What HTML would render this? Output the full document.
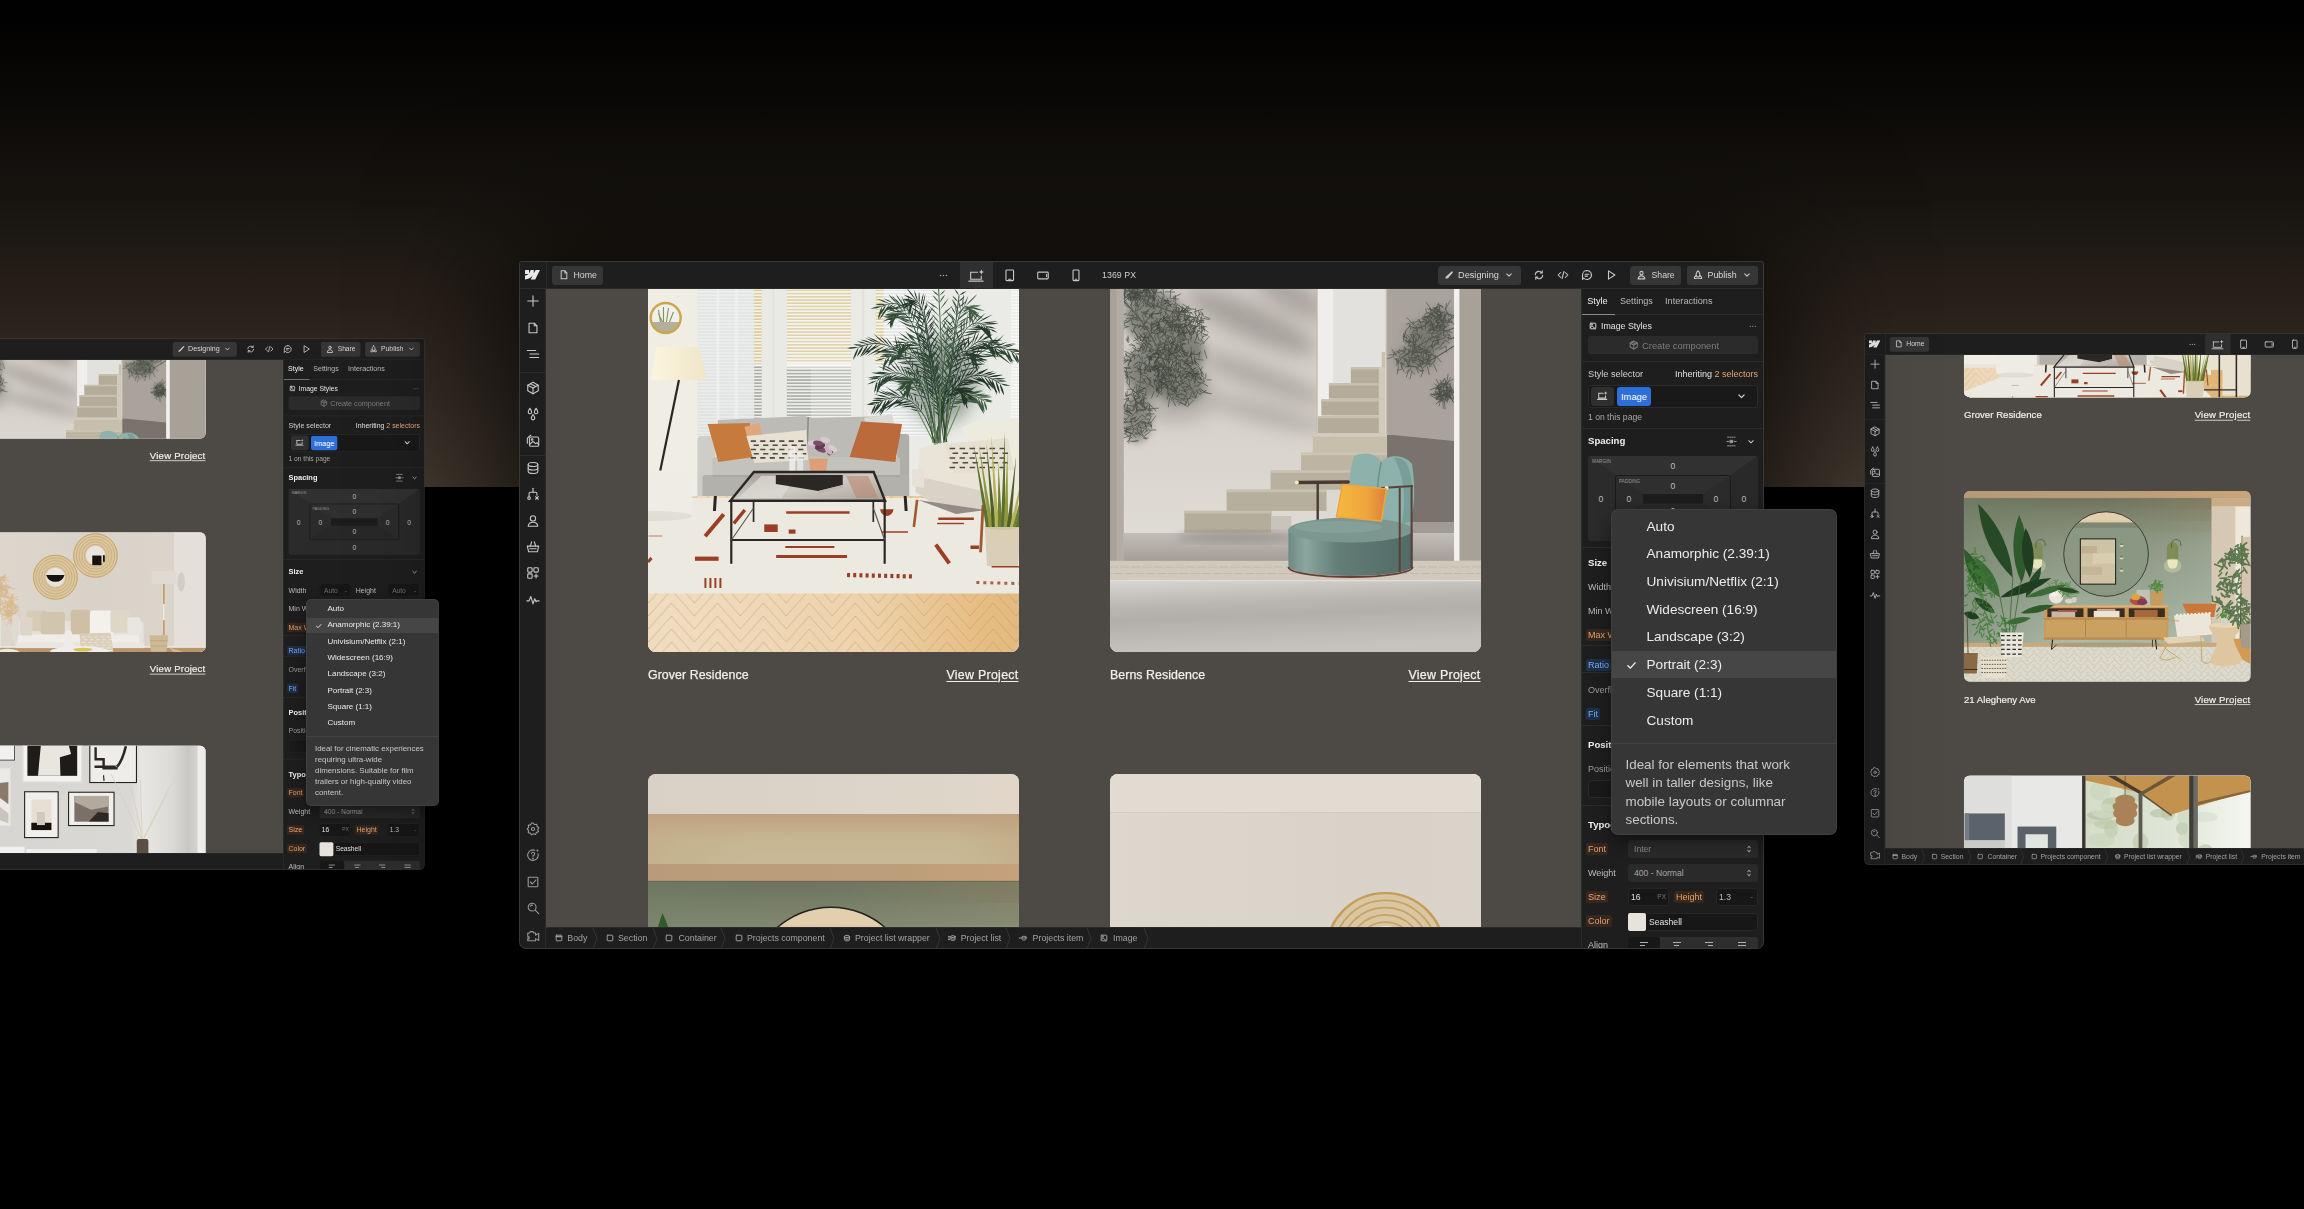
<!DOCTYPE html><html lang="en"><head><meta charset="utf-8"><title>Webflow Designer - Aspect ratio</title><style>
*{box-sizing:border-box;margin:0;padding:0}
html,body{width:2304px;height:1209px;overflow:hidden;background:#000}
body{position:relative;font-family:"Liberation Sans",sans-serif;color:#d9d9d9;-webkit-font-smoothing:antialiased}
.bg{position:absolute;left:0;top:0;width:2304px;height:487px;background:linear-gradient(180deg,#000 0%,#050403 10%,#0b0907 20.5%,#171410 41%,#272019 61.6%,#352d25 82%,#43392e 100%)}
.win{position:absolute;width:1243.4px;height:685.6px;background:#1e1e1e;border-radius:2px 2px 6px 6px;transform-origin:0 0;box-shadow:0 0 0 1px #383838}
.win.m{box-shadow:0 0 0 1px #383838,0 0 130px 24px rgba(0,0,0,.72)}
.clip{position:absolute;left:0;top:0;width:1243.4px;height:685.6px;border-radius:2px 2px 6px 6px;overflow:hidden}
.abs{position:absolute}
.top{position:absolute;left:0;top:0;width:1244px;height:27px;background:#1e1e1e;border-bottom:1px solid #2b2b2b}
.side{position:absolute;left:0;top:27px;width:26px;height:659px;background:#1e1e1e;border-right:1px solid #2b2b2b}
.canvas{position:absolute;left:26px;top:27px;width:1036px;height:638px;background:#4d4a46;overflow:hidden}
.crumbs{position:absolute;left:26px;top:665px;width:1036px;height:21px;background:#1e1e1e;border-top:1px solid #2b2b2b;font-size:9px;color:#a3a3a3;white-space:nowrap}
.panel{position:absolute;left:1061px;top:27px;width:183px;height:659px;background:#1e1e1e;border-left:1px solid #2b2b2b;overflow:hidden;font-size:9px}
.ic{position:absolute;stroke:#c8c8c8;fill:none;stroke-width:1.1;stroke-linecap:round;stroke-linejoin:round;overflow:visible}
.btn{position:absolute;background:#363636;border-radius:3px;height:18.5px;top:4px;font-size:9.2px;color:#d6d6d6;line-height:18px;white-space:nowrap}
.t{position:absolute;white-space:nowrap;line-height:1}
.photo{position:absolute;overflow:hidden;border-radius:8px;background:#ccc}
.photo svg{position:absolute;left:0;top:0;width:100%;height:100%;display:block}
.cap{position:absolute;font-size:12.4px;color:#f3efe9;white-space:nowrap;line-height:14px;-webkit-text-stroke:.25px #f3efe9;letter-spacing:.05px}
.cap.r{text-decoration:underline;text-underline-offset:1.5px;text-align:right;letter-spacing:.28px}
.hr{position:absolute;left:0;width:182px;height:1px;background:#2b2b2b}
.lbl{position:absolute;left:6px;color:#bdbdbd;white-space:nowrap;line-height:12px;font-size:9px}
.lbl.o{color:#e3a071;background:#36271d;border-radius:2px;padding:0 2px;margin-left:-2px}
.lbl.b{color:#7aaaf2;background:#1d2f49;border-radius:2px;padding:0 2px;margin-left:-2px}
.sec{position:absolute;left:6px;font-weight:700;color:#f0f0f0;font-size:9.6px;line-height:12px;white-space:nowrap}
.fld{position:absolute;background:#2a2a2a;border-radius:3px;height:18px;color:#8d8d8d;line-height:18px;font-size:8.6px;padding-left:6px;white-space:nowrap}
.fld.d{background:#171717;color:#e2e2e2;box-shadow:inset 0 0 0 1px #262626}
.dd{position:absolute;background:#363636;box-shadow:0 0 0 1px #3f3f3f,0 6px 18px rgba(0,0,0,.45);overflow:hidden;color:#ececec}
.dd .it{position:absolute;left:0;width:100%;white-space:nowrap}
.dd .hl{position:absolute;left:0;width:100%;background:#464646}
.dd .ds{position:absolute;color:#c9c9c9;white-space:nowrap}
.dd .ln{position:absolute;left:0;width:100%;height:1px;background:#424242}
.num{position:absolute;color:#bfbfbf;font-size:8.6px;line-height:10px;width:20px;text-align:center}
</style></head><body><div class="bg"></div><div class="win" style="left:-537.0px;top:339.2px;transform:scale(0.773)"><div class="clip"><div class="canvas"><div class="photo" style="left:564px;top:-53.29999999999998px;width:370.5px;height:155px;"><svg viewBox="0.00 186.35 438.00 183.30" preserveAspectRatio="none"><defs><linearGradient id="p1_stW" x1="0" y1="0" x2="0" y2="1"><stop offset="0" stop-color="#cbc6bf"/><stop offset=".45" stop-color="#d2cdc6"/><stop offset=".8" stop-color="#dfdbd5"/><stop offset="1" stop-color="#dcd8d2"/></linearGradient><linearGradient id="p1_stC" x1="0" y1="0" x2=".25" y2="1"><stop offset="0" stop-color="#d9d7d4"/><stop offset=".38" stop-color="#b9b5b1"/><stop offset=".55" stop-color="#b2aeaa"/><stop offset="1" stop-color="#c6c3bf"/></linearGradient><linearGradient id="p1_stF" x1="0" y1="0" x2="0" y2="1"><stop offset="0" stop-color="#c2beb8"/><stop offset="1" stop-color="#a39d97"/></linearGradient><linearGradient id="p1_stY" x1="0" y1="0" x2="1" y2="0"><stop offset="0" stop-color="#f4b83f"/><stop offset=".6" stop-color="#efa53c"/><stop offset="1" stop-color="#dc7f3a"/></linearGradient><linearGradient id="p1_stSe" x1="0" y1="0" x2="1" y2="0"><stop offset="0" stop-color="#6f8a84"/><stop offset=".14" stop-color="#8aa69f"/><stop offset=".4" stop-color="#637d77"/><stop offset="1" stop-color="#536a65"/></linearGradient><filter id="p1_stB" x="-30%" y="-30%" width="160%" height="160%"><feGaussianBlur stdDeviation="9"/></filter><filter id="p1_stB2" x="-30%" y="-30%" width="160%" height="160%"><feGaussianBlur stdDeviation="4"/></filter></defs><rect x="0.0" y="0.0" width="438.0" height="556.0" fill="url(#p1_stW)" /><g filter="url(#p1_stB)" opacity=".55"><ellipse cx="175.0" cy="226.0" rx="70.0" ry="16.0" fill="#85807a" transform="rotate(24 175 226)"/><ellipse cx="215.0" cy="200.0" rx="40.0" ry="14.0" fill="#8a857f" transform="rotate(30 215 200)"/><ellipse cx="185.0" cy="282.0" rx="70.0" ry="11.0" fill="#8f8a84" transform="rotate(20 185 282)"/><ellipse cx="190.0" cy="318.0" rx="65.0" ry="9.0" fill="#948f89" transform="rotate(14 190 318)"/><ellipse cx="100.0" cy="300.0" rx="40.0" ry="26.0" fill="#9a958f" /></g><g filter="url(#p1_stB2)" opacity=".62"><ellipse cx="78.0" cy="222.0" rx="30.0" ry="26.0" fill="#555a50" /><ellipse cx="96.0" cy="255.0" rx="32.0" ry="30.0" fill="#4f544a" /><ellipse cx="72.0" cy="275.0" rx="24.0" ry="26.0" fill="#555a50" /><ellipse cx="104.0" cy="288.0" rx="24.0" ry="20.0" fill="#555a50" /><ellipse cx="60.0" cy="322.0" rx="15.0" ry="24.0" fill="#5a5f55" /><ellipse cx="64.0" cy="197.0" rx="18.0" ry="9.0" fill="#5a5f55" /></g><path d="M76.8 235.6 l-4.5 4.8 M69.2 209.9 l8.0 0.7 M74.1 228.5 l5.8 -0.2 M86.4 198.5 l-2.5 -3.0 M55.3 195.4 l-7.4 -1.1 M71.2 208.8 l0.3 -6.5 M73.2 219.7 l3.9 -4.4 M69.2 189.3 l-1.9 -8.3 M52.4 230.4 l-8.1 2.9 M82.2 209.0 l2.8 3.2 M95.6 211.0 l-3.4 -3.4 M55.1 214.2 l-3.9 5.2 M48.7 201.6 l-3.6 -7.8 M94.7 193.1 l-1.9 -3.5 M95.1 193.9 l5.3 -3.6 M71.7 202.5 l3.2 -5.6 M73.2 221.9 l5.4 -7.1 M99.3 228.2 l-3.3 2.1 M67.4 238.6 l2.3 -2.3 M69.9 211.1 l-1.0 -4.9 M98.2 196.1 l-9.0 -0.3 M71.7 222.2 l-2.6 -1.9 M81.6 231.9 l-3.0 -2.5 M103.8 221.9 l-3.4 8.1 M90.7 204.6 l-5.9 1.5 M59.7 198.0 l-6.3 -2.4 M96.2 207.7 l-6.6 3.1 M76.4 230.3 l6.1 -0.9 M71.7 214.1 l-5.6 3.3 M99.9 217.8 l-2.3 -2.5 M59.8 201.3 l-2.2 -4.6 M67.7 191.8 l3.3 0.5 M60.9 190.4 l-0.0 5.7 M59.9 206.3 l-3.2 3.7 M58.2 230.8 l-1.6 5.0 M75.7 210.5 l-6.7 -3.1 M69.4 227.3 l1.5 -4.2 M83.1 232.1 l-1.2 -3.4 M66.9 229.6 l2.8 -4.9 M83.1 205.9 l-3.6 5.9 M91.1 202.6 l0.6 3.7 M61.3 212.7 l2.8 -7.5 M81.8 228.5 l2.4 -6.4 M81.5 199.6 l3.3 3.5 M79.5 201.0 l-3.1 4.5 M57.1 223.7 l3.5 -1.9 M106.1 215.8 l6.5 -6.1 M46.4 225.9 l3.9 -1.9 M74.2 189.4 l-3.2 -5.2 M70.5 230.9 l0.5 3.4 M60.4 207.1 l1.2 -3.0 M96.9 201.7 l7.4 -3.9 M94.6 202.5 l7.4 0.6 M83.3 228.5 l-3.2 -5.3 M48.4 229.0 l-3.8 -3.3 M74.5 241.0 l-7.6 1.1 M66.5 225.0 l-7.7 -1.7 M88.5 236.9 l6.9 -3.7 M76.2 212.8 l-5.6 -5.9 M90.9 219.5 l-0.7 6.1 M55.5 224.0 l0.5 -3.0 M85.7 218.4 l2.4 2.4 M104.2 210.9 l5.2 3.1 M67.8 229.4 l-4.1 5.5 M58.6 206.3 l1.8 4.6 M92.0 229.6 l-1.1 -5.2 M86.9 220.7 l-4.6 4.7 M79.0 198.1 l2.1 -6.4 M57.2 222.1 l-7.2 0.2 M51.6 226.2 l-4.3 1.1 M49.0 209.8 l5.0 2.4 M48.2 226.8 l4.8 -2.0 M97.8 200.1 l-0.4 5.8 M95.6 232.6 l-4.4 -7.1 M81.9 192.9 l-0.7 -6.3 M94.6 228.0 l3.9 0.1 M76.0 209.2 l3.0 2.0 M84.9 206.9 l8.0 1.2 M96.3 232.8 l-3.7 -7.1 M98.3 208.7 l1.0 -3.1 M77.5 195.1 l-0.8 -3.6 M74.8 187.9 l4.6 1.9 M48.2 205.0 l0.2 4.1 M75.0 237.0 l0.1 -5.4 M61.4 228.0 l-3.2 4.5 M94.6 224.9 l5.4 -0.9 M74.8 203.8 l-2.7 -7.0 M64.4 197.1 l-6.8 0.7 M84.9 208.5 l6.2 4.2 M94.9 204.9 l-6.9 2.6 M81.5 228.3 l2.0 6.2 M68.9 227.4 l-3.2 -8.1 M67.4 237.5 l-6.9 4.2 M60.7 207.7 l0.6 3.1 M55.4 217.2 l2.4 4.6 M62.7 237.2 l5.5 7.0 M50.4 217.8 l-7.8 1.6 M85.4 196.2 l-7.3 0.9 M87.6 201.1 l-0.9 -8.7 M60.0 217.7 l0.7 7.3 M60.8 190.5 l2.7 -3.5 M81.0 228.2 l2.8 6.7 M94.1 194.4 l-0.3 8.2 M66.9 231.8 l-0.5 -3.5 M99.4 229.1 l-1.3 5.0 M52.0 203.9 l5.0 0.2 M54.5 222.6 l1.6 6.3 M94.2 210.2 l-3.6 -1.0 M71.0 237.6 l6.3 5.4 M83.4 210.3 l4.9 -1.9 M78.9 190.9 l-2.0 6.8 M58.7 194.3 l-0.7 7.5 M100.5 209.5 l-3.6 -0.8 M56.0 215.6 l-1.4 -6.9 M62.5 210.2 l-4.1 -5.4 M88.0 238.8 l-2.1 -3.1 M85.9 210.6 l-3.6 6.4 M55.5 203.0 l-3.5 -4.6 M69.9 225.9 l6.6 3.0 M75.7 194.4 l-0.3 -5.1 M73.0 232.3 l2.3 -2.3 M59.1 214.6 l0.6 -5.1 M64.9 230.4 l-7.4 -2.0 M57.3 235.6 l3.5 3.0 M83.7 220.5 l1.3 -7.2 M80.5 226.2 l-6.5 3.7 M86.1 192.8 l-3.2 -2.1 M63.7 222.3 l-6.3 -1.1 M79.7 228.4 l0.6 -3.1 M84.9 190.0 l5.0 -1.7 M51.9 208.1 l-5.9 -6.6 M68.2 200.9 l3.8 -4.5 M53.1 200.8 l7.6 0.1 M63.2 198.3 l-5.7 -0.9 M83.1 234.1 l5.8 1.4 M62.0 200.2 l-8.0 -3.5 M84.2 208.5 l1.8 -6.5 M93.2 220.3 l0.4 3.4 M45.1 208.5 l-3.6 7.4 M71.0 205.4 l4.2 -5.1 M99.3 204.5 l-0.3 -5.1 M85.8 189.7 l3.6 -4.3 M76.0 195.5 l2.5 2.1 M87.6 220.9 l3.2 5.1 M67.6 195.5 l-6.1 3.2 M67.7 233.0 l0.2 -5.4 M87.8 239.1 l-1.0 -5.1 M59.0 229.8 l-3.6 -2.5 M89.6 215.2 l0.8 -3.8 M61.3 218.1 l1.0 3.9 M83.5 257.0 l3.6 0.6 M106.7 268.3 l2.9 1.1 M74.4 256.1 l-1.0 -3.2 M77.4 260.8 l8.7 1.5 M97.0 259.0 l-3.9 0.6 M80.6 237.7 l2.4 2.3 M92.5 234.4 l1.4 -5.6 M112.0 243.3 l0.0 4.6 M105.7 228.1 l-2.0 2.9 M81.2 223.1 l-2.5 -1.7 M105.0 251.7 l1.5 2.8 M120.9 258.1 l3.4 -2.5 M118.2 246.6 l2.8 -8.0 M100.8 248.0 l-2.2 6.3 M104.5 247.1 l-2.2 7.8 M111.0 262.4 l-3.6 6.1 M107.8 244.6 l-0.5 -7.4 M108.0 230.8 l4.6 -2.4 M81.0 257.3 l1.1 -5.8 M93.3 262.3 l-1.2 -6.5 M89.8 231.9 l-3.9 0.3 M93.7 245.6 l-7.4 1.6 M90.3 241.6 l0.6 8.0 M75.1 228.1 l4.0 -4.1 M118.2 234.5 l-2.6 4.5 M114.3 258.3 l3.5 -1.0 M84.8 245.8 l6.0 3.4 M95.4 256.6 l3.9 5.6 M91.8 248.3 l1.1 8.7 M99.8 272.1 l-6.7 3.7 M71.1 233.8 l-4.0 -0.9 M99.2 257.6 l1.7 -3.3 M128.0 254.4 l2.6 7.9 M114.9 260.5 l1.4 7.9 M74.6 234.1 l0.6 -8.2 M80.0 269.2 l-3.5 1.2 M108.4 230.1 l1.7 -3.9 M72.5 245.0 l-0.5 -3.4 M81.6 267.2 l5.7 2.7 M93.0 230.6 l-4.0 -5.3 M99.5 267.3 l5.0 -0.1 M86.1 253.7 l0.8 3.9 M121.3 239.2 l6.3 -6.3 M70.0 231.2 l-5.4 -1.2 M125.6 240.9 l5.6 -1.8 M98.2 231.1 l8.5 -0.1 M86.4 278.0 l1.4 3.3 M91.8 234.0 l-6.8 -0.8 M123.4 256.5 l-0.9 5.5 M78.6 271.4 l-0.1 -4.7 M109.8 259.9 l-2.9 1.8 M112.0 271.5 l-2.7 -8.4 M126.6 246.4 l-2.8 2.8 M86.2 268.9 l-6.2 -1.0 M75.0 271.4 l-1.3 5.6 M118.1 232.4 l-1.3 4.3 M96.2 247.2 l4.2 4.5 M81.5 247.3 l4.0 1.3 M97.9 229.7 l7.6 -1.0 M101.3 249.3 l1.2 2.8 M77.0 257.2 l6.0 2.0 M110.8 259.3 l0.1 7.8 M79.9 257.5 l5.4 1.5 M75.6 232.3 l6.7 -4.1 M95.2 261.0 l0.4 -7.7 M64.1 248.5 l-4.4 -1.5 M97.2 253.4 l-5.2 -6.6 M114.3 238.6 l-4.3 -7.4 M105.3 228.6 l-5.2 3.1 M101.9 261.3 l-3.6 -8.2 M74.2 244.4 l-3.4 4.6 M102.5 230.9 l3.8 -1.0 M85.3 269.9 l-6.9 4.3 M110.4 224.4 l-2.4 -2.1 M72.5 240.0 l-4.7 0.4 M86.8 222.3 l5.6 4.2 M78.2 265.6 l6.9 -5.3 M85.7 239.6 l3.6 -2.0 M72.0 268.3 l-1.9 4.2 M126.4 241.0 l-2.2 4.9 M92.5 260.7 l-0.0 8.9 M109.3 256.9 l1.1 3.3 M66.1 245.8 l3.6 -5.8 M96.0 248.0 l-1.8 8.6 M110.9 256.6 l-4.6 0.5 M87.9 248.1 l0.8 8.7 M115.0 272.5 l3.9 8.1 M82.5 228.5 l2.1 2.6 M95.8 237.4 l2.9 7.4 M100.3 245.3 l6.0 -1.5 M86.8 256.6 l-6.9 5.7 M92.6 260.7 l2.3 3.0 M75.5 273.0 l3.7 1.9 M126.5 238.9 l4.4 -0.6 M74.8 273.2 l-7.2 0.7 M93.1 254.0 l-4.2 6.2 M100.1 227.8 l-6.1 1.4 M71.8 257.8 l2.1 -3.6 M67.8 233.8 l2.4 -3.3 M125.3 243.7 l2.3 4.0 M97.3 256.6 l5.4 -0.7 M103.0 242.7 l8.2 0.7 M104.2 221.3 l-2.4 -5.7 M96.0 240.9 l-5.5 -1.4 M111.0 268.5 l-2.7 5.4 M81.6 262.1 l-4.2 5.1 M127.7 246.5 l5.2 -6.1 M87.3 278.9 l-0.5 3.7 M65.9 249.9 l-3.7 5.8 M88.2 278.9 l-5.6 1.7 M63.8 244.5 l6.1 -0.5 M70.1 258.5 l5.0 2.3 M112.2 228.4 l7.6 3.0 M69.9 269.8 l-2.9 3.2 M64.5 241.5 l-7.4 3.4 M90.1 232.5 l-1.9 5.7 M78.3 260.9 l-4.8 -6.7 M83.8 244.2 l1.0 5.1 M85.5 242.6 l4.3 2.4 M93.8 255.0 l-8.3 -2.1 M66.5 244.5 l3.8 -7.1 M114.3 239.6 l-1.5 -3.4 M110.2 237.4 l-8.2 1.3 M91.6 262.7 l2.9 -5.9 M99.9 252.6 l-1.8 2.4 M102.2 238.8 l-0.8 5.3 M72.7 248.5 l-4.8 -5.0 M85.2 253.6 l7.1 -0.9 M114.6 260.0 l0.2 -8.9 M98.0 251.2 l-5.5 0.7 M119.4 233.2 l-2.7 4.8 M67.3 236.0 l1.6 5.1 M118.1 262.7 l8.5 1.4 M69.5 246.6 l3.8 2.2 M64.1 255.4 l-4.6 -1.1 M122.5 247.3 l-4.1 -0.7 M85.3 277.1 l4.2 4.6 M80.2 237.8 l1.0 -8.4 M113.3 229.9 l1.0 3.2 M77.7 256.9 l2.8 7.7 M101.5 276.6 l3.4 -1.4 M113.3 240.2 l1.0 4.0 M118.3 255.0 l-6.1 5.4 M99.0 243.8 l-4.3 3.1 M102.5 263.5 l-0.6 7.1 M88.9 258.4 l1.0 5.6 M79.5 244.1 l-1.3 -4.1 M82.3 229.4 l3.4 6.7 M75.3 263.6 l-5.5 -3.9 M87.5 252.5 l1.9 -7.9 M50.3 271.3 l-1.0 8.3 M65.2 257.9 l3.7 -8.1 M55.3 293.0 l-4.0 0.4 M66.9 254.1 l-0.7 -6.5 M84.7 282.7 l3.5 -4.7 M46.6 263.6 l-5.6 2.0 M49.5 257.4 l1.0 3.4 M71.4 249.2 l-2.7 7.9 M84.3 256.3 l8.0 -0.6 M69.8 254.9 l7.1 0.5 M68.6 253.5 l-6.3 0.9 M70.0 293.4 l-4.9 -2.0 M84.9 283.2 l-3.1 6.7 M77.6 285.5 l1.8 5.1 M62.5 265.8 l5.5 2.0 M75.5 289.0 l1.8 3.1 M45.7 263.7 l4.1 -4.5 M64.7 274.3 l-0.8 4.8 M78.3 266.6 l5.5 -1.9 M57.8 275.8 l4.0 -1.0 M53.3 261.3 l1.4 4.1 M93.0 267.7 l-0.9 -8.4 M87.8 283.6 l0.0 -4.4 M45.3 277.4 l-3.5 6.7 M80.8 289.7 l-0.7 6.0 M53.1 288.8 l-0.2 -6.0 M63.5 253.1 l1.5 -4.3 M50.9 264.1 l-2.5 2.1 M80.0 289.6 l1.8 7.3 M44.6 269.2 l4.2 -6.0 M66.2 274.2 l-7.0 -2.6 M80.3 264.0 l4.8 7.5 M68.8 250.6 l-0.3 -3.9 M49.5 263.7 l-3.2 -2.4 M83.4 286.8 l2.9 -2.5 M77.5 270.4 l1.2 -5.2 M45.1 277.7 l-3.5 -2.9 M69.6 268.8 l-1.4 7.1 M72.2 274.4 l-4.9 -0.6 M78.2 268.4 l1.7 -5.0 M75.9 252.4 l-2.5 -4.3 M72.8 288.6 l1.6 -4.8 M72.1 287.9 l4.0 2.8 M52.8 260.9 l-3.9 -2.7 M74.2 270.7 l-2.2 3.5 M57.8 263.9 l0.5 -6.6 M58.3 249.5 l-5.5 -0.8 M67.7 276.6 l1.7 -5.8 M90.3 285.8 l-5.9 -3.3 M61.4 273.7 l4.0 -0.0 M52.7 290.9 l4.3 4.2 M57.2 271.8 l4.9 -2.5 M87.8 271.4 l7.2 0.2 M86.8 250.5 l6.7 2.1 M64.0 288.1 l-1.5 4.6 M83.8 286.4 l7.5 4.6 M94.6 277.5 l1.3 3.3 M69.4 249.6 l0.7 -6.0 M64.9 264.1 l-2.8 -5.4 M72.0 269.5 l6.4 2.9 M85.1 261.9 l-1.5 -6.2 M56.3 282.1 l-2.5 -1.9 M62.4 292.6 l-0.3 5.8 M69.3 286.7 l-4.4 -6.1 M87.3 264.8 l1.5 4.8 M81.9 274.9 l-5.7 -3.4 M70.6 281.9 l3.3 2.4 M56.9 269.9 l4.8 -4.3 M60.8 285.5 l7.2 1.8 M70.1 253.1 l-0.7 -4.6 M72.4 283.1 l2.2 6.3 M56.1 251.4 l6.0 4.6 M54.2 272.3 l-5.6 -0.1 M75.0 286.7 l-4.4 -5.8 M79.9 263.7 l6.0 -4.9 M64.1 243.0 l5.0 5.8 M77.3 264.2 l-7.2 -4.9 M63.6 295.0 l4.7 -3.1 M77.4 280.3 l2.7 -4.9 M63.1 287.1 l4.1 -2.0 M95.2 273.1 l-2.2 4.9 M83.6 267.8 l7.1 4.3 M70.5 283.2 l4.0 -1.7 M82.2 260.6 l-1.4 4.1 M51.2 264.5 l-4.9 3.6 M62.9 294.5 l6.9 -3.0 M72.9 263.3 l-0.0 4.2 M84.4 292.8 l7.0 -4.8 M61.7 266.6 l-3.0 1.5 M81.1 261.9 l-2.1 8.4 M77.6 295.6 l-2.6 6.5 M89.3 286.5 l-4.1 3.0 M58.7 252.2 l-0.0 3.7 M66.4 268.0 l3.5 -3.7 M77.2 284.0 l3.7 3.2 M54.0 265.2 l-2.4 4.1 M47.1 272.1 l-7.0 2.9 M61.0 271.1 l3.9 7.1 M54.1 272.2 l-8.0 -0.8 M58.9 281.9 l-2.0 2.3 M52.7 264.6 l-5.7 0.2 M48.3 274.1 l3.5 8.2 M88.2 287.2 l3.5 6.9 M69.5 277.8 l-7.8 -2.0 M83.7 248.4 l3.3 -0.4 M63.8 276.3 l0.2 -5.7 M69.1 245.0 l7.1 -0.0 M83.6 255.4 l7.3 4.1 M76.4 274.4 l2.3 -4.1 M67.7 266.0 l1.8 7.1 M88.1 274.7 l4.0 -1.6 M63.7 246.8 l-5.5 -5.2 M69.0 266.8 l2.2 5.8 M81.9 267.5 l-3.2 -2.0 M79.9 254.7 l-6.9 -1.0 M84.5 288.1 l2.5 -7.8 M67.5 283.3 l4.3 7.2 M55.0 276.6 l-7.1 -0.9 M63.7 284.8 l0.8 -7.6 M68.0 277.3 l6.6 -3.2 M56.3 260.1 l5.4 -1.4 M71.7 278.7 l-3.9 5.3 M53.3 290.5 l-3.4 -4.6 M59.2 251.6 l-4.4 -4.0 M52.0 267.2 l2.0 -3.6 M73.1 255.1 l2.0 -2.8 M52.8 271.8 l-1.0 -4.1 M69.3 280.2 l-6.0 -2.4 M81.0 270.0 l2.7 8.3 M51.2 275.9 l-1.7 6.7 M78.2 248.8 l5.6 0.1 M64.5 270.4 l1.2 -4.8 M64.5 291.3 l-5.1 -3.0 M81.9 254.4 l-1.9 2.8 M55.2 264.5 l-5.0 -1.2 M75.1 270.2 l1.9 3.0 M81.8 252.8 l0.5 7.2 M65.7 264.8 l0.0 -4.4 M79.8 269.8 l-1.0 4.4 M85.2 250.7 l-3.4 -1.9 M50.4 280.2 l8.0 3.0 M83.6 247.3 l-2.1 -6.4 M83.3 267.7 l-1.3 3.5 M79.8 292.7 l6.2 4.2 M50.6 285.9 l0.4 -7.1 M73.0 265.2 l-0.5 5.2 M50.8 279.8 l5.4 -5.1 M89.5 259.9 l-3.8 4.7 M69.8 244.7 l-3.5 3.7 M60.7 261.2 l2.2 -2.0 M94.2 272.7 l2.2 6.0 M79.8 288.5 l4.9 -4.3 M121.9 270.0 l4.0 6.9 M117.9 266.0 l0.3 -5.3 M110.7 302.1 l1.8 7.3 M83.9 276.0 l-3.0 3.8 M122.5 274.9 l-4.6 4.4 M85.8 292.0 l-4.7 -0.5 M129.3 282.4 l0.3 -4.7 M112.6 302.7 l3.0 -6.2 M110.0 303.2 l-5.2 -0.8 M90.2 277.2 l-4.5 -6.0 M113.6 284.2 l-7.8 -3.7 M94.1 271.0 l1.9 -2.5 M110.4 268.3 l-4.2 -2.5 M98.3 279.7 l-4.5 -0.7 M126.2 276.8 l-7.4 1.3 M90.9 295.5 l4.3 6.9 M107.0 265.9 l6.9 4.0 M124.5 286.2 l-3.3 0.3 M83.4 294.8 l-3.5 -3.4 M111.1 272.9 l4.3 -3.3 M127.6 295.2 l4.1 2.0 M106.2 277.6 l-7.8 -2.2 M92.0 278.0 l0.4 -7.9 M86.9 276.7 l-2.4 4.9 M130.6 283.9 l4.2 0.0 M108.6 304.4 l1.2 3.8 M106.1 276.0 l5.7 -0.8 M123.9 273.1 l2.1 7.4 M94.5 290.3 l6.9 2.1 M91.7 280.5 l2.1 -3.6 M97.8 287.2 l-4.9 6.7 M94.8 285.0 l0.6 6.8 M100.8 305.4 l7.6 3.1 M88.0 271.2 l-2.1 2.7 M114.7 300.4 l3.6 0.6 M109.9 264.8 l5.0 -6.3 M82.1 278.0 l-2.1 -6.0 M101.4 286.5 l3.8 2.4 M96.2 286.9 l6.3 -1.2 M103.5 264.3 l1.2 8.2 M118.0 282.0 l5.5 5.5 M122.9 272.4 l-5.5 3.6 M114.5 292.0 l-6.5 3.6 M126.3 296.2 l8.7 1.6 M106.9 304.8 l3.6 -7.9 M83.6 288.4 l-2.1 7.7 M123.9 298.1 l-2.8 -1.8 M118.6 280.5 l4.1 1.9 M118.6 287.0 l-2.2 -8.6 M88.7 270.1 l3.2 -6.5 M95.2 292.3 l3.5 5.2 M111.4 303.1 l-2.8 5.9 M85.3 280.0 l2.5 3.8 M100.5 275.6 l-4.2 -7.7 M85.4 298.8 l-6.5 -5.7 M82.7 281.9 l-1.7 -3.8 M85.3 283.1 l-6.8 1.6 M124.5 274.4 l1.5 -3.6 M99.0 268.3 l2.8 -1.1 M117.0 304.2 l-5.0 5.2 M91.2 277.4 l-5.9 2.4 M123.9 283.5 l1.2 -4.7 M100.2 268.4 l-0.3 -8.3 M127.4 295.4 l-3.5 -2.9 M97.1 286.5 l0.9 8.0 M99.1 265.1 l1.9 3.1 M91.7 295.6 l-1.2 -4.6 M103.4 268.2 l-1.9 7.5 M122.9 292.6 l1.2 3.0 M86.4 287.2 l-4.0 -3.4 M125.8 276.7 l1.7 2.5 M121.2 281.5 l3.2 2.5 M101.6 276.2 l-4.9 5.1 M92.4 299.2 l7.4 -2.5 M90.8 272.4 l-2.5 6.4 M93.2 271.4 l-7.5 0.4 M111.2 302.8 l3.2 -0.4 M104.7 306.8 l6.9 3.9 M99.0 282.2 l-2.1 -2.2 M113.4 275.2 l7.4 -3.9 M115.8 295.6 l4.3 6.2 M110.8 288.4 l6.1 5.4 M105.3 297.5 l-6.0 2.1 M83.4 296.1 l-3.2 4.9 M113.3 276.7 l3.7 7.1 M95.1 304.0 l2.3 -4.7 M100.9 291.1 l4.0 -4.0 M99.0 292.7 l1.2 8.1 M118.2 297.0 l-4.3 -4.3 M88.6 284.8 l2.8 7.4 M120.6 275.0 l-0.1 8.5 M108.2 293.7 l-5.6 -5.7 M97.3 281.8 l3.9 -0.5 M90.7 303.2 l2.0 -7.3 M126.3 294.3 l-2.5 1.8 M111.1 264.4 l5.5 1.7 M117.2 277.6 l-2.5 7.3 M80.8 292.9 l5.0 -6.4 M101.9 275.6 l-2.5 -6.0 M85.5 286.8 l-1.4 3.9 M118.4 278.0 l7.0 5.5 M83.7 283.8 l-2.1 3.3 M93.2 302.5 l-1.3 8.4 M96.7 304.6 l2.4 5.1 M111.9 291.1 l-5.1 -0.7 M93.2 282.6 l-1.8 4.6 M110.9 281.3 l-7.0 4.1 M93.2 280.1 l3.6 -0.1 M107.2 287.2 l-7.6 3.0 M102.2 296.5 l1.0 -3.3 M126.1 287.0 l5.2 3.2 M117.4 298.5 l3.4 -4.6 M102.0 302.2 l-1.0 -3.2 M106.0 298.5 l-4.6 -0.2 M97.8 275.7 l4.2 -2.9 M106.3 291.1 l3.0 3.1 M117.4 275.5 l-8.2 3.1 M127.3 281.0 l0.3 5.0 M91.8 284.6 l-2.4 3.5 M106.2 304.0 l-4.5 -3.4 M85.0 288.1 l-1.3 -2.9 M114.8 272.5 l-4.8 7.3 M105.6 272.0 l5.6 0.9 M90.2 290.0 l5.3 3.7 M104.3 304.2 l-4.7 -0.8 M113.0 271.9 l4.0 2.4 M121.1 289.7 l7.3 -4.7 M99.1 277.9 l0.3 4.2 M90.5 297.6 l5.9 0.8 M86.1 293.1 l2.5 -4.8 M94.2 278.1 l-6.5 1.9 M122.6 290.1 l-4.1 -0.1 M105.2 305.0 l-2.4 3.4 M100.9 300.5 l-4.1 3.0 M99.7 294.2 l-6.6 -0.2 M121.9 294.0 l-3.1 8.3 M113.7 282.0 l-1.7 -4.8 M123.6 298.2 l6.5 -4.2 M88.2 268.5 l-6.6 -2.4 M91.2 268.3 l3.0 -3.8 M110.0 300.7 l-4.3 -2.7 M120.3 269.4 l-2.4 -5.7 M101.1 275.8 l1.3 -3.5 M121.9 275.1 l-0.7 4.1 M90.7 276.2 l-1.2 -3.4 M117.1 274.8 l-6.9 2.7 M91.4 275.9 l-1.5 5.6 M117.9 287.2 l1.7 -3.3 M72.6 332.3 l-4.3 4.4 M48.4 308.5 l-3.2 6.9 M74.7 320.1 l-2.5 6.3 M55.4 341.2 l-4.7 4.6 M53.7 341.4 l0.7 -4.1 M60.6 294.8 l0.3 4.1 M74.3 309.3 l5.2 5.6 M67.4 314.3 l0.9 -4.7 M62.6 302.0 l-3.7 0.6 M52.3 302.2 l-0.8 3.2 M66.9 327.1 l7.5 -0.2 M71.0 306.3 l3.5 4.0 M74.0 312.6 l7.9 -0.4 M56.6 298.0 l4.8 -2.8 M68.7 323.0 l4.6 0.4 M52.9 312.7 l0.0 3.6 M52.8 334.5 l-7.3 -4.7 M67.3 325.6 l7.6 4.0 M51.2 304.5 l1.2 -2.8 M67.6 311.4 l-3.7 -3.9 M59.8 305.7 l-0.8 4.4 M58.3 302.7 l2.9 4.3 M51.1 313.4 l-6.7 -4.4 M50.9 302.1 l-2.7 7.8 M70.8 313.1 l3.5 0.5 M60.7 295.8 l-1.0 -6.0 M54.7 317.8 l-7.3 -5.2 M63.4 339.5 l4.1 -5.6 M55.4 330.2 l-0.9 -8.5 M67.3 308.6 l-0.3 -7.9 M50.1 335.9 l-3.2 2.8 M73.6 320.1 l0.1 -3.3 M68.4 325.6 l1.9 7.1 M64.5 338.5 l-4.8 -1.6 M66.5 306.4 l-7.0 -0.5 M54.3 326.3 l7.2 -2.2 M49.2 314.8 l-3.5 -3.2 M70.6 328.5 l2.9 -2.1 M69.7 318.1 l7.6 -0.1 M59.0 331.9 l6.8 -5.7 M64.1 301.3 l-7.4 -2.1 M66.4 298.7 l-1.9 7.7 M71.6 314.3 l4.1 0.2 M53.9 306.2 l6.0 -3.4 M58.1 310.4 l-7.2 -1.1 M73.2 307.7 l-0.5 6.0 M64.8 319.0 l3.7 1.8 M58.9 305.3 l-2.1 -7.7 M61.1 315.2 l-2.9 -7.2 M55.6 296.9 l2.8 -6.1 M67.9 305.7 l3.7 3.0 M68.5 313.8 l-8.1 1.5 M54.4 298.8 l-5.9 1.1 M66.3 325.4 l3.4 5.2 M55.8 318.9 l-2.4 -2.7 M58.0 322.8 l-3.8 0.6 M69.0 314.3 l2.7 -5.0 M53.2 341.1 l-0.9 6.0 M49.8 300.1 l-0.9 -3.2 M45.0 326.9 l3.2 -4.1 M65.7 329.7 l0.2 -4.1 M66.4 311.6 l-2.7 -6.6 M60.6 338.7 l-3.2 -3.3 M47.6 315.9 l4.5 -1.2 M65.2 336.4 l-4.9 -3.4 M66.1 313.9 l-5.8 -0.3 M63.5 336.6 l-5.0 1.5 M62.3 294.5 l4.2 -0.8 M49.2 338.3 l3.1 1.8 M74.4 330.1 l-5.6 -0.2 M72.3 334.2 l7.1 -0.3 M70.3 309.7 l-1.5 3.8 M57.9 329.5 l-2.2 2.4 M74.7 326.2 l4.6 -6.4 M53.6 334.0 l-7.4 -2.1 M56.2 337.6 l-7.7 -2.4 M59.5 321.2 l-6.8 4.7 M65.8 338.3 l3.1 3.4 M56.4 314.1 l-6.3 1.9 M49.4 334.6 l2.7 -3.8 M60.9 297.5 l-5.4 -3.7 M47.5 310.8 l-1.7 -4.3 M52.1 302.3 l-8.1 2.0 M55.3 337.7 l-6.0 -2.8 M65.3 339.5 l4.6 4.1 M47.3 326.6 l5.6 -6.9 M61.9 344.6 l-5.9 1.1 M74.3 326.1 l0.6 4.6 M57.4 331.8 l-1.1 4.6 M50.6 316.8 l0.3 -8.6 M68.9 313.4 l-3.0 -6.7 M58.4 303.8 l2.7 7.1 M54.7 307.2 l-1.7 -2.9 M63.2 295.9 l3.6 -0.7 M54.9 298.6 l4.2 5.2 M62.8 331.3 l4.6 0.8 M67.2 303.9 l2.6 -8.4 M68.5 339.5 l5.5 -4.2 M56.6 329.4 l-4.9 2.0 M59.1 341.3 l-3.0 -3.4 M65.3 336.2 l-1.7 -6.8 M50.4 300.9 l0.3 -5.6 M59.7 298.8 l-2.2 3.4 M50.3 335.3 l0.0 -4.8 M55.8 318.2 l-4.6 -3.3 M61.7 296.0 l8.3 2.9 M67.4 342.5 l4.3 -0.4 M58.4 329.6 l6.4 -4.0 M74.0 315.1 l-4.9 5.9 M54.3 331.7 l-6.4 3.2 M55.1 337.8 l-7.1 -3.2 M49.8 323.1 l-5.4 -2.0 M59.4 311.5 l1.4 2.9 M47.4 332.4 l-5.5 -4.0 M73.3 310.7 l-1.2 4.2 M52.6 317.1 l-2.9 -2.0 M49.5 334.0 l-0.1 3.9 M59.9 308.6 l5.4 -3.9 M68.9 307.8 l-4.5 0.3 M74.6 329.1 l0.7 3.4 M70.7 312.2 l-7.4 -4.2 M59.1 306.8 l-1.4 6.8 M56.8 308.8 l0.0 6.1 M73.4 328.5 l-2.1 -3.3 M49.2 310.4 l4.7 3.0 M62.8 303.1 l-0.6 -4.4 M73.1 319.8 l-2.9 -1.1 M59.6 320.9 l-3.8 1.5 M60.3 334.4 l2.9 3.7 M54.1 319.8 l-8.1 -3.2 M57.2 295.0 l5.4 4.4 M60.9 345.1 l-7.3 0.2 M61.0 310.7 l6.3 4.6 M64.4 304.5 l3.1 0.5 M64.2 299.4 l-5.0 5.0 M60.5 317.9 l-0.2 -8.9 M70.2 302.1 l-6.2 2.4 M70.7 335.2 l-2.9 -4.6 M66.4 323.4 l-7.0 4.9 M45.3 324.3 l1.7 4.2 M60.7 333.9 l1.5 -5.0 M54.4 339.4 l-7.8 2.7 M55.1 297.6 l-4.8 2.4 M44.8 327.6 l6.0 -2.2 M55.7 320.3 l4.2 -5.2 M54.4 325.6 l-7.1 1.3 M59.0 333.3 l-6.0 -0.4 M64.0 320.3 l-5.1 5.2 M58.5 322.2 l0.2 4.2 M60.7 307.6 l4.7 -0.6 M63.1 196.2 l-6.1 0.3 M64.9 187.0 l-3.2 -0.9 M70.0 192.8 l0.4 4.0 M49.6 190.8 l-1.8 4.2 M75.8 195.5 l-0.9 -3.6 M62.9 203.7 l-0.9 -3.7 M77.2 194.4 l-1.1 -4.8 M73.7 193.6 l-5.8 -6.7 M65.8 191.4 l2.9 3.1 M74.4 201.4 l-5.6 -1.6 M53.4 200.2 l-6.8 2.8 M47.5 199.7 l4.7 -6.8 M62.0 190.8 l-7.1 3.8 M53.6 200.9 l1.9 7.7 M56.6 200.2 l1.5 -3.2 M73.7 195.3 l-3.5 1.2 M49.7 200.5 l6.3 -5.7 M63.4 192.4 l-3.8 4.3 M77.7 196.6 l-1.4 7.6 M57.8 190.4 l-3.1 4.8 M62.7 196.0 l-3.8 2.1 M61.5 203.9 l-0.3 -5.5 M77.5 196.4 l-0.3 3.6 M62.3 185.5 l-0.2 6.3 M71.9 190.3 l-2.3 3.2 M78.7 196.6 l1.5 -3.8 M57.2 191.5 l-0.1 -5.3 M57.6 188.1 l5.6 3.2 M59.8 193.2 l4.5 1.1 M58.9 185.3 l-7.7 2.7 M59.7 189.9 l-7.6 2.7 M49.3 195.8 l-0.7 -3.8 M49.4 196.8 l-6.5 -2.9 M60.4 201.8 l-3.5 0.9 M66.0 185.5 l-5.1 -2.0 M53.7 199.9 l-3.2 3.4 M72.3 193.1 l1.6 6.8 M72.7 195.2 l-7.3 -3.0 M60.7 197.2 l3.0 -0.6 M50.8 198.5 l5.1 -0.4 M62.5 200.3 l-2.7 2.7 M72.4 190.8 l-0.5 -4.6 M53.4 186.7 l1.1 8.7 M58.7 203.3 l5.4 -2.1 M72.3 192.4 l-7.9 3.3 M58.7 193.6 l3.7 5.0 M59.7 197.0 l2.0 -4.6 M71.0 191.6 l2.2 5.1 M69.9 186.6 l-4.2 -1.7 M52.9 194.1 l-2.0 2.3 M79.3 196.1 l0.5 -4.4 M59.3 193.7 l3.2 -5.9 M59.8 188.6 l-7.2 3.2 M59.9 197.5 l6.4 5.6 M61.2 197.5 l-3.5 -1.5 M47.8 198.9 l0.6 5.5 M77.3 191.1 l2.2 -2.4 M75.3 193.7 l5.2 7.2 M74.8 201.9 l3.4 0.7 M48.2 196.3 l-6.8 -4.0 M73.9 200.4 l-3.8 7.9 M51.5 189.1 l5.7 6.3 M60.0 199.4 l-6.8 3.7 M56.6 201.2 l-3.6 -2.7 M70.4 199.3 l-1.6 -6.9 M65.4 202.9 l3.7 -6.2 M63.5 196.9 l7.2 -0.7 M59.7 203.5 l-5.9 -3.3 M52.7 201.3 l-3.9 3.6 M55.0 202.7 l3.0 -3.7 M70.1 197.3 l0.2 -5.1 M78.5 195.6 l-3.1 1.4 M61.8 187.9 l4.6 -6.5 M69.5 186.6 l-5.9 5.2 M47.5 195.2 l1.4 6.6 M76.9 199.1 l2.8 5.8 M71.0 187.4 l3.4 -4.4 M78.2 199.2 l-2.8 7.7 M51.9 198.6 l-6.1 -1.6 M64.6 187.5 l3.1 5.4 M75.8 200.2 l2.3 4.6 M53.1 191.9 l6.1 -4.8 M56.1 200.7 l-0.5 -6.0 M55.2 190.6 l-5.9 -2.8 M70.6 191.5 l1.3 -4.1 M59.8 199.7 l3.2 -1.5 M59.1 201.7 l-1.7 -6.8 M70.1 199.3 l-0.7 -3.8 M73.8 201.3 l3.5 0.0 M68.3 203.4 l-3.2 4.5 M45.6 192.6 l4.0 1.0 M50.2 199.6 l3.8 4.2 M57.8 193.9 l-1.7 2.9 M63.6 194.4 l3.6 5.6 M63.7 202.5 l-4.9 7.5 M52.3 192.5 l2.5 5.3 M64.2 186.6 l-1.7 -5.9 M72.4 192.5 l-8.4 -2.5 M65.1 188.3 l2.1 -7.3 M58.9 201.1 l0.2 -5.2 M54.2 200.9 l4.1 2.1 M70.9 194.6 l1.1 -2.8 M57.4 201.7 l-3.3 8.0 M71.5 193.6 l5.5 6.5 M65.6 188.1 l2.9 1.1 M56.4 187.3 l-4.9 1.1 M60.2 201.0 l-5.8 3.3 M53.0 198.0 l1.1 6.9 M69.1 193.3 l0.9 -6.8 M62.8 198.7 l2.0 -3.3 M66.0 197.0 l2.1 -4.8 M71.5 195.0 l-5.8 -0.7 M72.0 202.4 l-1.5 -4.4 M58.2 199.6 l6.6 0.9 M59.8 203.0 l2.6 -4.2 M59.6 200.9 l-3.2 0.5 M54.3 198.6 l6.1 5.1 M57.8 188.4 l6.6 3.3 M49.7 201.4 l-2.7 -3.5 M62.2 187.3 l-4.7 6.2 M58.7 198.3 l6.4 1.8 M60.9 198.9 l7.3 2.3 M59.0 204.1 l6.2 -4.9 M64.8 204.6 l-5.8 -5.6 M70.5 191.9 l-5.9 5.9 M60.6 198.0 l6.2 1.5 M55.9 204.1 l5.4 0.4 M58.7 187.4 l3.4 -6.0 M74.3 187.9 l4.3 -5.0 M51.5 199.3 l0.8 4.4 M50.2 194.2 l-2.7 2.3 M72.3 194.3 l-5.1 0.6 M47.1 192.0 l6.1 -2.5 M72.1 192.7 l-5.0 0.8 M68.3 194.2 l1.2 7.5 M62.3 197.6 l-3.9 4.3 M53.7 196.4 l-2.7 3.9 M67.8 201.4 l0.6 4.1 M77.3 191.0 l-4.5 4.2 M64.0 195.8 l-8.6 -0.7 M72.7 198.2 l0.8 -3.0 M54.1 192.4 l0.2 -7.9 M73.8 189.1 l5.9 3.6 M52.8 193.0 l1.8 5.6 M51.9 198.0 l4.2 -1.3 M66.2 192.0 l-2.1 -5.3 M52.2 199.3 l2.9 3.2 M55.3 197.3 l4.0 -5.9 M51.7 188.9 l1.6 2.6 M76.9 199.5 l-8.8 0.7 M104.4 232.8 l-4.8 -6.5 M97.5 229.3 l-2.7 3.5 M125.8 217.6 l-3.5 1.5 M119.4 218.1 l-0.1 -5.5 M125.1 230.9 l6.8 5.3 M115.7 232.2 l4.3 0.1 M106.4 221.6 l2.5 2.2 M124.3 225.9 l1.2 7.4 M103.8 216.0 l7.9 -3.8 M103.8 236.5 l-1.4 -3.9 M110.8 222.4 l-3.9 -7.5 M100.3 215.5 l-3.0 -4.6 M119.4 230.5 l-3.0 7.3 M124.3 215.5 l-4.2 7.3 M112.3 223.9 l-3.4 -1.0 M121.7 229.5 l-1.1 -3.9 M104.0 233.8 l-3.6 -1.0 M111.1 226.4 l-3.9 8.0 M116.8 236.2 l-4.9 -6.6 M111.6 221.7 l-3.8 7.0 M98.7 214.7 l7.9 1.6 M95.9 232.6 l-4.5 -2.6 M106.8 224.6 l7.6 -3.2 M100.4 215.9 l-0.5 -5.6 M110.7 236.3 l8.2 -0.8 M112.4 219.6 l-1.8 4.3 M92.5 219.8 l-4.7 -4.5 M102.5 227.6 l-0.8 8.9 M123.5 218.8 l-1.7 -4.0 M113.1 225.3 l4.2 0.5 M125.1 223.7 l0.7 3.5 M112.3 225.2 l3.3 3.8 M115.3 230.6 l-2.7 -2.7 M121.5 234.3 l-1.3 6.6 M106.4 236.4 l4.6 0.3 M117.1 219.3 l-2.8 -3.2 M120.2 230.7 l-3.1 0.8 M97.2 223.4 l-4.8 5.8 M119.7 219.2 l-2.6 7.2 M110.8 215.0 l-3.8 -3.3 M107.6 214.5 l3.0 -3.7 M127.0 230.3 l-6.7 -4.0 M109.6 212.7 l-5.2 6.3 M100.5 219.0 l1.8 3.1 M111.4 232.9 l-3.3 5.9 M124.5 222.4 l-1.6 -2.6 M105.1 215.3 l0.9 -5.0 M101.2 217.1 l1.1 -5.5 M118.5 213.4 l-5.9 -1.1 M106.1 215.3 l8.5 -1.6 M93.4 225.2 l6.6 5.2 M107.6 223.5 l8.1 0.5 M113.1 214.2 l-3.7 2.5 M91.1 226.4 l-2.2 -2.4 M111.6 228.9 l5.4 -6.1 M121.7 220.9 l-1.4 3.1 M109.6 233.2 l-3.9 3.2 M107.5 212.2 l-5.7 5.4 M107.3 232.0 l1.0 -3.4 M127.7 231.4 l-5.4 1.0 M112.6 211.9 l-5.4 5.7 M123.0 234.6 l-4.6 2.7 M115.2 225.3 l-2.9 2.3 M99.4 213.2 l-1.8 7.3 M96.4 219.4 l1.0 -5.8 M113.8 220.1 l-2.6 -5.6 M113.1 231.3 l6.5 -2.2 M95.8 225.2 l4.0 -5.5 M113.4 238.3 l4.5 -6.2 M105.9 213.9 l-4.0 7.9 M108.1 219.5 l2.0 -5.2 M127.4 229.9 l0.8 5.5 M122.0 230.7 l-7.7 -1.9 M128.0 221.2 l-2.6 -4.7 M118.9 222.5 l-2.6 5.8 M99.8 232.8 l3.3 3.0 M123.0 226.2 l0.5 7.9 M109.7 231.1 l-0.9 -4.1 M117.7 216.4 l4.5 5.7 M121.1 224.9 l-5.9 -2.1 M128.9 220.7 l4.9 2.0 M114.6 216.5 l-6.4 -0.4 M113.9 225.2 l4.3 -3.2 M96.0 228.6 l0.1 -8.4 M123.8 230.6 l6.3 0.1 M115.6 216.1 l-5.5 6.0 M103.3 212.5 l-4.7 -1.2 M105.1 215.8 l3.8 0.0 M125.5 222.1 l7.4 1.5 M110.2 222.0 l4.0 -0.3 M93.1 224.5 l-5.1 0.4 M94.3 226.6 l7.9 -2.4 M127.9 224.2 l-5.1 0.7 M126.2 217.8 l-2.4 7.3 M107.3 227.7 l-8.3 1.4 M92.4 222.3 l4.2 -6.5 M104.3 237.8 l5.2 3.1 M120.7 229.3 l5.9 -5.2 M125.0 224.5 l-4.0 -0.5 M91.0 226.2 l-4.4 6.9 M104.1 236.8 l3.2 8.2 M114.2 227.7 l-6.9 -3.4 M106.9 216.4 l-0.9 -4.1 M105.0 231.6 l0.5 3.2 M113.3 235.0 l-3.9 -3.1 M101.2 219.8 l1.1 -2.9 M112.6 211.8 l-6.0 -3.3 M117.6 224.4 l5.0 3.4 M107.6 214.9 l-5.6 0.5 M91.9 228.2 l6.3 2.9 M125.4 232.0 l-0.6 7.8 M103.3 235.1 l-8.7 -0.5 M95.9 226.7 l-4.5 -0.1 M120.9 222.0 l2.5 3.5 M106.3 211.9 l-7.3 -4.8 M113.0 238.0 l0.5 -4.3 M120.9 230.0 l-5.2 2.9 M108.3 218.4 l-0.1 5.0 M117.0 232.9 l-3.8 -2.7 M121.2 234.0 l7.0 4.2 M102.8 220.6 l8.1 0.5 M127.2 226.7 l-7.0 -1.5 M115.2 236.4 l-0.2 6.5 M125.1 222.6 l2.4 3.8 M94.7 232.0 l1.6 -5.1 M99.8 220.7 l-4.9 0.3 M121.5 222.1 l-2.8 6.1 M111.3 229.6 l-7.5 2.7 M102.9 230.5 l-1.7 6.4 M108.2 235.1 l-3.2 -0.2 M102.1 236.4 l1.8 7.3 M122.4 229.5 l-6.1 3.2 M117.0 225.1 l-7.0 4.8 M91.4 224.8 l-8.7 -1.8 M126.5 231.1 l-0.2 4.3 M97.2 223.5 l8.6 -0.3 M108.4 218.1 l0.6 5.6 M106.0 230.9 l1.3 4.4 M108.0 229.4 l-3.2 8.1 M118.2 215.6 l8.3 -2.3 M113.6 226.7 l-3.1 5.4 M113.3 225.0 l-2.4 -7.4 M108.6 237.2 l2.4 -2.6 M102.5 216.9 l0.5 -3.9 M108.9 223.7 l5.5 1.2 M102.5 232.6 l2.2 8.7 M97.9 230.0 l-5.2 6.4 M119.8 236.7 l3.0 7.7 M96.1 229.8 l0.7 7.9 M113.2 237.2 l-4.6 -7.0" stroke="#474c42" stroke-width="0.8" fill="none" stroke-linecap="round" opacity="0.8"/><path d="M106.8 237.5 l3.1 5.8 M101.7 261.5 l2.8 -1.5 M106.2 249.0 l-3.5 4.8 M92.2 204.8 l-6.7 -0.8 M102.3 221.4 l-4.8 5.2 M55.0 258.1 l-3.7 3.3 M89.5 242.9 l4.3 -2.1 M77.4 212.7 l-0.8 -5.1 M90.4 257.6 l-2.2 -2.5 M86.9 236.5 l-6.3 -2.7 M78.7 224.8 l4.7 3.7 M72.1 246.8 l4.1 4.1 M95.9 243.4 l3.5 -1.4 M82.9 234.8 l0.8 2.6 M77.3 210.1 l0.7 -6.5 M78.3 227.1 l-2.6 0.7 M85.4 216.6 l-6.8 1.6 M103.3 238.3 l-5.2 4.5 M87.8 224.6 l-6.9 2.1 M108.5 236.2 l-3.3 0.3 M90.5 228.5 l-3.6 -2.7 M90.4 220.2 l-4.8 4.7 M75.5 200.5 l2.3 2.2 M70.6 214.7 l3.8 -3.0 M99.8 248.1 l0.1 6.5 M90.0 205.3 l4.1 3.4 M89.4 277.5 l3.4 4.6 M77.3 222.4 l-2.7 -1.6 M95.1 247.0 l4.1 2.2 M67.5 205.3 l-0.3 4.9 M73.7 219.1 l-1.6 4.0 M89.1 219.2 l0.4 -3.2 M74.2 260.1 l0.4 3.3 M58.6 262.0 l-4.0 -6.3 M73.3 260.2 l0.3 5.0 M99.2 265.2 l-2.4 1.3 M60.4 239.1 l1.4 3.8 M65.5 205.0 l-3.0 -2.3 M96.7 244.6 l0.3 4.6 M64.9 246.6 l3.7 6.1 M104.2 229.1 l4.8 -2.3 M78.9 213.5 l-3.5 -5.7 M72.8 205.6 l-3.2 -2.7 M89.2 204.2 l0.3 3.3 M94.8 240.9 l1.5 3.2 M88.5 259.5 l3.6 6.4 M83.1 241.9 l3.9 -2.1 M79.8 217.4 l2.7 0.2 M85.9 235.8 l-3.6 1.3 M68.6 220.7 l1.3 -3.3 M51.2 230.5 l-7.1 -1.4 M106.8 251.4 l-5.8 4.7 M75.4 220.7 l0.4 -3.3 M54.6 234.0 l1.4 2.4 M87.0 225.4 l0.3 -4.8 M89.6 274.8 l-2.6 2.7 M103.9 216.3 l-3.6 6.4 M100.7 262.5 l-3.2 -1.9 M66.5 253.6 l-2.1 -4.1 M57.9 254.2 l-1.7 2.4 M52.1 241.6 l0.3 3.8 M90.4 231.7 l3.9 -1.0 M86.5 272.9 l3.7 -3.1 M78.6 254.2 l6.0 0.3 M79.0 217.6 l-6.2 1.0 M71.9 208.8 l3.2 -1.8 M103.4 234.7 l-2.5 5.4 M73.5 264.1 l2.9 -5.9 M58.0 219.3 l3.0 -3.3 M105.9 257.7 l4.4 1.7 M97.7 257.5 l0.5 -2.6 M61.0 240.6 l-3.4 -6.1 M76.6 231.3 l-2.9 3.8 M94.6 271.6 l-2.7 3.3 M85.0 268.5 l1.1 -2.9 M63.7 240.1 l4.1 1.7 M64.7 216.2 l6.0 -0.2 M103.1 225.5 l-2.8 -6.4 M97.2 213.9 l-1.8 3.5 M83.2 235.2 l-5.1 4.3 M74.3 267.2 l-3.3 4.7 M83.5 231.4 l-5.7 3.6 M54.7 260.6 l-0.7 5.0 M93.0 273.0 l-6.6 0.8 M74.2 221.0 l1.7 -2.3 M103.7 224.0 l0.2 5.4 M68.0 262.3 l4.5 -1.5 M74.4 235.9 l4.6 1.7 M54.5 258.3 l-6.3 -3.0 M54.1 222.6 l-1.1 2.4 M80.3 207.6 l1.2 3.4 M52.0 246.7 l-2.3 -4.1 M64.1 229.6 l-2.7 2.1 M78.4 234.2 l-2.9 -0.4 M96.4 267.2 l3.3 -3.8 M104.6 232.1 l-5.4 -1.3 M89.3 240.7 l-0.0 -4.4 M94.9 235.7 l-0.7 3.5 M100.1 227.6 l-0.1 2.8 M76.8 237.5 l2.1 -2.5 M82.1 203.0 l-1.3 5.3 M72.2 215.0 l-5.9 3.6 M79.1 270.1 l5.3 0.2 M98.5 235.4 l-0.4 -4.1 M66.5 257.5 l3.0 -2.8 M101.3 248.3 l-4.8 -2.7 M64.0 244.3 l-0.8 -3.7 M79.1 256.8 l3.3 1.3 M71.4 217.5 l-3.5 1.0 M78.8 273.1 l3.0 -1.2 M69.2 203.6 l-6.7 -1.9 M91.2 272.1 l2.8 2.3 M81.4 241.3 l0.2 -4.2 M63.3 266.0 l-0.1 6.8 M91.8 276.3 l3.5 -3.6 M105.4 225.6 l3.8 -1.2 M65.8 251.3 l-5.0 1.8 M90.9 222.2 l-3.6 -1.3 M73.6 243.1 l-5.4 -1.4 M56.5 219.7 l-3.8 -0.5 M98.1 232.2 l1.7 4.7 M75.3 220.3 l0.3 2.9 M62.8 231.5 l0.9 -3.2 M71.1 230.0 l1.0 2.9 M64.3 212.9 l-6.1 2.6 M88.9 204.7 l-2.9 -3.7 M56.9 258.0 l-1.0 3.6 M109.0 239.5 l-3.8 -5.5 M104.9 251.6 l-3.3 -2.2 M75.6 272.4 l5.3 -3.2 M102.1 248.3 l-1.9 3.1 M101.4 250.4 l-0.5 4.1 M51.6 239.9 l-0.9 5.3 M64.2 212.4 l2.1 -3.0 M85.4 231.7 l-6.0 1.6 M94.3 226.1 l-2.6 -5.4 M104.8 250.2 l1.7 -2.7 M71.6 263.8 l6.7 -2.8 M87.7 263.0 l2.0 1.9 M86.5 277.7 l2.9 -2.0 M83.2 255.5 l-6.4 2.2 M109.5 277.3 l5.3 4.7 M103.2 253.3 l5.7 3.6 M102.6 246.2 l5.4 -2.1 M74.8 271.3 l4.3 5.1 M91.9 286.1 l1.8 -1.8 M85.7 290.0 l-5.7 4.1 M95.4 257.9 l-4.3 0.2 M86.4 251.3 l-2.9 -0.0 M105.1 261.6 l-4.4 -4.9 M92.4 271.5 l-2.9 -0.9 M103.6 280.4 l2.5 4.7 M98.0 252.7 l2.7 -0.8 M90.9 283.0 l-5.7 -1.4 M95.2 286.7 l-3.1 2.8 M119.1 277.8 l4.5 0.8 M100.5 286.6 l-1.8 -6.2 M112.0 254.9 l-0.5 2.5 M112.5 289.7 l-3.2 3.0 M88.9 282.0 l1.4 3.7 M80.7 273.2 l2.8 1.1 M115.6 272.9 l-4.2 -5.5 M81.7 281.9 l1.2 -5.0 M88.3 267.5 l-2.6 -5.6 M91.1 290.0 l0.8 2.9 M88.7 286.8 l-2.9 2.4 M119.2 265.1 l-0.5 2.8 M92.6 245.6 l-1.1 -5.8 M119.2 265.6 l3.5 3.4 M82.4 282.1 l3.1 4.7 M94.2 257.0 l-3.0 -3.0 M89.8 254.2 l4.7 -1.2 M104.6 271.8 l-1.1 -2.8 M99.6 251.8 l-2.6 3.7 M108.6 254.1 l-4.2 2.4 M82.6 261.7 l-1.1 -4.4 M96.1 278.8 l-3.3 1.0 M101.6 280.2 l-4.4 5.5 M84.4 269.0 l-4.7 0.8 M120.1 277.5 l-7.4 -0.3 M89.4 260.5 l3.0 -0.3 M103.0 278.5 l1.8 2.6 M106.0 264.2 l-3.2 0.3 M95.0 277.3 l-2.7 2.9 M94.1 244.4 l1.8 4.5 M78.9 252.6 l5.3 2.3 M82.8 280.5 l-1.8 -5.7 M80.3 285.4 l-3.2 -1.8 M102.0 280.9 l2.6 -6.3 M108.5 287.0 l2.5 1.3 M89.8 252.4 l-4.2 2.0 M82.7 274.5 l-1.6 7.0 M116.1 278.5 l1.9 3.9 M107.5 272.6 l-2.0 -1.7 M80.4 280.3 l-2.7 -1.3 M84.9 277.0 l2.2 -6.4 M78.8 257.4 l-6.3 3.8 M92.9 246.0 l3.1 5.1 M87.5 251.1 l2.9 -2.3 M112.3 283.3 l1.3 7.2 M113.4 260.5 l2.0 -5.2 M114.5 260.0 l2.1 7.2 M97.1 278.7 l1.0 -5.7 M106.1 260.8 l5.9 -3.1 M96.0 267.5 l0.4 -4.3 M107.7 281.3 l3.9 -1.3 M73.9 275.6 l-1.0 -4.2 M88.4 286.7 l-6.0 -1.4 M91.2 261.2 l4.6 -4.6 M88.1 269.9 l-6.5 2.0 M96.1 284.6 l-2.2 -5.8 M106.0 255.8 l-0.4 -3.6 M118.6 276.6 l0.6 6.9 M91.1 283.5 l1.5 -2.2 M112.6 267.2 l4.0 1.0 M107.3 279.2 l-5.3 -0.1 M107.7 294.1 l1.9 2.4 M98.0 270.2 l2.4 -2.3 M118.4 272.1 l-1.7 2.6 M87.1 272.2 l4.4 2.4 M99.1 285.2 l-7.5 0.3 M82.7 257.7 l-1.5 4.5 M95.6 293.8 l6.0 -2.8 M79.3 281.7 l-1.8 6.2 M108.3 266.7 l6.4 3.8 M77.3 259.9 l3.7 -5.3 M108.4 277.9 l-4.7 5.0 M96.6 257.9 l4.2 5.0 M100.8 267.2 l-1.5 2.7 M94.9 271.4 l-2.5 2.2 M122.0 278.8 l4.1 5.8 M95.7 254.9 l-3.1 3.1 M94.9 289.5 l3.6 4.1 M86.7 270.6 l3.8 -1.1 M82.7 254.1 l-0.4 -5.4 M81.6 274.3 l-0.2 -2.8 M76.1 260.8 l-4.7 1.4 M89.6 248.6 l-2.5 4.9 M106.1 251.3 l1.9 7.2 M86.4 287.5 l5.6 1.9 M74.7 261.7 l0.3 2.6 M89.8 284.9 l-1.6 -3.7 M101.1 246.2 l7.3 1.5 M110.2 275.3 l5.7 3.2 M110.9 266.0 l-6.7 -3.0 M99.7 256.9 l-6.9 1.7 M110.6 257.0 l-2.5 -1.4 M79.5 284.2 l3.4 0.9 M94.7 268.6 l2.7 5.7 M105.1 286.9 l4.7 -2.0 M95.5 263.8 l-5.1 -0.9 M80.1 271.9 l5.1 2.3 M85.3 287.7 l-0.2 7.1 M74.9 275.5 l-3.9 -0.5 M85.3 275.4 l-4.2 -0.8 M95.2 295.8 l5.0 -1.0 M76.4 260.6 l-3.1 -3.4 M74.7 269.5 l4.2 1.8 M114.9 279.7 l4.6 0.8 M108.2 281.2 l3.6 -0.6 M81.8 286.7 l1.0 3.5 M80.2 279.8 l1.0 3.6 M110.5 275.1 l-4.2 3.5 M92.7 288.1 l0.8 -3.8 M93.5 247.8 l5.5 -2.8 M84.5 254.2 l-5.1 4.7 M103.8 284.5 l3.6 3.6 M115.1 258.0 l6.9 0.7 M108.8 273.9 l-2.6 0.3 M103.7 249.2 l5.6 -1.3 M86.7 275.4 l-2.3 5.1 M103.6 260.2 l-5.7 -0.9 M100.6 291.7 l-0.8 4.2 M105.0 294.4 l3.9 1.0 M83.9 258.0 l0.8 5.0 M79.1 273.4 l-3.1 1.1 M93.2 255.9 l1.4 -3.9 M106.7 260.4 l-4.4 -5.9 M90.8 292.2 l-2.4 -0.8 M84.6 261.4 l5.9 2.8" stroke="#3a3f37" stroke-width="0.8" fill="none" stroke-linecap="round" opacity="0.75"/><path d="M47 205 Q80 235 95 290 M60 200 Q85 215 120 222 M70 250 Q90 262 118 268" stroke="#5a5c52" stroke-width="1.4" fill="none"/><rect x="0.0" y="0.0" width="47.0" height="465.0" fill="#a8a199" /><rect x="40.0" y="0.0" width="7.0" height="465.0" fill="#b3aca4" /><rect x="240.9" y="0.0" width="69.4" height="337.5" fill="#e3e1de" /><rect x="240.9" y="0.0" width="16.0" height="337.5" fill="#efeeec" /><line x1="240.9" y1="0.0" x2="240.9" y2="338.0" stroke="#bdb5a4" stroke-width="1" /><line x1="310.3" y1="0.0" x2="310.3" y2="338.0" stroke="#c4bcab" stroke-width="1.4" /><rect x="305.6" y="256.0" width="3.5" height="16.0" fill="#c9c0ae" /><rect x="274.7" y="271.2" width="33.9" height="16.1" fill="#b4ab99" /><rect x="274.7" y="271.2" width="33.9" height="2.2" fill="#c9c1b0" /><rect x="302.6" y="271.2" width="6.0" height="16.1" fill="#d2cbbb" /><rect x="252.7" y="287.3" width="55.9" height="15.3" fill="#b4ab99" /><rect x="252.7" y="287.3" width="55.9" height="2.2" fill="#c9c1b0" /><rect x="302.6" y="287.3" width="6.0" height="15.3" fill="#d2cbbb" /><rect x="245.1" y="303.4" width="63.5" height="16.1" fill="#b4ab99" /><rect x="245.1" y="303.4" width="63.5" height="2.2" fill="#c9c1b0" /><rect x="302.6" y="303.4" width="6.0" height="16.1" fill="#d2cbbb" /><rect x="241.7" y="320.0" width="66.9" height="17.4" fill="#b4ab99" /><rect x="241.7" y="320.0" width="66.9" height="2.2" fill="#c9c1b0" /><rect x="302.6" y="320.0" width="6.0" height="17.4" fill="#d2cbbb" /><rect x="236.6" y="338.1" width="80.4" height="18.6" fill="#c7beac" /><rect x="236.6" y="338.1" width="80.4" height="2.5" fill="#d4ccbb" /><rect x="224.8" y="356.7" width="106.0" height="19.5" fill="#bdb4a2" /><rect x="224.8" y="356.7" width="106.0" height="2.5" fill="#cdc5b3" /><rect x="194.3" y="374.2" width="110.0" height="19.5" fill="#b9b19f" /><rect x="194.3" y="374.2" width="110.0" height="2.5" fill="#cbc3b2" /><rect x="150.3" y="393.7" width="100.0" height="21.2" fill="#b7af9d" /><rect x="150.3" y="393.7" width="100.0" height="2.5" fill="#c9c1b0" /><rect x="108.0" y="414.9" width="87.2" height="22.0" fill="#b5ad9b" /><rect x="108.0" y="414.9" width="87.2" height="2.5" fill="#c7bfae" /><polygon points="195.2,420.0 215.0,420.0 215.0,437.0 195.2,437.0" fill="#c8c3bb" /><rect x="311.0" y="0.0" width="67.0" height="464.8" fill="#aaa39c" /><polygon points="317.0,339.0 378.0,345.0 378.0,426.0 311.0,426.0 311.0,339.0" fill="#7a726d" /><rect x="311.0" y="426.0" width="67.0" height="38.8" fill="#a19b95" /><g filter="url(#p1_stB2)" opacity=".55"><ellipse cx="352.0" cy="240.0" rx="22.0" ry="16.0" fill="#555a50" /><ellipse cx="340.0" cy="262.0" rx="20.0" ry="12.0" fill="#555a50" /><ellipse cx="364.0" cy="222.0" rx="12.0" ry="10.0" fill="#555a50" /><ellipse cx="369.0" cy="296.0" rx="8.0" ry="9.0" fill="#555a50" /></g><path d="M342.4 223.5 l3.5 3.8 M337.4 235.2 l3.7 3.7 M334.6 245.2 l-5.2 2.0 M330.1 240.0 l0.1 5.9 M361.7 226.8 l1.9 -8.4 M328.1 241.3 l1.3 -5.0 M351.6 227.5 l-3.6 -1.6 M348.8 229.7 l-5.6 2.6 M351.6 222.3 l4.7 -5.2 M345.4 252.8 l-3.6 -3.6 M361.2 234.5 l-8.7 -1.4 M353.7 251.4 l7.5 -4.2 M331.1 245.2 l-3.2 -1.5 M369.3 231.4 l3.7 -2.2 M329.2 235.4 l5.1 -6.3 M368.7 244.8 l-2.1 3.2 M343.2 239.8 l-1.8 5.3 M339.0 246.0 l-6.0 0.6 M356.7 247.0 l-1.6 2.7 M327.4 237.5 l0.2 8.3 M339.1 248.9 l1.1 -5.5 M327.0 240.3 l5.1 2.4 M344.6 252.0 l-6.8 -2.2 M343.6 256.7 l7.3 -2.3 M333.2 230.0 l6.3 2.3 M337.0 243.3 l-2.2 -4.8 M356.2 236.4 l-0.5 5.8 M355.3 244.7 l-2.0 -4.1 M363.5 251.2 l4.2 -5.2 M340.9 233.3 l6.5 -4.1 M356.1 227.6 l0.7 5.8 M335.8 249.4 l2.7 3.3 M341.5 237.8 l3.3 5.3 M329.5 245.4 l6.3 -0.7 M340.3 230.8 l-4.1 -3.2 M361.8 230.7 l0.2 5.5 M352.4 237.4 l7.5 -0.3 M337.3 239.8 l-0.0 5.1 M347.1 225.9 l-5.3 0.0 M342.0 243.3 l-5.1 5.0 M373.2 241.9 l5.6 0.6 M345.3 252.7 l-0.5 6.6 M371.9 244.5 l7.2 -3.9 M347.1 233.7 l-4.6 -4.6 M354.8 228.3 l1.1 -4.7 M359.3 241.4 l5.0 -0.2 M356.4 245.5 l7.5 -2.3 M344.9 241.6 l1.0 -2.9 M350.0 228.3 l-2.0 2.4 M338.1 225.7 l-7.9 2.6 M355.4 249.4 l-3.7 1.8 M367.2 239.1 l6.8 0.0 M358.5 248.6 l2.1 -4.6 M347.6 256.6 l-0.7 8.7 M356.1 241.0 l6.7 -0.3 M329.9 234.6 l-2.4 7.9 M345.8 256.4 l-8.4 0.2 M370.9 236.2 l3.6 4.5 M363.6 233.7 l1.5 5.6 M354.5 243.7 l-2.6 -1.6 M338.8 245.7 l1.5 -4.9 M332.2 245.3 l2.9 5.1 M355.2 250.7 l3.1 -8.1 M370.5 235.2 l5.4 1.4 M340.2 248.2 l-6.9 1.6 M368.4 240.5 l7.0 2.6 M367.9 234.1 l1.4 -8.8 M361.1 235.1 l-4.5 -3.8 M334.5 238.6 l5.0 0.5 M372.2 243.0 l0.8 -3.2 M335.7 226.9 l-4.8 -5.1 M335.1 241.2 l-1.8 3.0 M346.2 247.7 l-4.7 2.3 M341.5 256.8 l0.7 5.3 M356.3 230.2 l6.1 1.9 M338.2 253.4 l-2.4 4.4 M331.0 239.0 l2.3 2.4 M351.0 231.0 l7.2 -3.1 M343.4 239.0 l-0.2 3.1 M334.4 233.2 l-0.8 -5.1 M368.6 230.5 l-2.3 -5.6 M365.3 234.4 l8.3 0.2 M362.3 245.8 l-5.5 6.0 M335.7 232.1 l8.3 -0.6 M340.3 230.7 l1.1 8.2 M343.6 223.5 l-7.3 4.7 M361.5 244.4 l7.2 -2.6 M356.2 249.6 l1.2 6.7 M343.3 227.0 l-2.7 2.0 M338.6 255.1 l-0.6 -6.5 M337.1 234.1 l4.2 0.5 M348.9 242.0 l-3.0 3.9 M337.0 246.2 l1.1 -6.0 M364.4 231.9 l-2.5 5.1 M346.2 233.6 l-2.3 -8.5 M347.3 225.2 l1.5 -2.7 M336.1 236.0 l2.2 4.9 M369.2 244.1 l4.3 3.0 M369.9 250.0 l0.6 6.2 M362.8 241.2 l-2.6 1.6 M364.2 230.2 l5.6 1.2 M361.2 248.1 l0.6 -4.2 M358.1 229.0 l-6.3 -6.2 M359.5 253.6 l5.2 -3.0 M352.6 255.7 l-3.1 0.9 M357.5 236.1 l-0.2 -4.0 M333.4 243.7 l-0.9 6.4 M363.5 239.3 l-6.6 -5.6 M363.6 253.5 l6.0 -3.2 M361.9 242.6 l0.9 6.0 M344.1 275.0 l3.4 -0.7 M344.1 253.7 l-5.7 -0.7 M328.1 269.7 l-4.2 -2.5 M339.8 270.4 l2.6 6.3 M320.1 258.2 l-4.3 -5.2 M339.9 271.0 l6.2 4.7 M353.5 256.3 l-4.9 -0.2 M319.4 258.8 l-6.5 0.1 M347.1 265.1 l-7.8 -2.6 M334.9 271.8 l-1.7 3.3 M333.3 273.2 l-3.9 4.1 M321.2 260.3 l-5.3 -4.8 M351.6 254.8 l-7.7 -3.4 M322.9 265.5 l5.9 3.3 M319.7 255.1 l4.0 1.9 M339.1 249.6 l-2.1 -3.9 M352.5 257.2 l4.4 -6.6 M329.9 253.5 l-2.0 -3.2 M338.0 248.5 l-5.3 -4.4 M337.3 250.6 l5.1 6.2 M340.7 255.4 l-3.4 -1.2 M338.3 270.5 l-7.7 0.3 M355.9 257.7 l-2.0 4.5 M351.5 267.8 l-4.7 4.3 M322.4 267.5 l0.3 -5.5 M319.9 262.4 l2.2 6.4 M347.4 266.9 l-5.6 2.1 M322.3 270.4 l-1.1 7.8 M336.5 255.7 l-1.5 7.2 M322.5 257.4 l2.5 -3.0 M347.2 274.6 l-2.4 6.2 M336.4 266.9 l3.0 -6.9 M336.2 266.1 l0.5 -4.6 M338.9 255.1 l3.8 -0.2 M332.8 267.7 l-5.5 -5.4 M349.4 269.3 l4.9 -2.2 M334.8 250.4 l-2.3 8.0 M342.8 252.9 l1.0 3.6 M348.6 253.9 l-5.5 -0.7 M347.3 262.4 l7.7 3.3 M351.1 258.5 l-4.7 -4.6 M359.5 259.7 l5.8 6.4 M328.1 256.4 l0.8 -3.1 M345.8 249.9 l4.0 2.4 M359.2 260.6 l-6.5 -5.9 M350.2 266.5 l2.0 -2.7 M333.9 266.7 l-7.5 -4.8 M318.0 262.6 l5.1 2.2 M359.1 259.1 l0.1 4.0 M335.6 275.4 l3.3 3.1 M332.2 270.6 l1.3 -6.0 M342.2 252.7 l2.3 -4.6 M327.3 256.8 l-3.5 2.1 M346.2 255.6 l6.4 -2.5 M354.3 270.2 l3.7 -5.4 M335.8 274.8 l-2.0 8.2 M342.3 259.3 l-4.8 7.5 M341.4 255.6 l-7.4 4.0 M346.5 262.5 l-1.4 -5.2 M329.4 254.8 l-7.0 0.0 M337.3 257.3 l-7.6 -4.5 M344.2 260.9 l-4.2 -0.6 M349.3 261.6 l4.5 -3.0 M343.6 260.1 l-6.5 -1.1 M327.8 265.9 l1.6 -3.2 M348.7 250.7 l3.1 -6.1 M325.3 267.2 l0.1 4.6 M333.0 261.5 l7.0 0.0 M356.0 259.3 l3.2 1.8 M353.7 266.1 l0.0 -5.7 M358.3 266.2 l0.8 -4.0 M351.6 251.7 l-1.9 6.1 M351.0 262.3 l2.6 8.2 M336.7 255.0 l-0.2 -3.7 M351.0 265.5 l3.9 -7.6 M334.3 269.1 l-5.0 1.9 M332.7 253.0 l0.2 4.7 M332.3 260.6 l1.9 3.7 M339.5 264.7 l-6.7 -1.1 M332.2 275.1 l-1.9 5.7 M327.1 253.2 l3.0 -1.3 M343.0 263.8 l4.2 3.2 M319.5 258.5 l4.1 -5.1 M323.6 260.1 l1.0 4.2 M333.3 265.8 l-3.2 -3.2 M350.4 260.3 l0.2 -4.6 M340.0 271.2 l-8.6 -2.0 M339.7 264.0 l7.0 4.1 M357.3 267.7 l3.5 7.7 M326.0 273.0 l-5.0 1.4 M351.9 262.6 l-8.2 2.4 M317.9 260.6 l-6.4 2.1 M332.0 258.9 l-6.2 -3.8 M329.9 265.0 l2.8 4.7 M352.4 259.3 l0.4 5.9 M337.2 249.1 l4.1 4.1 M349.6 264.5 l-4.0 1.0 M351.5 271.1 l1.7 7.4 M343.7 266.4 l2.8 7.4 M346.6 265.4 l-4.3 -3.6 M346.8 256.9 l6.9 2.1 M324.7 267.6 l3.2 8.0 M340.0 255.2 l-2.4 2.8 M345.9 261.2 l-3.5 2.4 M321.0 263.2 l-0.2 6.5 M332.8 256.1 l5.3 -0.7 M318.3 256.5 l-1.1 2.8 M338.2 266.4 l7.2 4.4 M332.3 257.5 l-3.9 3.4 M346.4 266.8 l8.5 1.0 M352.3 224.5 l3.1 -5.6 M350.3 223.8 l-4.9 -0.9 M362.3 218.4 l-3.5 -1.9 M356.1 221.7 l-5.0 -0.8 M358.9 215.8 l5.2 4.0 M352.0 227.5 l-2.0 -2.3 M360.4 221.1 l5.4 -3.5 M354.6 218.6 l4.6 1.5 M360.3 226.8 l4.5 -0.7 M355.2 221.7 l2.0 -3.0 M367.6 221.2 l-0.3 5.6 M360.4 225.3 l0.9 -3.2 M361.6 223.3 l5.0 1.6 M361.4 221.8 l-4.8 1.7 M375.7 220.2 l-6.0 -4.1 M372.0 224.2 l6.6 -4.9 M359.1 211.8 l6.1 -2.4 M367.3 230.8 l0.4 8.3 M365.4 232.8 l-3.9 -5.7 M364.2 230.0 l-8.8 -1.2 M358.2 212.2 l5.6 -0.3 M354.8 215.6 l-4.5 2.0 M359.5 224.8 l4.2 -1.6 M366.7 216.1 l-1.5 2.9 M355.6 222.2 l-5.2 5.5 M365.2 220.9 l-1.8 -8.1 M369.5 213.3 l1.0 -5.9 M368.0 223.6 l1.6 -5.1 M350.5 223.6 l-3.8 2.6 M358.9 233.2 l-7.2 2.0 M358.6 215.5 l-4.9 3.4 M351.3 220.9 l1.4 5.5 M361.8 215.7 l-6.9 3.1 M355.9 214.5 l5.8 4.0 M361.9 217.9 l3.6 7.5 M349.9 224.7 l7.7 3.3 M356.4 218.9 l-2.2 -5.7 M363.6 233.9 l4.9 1.0 M369.4 212.7 l3.7 7.9 M368.8 226.1 l1.1 -3.7 M356.9 228.3 l-5.3 -0.2 M361.8 230.1 l-6.6 2.1 M364.0 223.5 l0.9 -6.7 M359.1 212.7 l3.6 1.4 M370.8 217.8 l-4.5 6.0 M364.3 233.6 l-1.4 -4.2 M362.3 213.4 l-0.7 3.8 M367.2 229.4 l-7.7 3.6 M356.4 229.8 l4.6 -6.0 M354.6 212.7 l-4.6 -6.5 M359.1 217.1 l-5.8 -4.7 M358.6 214.7 l6.4 1.0 M367.1 211.6 l-4.7 -3.6 M363.2 227.2 l1.2 -2.9 M355.1 224.5 l-7.3 5.2 M373.0 226.2 l-0.5 -3.3 M364.3 228.1 l2.5 4.7 M366.8 210.8 l-5.2 -2.3 M355.5 218.3 l-4.5 -1.6 M352.8 222.2 l-6.0 -2.2 M355.0 217.2 l-3.3 4.3 M358.9 221.6 l-4.4 -5.3 M365.0 233.1 l-4.0 -7.0 M349.7 227.1 l-0.2 6.2 M354.5 220.6 l-8.6 1.3 M374.0 223.2 l3.5 5.2 M358.9 213.8 l3.7 -6.8 M368.8 222.9 l-0.8 -7.2 M358.9 221.8 l2.1 4.5 M350.1 220.9 l-0.0 6.9 M356.7 216.3 l2.7 -3.5 M363.0 216.2 l0.4 -5.7 M356.0 231.7 l-5.5 5.4 M358.4 222.1 l-1.4 4.1 M363.2 223.1 l-5.2 -3.0 M358.8 215.3 l8.0 1.5 M361.8 211.0 l-4.1 1.9 M365.6 220.6 l-3.5 -1.1 M357.7 233.0 l4.5 -4.1 M370.8 226.2 l6.7 -4.6 M368.6 224.3 l-3.3 0.2 M354.4 228.3 l-0.6 7.5 M368.9 220.1 l-7.3 -0.7 M367.2 229.4 l-7.2 -3.5 M350.5 216.5 l-0.8 -3.7 M362.5 213.6 l-5.5 -2.1 M354.1 218.3 l-7.3 3.7 M364.5 229.0 l-2.0 2.2 M370.0 226.5 l6.4 -0.4 M362.1 224.4 l-1.8 8.5 M357.8 232.4 l-2.8 -2.2 M369.9 217.7 l8.1 1.8 M358.9 219.6 l-4.6 3.2 M364.2 231.3 l4.2 -5.5 M366.7 233.2 l-2.9 -2.7 M369.9 212.5 l4.3 -7.8 M358.7 221.4 l6.0 -3.8 M375.9 221.6 l-1.8 -3.1 M365.2 219.8 l-4.8 2.8 M366.1 227.9 l-0.7 -3.8 M359.2 217.2 l5.4 6.7 M362.0 222.9 l-4.5 -4.1 M349.3 217.4 l-1.6 6.2 M364.4 217.0 l-3.6 -3.2 M364.8 221.2 l2.6 7.0 M371.6 227.2 l-3.8 5.7 M354.6 214.2 l3.7 -1.6 M369.3 224.3 l5.0 1.5 M368.5 221.2 l-2.3 2.3 M360.1 214.4 l-8.5 -1.5 M366.9 303.8 l0.3 8.6 M373.4 295.5 l3.7 -1.6 M373.5 297.6 l-1.6 3.9 M366.4 300.3 l-4.0 6.1 M368.9 303.5 l3.5 -5.0 M371.7 298.9 l3.3 3.3 M366.7 287.8 l-3.1 1.0 M360.2 291.7 l-6.0 2.0 M362.2 293.9 l3.2 -1.1 M360.3 300.5 l6.9 5.1 M362.4 293.6 l7.6 -4.4 M370.7 299.7 l4.7 1.9 M362.9 294.4 l-1.9 -2.6 M373.9 297.3 l-2.1 5.1 M363.6 290.3 l3.3 1.0 M375.7 297.2 l7.5 -2.9 M360.5 298.7 l-3.0 -1.6 M374.9 300.1 l-6.8 -0.8 M364.5 299.5 l1.2 5.9 M361.5 297.6 l-7.3 1.2 M375.3 300.8 l1.8 5.2 M367.9 297.0 l2.8 1.2 M364.7 296.0 l-4.0 -5.0 M371.2 292.6 l-1.6 7.0 M370.1 287.2 l7.0 -4.0 M374.4 296.5 l-4.2 -7.4 M363.2 297.1 l3.7 1.9 M372.8 300.1 l5.1 6.2 M372.3 302.2 l-1.5 4.5 M370.2 302.0 l1.4 -6.1 M363.8 296.4 l-3.3 7.4 M374.4 299.7 l1.7 -6.0 M365.8 300.1 l-2.6 -6.4 M370.6 300.9 l1.3 -3.0 M373.4 291.0 l2.5 8.2 M364.2 302.8 l-3.7 0.7 M366.0 299.2 l-1.9 -8.4 M371.8 297.6 l-6.0 2.4 M361.5 300.0 l3.7 -0.2 M371.3 301.9 l-4.6 -5.9 M359.5 296.0 l8.3 -0.6 M361.7 303.0 l-6.9 -3.5 M368.5 294.8 l7.8 -0.1 M363.9 289.0 l-4.2 4.7 M364.7 300.0 l-4.6 2.8 M370.2 289.9 l4.7 5.9 M365.8 286.8 l-1.6 -2.6 M374.3 302.8 l-2.8 -4.8 M370.0 294.1 l1.9 -3.8 M376.1 297.5 l1.8 -2.4 M364.3 287.2 l4.5 -4.5 M372.3 288.4 l-8.4 -1.2 M369.8 300.0 l-6.1 5.5 M372.0 299.4 l-8.9 0.4 M359.1 295.0 l4.3 3.0 M370.5 299.1 l3.6 -3.6 M362.0 298.2 l8.8 1.5 M361.5 289.6 l4.5 5.0 M369.6 287.6 l-6.6 4.3 M374.2 291.4 l0.0 -4.1 M362.0 291.3 l2.1 6.9 M373.7 301.9 l-2.4 2.0 M364.6 303.9 l-4.6 4.0 M365.8 296.7 l-5.6 0.9 M367.7 291.1 l7.8 1.2 M367.7 294.6 l2.9 7.3 M365.8 301.0 l-6.8 -4.8 M367.2 294.5 l-7.3 5.1 M363.6 290.1 l-3.3 -6.6 M376.1 298.1 l2.3 5.3 M368.1 297.5 l3.2 5.0 M367.0 289.8 l-7.1 3.8 M362.4 290.7 l-3.7 -2.7 M372.7 294.2 l2.1 8.2 M360.6 298.7 l-4.3 0.0 M364.0 300.0 l-5.0 2.2 M372.0 296.3 l-2.0 -5.6 M368.2 304.8 l0.9 8.3 M374.7 295.2 l-7.4 3.9 M366.6 294.1 l-7.7 -2.3 M368.2 287.1 l-1.1 8.3 M368.3 290.0 l1.6 -5.3 M369.4 303.6 l2.7 -7.1 M370.7 286.6 l1.4 -8.6 M363.5 298.4 l-2.7 4.4 M363.5 300.7 l5.5 3.2 M363.5 292.8 l-0.5 8.9 M370.1 287.3 l-1.0 -3.3 M365.8 304.2 l0.8 -3.9 M361.6 291.0 l1.8 -3.2 M368.9 288.5 l3.2 -0.9 M366.9 286.3 l1.9 -4.0 M360.0 300.2 l-5.1 -2.5 M363.1 300.4 l4.6 2.5 M374.5 290.2 l3.0 6.4 M371.3 293.4 l-3.1 5.6 M366.7 304.1 l0.8 -5.2 M373.3 287.9 l2.0 6.8 M373.7 301.5 l5.0 1.7 M368.0 287.9 l-3.2 2.3 M370.4 288.9 l1.9 7.9 M367.1 287.8 l-6.7 3.3 M371.0 299.4 l-2.7 -4.9 M367.8 296.9 l2.3 7.2 M374.8 298.3 l-4.2 3.4 M362.5 303.6 l5.8 -1.3 M370.3 289.3 l4.0 -7.8 M364.9 302.9 l-1.8 7.1 M368.1 305.2 l3.7 -1.5 M367.1 294.1 l3.5 0.5" stroke="#4a4f45" stroke-width="0.8" fill="none" stroke-linecap="round" opacity="0.8"/><path d="M378 232 Q355 240 325 262 M378 250 Q360 262 340 272" stroke="#5a5c52" stroke-width="1.1" fill="none"/><rect x="378.0" y="0.0" width="5.5" height="464.8" fill="#f3f1ee" /><rect x="383.5" y="0.0" width="54.5" height="464.8" fill="#a8a198" /><rect x="47.0" y="437.0" width="331.0" height="28.0" fill="url(#p1_stF)" /><ellipse cx="160.0" cy="441.0" rx="60.0" ry="5.0" fill="#8a847e" filter="url(#p1_stB2)" opacity=".7"/><rect x="0.0" y="464.8" width="438.0" height="20.5" fill="#d0c9bc" /><line x1="0.0" y1="471.0" x2="438.0" y2="471.0" stroke="#bdb6a8" stroke-width="0.8" stroke-dasharray="9 2"/><line x1="4.0" y1="477.5" x2="438.0" y2="477.5" stroke="#bdb6a8" stroke-width="0.8" stroke-dasharray="9 2"/><line x1="0.0" y1="484.8" x2="438.0" y2="484.8" stroke="#e3dfd8" stroke-width="1.4" /><rect x="0.0" y="485.3" width="438.0" height="71.0" fill="url(#p1_stC)" /><path d="M276 425 C270 395 274 372 278 360 C290 355 300 358 305 366 C312 358 328 358 336 368 C340 395 338 415 333 430 Z" fill="#8db1ab"/><path d="M305 366 C300 390 300 410 302 428" stroke="#6f948f" stroke-width="1.6" fill="none"/><path d="M318 362 C334 360 338 380 336 425 L326 428 C330 400 328 380 318 362 Z" fill="#6f9691" opacity=".7"/><line x1="221.0" y1="386.5" x2="272.0" y2="386.0" stroke="#4a3a33" stroke-width="3.6" stroke-linecap="round"/><line x1="241.5" y1="388.0" x2="241.5" y2="424.0" stroke="#4a3a33" stroke-width="2.4" /><circle cx="220.6" cy="386.5" r="2.0" fill="#f5e9c8" /><path d="M212.100 434 V470 A62.200 10 0 0 0 336.500 470 V434 Z" fill="url(#p1_stSe)"/><ellipse cx="274.3" cy="434.0" rx="62.2" ry="12.5" fill="#7b978f" /><ellipse cx="262.0" cy="431.0" rx="44.0" ry="6.0" fill="#8aa69e" opacity=".6"/><path d="M212.100 471 A62.200 10 0 0 0 336.500 471" fill="none" stroke="#6a3f33" stroke-width="1.8"/><line x1="323.6" y1="392.0" x2="323.6" y2="476.0" stroke="#5a4038" stroke-width="2" /><line x1="335.5" y1="390.0" x2="335.5" y2="472.0" stroke="#5a4038" stroke-width="2" /><line x1="305.0" y1="392.0" x2="337.0" y2="390.0" stroke="#5a4038" stroke-width="2.2" /><circle cx="310.5" cy="392.0" r="2.0" fill="#f5e9c8" /><polygon points="266.3,388.6 310.3,392.9 305.2,425.0 260.3,420.8" fill="url(#p1_stY)" stroke-linejoin="round" stroke="#efa53c" stroke-width="1.5"/></svg></div><div class="cap r" style="left:564px;top:117.00000000000001px;width:370.5px">View Project</div><div class="photo" style="left:564px;top:222.9px;width:370.5px;height:155px;"><svg viewBox="0.00 115.20 778.00 325.50" preserveAspectRatio="none"><defs><linearGradient id="p2_bW" x1="0" y1="0" x2="1" y2="0"><stop offset="0" stop-color="#e3ddd3"/><stop offset=".3" stop-color="#dcd6cc"/><stop offset=".6" stop-color="#d8d2c8"/><stop offset="1" stop-color="#dbd5cb"/></linearGradient><radialGradient id="p2_bRing"><stop offset=".42" stop-color="#dcc8a0"/><stop offset=".44" stop-color="#c99f5a"/><stop offset=".5" stop-color="#d8be8c"/><stop offset=".58" stop-color="#c39a55"/><stop offset=".64" stop-color="#dcc698"/><stop offset=".72" stop-color="#c39a55"/><stop offset=".78" stop-color="#dbc394"/><stop offset=".86" stop-color="#c49b57"/><stop offset=".92" stop-color="#d9bf8e"/><stop offset=".97" stop-color="#c99f5a"/><stop offset="1" stop-color="#cfa763"/></radialGradient></defs><rect x="0.0" y="0.0" width="778.0" height="556.0" fill="url(#p2_bW)" /><rect x="0.0" y="0.0" width="778.0" height="38.5" fill="#e2dbd1" /><line x1="0.0" y1="38.5" x2="778.0" y2="38.5" stroke="#d3ccc1" stroke-width="1.2" /><rect x="690.8" y="38.0" width="88.0" height="518.0" fill="#e4dfd8" /><line x1="690.8" y1="38.0" x2="690.8" y2="440.0" stroke="#cfc9bf" stroke-width="1" /><rect x="0.0" y="428.0" width="778.0" height="128.0" fill="#b99569" /><rect x="0.0" y="424.0" width="778.0" height="5.0" fill="#e9e5de" /><circle cx="370.3" cy="237.4" r="60.8" fill="#dac6a0" /><circle cx="370.3" cy="237.4" r="30.4" fill="none" stroke="#c6a266" stroke-width="1.7"/><circle cx="370.3" cy="237.4" r="37.7" fill="none" stroke="#c6a266" stroke-width="1.7"/><circle cx="370.3" cy="237.4" r="45.0" fill="none" stroke="#c6a266" stroke-width="1.7"/><circle cx="370.3" cy="237.4" r="52.3" fill="none" stroke="#c6a266" stroke-width="1.7"/><circle cx="370.3" cy="237.4" r="59.6" fill="none" stroke="#c59d58" stroke-width="2.4"/><circle cx="370.3" cy="237.4" r="25.8" fill="#e7e3dd" /><circle cx="479.2" cy="178.3" r="60.4" fill="#dac6a0" /><circle cx="479.2" cy="178.3" r="30.2" fill="none" stroke="#c6a266" stroke-width="1.7"/><circle cx="479.2" cy="178.3" r="37.4" fill="none" stroke="#c6a266" stroke-width="1.7"/><circle cx="479.2" cy="178.3" r="44.7" fill="none" stroke="#c6a266" stroke-width="1.7"/><circle cx="479.2" cy="178.3" r="51.9" fill="none" stroke="#c6a266" stroke-width="1.7"/><circle cx="479.2" cy="178.3" r="59.2" fill="none" stroke="#c59d58" stroke-width="2.4"/><circle cx="479.2" cy="178.3" r="26.2" fill="#e7e3dd" /><path d="M345.500 231 H395.100 A25.800 25.800 0 0 1 345.500 231 Z" fill="#15120f"/><rect x="470.5" y="178.5" width="25.0" height="26.0" fill="#15120f" /><rect x="499.5" y="177.5" width="5.0" height="18.0" fill="#15120f" /><line x1="665.0" y1="256.0" x2="665.0" y2="396.0" stroke="#c89a5e" stroke-width="4.5" /><rect x="662.8" y="310.0" width="4.5" height="44.0" fill="#f1eee8" /><rect x="631.6" y="221.0" width="68.4" height="35.0" fill="#dfdbd4" rx="2"/><ellipse cx="712.0" cy="250.0" rx="10.0" ry="26.0" fill="#bdb7ad" opacity=".45"/><path d="M216.0 276.0 l5.7 -19.4 M230.4 261.7 l13.3 2.5 M251.6 288.8 l7.0 -5.0 M219.3 303.8 l-14.5 -4.1 M244.1 301.5 l-3.7 19.5 M233.0 284.1 l2.6 -8.6 M225.2 290.4 l19.2 0.2 M235.0 318.0 l19.1 -2.1 M225.8 338.0 l-16.0 -4.0 M239.1 337.2 l-7.5 -19.1 M243.2 286.5 l-6.0 7.1 M236.0 308.1 l-4.9 14.6 M253.4 300.7 l-5.9 9.7 M239.5 274.8 l-5.5 12.6 M230.3 290.8 l7.2 -1.1 M232.0 263.2 l17.9 2.0 M218.8 322.7 l7.6 0.4 M242.7 335.5 l5.8 16.6 M254.8 283.4 l-6.7 9.9 M209.4 294.6 l13.6 11.0 M239.0 264.5 l19.7 4.6 M244.8 312.7 l-15.2 -12.7 M218.6 332.5 l-10.9 -3.2 M227.5 315.4 l8.0 4.3 M222.3 262.9 l4.1 6.5 M250.9 297.6 l-8.6 5.8 M212.4 279.8 l-12.4 3.5 M255.4 313.1 l13.6 2.8 M237.0 287.7 l-2.3 -20.2 M216.2 274.1 l10.3 8.1 M246.1 329.6 l-3.7 12.8 M256.0 299.8 l13.2 -2.0 M209.9 302.5 l-11.0 1.5 M223.8 308.7 l-14.9 14.5 M251.9 292.1 l-11.7 0.0 M243.5 311.1 l3.8 -18.8 M217.2 327.1 l2.6 -16.5 M220.3 270.1 l-11.0 12.8 M228.5 327.4 l2.1 -16.5 M225.1 337.4 l-8.9 -12.2 M251.2 302.2 l-0.1 16.4 M209.1 308.3 l-10.9 -14.5 M220.0 326.2 l-1.4 -18.5 M218.0 329.7 l11.4 -12.1 M257.1 294.2 l-14.3 -1.6 M244.0 331.6 l12.6 -5.2 M224.1 268.3 l-1.2 -9.3 M235.8 270.1 l-6.5 -11.1 M215.7 275.3 l-11.1 -12.9 M242.2 302.8 l-15.0 5.8 M236.2 332.5 l-5.2 -5.6 M219.8 303.4 l8.4 3.0 M227.5 315.5 l2.6 7.0 M216.3 305.3 l-11.6 -9.9 M233.9 337.9 l12.7 0.1 M229.0 325.2 l14.0 12.3 M228.5 305.4 l-6.3 -5.5 M217.5 293.5 l-17.8 -9.9 M239.0 276.5 l6.2 -14.8 M225.3 311.0 l-12.3 -8.4 M256.7 289.5 l-9.2 -7.5 M232.6 299.2 l11.6 9.4 M224.7 290.1 l-13.4 -14.2 M219.9 318.5 l1.6 11.0 M247.8 295.8 l19.2 -4.8 M221.1 288.5 l13.8 -1.7 M219.3 311.4 l13.8 -1.4 M227.9 326.9 l11.3 10.9 M218.8 307.5 l3.7 -18.2 M250.9 302.4 l-3.0 19.9 M234.6 280.6 l-1.0 9.1 M246.0 298.5 l-10.6 -8.6 M219.6 275.5 l-0.4 -8.6 M232.9 278.1 l-11.4 -2.4 M226.5 327.9 l-11.8 2.7 M231.4 269.3 l10.3 2.4 M208.1 310.5 l11.2 -9.5 M254.8 303.2 l-13.5 6.6 M226.6 269.3 l-19.6 2.2 M219.8 316.5 l5.8 -7.8 M218.3 286.2 l17.1 7.5 M218.9 241.4 l-4.1 17.5 M226.5 254.0 l-14.6 2.0 M213.9 260.3 l8.7 12.5 M223.4 252.7 l2.3 18.3 M225.0 236.4 l16.9 2.7 M235.9 256.0 l-2.3 -7.3 M225.6 248.2 l-12.4 -16.1 M220.8 249.3 l-5.2 19.1 M228.4 278.9 l-7.9 4.8 M219.9 255.6 l9.6 7.7 M225.0 263.1 l-15.5 -7.9 M225.7 252.4 l-10.4 4.7 M214.1 247.6 l11.3 -4.6 M233.0 268.6 l9.2 12.9 M208.7 258.9 l-14.8 -5.3 M221.1 282.2 l-0.5 17.5 M216.9 258.8 l1.2 12.1 M221.5 247.3 l-3.7 -15.7 M231.8 272.5 l7.4 4.7 M216.3 251.8 l9.8 -9.6 M216.4 284.0 l16.9 3.2 M227.1 263.9 l15.8 -4.9 M222.8 270.1 l16.1 -2.8 M224.2 249.9 l-8.5 -8.4 M222.8 277.2 l-9.0 -7.8 M218.1 267.3 l7.8 -14.0 M225.1 241.4 l8.5 -11.4 M213.1 247.5 l-0.8 -12.5 M224.1 263.1 l2.2 7.2 M229.5 246.7 l0.5 -7.0 M209.0 265.3 l-9.5 -8.9 M217.7 262.0 l5.2 7.6 M215.9 273.2 l6.7 -6.2 M221.8 275.8 l5.8 9.4 M222.9 280.7 l19.5 4.0 M212.8 281.3 l-6.3 -15.2 M208.6 265.2 l12.1 11.0 M219.1 283.8 l-1.2 -9.2 M222.7 264.5 l1.0 8.0 M210.8 277.2 l-7.5 8.6 M214.7 263.2 l-1.9 -16.9 M225.6 272.6 l-9.5 -17.8 M216.4 244.4 l7.0 -1.1 M233.5 269.9 l-6.4 4.1 M208.7 251.1 l-11.8 -1.4 M225.1 264.5 l11.2 -8.2 M225.0 257.3 l0.3 7.7 M219.3 264.4 l-0.4 12.7 M220.9 266.4 l20.0 4.8 M226.3 279.3 l-11.8 8.3 M228.8 268.5 l11.4 9.2 M231.5 249.0 l6.2 -7.8 M232.2 262.4 l-14.9 1.3 M214.1 276.6 l-3.0 -19.6 M218.7 278.8 l4.7 -9.0 M227.8 271.1 l15.2 9.3 M225.3 244.8 l5.6 5.9 M222.1 268.7 l-13.6 6.5 M222.1 267.4 l-2.3 -7.3 M224.3 275.3 l-5.9 6.0 M215.1 268.0 l0.2 -14.8 M231.0 245.3 l0.9 -15.0 M210.2 269.6 l-11.4 -16.9 M220.4 235.1 l-2.0 18.3 M218.3 267.3 l8.6 3.8 M221.1 284.6 l-1.7 7.7 M222.9 237.7 l7.6 1.3 M227.7 273.1 l12.9 -15.6 M216.9 250.7 l-10.9 5.2 M221.2 262.9 l-16.0 -9.4 M221.4 250.8 l-9.2 -1.8 M219.6 240.6 l16.8 -6.8 M227.8 271.4 l11.6 -6.8 M213.5 268.0 l2.2 -20.0 M208.5 254.0 l-7.0 -4.8 M225.6 242.1 l19.6 6.7 M232.4 264.7 l-19.2 2.2 M216.9 268.7 l-1.7 9.7 M214.3 253.1 l0.1 -10.4 M245.8 342.0 l18.6 -2.1 M256.5 310.9 l-7.3 5.3 M254.8 311.7 l9.1 2.2 M259.7 344.8 l7.9 -5.7 M252.3 313.7 l-7.8 -17.4 M241.0 311.2 l-5.1 5.0 M239.3 328.3 l5.0 11.4 M249.1 334.5 l-4.7 11.4 M238.4 333.8 l-16.7 12.3 M255.4 303.6 l-5.8 -15.3 M237.8 323.9 l-10.0 11.6 M245.7 310.4 l-1.7 7.9 M257.1 339.3 l-15.4 -8.5 M248.3 313.8 l9.8 -4.7 M249.2 322.1 l0.3 -16.4 M262.8 322.4 l-7.2 -17.3 M249.2 306.6 l3.6 13.8 M255.4 321.1 l14.4 -2.3 M249.4 331.0 l-7.3 6.0 M242.4 306.7 l13.2 -8.3 M246.5 336.5 l-5.5 -13.7 M248.1 312.1 l7.6 -6.5 M247.5 344.6 l-14.1 -13.6 M255.5 350.7 l1.0 -10.1 M259.7 338.7 l9.3 -16.9 M248.8 310.8 l-12.8 6.5 M256.4 320.7 l-3.0 15.2 M255.9 327.3 l8.5 1.6 M240.0 321.1 l3.9 8.8 M240.7 316.5 l-6.3 -16.0 M259.0 337.9 l10.3 -17.6 M244.6 355.1 l-12.2 -15.8 M251.5 354.8 l7.4 -11.5 M255.0 337.8 l4.6 6.9 M256.3 349.2 l13.9 10.8 M248.9 303.0 l5.6 -16.0 M262.2 316.5 l-14.5 -14.5 M253.6 335.8 l9.1 3.9 M243.3 344.4 l-7.4 -15.8 M257.7 339.6 l-11.8 -3.3 M258.0 345.6 l-11.7 11.8 M236.3 330.8 l7.5 -2.7 M250.7 304.6 l-2.5 8.3 M241.7 332.3 l-1.6 -19.8 M244.4 340.9 l-16.8 0.1 M252.6 307.9 l-3.3 11.2 M255.8 312.4 l12.2 4.0 M250.9 354.4 l9.7 4.8 M258.0 341.8 l14.5 -1.4 M239.8 349.0 l10.0 6.5 M250.4 328.0 l1.2 -12.0 M257.0 331.5 l-11.9 3.2 M246.8 329.3 l4.0 20.2 M241.0 337.3 l9.4 5.6 M261.1 323.0 l-7.7 -0.4 M240.3 346.5 l-14.0 6.1 M259.2 316.1 l-4.9 -5.7 M262.1 333.9 l-16.5 10.0 M256.1 304.5 l-15.2 14.5 M250.5 301.7 l10.7 14.4 M237.8 343.9 l10.0 -0.4 M243.6 337.4 l-10.8 2.1 M247.5 320.9 l6.5 11.7 M257.7 338.3 l15.5 -11.7 M250.6 333.9 l9.7 -18.0 M245.8 323.6 l1.7 19.8 M252.3 328.0 l5.2 11.9 M248.7 355.9 l-12.5 12.8 M255.8 347.6 l16.6 -2.6 M253.9 335.4 l-7.6 -9.6 M243.4 345.2 l-17.9 -10.1 M250.6 352.6 l-1.2 14.6 M249.4 319.1 l-16.8 2.0 M262.3 331.3 l-12.3 6.9 M240.4 312.9 l13.1 4.8 M258.4 334.4 l-4.1 6.0 M247.2 349.2 l-11.2 -16.5 M243.0 345.9 l-4.6 -19.6 M263.2 320.7 l-3.0 8.8 M253.5 326.5 l-16.4 5.5" stroke="#d9b88a" stroke-width="2.2" fill="none" stroke-linecap="round" opacity="0.8"/><rect x="214.0" y="340.0" width="8.0" height="90.0" fill="#e9e5de" /><rect x="253.0" y="356.0" width="357.0" height="60.0" fill="#e6e2db" rx="10"/><rect x="253.0" y="338.0" width="18.0" height="78.0" fill="#dedad3" rx="6"/><rect x="268.0" y="394.0" width="330.0" height="28.0" fill="#f0ede8" rx="8"/><rect x="262.0" y="414.0" width="350.0" height="16.0" fill="#e9e6e0" /><rect x="292.0" y="328.0" width="56.0" height="56.0" fill="#d6cbb6" rx="8"/><rect x="330.0" y="332.0" width="66.0" height="60.0" fill="#d2c5ae" rx="8"/><rect x="274.0" y="346.0" width="34.0" height="50.0" fill="#ddd6c8" rx="8"/><rect x="412.0" y="326.0" width="52.0" height="66.0" fill="#cfbfa5" rx="8"/><rect x="464.0" y="328.0" width="66.0" height="66.0" fill="#f3f1ec" rx="8"/><rect x="520.0" y="326.0" width="54.0" height="62.0" fill="#ddd7c6" rx="8"/><rect x="566.0" y="346.0" width="36.0" height="50.0" fill="#e9e6e0" rx="8"/><polygon points="436.0,390.0 520.0,388.0 528.0,440.0 440.0,444.0" fill="#dbcfba" /><path d="M442.5 399.7 h9.2 M459.3 399.7 h9.2 M476.1 399.7 h9.2 M492.9 399.7 h9.2 M509.7 399.7 h9.2 M447.6 407.0 h9.2 M464.4 407.0 h9.2 M481.2 407.0 h9.2 M498.0 407.0 h9.2 M514.8 407.0 h9.2 M442.5 414.3 h9.2 M459.3 414.3 h9.2 M476.1 414.3 h9.2 M492.9 414.3 h9.2 M509.7 414.3 h9.2 M447.6 421.7 h9.2 M464.4 421.7 h9.2 M481.2 421.7 h9.2 M498.0 421.7 h9.2 M514.8 421.7 h9.2 M442.5 429.0 h9.2 M459.3 429.0 h9.2 M476.1 429.0 h9.2 M492.9 429.0 h9.2 M509.7 429.0 h9.2 M447.6 436.3 h9.2 M464.4 436.3 h9.2 M481.2 436.3 h9.2 M498.0 436.3 h9.2 M514.8 436.3 h9.2" stroke="#efe9dc" stroke-width="2.2" fill="none"/><line x1="290.0" y1="430.0" x2="286.0" y2="442.0" stroke="#c89a5e" stroke-width="3" /><line x1="570.0" y1="430.0" x2="574.0" y2="442.0" stroke="#c89a5e" stroke-width="3" /><ellipse cx="436.0" cy="440.0" rx="80.0" ry="16.0" fill="#efede9" /><rect x="397.0" y="382.0" width="18.0" height="52.0" fill="#efece7" rx="7"/><ellipse cx="406.0" cy="428.0" rx="16.0" ry="16.0" fill="#efece7" /><ellipse cx="445.0" cy="434.0" rx="26.0" ry="5.0" fill="#d9c25a" /><ellipse cx="240.0" cy="446.0" rx="36.0" ry="14.0" fill="#ece8df" /><polygon points="625.5,395.0 677.0,395.0 672.0,440.0 630.0,440.0" fill="#cdb994" /><line x1="628.0" y1="410.0" x2="675.0" y2="410.0" stroke="#b39b70" stroke-width="1.5" /><line x1="629.0" y1="424.0" x2="674.0" y2="424.0" stroke="#b39b70" stroke-width="1.5" /><polygon points="680.0,428.0 778.0,460.0 778.0,470.0 690.0,440.0" fill="#d9b58a" /></svg></div><div class="cap r" style="left:564px;top:393.2px;width:370.5px">View Project</div><div class="photo" style="left:564px;top:499.1px;width:370.5px;height:155px;"><svg viewBox="0.00 0.00 286.00 119.70" preserveAspectRatio="none"><defs><linearGradient id="p3_glW" x1="0" y1="0" x2="1" y2="0"><stop offset="0" stop-color="#d6d4d1"/><stop offset=".74" stop-color="#dad8d5"/><stop offset=".78" stop-color="#e7e6e3"/><stop offset=".88" stop-color="#dddbd8"/><stop offset=".94" stop-color="#c9c7c3"/><stop offset=".97" stop-color="#d5d3d0"/><stop offset=".975" stop-color="#efeeec"/><stop offset="1" stop-color="#ecebe9"/></linearGradient></defs><rect x="0.0" y="0.0" width="286.0" height="120.0" fill="url(#p3_glW)" /><rect x="20.0" y="-5.0" width="52.0" height="35.0" fill="#f1f0ee" stroke="#2a2826" stroke-width="1"/><rect x="26.0" y="0.0" width="40.0" height="24.0" fill="#8a8178" /><rect x="6.0" y="40.0" width="64.0" height="60.0" fill="#f1f0ee" stroke="#2a2826" stroke-width="1"/><rect x="14.0" y="48.0" width="48.0" height="44.0" fill="#5d554d" /><rect x="73.6" y="-3.0" width="21.8" height="17.5" fill="#f1f0ee" stroke="#3a3835" stroke-width="0.8"/><rect x="69.1" y="22.9" width="21.8" height="57.0" fill="#eceae7" stroke="#e4e3e0" stroke-width="1.2"/><polygon points="80.3,37.4 89.2,36.3 89.2,58.6 80.3,51.9" fill="#8a7a68" /><polygon points="80.3,60.9 89.2,67.6 89.2,77.6 80.3,74.3" fill="#c9c4bc" /><rect x="103.8" y="-3.0" width="58.6" height="39.3" fill="#f3f2f0" stroke="#e2e0dc" stroke-width="1.2"/><rect x="108.2" y="-3.0" width="49.7" height="33.2" fill="#1f1b18" /><polygon points="121.6,0.0 149.5,0.0 151.8,8.4 140.6,11.7 141.2,30.2 118.8,30.2 119.9,17.3" fill="#e9e6e0" /><rect x="170.5" y="-3.0" width="46.6" height="39.9" fill="#eeedea" stroke="#262422" stroke-width="1.1"/><path d="M176.3 1.7 v12.0 h8.0 v9.0 h14.0" stroke="#2a2725" stroke-width="2.400" fill="none"/><path d="M206.5 0.6 Q203.1 15.1 197.6 21.2" stroke="#2a2725" stroke-width="2.600" fill="none"/><line x1="175.2" y1="21.2" x2="196.4" y2="21.2" stroke="#2a2725" stroke-width="2.4" /><line x1="184.2" y1="29.6" x2="184.7" y2="35.2" stroke="#2a2725" stroke-width="1.2" /><rect x="105.4" y="46.1" width="33.5" height="45.8" fill="#f0efed" stroke="#262422" stroke-width="1.1"/><rect x="112.1" y="53.6" width="20.1" height="30.7" fill="#e6dfd4" /><rect x="112.1" y="77.1" width="20.1" height="7.3" fill="#16130f" /><rect x="117.7" y="66.4" width="8.0" height="13.0" fill="#cfc9be" /><rect x="149.3" y="46.6" width="45.4" height="33.3" fill="#f0efed" stroke="#262422" stroke-width="1.1"/><rect x="155.1" y="50.3" width="34.1" height="25.7" fill="#7a7067" /><polygon points="155.1,50.3 189.2,50.3 189.2,60.9 171.9,64.2 155.1,56.4" fill="#b3aa9e" /><polygon points="169.6,75.9 189.2,75.9 189.2,67.6 178.6,66.4" fill="#2d2823" /><rect x="217.4" y="93.2" width="11.6" height="20.0" fill="#5a4f42" rx="2"/><path d="M222.1 93.2 L192.0 28.5 M222.7 93.2 L221.0 34.1 M223.8 93.2 L252.3 37.4 M223.2 93.2 L212.1 43.0 M224.4 93.2 L247.8 47.5" stroke="#d9cfba" stroke-width=".8" fill="none"/><rect x="0.0" y="101.1" width="105.4" height="20.0" fill="#f0efed" /><rect x="107.1" y="103.3" width="70.4" height="20.0" fill="#efeeec" /></svg></div></div><div class="top"><svg class="abs" style="left:5px;top:8px" width="15" height="10" viewBox="0 0 30 20"><path fill="#e9e9e9" d="M30 0 L20.400 19 H11.400 L15.400 11.100 H15.200 C11.900 15.500 7 18.300 0 19 V11.300 C0 11.300 4.500 11 7.100 8.200 H0 V0 H8 V6.600 L8.200 6.600 L11.500 0 H17.500 V6.500 L17.700 6.500 L21.100 0 Z"/></svg><div class="abs" style="left:26px;top:0;width:1px;height:27px;background:#2b2b2b"></div><div class="btn" style="left:32px;width:51px;"><svg class="ic" style="left:6.5px;top:3.3px;stroke-width:1.600;color:#c8c8c8;" width="10" height="11.5" viewBox="0 0 16 16" preserveAspectRatio="none"><path d="M3.5 2.500 H9.500 L12.500 5.500 V13.500 H3.500 Z"/><path d="M9.500 2.500 V5.500 H12.500"/></svg><span class="t" style="left:21.5px;top:4.85px;font-size:8.8px">Home</span></div><svg class="ic" style="left:418.5px;top:12.2px;stroke-width:1.467;stroke:#a3a3a3;color:#a3a3a3;" width="9" height="3" viewBox="0 0 12 4" preserveAspectRatio="none"><circle cx="2" cy="2" r="1" fill="currentColor" stroke="none"/><circle cx="6" cy="2" r="1" fill="currentColor" stroke="none"/><circle cx="10" cy="2" r="1" fill="currentColor" stroke="none"/></svg><div class="abs" style="left:440px;top:0;width:33px;height:26px;background:#2f2f2f"></div><svg class="ic" style="left:447.5px;top:6.5px;stroke-width:1.035;color:#c8c8c8;" width="17" height="13" viewBox="0 0 16 12" preserveAspectRatio="none"><path d="M2.500 3 V9.500 H12.500 V6.500"/><path d="M2.500 3 H9"/><path d="M0.800 11.200 H14.200"/><path d="M12.600 0.300 L13.300 2.100 L15.100 2.800 L13.300 3.500 L12.600 5.300 L11.900 3.500 L10.100 2.800 L11.900 2.100 Z" fill="currentColor" stroke="none"/></svg><svg class="ic" style="left:484.8px;top:6.8px;stroke-width:1.389;color:#c8c8c8;" width="9.5" height="12.6" viewBox="0 0 12 16" preserveAspectRatio="none"><rect x="1.200" y="1.200" width="9.600" height="13.600" rx="1"/><path d="M4.500 13 H7.500"/></svg><svg class="ic" style="left:516.5px;top:8.5px;stroke-width:1.467;color:#c8c8c8;" width="12" height="9" viewBox="0 0 16 12" preserveAspectRatio="none"><rect x="1" y="1.500" width="14" height="9" rx="1.200"/><path d="M12.800 4.500 V7.500"/></svg><svg class="ic" style="left:552px;top:6.8px;stroke-width:1.375;color:#c8c8c8;" width="8" height="12.6" viewBox="0 0 10 16" preserveAspectRatio="none"><rect x="1.300" y="1.200" width="7.400" height="13.600" rx="1"/><path d="M4 13 H6"/></svg><div class="t" style="left:582px;top:9.3px;font-size:8.8px;color:#cfcfcf;letter-spacing:.05px">1369 PX</div><div class="btn" style="left:918px;width:83px;"><svg class="ic" style="left:7px;top:5px;stroke-width:1.650;color:#c8c8c8;" width="8" height="8" viewBox="0 0 12 12" preserveAspectRatio="none"><path d="M10.500 1.200 L4.800 6.500 L6 7.700 L11 2 Z" fill="currentColor"/><path d="M4.300 7.300 C2.800 7.300 2.600 9 1.200 10.300 C3 10.900 5.300 10.300 5.300 8.300 Z" fill="currentColor"/></svg><span class="t" style="left:20px;top:4.9px">Designing</span><svg class="ic" style="left:68px;top:7px;stroke-width:1.467;color:#c8c8c8;" width="6" height="4" viewBox="0 0 8 5" preserveAspectRatio="none"><path d="M1 1 L4 4 L7 1"/></svg></div><svg class="ic" style="left:1013px;top:7px;stroke-width:1.467;color:#c8c8c8;" width="12" height="12" viewBox="0 0 16 16" preserveAspectRatio="none"><path d="M3 7.500 A5 5 0 0 1 12 5"/><path d="M13 8.500 A5 5 0 0 1 4 11"/><path d="M12.300 2.500 V5.200 H9.600"/><path d="M3.700 13.500 V10.800 H6.400"/></svg><svg class="ic" style="left:1037px;top:8px;stroke-width:1.467;color:#c8c8c8;" width="12" height="10" viewBox="0 0 16 14" preserveAspectRatio="none"><path d="M5 3.500 L1.500 7 L5 10.500"/><path d="M11 3.500 L14.500 7 L11 10.500"/><path d="M9.200 2 L6.800 12"/></svg><svg class="ic" style="left:1061px;top:7px;stroke-width:1.467;color:#c8c8c8;" width="12" height="12" viewBox="0 0 16 16" preserveAspectRatio="none"><path d="M8 2 A6 6 0 1 1 3.500 12 L2 14 V8 A6 6 0 0 1 8 2 Z"/><path d="M5.500 7 H10.500"/><path d="M5.500 9.500 H8.500"/></svg><svg class="ic" style="left:1087px;top:7px;stroke-width:1.467;color:#c8c8c8;" width="9" height="12" viewBox="0 0 12 16" preserveAspectRatio="none"><path d="M2 2.500 L10.500 8 L2 13.500 Z"/></svg><div class="btn" style="left:1110px;width:51px;"><svg class="ic" style="left:7px;top:4px;stroke-width:1.711;color:#c8c8c8;" width="9" height="10" viewBox="0 0 14 14" preserveAspectRatio="none"><circle cx="7" cy="4.300" r="2.500"/><path d="M1.800 12.500 C2.300 9 4.500 8.300 7 8.300 C9.500 8.300 11.700 9 12.200 12.500 Z"/></svg><span class="t" style="left:21.5px;top:5px;font-size:8.7px">Share</span></div><div class="btn" style="left:1167px;width:71px;"><svg class="ic" style="left:6px;top:4px;stroke-width:1.540;color:#c8c8c8;" width="10" height="10" viewBox="0 0 14 14" preserveAspectRatio="none"><path d="M7 1.200 C9.500 3 10 6 9.500 9.500 H4.500 C4 6 4.500 3 7 1.200 Z"/><path d="M4.500 7.500 L2 10 V12 H4.500"/><path d="M9.500 7.500 L12 10 V12 H9.500"/><path d="M5.500 11.500 H8.500"/></svg><span class="t" style="left:20.5px;top:5px;font-size:8.9px">Publish</span><svg class="ic" style="left:57px;top:7px;stroke-width:1.467;color:#c8c8c8;" width="6" height="4" viewBox="0 0 8 5" preserveAspectRatio="none"><path d="M1 1 L4 4 L7 1"/></svg></div></div><div class="side"><svg class="ic" style="left:6px;top:4.5px;stroke-width:1.257;color:#c8c8c8;" width="14" height="14" viewBox="0 0 16 16" preserveAspectRatio="none"><path d="M8 2 V14 M2 8 H14"/></svg><svg class="ic" style="left:6px;top:32px;stroke-width:1.257;color:#c8c8c8;" width="14" height="14" viewBox="0 0 16 16" preserveAspectRatio="none"><path d="M3.5 2.500 H9.500 L12.500 5.500 V13.500 H3.500 Z"/><path d="M9.500 2.500 V5.500 H12.500"/></svg><svg class="ic" style="left:6px;top:58px;stroke-width:1.257;color:#c8c8c8;" width="14" height="14" viewBox="0 0 16 16" preserveAspectRatio="none"><path d="M1.500 4 H11"/><path d="M4.500 8 H14.500"/><path d="M4.500 12 H14.500"/></svg><svg class="ic" style="left:6px;top:92.4px;stroke-width:1.257;color:#c8c8c8;" width="14" height="14" viewBox="0 0 16 16" preserveAspectRatio="none"><path d="M8 1.500 L14 4.800 V11.200 L8 14.500 L2 11.200 V4.800 Z"/><path d="M2 4.800 L8 8 L14 4.800"/><path d="M8 8 V14.500"/><path d="M5 3.200 L11 6.400"/></svg><svg class="ic" style="left:6px;top:118.4px;stroke-width:1.257;color:#c8c8c8;" width="14" height="14" viewBox="0 0 16 16" preserveAspectRatio="none"><path d="M4.500 1.500 C5.800 3.500 6.500 4.500 6.500 5.700 A2 2 0 0 1 2.500 5.700 C2.500 4.500 3.200 3.500 4.500 1.500 Z"/><path d="M11.500 1.500 C12.800 3.500 13.500 4.500 13.500 5.700 A2 2 0 0 1 9.500 5.700 C9.500 4.500 10.200 3.500 11.500 1.500 Z"/><path d="M8 8.500 C9.300 10.500 10 11.500 10 12.700 A2 2 0 0 1 6 12.700 C6 11.500 6.700 10.500 8 8.500 Z"/></svg><svg class="ic" style="left:6px;top:145.3px;stroke-width:1.257;color:#c8c8c8;" width="14" height="14" viewBox="0 0 16 16" preserveAspectRatio="none"><rect x="4" y="3.500" width="10.500" height="10.500" rx="1.500"/><path d="M4 12 L8 8.500 L11 11 L12.500 10 L14.500 11.800"/><path d="M1.500 10.500 L1.500 5 L4 2.500 L5.500 1.500"/><circle cx="7" cy="6.300" r=".8"/></svg><svg class="ic" style="left:6px;top:172px;stroke-width:1.257;color:#c8c8c8;" width="14" height="14" viewBox="0 0 16 16" preserveAspectRatio="none"><ellipse cx="8" cy="4" rx="5.500" ry="2.300"/><path d="M2.500 4 V12 C2.500 13.300 5 14.300 8 14.300 C11 14.300 13.500 13.300 13.500 12 V4"/><path d="M2.500 8 C2.500 9.300 5 10.300 8 10.300 C11 10.300 13.500 9.300 13.500 8"/></svg><svg class="ic" style="left:6px;top:198.3px;stroke-width:1.257;color:#c8c8c8;" width="14" height="14" viewBox="0 0 16 16" preserveAspectRatio="none"><path d="M8 1.500 V6"/><path d="M3.500 11 V7.500 Q3.500 6 5 6 H11 Q12.500 6 12.500 7.500 V9.500"/><circle cx="3.500" cy="12.700" r="1.500"/><path d="M11 11 L14 14 M14 11 L11 14"/></svg><svg class="ic" style="left:6px;top:225px;stroke-width:1.257;color:#c8c8c8;" width="14" height="14" viewBox="0 0 16 16" preserveAspectRatio="none"><circle cx="8" cy="5" r="3"/><path d="M2.500 14 C3 10.500 5 9.500 8 9.500 C11 9.500 13 10.500 13.500 14 Z"/></svg><svg class="ic" style="left:6px;top:251px;stroke-width:1.257;color:#c8c8c8;" width="14" height="14" viewBox="0 0 16 16" preserveAspectRatio="none"><path d="M1.500 7 H14.500 L13 13.500 H3 Z"/><path d="M5 7 L6.500 2 M11 7 L9.500 2"/><path d="M4.500 10 H11.500"/></svg><svg class="ic" style="left:6px;top:277px;stroke-width:1.257;color:#c8c8c8;" width="14" height="14" viewBox="0 0 16 16" preserveAspectRatio="none"><rect x="2" y="2" width="5" height="5" rx="1"/><rect x="9" y="2" width="5" height="5" rx="1"/><rect x="2" y="9" width="5" height="5" rx="1"/><path d="M11.500 9.200 V13.800 M9.200 11.500 H13.800"/></svg><svg class="ic" style="left:6px;top:303.6px;stroke-width:1.257;color:#c8c8c8;" width="14" height="14" viewBox="0 0 16 16" preserveAspectRatio="none"><path d="M1 9 H3.500 L5.500 4 L8 12.500 L10 6.500 L11.500 10 L12.500 9 H15"/></svg><div class="abs" style="left:0;top:82.5px;width:26px;height:1px;background:#2b2b2b"></div><div class="abs" style="left:0;top:165.5px;width:26px;height:1px;background:#2b2b2b"></div><svg class="ic" style="left:6px;top:532.6px;stroke-width:1.257;stroke:#989898;color:#989898;" width="14" height="14" viewBox="0 0 16 16" preserveAspectRatio="none"><path d="M8 1.500 L9.800 3.200 L12.300 2.900 L12.600 5.400 L14.700 6.800 L13.400 9 L14.200 11.300 L11.900 12.200 L11 14.500 L8.600 13.800 L6.400 15 L5 13 L2.600 12.500 L2.900 10 L1.300 8.200 L3 6.400 L2.700 3.900 L5.200 3.700 L6.200 1.500 Z" transform="translate(0,-.3)"/><circle cx="8" cy="8" r="1.800"/></svg><svg class="ic" style="left:6px;top:558.7px;stroke-width:1.257;stroke:#989898;color:#989898;" width="14" height="14" viewBox="0 0 16 16" preserveAspectRatio="none"><path d="M10 2.500 A6 6 0 1 0 13.700 6.500"/><path d="M6.300 6.500 A1.800 1.800 0 1 1 8 8.500 V9.800"/><circle cx="8" cy="12" r=".4"/><path d="M13 .8 L13.500 2.500 L15.200 3 L13.500 3.500 L13 5.200 L12.500 3.500 L10.800 3 L12.500 2.500 Z" fill="currentColor" stroke="none"/></svg><svg class="ic" style="left:6px;top:585.6px;stroke-width:1.257;stroke:#989898;color:#989898;" width="14" height="14" viewBox="0 0 16 16" preserveAspectRatio="none"><rect x="2.500" y="2.500" width="11" height="11" rx="1"/><path d="M5 8 L7.300 10.300 L11.300 5.700"/></svg><svg class="ic" style="left:6px;top:612.2px;stroke-width:1.257;stroke:#989898;color:#989898;" width="14" height="14" viewBox="0 0 16 16" preserveAspectRatio="none"><circle cx="7" cy="7" r="4.500"/><path d="M10.500 10.500 L14.500 14.500"/><path d="M5 6 A2.500 2.500 0 0 1 7.500 4.800"/></svg><svg class="ic" style="left:6px;top:639.8px;stroke-width:1.257;stroke:#989898;color:#989898;" width="14" height="14" viewBox="0 0 16 16" preserveAspectRatio="none"><path d="M2 4.500 H4 L5 3 H8 L9 4.500 H11 V7 L14.500 5 V13 L11 11 V13.500 H2 V11 H3.500 V9 H2 Z"/></svg></div><div class="crumbs"><svg class="ic" style="left:9px;top:6px;stroke-width:1.250;stroke:#9c9c9c;color:#9c9c9c;" width="8" height="8" viewBox="0 0 10 10" preserveAspectRatio="none"><rect x="1.500" y="1.500" width="7" height="7" rx=".5"/><path d="M1.500 3.200 H8.500" stroke-width="1.600"/></svg><span class="t" style="left:21.3px;top:5.7px;font-size:8.8px;">Body</span><svg class="ic" style="left:60px;top:6px;stroke-width:1.250;stroke:#9c9c9c;color:#9c9c9c;" width="8" height="8" viewBox="0 0 10 10" preserveAspectRatio="none"><rect x="1.500" y="1.500" width="7" height="7" rx=".8"/></svg><span class="t" style="left:72.0px;top:5.7px;font-size:8.8px;">Section</span><svg class="ic" style="left:119px;top:6px;stroke-width:1.250;stroke:#9c9c9c;color:#9c9c9c;" width="8" height="8" viewBox="0 0 10 10" preserveAspectRatio="none"><rect x="1.500" y="1.500" width="7" height="7" rx=".8"/></svg><span class="t" style="left:132.5px;top:5.7px;font-size:8.8px;">Container</span><svg class="ic" style="left:188.8px;top:6px;stroke-width:1.250;stroke:#9c9c9c;color:#9c9c9c;" width="8" height="8" viewBox="0 0 10 10" preserveAspectRatio="none"><rect x="1.500" y="1.500" width="7" height="7" rx=".8"/></svg><span class="t" style="left:201.0px;top:5.7px;font-size:8.8px;">Projects component</span><svg class="ic" style="left:296.8px;top:6px;stroke-width:1.250;stroke:#9c9c9c;color:#9c9c9c;" width="8" height="8" viewBox="0 0 10 10" preserveAspectRatio="none"><ellipse cx="5" cy="3" rx="3.200" ry="1.400"/><path d="M1.800 3 V7.200 C1.800 8 3.200 8.600 5 8.600 C6.800 8.600 8.200 8 8.200 7.200 V3"/><path d="M1.800 5.200 C1.800 6 3.200 6.600 5 6.600 C6.800 6.600 8.200 6 8.200 5.200"/></svg><span class="t" style="left:309.0px;top:5.7px;font-size:8.8px;">Project list wrapper</span><svg class="ic" style="left:401.8px;top:6px;stroke-width:1.250;stroke:#9c9c9c;color:#9c9c9c;" width="8" height="8" viewBox="0 0 10 10" preserveAspectRatio="none"><path d="M0.500 3 H2 M0.500 5 H2 M0.500 7 H2"/><ellipse cx="6.200" cy="3.200" rx="2.600" ry="1.200"/><path d="M3.600 3.200 V7 C3.600 7.800 4.800 8.300 6.200 8.300 C7.600 8.300 8.800 7.800 8.800 7 V3.200"/><path d="M3.600 5.200 C3.600 6 4.800 6.400 6.200 6.400 C7.600 6.400 8.800 6 8.800 5.200"/></svg><span class="t" style="left:414.7px;top:5.7px;font-size:8.8px;">Project list</span><svg class="ic" style="left:472.8px;top:6px;stroke-width:1.250;stroke:#9c9c9c;color:#9c9c9c;" width="8" height="8" viewBox="0 0 10 10" preserveAspectRatio="none"><path d="M0.300 5 H2.200"/><ellipse cx="6.200" cy="4" rx="2.600" ry="1.200"/><path d="M3.600 4 V6.300 C3.600 7.100 4.800 7.600 6.200 7.600 C7.600 7.600 8.800 7.100 8.800 6.300 V4"/></svg><span class="t" style="left:486.6px;top:5.7px;font-size:8.8px;">Projects item</span><svg class="ic" style="left:554px;top:6px;stroke-width:1.250;stroke:#9c9c9c;color:#9c9c9c;" width="8" height="8" viewBox="0 0 10 10" preserveAspectRatio="none"><rect x="1.500" y="1.500" width="7" height="7" rx=".8"/><path d="M1.500 7.500 L4 5 L8 8.500"/><circle cx="3.500" cy="3.500" r=".6"/></svg><span class="t" style="left:567.0px;top:5.7px;font-size:8.8px;">Image</span><svg class="ic" style="left:46.0px;top:0;stroke:#343434;stroke-width:1" width="6" height="21" viewBox="0 0 6 21"><path d="M1 0 L5 10.5 L1 21"/></svg><svg class="ic" style="left:105.6px;top:0;stroke:#343434;stroke-width:1" width="6" height="21" viewBox="0 0 6 21"><path d="M1 0 L5 10.5 L1 21"/></svg><svg class="ic" style="left:174.4px;top:0;stroke:#343434;stroke-width:1" width="6" height="21" viewBox="0 0 6 21"><path d="M1 0 L5 10.5 L1 21"/></svg><svg class="ic" style="left:283.0px;top:0;stroke:#343434;stroke-width:1" width="6" height="21" viewBox="0 0 6 21"><path d="M1 0 L5 10.5 L1 21"/></svg><svg class="ic" style="left:388.7px;top:0;stroke:#343434;stroke-width:1" width="6" height="21" viewBox="0 0 6 21"><path d="M1 0 L5 10.5 L1 21"/></svg><svg class="ic" style="left:459.0px;top:0;stroke:#343434;stroke-width:1" width="6" height="21" viewBox="0 0 6 21"><path d="M1 0 L5 10.5 L1 21"/></svg><svg class="ic" style="left:540.0px;top:0;stroke:#343434;stroke-width:1" width="6" height="21" viewBox="0 0 6 21"><path d="M1 0 L5 10.5 L1 21"/></svg><svg class="ic" style="left:597.0px;top:0;stroke:#343434;stroke-width:1" width="6" height="21" viewBox="0 0 6 21"><path d="M1 0 L5 10.5 L1 21"/></svg></div><div class="panel"><div class="abs" style="left:0;top:-1px;width:182px;height:661px"><div class="t" style="left:5.3px;top:9.4px;font-size:9.1px;color:#f2f2f2">Style</div><div class="t" style="left:38px;top:9.4px;font-size:9.1px;color:#b9b9b9">Settings</div><div class="t" style="left:83px;top:9.4px;font-size:9.2px;color:#b9b9b9">Interactions</div><div class="hr" style="top:26px"></div><div class="abs" style="left:0;top:26px;width:33px;height:1px;background:#8a8a8a"></div><svg class="ic" style="left:7px;top:33.5px;stroke-width:1.250;stroke:#cfcfcf;color:#cfcfcf;" width="8" height="8" viewBox="0 0 10 10" preserveAspectRatio="none"><rect x="1.500" y="1.500" width="7" height="7" rx=".8"/><path d="M1.500 7.500 L4 5 L8 8.500"/><circle cx="3.500" cy="3.500" r=".6"/></svg><div class="t" style="left:19px;top:33.5px;font-size:8.8px;color:#e6e6e6">Image Styles</div><svg class="ic" style="left:166.5px;top:37px;stroke-width:1.760;stroke:#9a9a9a;color:#9a9a9a;" width="7.5" height="2.5" viewBox="0 0 12 4" preserveAspectRatio="none"><circle cx="2" cy="2" r="1" fill="currentColor" stroke="none"/><circle cx="6" cy="2" r="1" fill="currentColor" stroke="none"/><circle cx="10" cy="2" r="1" fill="currentColor" stroke="none"/></svg><div class="abs" style="left:6px;top:48px;width:170px;height:18px;background:#2b2b2b;border-radius:3px"></div><svg class="ic" style="left:46.5px;top:52px;stroke-width:1.684;stroke:#7d7d7d;color:#7d7d7d;" width="9.5" height="10" viewBox="0 0 16 16" preserveAspectRatio="none"><path d="M8 1.500 L14 4.800 V11.200 L8 14.500 L2 11.200 V4.800 Z"/><path d="M2 4.800 L8 8 L14 4.800"/><path d="M8 8 V14.500"/><path d="M5 3.200 L11 6.400"/></svg><div class="t" style="left:60px;top:52.5px;font-size:9.4px;color:#7d7d7d">Create component</div><div class="hr" style="top:72.500px"></div><div class="t" style="left:6px;top:81.5px;font-size:9.2px;color:#cfcfcf">Style selector</div><div class="t" style="right:6px;top:81.5px;font-size:9px;color:#e3e3e3">Inheriting <span style="color:#e9a574">2 selectors</span></div><div class="abs" style="left:6px;top:96.500px;width:170px;height:23px;background:#191919;border-radius:3px;box-shadow:inset 0 0 0 1px #2b2b2b"></div><div class="abs" style="left:9px;top:98.500px;width:23px;height:19px;background:#2f2f2f;border-radius:3px"></div><svg class="ic" style="left:15px;top:103px;stroke-width:1.455;stroke:#c9c9c9;color:#c9c9c9;" width="11" height="9" viewBox="0 0 16 12" preserveAspectRatio="none"><path d="M2.500 3 V9.500 H12.500 V6.500"/><path d="M2.500 3 H9"/><path d="M0.800 11.200 H14.200"/><path d="M12.600 0.300 L13.300 2.100 L15.100 2.800 L13.300 3.500 L12.600 5.300 L11.900 3.500 L10.100 2.800 L11.900 2.100 Z" fill="currentColor" stroke="none"/></svg><div class="abs" style="left:35px;top:98.500px;width:34px;height:19px;background:#2c6fd9;border-radius:3px;color:#fff;font-size:9.4px;line-height:19px;text-align:center">Image</div><svg class="ic" style="left:155.5px;top:106px;stroke-width:1.486;stroke:#d5d5d5;color:#d5d5d5;" width="7" height="4.5" viewBox="0 0 8 5" preserveAspectRatio="none"><path d="M1 1 L4 4 L7 1"/></svg><div class="t" style="left:6px;top:124.500px;font-size:8.6px;color:#a9a9a9">1 on this page</div><div class="hr" style="top:140px"></div><div class="sec" style="top:147px">Spacing</div><svg class="ic" style="left:143.5px;top:147.5px;stroke-width:1.145;stroke:#a0a0a0;color:#a0a0a0;" width="11" height="11" viewBox="0 0 14 14" preserveAspectRatio="none"><path d="M2 1.500 H12" stroke-dasharray="1.500 1.200"/><path d="M2 12.500 H12" stroke-dasharray="1.500 1.200"/><path d="M1 7 H3.500 M10.500 7 H13"/><rect x="5.500" y="5.500" width="3" height="3" fill="currentColor"/></svg><svg class="ic" style="left:166px;top:151.5px;stroke-width:1.467;stroke:#bdbdbd;color:#bdbdbd;" width="6" height="3.5" viewBox="0 0 8 5" preserveAspectRatio="none"><path d="M1 1 L4 4 L7 1"/></svg><div class="abs" style="left:6px;top:168px;width:170px;height:85px;background:#2d2d2d;border-radius:3px;overflow:hidden"><svg class="abs" style="left:0;top:0" width="170" height="85" viewBox="0 0 170 85"><polygon points="0,0 170,0 143,19 27,19" fill="#313131"/><polygon points="0,85 170,85 143,66 27,66" fill="#2a2a2a"/><polygon points="0,0 27,19 27,66 0,85" fill="#2b2b2b"/><polygon points="170,0 143,19 143,66 170,85" fill="#292929"/><rect x="27.500" y="19.500" width="115" height="46" rx="2" fill="#2b2b2b" stroke="#1a1a1a"/><polygon points="28,20 142,20 115,38 55,38" fill="#2f2f2f"/><polygon points="28,65 142,65 115,47 55,47" fill="#282828"/><rect x="55" y="38" width="60" height="9.500" fill="#1c1c1c"/></svg><div class="t" style="left:4px;top:4px;font-size:4.6px;color:#9a9a9a;letter-spacing:.1px">MARGIN</div><div class="t" style="left:31px;top:23.5px;font-size:4.6px;color:#9a9a9a;letter-spacing:.1px">PADDING</div><div class="num" style="left:75px;top:5px">0</div><div class="num" style="left:75px;top:24.5px">0</div><div class="num" style="left:75px;top:50px">0</div><div class="num" style="left:75px;top:71px">0</div><div class="num" style="left:3px;top:37.5px">0</div><div class="num" style="left:31px;top:37.5px">0</div><div class="num" style="left:118px;top:37.5px">0</div><div class="num" style="left:146px;top:37.5px">0</div></div><div class="hr" style="top:259px"></div><div class="sec" style="top:269px">Size</div><svg class="ic" style="left:166px;top:273.5px;stroke-width:1.467;stroke:#bdbdbd;color:#bdbdbd;" width="6" height="3.5" viewBox="0 0 8 5" preserveAspectRatio="none"><path d="M1 1 L4 4 L7 1"/></svg><div class="lbl" style="top:293px">Width</div><div class="fld d" style="left:46px;top:290px;width:41px;color:#6f6f6f">Auto<span class="abs" style="right:5px;color:#6f6f6f">-</span></div><div class="lbl" style="left:93px;top:293px">Height</div><div class="fld d" style="left:134px;top:290px;width:42px;color:#6f6f6f">Auto<span class="abs" style="right:5px;color:#6f6f6f">-</span></div><div class="lbl" style="top:317px">Min W</div><div class="lbl o" style="top:341px">Max W</div><div class="hr" style="top:357px"></div><div class="lbl b" style="top:371px">Ratio</div><div class="hr" style="top:384px"></div><div class="lbl" style="top:396px;color:#9c9c9c">Overflow</div><div class="lbl b" style="top:420px">Fit</div><div class="hr" style="top:437px"></div><div class="sec" style="top:451px">Position</div><div class="lbl" style="top:475px;color:#9c9c9c">Position</div><div class="abs" style="left:6px;top:492px;width:170px;height:18px;background:#1a1a1a;border-radius:3px;box-shadow:inset 0 0 0 1px #2a2a2a"></div><div class="hr" style="top:517px"></div><div class="sec" style="top:531px">Typography</div><div class="lbl o" style="top:555px">Font</div><div class="fld" style="left:46px;top:552px;width:130px">Inter<svg class="ic" style="left:119px;top:5px;stroke-width:1.350;stroke:#9a9a9a;color:#9a9a9a;" width="4" height="8" viewBox="0 0 6 10" preserveAspectRatio="none"><path d="M1 3.500 L3 1.500 L5 3.500"/><path d="M1 6.500 L3 8.500 L5 6.500"/></svg></div><div class="lbl" style="top:579px">Weight</div><div class="fld" style="left:46px;top:576px;width:130px;color:#a5a5a5">400 - Normal<svg class="ic" style="left:119px;top:5px;stroke-width:1.350;stroke:#9a9a9a;color:#9a9a9a;" width="4" height="8" viewBox="0 0 6 10" preserveAspectRatio="none"><path d="M1 3.500 L3 1.500 L5 3.500"/><path d="M1 6.500 L3 8.500 L5 6.500"/></svg></div><div class="lbl o" style="top:603px">Size</div><div class="fld d" style="left:46px;top:600px;width:41px;padding-left:3px">16<span class="abs" style="right:3px;font-size:6.5px;color:#777">PX</span></div><div class="lbl o" style="left:94px;top:603px">Height</div><div class="fld d" style="left:134px;top:600px;width:42px;padding-left:3px;color:#bdbdbd">1.3<span class="abs" style="right:5px;color:#666">-</span></div><div class="lbl o" style="top:627px">Color</div><div class="abs" style="left:46px;top:624.500px;width:130px;height:18px;background:#171717;border-radius:3px;box-shadow:inset 0 0 0 1px #262626"></div><div class="abs" style="left:46px;top:624.500px;width:18px;height:18px;background:#e7e2dc;border-radius:2px"></div><div class="t" style="left:67px;top:629.500px;font-size:8.6px;color:#e2e2e2">Seashell</div><div class="lbl" style="top:651px">Align</div><div class="abs" style="left:46px;top:649px;width:130px;height:18px;background:#2e2e2e;border-radius:3px"></div><div class="abs" style="left:46px;top:649px;width:32px;height:18px;background:#171717;border-radius:3px"></div><div class="abs" style="left:58.0px;top:653.5px;width:8px;height:1px;background:#b0b0b0"></div><div class="abs" style="left:58.0px;top:656.5px;width:5px;height:1px;background:#b0b0b0"></div><div class="abs" style="left:90.5px;top:653.5px;width:8px;height:1px;background:#b0b0b0"></div><div class="abs" style="left:92.0px;top:656.5px;width:5px;height:1px;background:#b0b0b0"></div><div class="abs" style="left:123.0px;top:653.5px;width:8px;height:1px;background:#b0b0b0"></div><div class="abs" style="left:126.0px;top:656.5px;width:5px;height:1px;background:#b0b0b0"></div><div class="abs" style="left:155.5px;top:653.5px;width:8px;height:1px;background:#b0b0b0"></div><div class="abs" style="left:155.5px;top:656.5px;width:8px;height:1px;background:#b0b0b0"></div></div></div></div></div><div class="win" style="left:1865.3px;top:334.2px;transform:scale(0.773)"><div class="clip"><div class="canvas"><div class="photo" style="left:102px;top:-191.89999999999998px;width:370.5px;height:246.6px;"><svg viewBox="0.00 93.30 554.00 369.30" preserveAspectRatio="none"><defs><linearGradient id="p4_lvP2" x1="0" y1="0" x2="0" y2="1"><stop offset="0" stop-color="#e4d8b0"/><stop offset=".2" stop-color="#ddd0a2"/><stop offset=".6" stop-color="#dcd1ab"/><stop offset=".625" stop-color="#f4f4f1"/><stop offset=".65" stop-color="#b9bdb2"/><stop offset="1" stop-color="#c3c7bd"/></linearGradient><linearGradient id="p4_lvP1" x1="0" y1="0" x2="0" y2="1"><stop offset="0" stop-color="#e3e5e5"/><stop offset=".6" stop-color="#e2e4e4"/><stop offset="1" stop-color="#dfe1e0"/></linearGradient><linearGradient id="p4_lvFl" x1="0" y1="0" x2="1" y2="0"><stop offset="0" stop-color="#ecd6b4"/><stop offset=".2" stop-color="#f0dcc0"/><stop offset=".55" stop-color="#edd3ad"/><stop offset=".75" stop-color="#e6bf86"/><stop offset="1" stop-color="#dcae70"/></linearGradient><linearGradient id="p4_lvGl" x1="0" y1="0" x2="1" y2="1"><stop offset="0" stop-color="#9b968f"/><stop offset=".5" stop-color="#cfcbc4"/><stop offset="1" stop-color="#a7a39b"/></linearGradient><linearGradient id="p4_lvSh" x1="0" y1="0" x2="1" y2="0"><stop offset="0" stop-color="#fbf5de"/><stop offset="1" stop-color="#efe6c9"/></linearGradient><pattern id="p4_lvBl" width="4" height="3.2" patternUnits="userSpaceOnUse"><rect width="4" height="1.7" y="0" fill="#fbfbfa" opacity=".85"/></pattern><filter id="p4_lvBlur" x="-40%" y="-40%" width="180%" height="180%"><feGaussianBlur stdDeviation="8"/></filter><pattern id="p4_lvHb" width="46" height="26" patternUnits="userSpaceOnUse"><path d="M0 26 L23 0 L46 26 M0 13 L11.500 0 M46 13 L34.500 0 M11.500 26 L23 13 L34.500 26" stroke="#c08f5c" stroke-width=".9" fill="none" opacity=".5"/></pattern></defs><rect x="0.0" y="0.0" width="554.0" height="556.0" fill="#eaeae6" /><rect x="0.0" y="0.0" width="141.0" height="556.0" fill="#f0ede4" /><rect x="141.0" y="150.0" width="64.4" height="190.0" fill="url(#p4_lvP1)" /><rect x="198.0" y="150.0" width="7.5" height="118.0" fill="#d9c98f" /><rect x="198.0" y="270.0" width="7.5" height="70.0" fill="#8b9086" opacity=".7"/><rect x="230.5" y="150.0" width="64.5" height="190.0" fill="url(#p4_lvP2)" /><rect x="319.5" y="150.0" width="60.0" height="190.0" fill="url(#p4_lvP1)" /><rect x="319.5" y="150.0" width="8.0" height="118.0" fill="#dccf9a" /><rect x="141.0" y="150.0" width="57.0" height="190.0" fill="url(#p4_lvBl)" opacity=".45"/><rect x="198.0" y="150.0" width="7.5" height="190.0" fill="url(#p4_lvBl)" /><rect x="319.5" y="150.0" width="60.5" height="190.0" fill="url(#p4_lvBl)" /><rect x="160.0" y="150.0" width="3.0" height="190.0" fill="#f2f3f3" opacity=".6"/><rect x="178.0" y="150.0" width="4.0" height="190.0" fill="#f2f3f3" opacity=".5"/><rect x="452.0" y="150.0" width="102.0" height="260.0" fill="#ebebe8" /><rect x="455.0" y="190.0" width="12.0" height="140.0" fill="url(#p4_lvBl)" /><rect x="205.4" y="150.0" width="25.0" height="190.0" fill="#e9e9e5" /><rect x="295.0" y="150.0" width="24.5" height="190.0" fill="#eaeae6" /><rect x="230.5" y="272.0" width="24.0" height="68.0" fill="#7d8277" opacity=".3"/><rect x="230.5" y="150.0" width="64.5" height="190.0" fill="url(#p4_lvBl)" /><rect x="216.0" y="150.0" width="2.0" height="190.0" fill="#e2e1de" /><rect x="306.0" y="150.0" width="2.0" height="190.0" fill="#e2e1de" /><circle cx="109.2" cy="222.0" r="15.0" fill="#f0efea" /><path d="M94.700 226 A15 15 0 0 0 123.700 226 Z" fill="#b4af98"/><path d="M104 226 l-2 -12 M107 226 l0 -15 M110 226 l2 -14 M113 226 l4 -10 M106 226 l-4 -8" stroke="#7f9464" stroke-width="1.1" fill="none"/><circle cx="109.2" cy="222.0" r="15.0" fill="none" stroke="#c8a74d" stroke-width="2.4"/><polygon points="99.5,251.0 142.5,251.0 150.0,284.0 94.5,284.0" fill="url(#p4_lvSh)" /><line x1="122.5" y1="284.0" x2="103.8" y2="374.5" stroke="#2b2621" stroke-width="2.2" /><ellipse cx="385.0" cy="285.0" rx="36.0" ry="44.0" fill="#2c4232" opacity=".4" filter="url(#p4_lvBlur)"/><path d="M381.5 347.0 Q357.8 227.8 302.4 251.3" stroke="#283c2d" stroke-width=".9" fill="none"/><path d="M363.2 285.6 Q359.2 282.1 354.1 280.9 Q358.0 284.4 363.2 285.6 Z M363.2 285.6 Q365.4 281.4 365.3 276.7 Q363.1 280.9 363.2 285.6 Z M360.1 279.2 Q355.6 275.7 350.0 274.7 Q354.5 278.1 360.1 279.2 Z M360.1 279.2 Q362.0 274.5 361.6 269.6 Q359.7 274.2 360.1 279.2 Z M356.8 273.4 Q351.6 270.7 345.7 270.7 Q350.9 273.4 356.8 273.4 Z M356.8 273.4 Q357.5 268.5 355.9 263.8 Q355.2 268.7 356.8 273.4 Z M353.4 268.1 Q347.1 265.7 340.4 266.0 Q346.7 268.4 353.4 268.1 Z M353.4 268.1 Q355.2 262.8 354.6 257.2 Q352.9 262.5 353.4 268.1 Z M349.9 263.5 Q342.8 261.0 335.4 261.4 Q342.4 263.8 349.9 263.5 Z M349.9 263.5 Q350.6 257.4 349.1 251.4 Q348.3 257.5 349.9 263.5 Z M346.2 259.4 Q334.9 258.6 323.7 260.7 Q335.1 261.5 346.2 259.4 Z M346.2 259.4 Q345.0 250.5 341.4 242.1 Q342.7 251.1 346.2 259.4 Z M342.4 256.0 Q330.8 254.5 319.1 255.9 Q330.8 257.4 342.4 256.0 Z M342.4 256.0 Q341.5 246.6 338.3 237.7 Q339.2 247.1 342.4 256.0 Z M338.5 253.1 Q329.0 252.9 319.9 255.7 Q329.4 255.9 338.5 253.1 Z M338.5 253.1 Q334.9 246.3 329.4 240.9 Q333.0 247.7 338.5 253.1 Z M334.4 250.8 Q324.7 253.7 316.3 259.5 Q326.0 256.6 334.4 250.8 Z M334.4 250.8 Q329.9 244.3 323.6 239.6 Q328.1 246.1 334.4 250.8 Z M330.3 249.1 Q319.8 253.2 310.9 260.1 Q321.4 256.0 330.3 249.1 Z M330.3 249.1 Q324.6 242.5 317.2 237.8 Q322.9 244.4 330.3 249.1 Z M325.9 248.0 Q315.9 251.4 307.4 257.7 Q317.4 254.3 325.9 248.0 Z M325.9 248.0 Q318.8 243.1 310.6 240.5 Q317.7 245.5 325.9 248.0 Z M321.5 247.5 Q313.9 252.4 308.6 259.8 Q316.3 254.9 321.5 247.5 Z M321.5 247.5 Q315.7 243.4 308.8 241.7 Q314.6 245.8 321.5 247.5 Z M316.9 247.5 Q309.9 252.9 305.5 260.5 Q312.5 255.2 316.9 247.5 Z M316.9 247.5 Q310.8 244.2 303.8 243.6 Q310.0 246.9 316.9 247.5 Z M312.2 248.2 Q306.5 253.8 303.9 261.3 Q309.5 255.7 312.2 248.2 Z M312.2 248.2 Q306.6 245.4 300.4 245.2 Q306.0 248.1 312.2 248.2 Z M307.4 249.5 Q302.5 254.2 300.7 260.7 Q305.6 256.0 307.4 249.5 Z M307.4 249.5 Q302.2 247.6 296.8 248.6 Q302.0 250.5 307.4 249.5 Z M302.4 251.3 Q298.0 257.0 296.8 264.1 Q301.2 258.4 302.4 251.3 Z M302.4 251.3 Q296.5 250.3 290.8 252.3 Q296.8 253.3 302.4 251.3 Z" fill="#283c2d"/><path d="M390.7 347.0 Q371.3 187.2 325.9 210.4" stroke="#314b36" stroke-width=".9" fill="none"/><path d="M375.7 263.8 Q372.0 260.7 367.1 259.9 Q370.9 263.1 375.7 263.8 Z M375.7 263.8 Q378.1 260.2 378.1 255.8 Q375.8 259.5 375.7 263.8 Z M373.2 255.0 Q369.4 250.7 364.1 248.4 Q367.9 252.7 373.2 255.0 Z M373.2 255.0 Q376.5 250.8 377.6 245.6 Q374.3 249.8 373.2 255.0 Z M370.5 246.9 Q364.1 242.7 356.8 241.0 Q363.1 245.2 370.5 246.9 Z M370.5 246.9 Q374.6 241.5 376.6 235.0 Q372.4 240.4 370.5 246.9 Z M367.7 239.5 Q361.4 236.1 354.2 235.2 Q360.5 238.7 367.7 239.5 Z M367.7 239.5 Q370.7 234.1 371.4 227.9 Q368.4 233.3 367.7 239.5 Z M364.8 233.0 Q357.2 228.9 348.6 227.4 Q356.3 231.5 364.8 233.0 Z M364.8 233.0 Q368.3 226.3 369.6 218.9 Q366.1 225.5 364.8 233.0 Z M361.8 227.1 Q352.0 223.2 341.5 221.9 Q351.3 225.8 361.8 227.1 Z M361.8 227.1 Q364.5 218.6 364.9 209.6 Q362.2 218.1 361.8 227.1 Z M358.7 222.1 Q351.0 219.9 343.0 220.5 Q350.7 222.7 358.7 222.1 Z M358.7 222.1 Q360.3 215.7 359.5 209.2 Q357.9 215.5 358.7 222.1 Z M355.5 217.7 Q343.4 216.7 331.5 218.7 Q343.5 219.7 355.5 217.7 Z M355.5 217.7 Q354.7 208.1 351.7 199.0 Q352.4 208.6 355.5 217.7 Z M352.2 214.2 Q342.3 213.8 332.9 216.4 Q342.7 216.8 352.2 214.2 Z M352.2 214.2 Q349.8 206.7 345.4 200.3 Q347.7 207.8 352.2 214.2 Z M348.7 211.4 Q338.9 211.0 329.3 213.5 Q339.2 213.9 348.7 211.4 Z M348.7 211.4 Q345.2 204.2 339.8 198.3 Q343.2 205.5 348.7 211.4 Z M345.2 209.3 Q336.9 211.5 330.0 216.5 Q338.3 214.4 345.2 209.3 Z M345.2 209.3 Q341.4 203.9 335.8 200.3 Q339.6 205.7 345.2 209.3 Z M341.5 208.0 Q333.2 210.9 326.4 216.6 Q334.8 213.7 341.5 208.0 Z M341.5 208.0 Q337.8 202.4 332.3 198.5 Q336.0 204.1 341.5 208.0 Z M337.8 207.5 Q330.9 211.1 326.3 217.4 Q333.1 213.7 337.8 207.5 Z M337.8 207.5 Q333.1 203.7 327.1 202.2 Q331.9 206.0 337.8 207.5 Z M333.9 207.7 Q327.0 214.7 323.0 223.7 Q329.9 216.7 333.9 207.7 Z M333.9 207.7 Q327.4 203.9 319.9 202.6 Q326.5 206.4 333.9 207.7 Z M330.0 208.7 Q325.0 213.4 323.0 219.9 Q328.0 215.2 330.0 208.7 Z M330.0 208.7 Q324.5 207.1 319.0 208.5 Q324.5 210.1 330.0 208.7 Z M325.9 210.4 Q322.1 216.6 321.8 223.9 Q325.6 217.7 325.9 210.4 Z M325.9 210.4 Q319.8 210.1 314.2 212.7 Q320.3 213.1 325.9 210.4 Z" fill="#314b36"/><path d="M379.5 347.0 Q371.9 183.0 354.2 207.3" stroke="#223527" stroke-width=".9" fill="none"/><path d="M373.6 261.7 Q371.3 258.0 367.3 256.3 Q369.6 260.0 373.6 261.7 Z M373.6 261.7 Q377.1 259.3 378.5 255.3 Q375.1 257.8 373.6 261.7 Z M372.6 252.6 Q370.3 248.1 366.2 245.2 Q368.5 249.7 372.6 252.6 Z M372.6 252.6 Q376.3 249.3 377.9 244.6 Q374.2 247.9 372.6 252.6 Z M371.6 244.3 Q367.4 239.7 361.8 237.0 Q365.9 241.7 371.6 244.3 Z M371.6 244.3 Q376.5 240.8 379.7 235.7 Q374.7 239.1 371.6 244.3 Z M370.5 236.8 Q365.0 231.2 358.0 227.6 Q363.5 233.3 370.5 236.8 Z M370.5 236.8 Q375.7 231.5 378.9 224.7 Q373.7 230.1 370.5 236.8 Z M369.4 230.1 Q364.4 223.5 357.6 218.8 Q362.6 225.3 369.4 230.1 Z M369.4 230.1 Q375.3 224.6 379.4 217.6 Q373.4 223.1 369.4 230.1 Z M368.2 224.1 Q360.2 218.8 351.0 215.9 Q359.0 221.2 368.2 224.1 Z M368.2 224.1 Q374.1 217.6 378.1 209.7 Q372.1 216.2 368.2 224.1 Z M367.0 218.9 Q360.6 213.4 352.9 210.1 Q359.3 215.6 367.0 218.9 Z M367.0 218.9 Q370.3 212.0 371.3 204.5 Q368.0 211.3 367.0 218.9 Z M365.7 214.5 Q358.9 208.2 350.7 203.9 Q357.5 210.3 365.7 214.5 Z M365.7 214.5 Q368.6 206.5 369.2 198.1 Q366.3 206.0 365.7 214.5 Z M364.4 210.9 Q358.1 206.0 350.6 203.5 Q356.9 208.3 364.4 210.9 Z M364.4 210.9 Q367.1 204.3 367.4 197.1 Q364.8 203.8 364.4 210.9 Z M363.1 208.0 Q357.0 203.9 349.8 202.2 Q355.9 206.4 363.1 208.0 Z M363.1 208.0 Q364.2 201.7 362.9 195.4 Q361.9 201.7 363.1 208.0 Z M361.7 206.0 Q354.3 203.8 346.6 204.5 Q354.0 206.7 361.7 206.0 Z M361.7 206.0 Q361.0 199.6 358.0 194.0 Q358.7 200.3 361.7 206.0 Z M360.3 204.7 Q349.7 206.2 340.0 210.7 Q350.6 209.2 360.3 204.7 Z M360.3 204.7 Q356.2 197.3 350.2 191.5 Q354.3 198.8 360.3 204.7 Z M358.8 204.2 Q351.3 207.7 345.9 214.0 Q353.4 210.4 358.8 204.2 Z M358.8 204.2 Q353.6 200.2 347.2 198.6 Q352.4 202.6 358.8 204.2 Z M357.3 204.4 Q353.0 210.6 351.9 218.0 Q356.3 211.9 357.3 204.4 Z M357.3 204.4 Q351.8 202.3 345.9 203.0 Q351.4 205.1 357.3 204.4 Z M355.8 205.5 Q352.6 212.4 353.0 220.0 Q356.2 213.1 355.8 205.5 Z M355.8 205.5 Q349.2 207.0 344.1 211.3 Q350.6 209.9 355.8 205.5 Z M354.2 207.3 Q352.1 212.4 353.6 217.7 Q355.7 212.6 354.2 207.3 Z M354.2 207.3 Q349.4 208.6 346.4 212.6 Q351.2 211.3 354.2 207.3 Z" fill="#223527"/><path d="M388.6 347.0 Q386.8 270.0 382.5 193.0" stroke="#3f5c44" stroke-width=".9" fill="none"/><path d="M387.2 298.0 Q385.9 294.1 382.7 291.7 Q384.0 295.6 387.2 298.0 Z M387.2 298.0 Q391.1 296.4 393.3 292.8 Q389.5 294.4 387.2 298.0 Z M386.9 291.0 Q384.6 286.0 380.2 282.4 Q382.6 287.5 386.9 291.0 Z M386.9 291.0 Q391.5 287.7 394.2 282.8 Q389.7 286.1 386.9 291.0 Z M386.7 284.0 Q383.9 279.6 379.3 276.9 Q382.1 281.4 386.7 284.0 Z M386.7 284.0 Q391.5 281.7 394.7 277.4 Q389.9 279.7 386.7 284.0 Z M386.4 277.0 Q381.1 270.8 374.1 266.5 Q379.4 272.7 386.4 277.0 Z M386.4 277.0 Q392.0 271.3 395.5 264.2 Q390.0 269.9 386.4 277.0 Z M386.2 270.0 Q382.7 263.7 377.3 259.0 Q380.8 265.3 386.2 270.0 Z M386.2 270.0 Q392.2 265.9 396.5 260.0 Q390.5 264.1 386.2 270.0 Z M385.9 263.0 Q380.2 256.8 372.9 252.6 Q378.6 258.8 385.9 263.0 Z M385.9 263.0 Q391.6 257.3 395.4 250.2 Q389.7 255.9 385.9 263.0 Z M385.6 256.0 Q380.4 250.3 373.6 246.7 Q378.8 252.4 385.6 256.0 Z M385.6 256.0 Q392.2 252.1 397.1 246.3 Q390.5 250.2 385.6 256.0 Z M385.3 249.0 Q378.3 241.9 369.7 236.9 Q376.7 243.9 385.3 249.0 Z M385.3 249.0 Q393.2 243.2 399.4 235.6 Q391.5 241.4 385.3 249.0 Z M385.0 242.0 Q380.0 234.2 373.1 228.1 Q378.1 235.8 385.0 242.0 Z M385.0 242.0 Q391.8 235.8 396.8 228.0 Q389.9 234.2 385.0 242.0 Z M384.6 235.0 Q381.1 228.2 375.6 222.8 Q379.1 229.6 384.6 235.0 Z M384.6 235.0 Q389.4 229.1 392.1 222.0 Q387.3 227.9 384.6 235.0 Z M384.3 228.0 Q380.5 221.8 374.9 217.3 Q378.7 223.5 384.3 228.0 Z M384.3 228.0 Q390.2 223.7 394.2 217.6 Q388.4 222.0 384.3 228.0 Z M384.0 221.0 Q378.6 214.0 371.6 208.7 Q376.9 215.8 384.0 221.0 Z M384.0 221.0 Q391.4 216.1 397.2 209.3 Q389.7 214.2 384.0 221.0 Z M383.6 214.0 Q377.5 208.2 369.9 204.6 Q376.0 210.4 383.6 214.0 Z M383.6 214.0 Q389.3 208.4 393.0 201.4 Q387.3 207.0 383.6 214.0 Z M383.3 207.0 Q380.7 202.2 376.4 199.1 Q378.9 203.8 383.3 207.0 Z M383.3 207.0 Q387.1 203.3 388.9 198.4 Q385.0 202.0 383.3 207.0 Z M382.9 200.0 Q380.2 196.1 376.0 194.0 Q378.6 198.0 382.9 200.0 Z M382.9 200.0 Q387.1 197.9 389.6 193.8 Q385.4 196.0 382.9 200.0 Z M382.5 193.0 Q379.9 188.8 375.5 186.4 Q378.2 190.6 382.5 193.0 Z M382.5 193.0 Q386.6 190.3 388.9 186.0 Q384.8 188.6 382.5 193.0 Z" fill="#3f5c44"/><path d="M388.2 347.0 Q392.6 273.2 403.0 199.4" stroke="#2c4431" stroke-width=".9" fill="none"/><path d="M391.6 300.0 Q390.1 296.4 386.7 294.3 Q388.2 298.0 391.6 300.0 Z M391.6 300.0 Q395.7 299.0 398.3 295.7 Q394.2 296.8 391.6 300.0 Z M392.2 293.3 Q389.1 288.0 384.1 284.4 Q387.2 289.7 392.2 293.3 Z M392.2 293.3 Q397.7 290.2 401.4 285.2 Q396.0 288.3 392.2 293.3 Z M392.8 286.6 Q390.0 281.8 385.5 278.6 Q388.2 283.5 392.8 286.6 Z M392.8 286.6 Q397.6 283.7 400.7 279.0 Q395.9 281.9 392.8 286.6 Z M393.5 279.9 Q388.7 273.6 382.1 269.0 Q386.9 275.4 393.5 279.9 Z M393.5 279.9 Q400.1 275.5 405.1 269.2 Q398.4 273.6 393.5 279.9 Z M394.1 273.2 Q389.8 267.2 383.7 262.9 Q388.0 269.0 394.1 273.2 Z M394.1 273.2 Q401.0 269.9 406.3 264.4 Q399.5 267.8 394.1 273.2 Z M394.8 266.5 Q392.7 260.0 388.5 254.6 Q390.6 261.1 394.8 266.5 Z M394.8 266.5 Q400.4 262.3 404.3 256.3 Q398.6 260.6 394.8 266.5 Z M395.5 259.8 Q390.0 251.8 382.6 245.5 Q388.2 253.5 395.5 259.8 Z M395.5 259.8 Q403.0 253.6 408.7 245.7 Q401.2 251.9 395.5 259.8 Z M396.2 253.1 Q390.3 245.4 382.6 239.6 Q388.5 247.2 396.2 253.1 Z M396.2 253.1 Q404.9 248.3 412.1 241.4 Q403.4 246.2 396.2 253.1 Z M397.0 246.4 Q393.4 239.4 387.9 233.8 Q391.4 240.8 397.0 246.4 Z M397.0 246.4 Q403.3 241.5 407.8 234.9 Q401.5 239.8 397.0 246.4 Z M397.8 239.7 Q394.0 234.1 388.5 230.2 Q392.2 235.8 397.8 239.7 Z M397.8 239.7 Q404.1 236.7 408.8 231.6 Q402.6 234.6 397.8 239.7 Z M398.6 232.9 Q394.0 226.3 387.6 221.4 Q392.2 228.1 398.6 232.9 Z M398.6 232.9 Q405.6 228.7 411.0 222.5 Q404.0 226.8 398.6 232.9 Z M399.4 226.2 Q394.8 219.1 388.4 213.6 Q393.0 220.7 399.4 226.2 Z M399.4 226.2 Q406.4 221.2 411.6 214.4 Q404.6 219.4 399.4 226.2 Z M400.3 219.5 Q398.4 213.9 394.5 209.4 Q396.3 215.0 400.3 219.5 Z M400.3 219.5 Q405.6 216.2 409.1 211.1 Q403.8 214.4 400.3 219.5 Z M401.2 212.8 Q399.4 207.0 395.4 202.4 Q397.3 208.2 401.2 212.8 Z M401.2 212.8 Q406.8 209.8 410.8 204.8 Q405.2 207.8 401.2 212.8 Z M402.1 206.1 Q400.1 202.1 396.3 199.7 Q398.2 203.7 402.1 206.1 Z M402.1 206.1 Q406.2 204.2 408.8 200.3 Q404.6 202.3 402.1 206.1 Z M403.0 199.4 Q401.7 195.4 398.3 192.8 Q399.7 196.8 403.0 199.4 Z M403.0 199.4 Q407.4 198.4 410.6 195.1 Q406.1 196.1 403.0 199.4 Z" fill="#2c4431"/><path d="M382.9 347.0 Q397.9 201.2 432.8 232.4" stroke="#283c2d" stroke-width=".9" fill="none"/><path d="M394.4 272.1 Q393.5 267.7 390.4 264.3 Q391.4 268.8 394.4 272.1 Z M394.4 272.1 Q399.2 270.8 402.7 267.2 Q397.9 268.6 394.4 272.1 Z M396.4 264.4 Q395.9 260.0 393.1 256.6 Q393.7 261.0 396.4 264.4 Z M396.4 264.4 Q400.9 262.8 403.8 259.1 Q399.4 260.7 396.4 264.4 Z M398.5 257.3 Q397.3 252.5 393.9 248.8 Q395.2 253.6 398.5 257.3 Z M398.5 257.3 Q403.6 255.6 407.2 251.6 Q402.1 253.4 398.5 257.3 Z M400.6 251.0 Q399.1 244.5 395.5 238.9 Q397.0 245.4 400.6 251.0 Z M400.6 251.0 Q408.0 249.4 414.4 245.3 Q407.0 246.9 400.6 251.0 Z M402.9 245.5 Q402.4 238.7 399.6 232.5 Q400.1 239.3 402.9 245.5 Z M402.9 245.5 Q410.6 244.2 417.4 240.4 Q409.7 241.7 402.9 245.5 Z M405.2 240.6 Q406.4 232.2 405.2 223.8 Q404.0 232.2 405.2 240.6 Z M405.2 240.6 Q415.1 239.5 424.4 235.6 Q414.4 236.8 405.2 240.6 Z M407.6 236.5 Q409.1 229.5 408.3 222.5 Q406.8 229.4 407.6 236.5 Z M407.6 236.5 Q416.3 237.1 424.7 234.9 Q416.0 234.3 407.6 236.5 Z M410.0 233.1 Q412.0 225.3 411.6 217.2 Q409.7 225.1 410.0 233.1 Z M410.0 233.1 Q420.0 234.8 430.1 233.6 Q420.1 231.9 410.0 233.1 Z M412.6 230.5 Q416.8 222.1 418.8 212.9 Q414.6 221.3 412.6 230.5 Z M412.6 230.5 Q424.2 233.5 436.1 233.6 Q424.6 230.6 412.6 230.5 Z M415.2 228.6 Q420.5 222.4 423.7 215.0 Q418.5 221.1 415.2 228.6 Z M415.2 228.6 Q424.5 233.5 434.9 235.6 Q425.6 230.6 415.2 228.6 Z M418.0 227.4 Q424.6 223.1 429.5 216.9 Q422.9 221.2 418.0 227.4 Z M418.0 227.4 Q426.0 233.6 435.7 237.0 Q427.6 230.8 418.0 227.4 Z M420.8 226.9 Q429.4 223.7 436.8 218.2 Q428.2 221.4 420.8 226.9 Z M420.8 226.9 Q427.6 236.9 437.0 244.6 Q430.1 234.6 420.8 226.9 Z M423.6 227.2 Q432.8 227.8 441.8 225.5 Q432.6 224.9 423.6 227.2 Z M423.6 227.2 Q428.6 237.3 436.4 245.5 Q431.5 235.3 423.6 227.2 Z M426.6 228.2 Q434.8 229.2 442.9 227.3 Q434.7 226.3 426.6 228.2 Z M426.6 228.2 Q430.2 237.7 436.9 245.3 Q433.3 235.9 426.6 228.2 Z M429.7 229.9 Q434.5 232.7 440.1 232.4 Q435.2 229.7 429.7 229.9 Z M429.7 229.9 Q430.5 236.4 434.7 241.4 Q433.8 234.9 429.7 229.9 Z M432.8 232.4 Q436.5 236.0 441.6 236.7 Q437.9 233.1 432.8 232.4 Z M432.8 232.4 Q431.9 238.1 434.5 243.3 Q435.5 237.6 432.8 232.4 Z" fill="#283c2d"/><path d="M388.0 347.0 Q409.4 226.6 459.5 257.6" stroke="#314b36" stroke-width=".9" fill="none"/><path d="M404.5 285.7 Q404.4 281.8 402.0 278.6 Q402.2 282.6 404.5 285.7 Z M404.5 285.7 Q409.1 285.7 412.8 283.1 Q408.2 283.1 404.5 285.7 Z M407.4 279.5 Q407.0 274.9 404.5 271.1 Q404.8 275.7 407.4 279.5 Z M407.4 279.5 Q412.8 280.0 417.8 277.8 Q412.4 277.2 407.4 279.5 Z M410.3 273.8 Q410.0 268.4 407.4 263.7 Q407.7 269.1 410.3 273.8 Z M410.3 273.8 Q416.6 273.5 422.2 270.5 Q415.9 270.9 410.3 273.8 Z M413.4 268.8 Q413.2 262.2 410.8 256.0 Q410.9 262.7 413.4 268.8 Z M413.4 268.8 Q421.5 269.8 429.5 267.9 Q421.3 266.9 413.4 268.8 Z M416.6 264.5 Q418.5 258.5 418.1 252.2 Q416.2 258.2 416.6 264.5 Z M416.6 264.5 Q424.2 265.4 431.7 263.4 Q424.0 262.5 416.6 264.5 Z M419.9 260.7 Q423.4 254.4 424.7 247.2 Q421.2 253.6 419.9 260.7 Z M419.9 260.7 Q428.7 261.9 437.4 260.2 Q428.6 259.0 419.9 260.7 Z M423.3 257.6 Q429.0 250.7 432.6 242.6 Q426.9 249.5 423.3 257.6 Z M423.3 257.6 Q434.0 260.8 445.1 261.0 Q434.5 257.8 423.3 257.6 Z M426.9 255.1 Q433.2 249.7 437.6 242.7 Q431.3 248.1 426.9 255.1 Z M426.9 255.1 Q436.5 258.8 446.8 259.5 Q437.2 255.8 426.9 255.1 Z M430.5 253.2 Q437.2 247.4 442.0 240.0 Q435.4 245.8 430.5 253.2 Z M430.5 253.2 Q440.7 257.8 451.8 259.4 Q441.6 254.8 430.5 253.2 Z M434.3 252.0 Q442.3 246.0 448.5 238.3 Q440.6 244.2 434.3 252.0 Z M434.3 252.0 Q443.6 261.6 455.1 268.6 Q445.7 258.9 434.3 252.0 Z M438.2 251.3 Q445.3 249.8 451.3 245.7 Q444.2 247.3 438.2 251.3 Z M438.2 251.3 Q444.7 257.5 453.0 260.8 Q446.5 254.7 438.2 251.3 Z M442.2 251.3 Q451.4 250.5 459.9 247.0 Q450.8 247.8 442.2 251.3 Z M442.2 251.3 Q449.4 260.1 458.9 266.2 Q451.7 257.5 442.2 251.3 Z M446.4 252.0 Q453.6 251.2 460.1 247.9 Q452.8 248.6 446.4 252.0 Z M446.4 252.0 Q449.6 260.8 455.9 267.8 Q452.7 259.0 446.4 252.0 Z M450.6 253.2 Q456.9 255.2 463.5 254.2 Q457.2 252.2 450.6 253.2 Z M450.6 253.2 Q452.1 261.1 456.8 267.5 Q455.4 259.6 450.6 253.2 Z M455.0 255.1 Q461.2 256.7 467.4 255.4 Q461.2 253.8 455.0 255.1 Z M455.0 255.1 Q457.2 262.5 462.5 268.1 Q460.3 260.7 455.0 255.1 Z M459.5 257.6 Q463.5 259.6 467.8 258.6 Q463.8 256.6 459.5 257.6 Z M459.5 257.6 Q459.6 262.9 463.0 267.0 Q463.0 261.7 459.5 257.6 Z" fill="#314b36"/><path d="M378.0 347.0 Q397.7 256.0 443.8 287.4" stroke="#223527" stroke-width=".9" fill="none"/><path d="M393.2 301.5 Q393.3 296.8 391.0 292.7 Q391.0 297.4 393.2 301.5 Z M393.2 301.5 Q398.5 300.7 402.8 297.5 Q397.5 298.2 393.2 301.5 Z M395.8 297.0 Q397.7 291.3 397.2 285.4 Q395.4 291.0 395.8 297.0 Z M395.8 297.0 Q403.1 297.9 410.2 295.9 Q402.9 295.0 395.8 297.0 Z M398.6 293.0 Q400.4 287.4 399.9 281.5 Q398.1 287.2 398.6 293.0 Z M398.6 293.0 Q405.7 293.8 412.7 291.7 Q405.5 290.9 398.6 293.0 Z M401.4 289.6 Q404.5 282.4 405.3 274.6 Q402.2 281.8 401.4 289.6 Z M401.4 289.6 Q410.8 289.8 419.9 287.1 Q410.5 286.9 401.4 289.6 Z M404.3 286.6 Q408.3 280.3 410.0 273.1 Q406.1 279.4 404.3 286.6 Z M404.3 286.6 Q413.3 287.8 422.2 286.0 Q413.2 284.9 404.3 286.6 Z M407.4 284.2 Q412.3 279.3 415.2 273.1 Q410.3 277.9 407.4 284.2 Z M407.4 284.2 Q415.5 286.6 424.0 286.0 Q415.9 283.6 407.4 284.2 Z M410.5 282.2 Q416.3 277.1 420.1 270.4 Q414.4 275.5 410.5 282.2 Z M410.5 282.2 Q419.0 287.5 428.7 289.8 Q420.2 284.5 410.5 282.2 Z M413.8 280.8 Q420.1 276.1 424.7 269.7 Q418.4 274.4 413.8 280.8 Z M413.8 280.8 Q422.4 285.8 432.2 287.8 Q423.6 282.8 413.8 280.8 Z M417.2 279.8 Q425.3 277.3 432.3 272.4 Q424.1 274.9 417.2 279.8 Z M417.2 279.8 Q425.4 286.4 435.2 290.1 Q427.0 283.6 417.2 279.8 Z M420.6 279.4 Q427.3 277.0 432.6 272.4 Q426.0 274.7 420.6 279.4 Z M420.6 279.4 Q426.3 286.7 434.1 291.4 Q428.5 284.1 420.6 279.4 Z M424.2 279.5 Q431.9 278.6 438.8 275.1 Q431.1 276.0 424.2 279.5 Z M424.2 279.5 Q428.5 288.4 435.6 295.2 Q431.3 286.3 424.2 279.5 Z M427.9 280.0 Q434.9 279.6 441.2 276.5 Q434.2 276.9 427.9 280.0 Z M427.9 280.0 Q431.7 288.1 438.4 294.0 Q434.5 286.0 427.9 280.0 Z M431.7 281.1 Q439.5 281.4 446.8 278.9 Q439.1 278.6 431.7 281.1 Z M431.7 281.1 Q435.2 290.1 441.7 297.3 Q438.2 288.3 431.7 281.1 Z M435.6 282.7 Q442.7 284.2 449.7 282.7 Q442.7 281.2 435.6 282.7 Z M435.6 282.7 Q436.7 291.5 441.1 299.2 Q440.1 290.4 435.6 282.7 Z M439.7 284.8 Q445.3 286.5 451.0 285.3 Q445.4 283.6 439.7 284.8 Z M439.7 284.8 Q440.1 292.0 444.0 298.0 Q443.6 290.9 439.7 284.8 Z M443.8 287.4 Q448.8 290.2 454.5 290.0 Q449.5 287.2 443.8 287.4 Z M443.8 287.4 Q444.3 294.1 448.1 299.5 Q447.7 292.8 443.8 287.4 Z" fill="#223527"/><path d="M377.8 347.0 Q392.8 281.4 428.0 304.7" stroke="#3f5c44" stroke-width=".9" fill="none"/><path d="M389.4 314.3 Q389.9 310.5 388.0 307.2 Q387.6 311.0 389.4 314.3 Z M389.4 314.3 Q393.8 314.3 397.3 311.7 Q392.9 311.7 389.4 314.3 Z M391.4 311.0 Q393.2 306.8 392.7 302.2 Q390.9 306.5 391.4 311.0 Z M391.4 311.0 Q396.9 312.2 402.3 310.4 Q396.8 309.3 391.4 311.0 Z M393.5 308.2 Q394.8 301.5 393.8 294.7 Q392.5 301.4 393.5 308.2 Z M393.5 308.2 Q401.8 308.4 409.7 305.9 Q401.4 305.6 393.5 308.2 Z M395.6 305.7 Q398.4 300.4 399.0 294.4 Q396.2 299.7 395.6 305.7 Z M395.6 305.7 Q403.0 307.2 410.3 305.8 Q403.0 304.3 395.6 305.7 Z M397.9 303.6 Q401.2 298.2 402.3 292.0 Q399.0 297.4 397.9 303.6 Z M397.9 303.6 Q405.5 305.5 413.4 304.4 Q405.7 302.5 397.9 303.6 Z M400.2 301.9 Q404.1 293.7 405.8 284.7 Q401.9 292.9 400.2 301.9 Z M400.2 301.9 Q411.3 306.3 423.1 307.7 Q412.0 303.3 400.2 301.9 Z M402.6 300.5 Q407.0 294.7 409.3 287.8 Q404.9 293.6 402.6 300.5 Z M402.6 300.5 Q411.1 304.8 420.5 306.1 Q412.0 301.8 402.6 300.5 Z M405.1 299.5 Q412.7 296.1 419.0 290.5 Q411.3 293.9 405.1 299.5 Z M405.1 299.5 Q413.7 305.5 423.7 308.5 Q415.1 302.6 405.1 299.5 Z M407.7 298.9 Q415.6 295.1 422.0 289.3 Q414.1 293.0 407.7 298.9 Z M407.7 298.9 Q416.3 305.8 426.6 310.0 Q418.0 303.0 407.7 298.9 Z M410.3 298.6 Q419.5 297.5 427.9 293.7 Q418.7 294.8 410.3 298.6 Z M410.3 298.6 Q418.0 306.8 427.8 312.4 Q420.1 304.2 410.3 298.6 Z M413.1 298.7 Q420.5 298.2 427.2 295.0 Q419.8 295.5 413.1 298.7 Z M413.1 298.7 Q418.6 305.9 426.4 310.6 Q420.9 303.4 413.1 298.7 Z M415.9 299.2 Q422.8 299.9 429.5 297.8 Q422.5 297.1 415.9 299.2 Z M415.9 299.2 Q419.8 306.7 426.4 312.0 Q422.5 304.5 415.9 299.2 Z M418.8 300.0 Q426.9 301.0 434.9 299.1 Q426.7 298.1 418.8 300.0 Z M418.8 300.0 Q421.7 309.7 427.7 317.8 Q424.8 308.1 418.8 300.0 Z M421.8 301.2 Q429.2 302.5 436.6 301.0 Q429.2 299.6 421.8 301.2 Z M421.8 301.2 Q423.2 310.4 428.1 318.4 Q426.6 309.2 421.8 301.2 Z M424.8 302.8 Q430.5 305.3 436.6 304.9 Q431.0 302.4 424.8 302.8 Z M424.8 302.8 Q424.9 310.1 428.5 316.6 Q428.4 309.2 424.8 302.8 Z M428.0 304.7 Q432.1 306.8 436.7 305.9 Q432.6 303.8 428.0 304.7 Z M428.0 304.7 Q427.7 310.3 430.9 314.8 Q431.2 309.3 428.0 304.7 Z" fill="#3f5c44"/><path d="M377.6 347.0 Q360.7 253.9 321.2 284.3" stroke="#2c4431" stroke-width=".9" fill="none"/><path d="M364.6 300.3 Q359.4 297.3 353.4 296.8 Q358.6 299.9 364.6 300.3 Z M364.6 300.3 Q367.3 295.9 367.7 290.7 Q365.0 295.1 364.6 300.3 Z M362.3 295.6 Q356.7 291.9 350.1 290.6 Q355.7 294.3 362.3 295.6 Z M362.3 295.6 Q364.4 290.1 364.2 284.2 Q362.1 289.7 362.3 295.6 Z M360.0 291.5 Q352.9 289.4 345.6 290.1 Q352.7 292.2 360.0 291.5 Z M360.0 291.5 Q362.2 285.9 362.1 279.9 Q359.9 285.5 360.0 291.5 Z M357.6 287.9 Q348.6 285.7 339.5 286.3 Q348.4 288.5 357.6 287.9 Z M357.6 287.9 Q359.5 280.6 359.2 273.1 Q357.2 280.4 357.6 287.9 Z M355.0 284.8 Q345.4 283.7 335.8 285.6 Q345.5 286.7 355.0 284.8 Z M355.0 284.8 Q354.1 277.1 350.9 270.0 Q351.8 277.7 355.0 284.8 Z M352.4 282.2 Q344.8 280.7 337.1 282.0 Q344.8 283.6 352.4 282.2 Z M352.4 282.2 Q351.3 276.0 347.9 270.6 Q349.1 276.8 352.4 282.2 Z M349.7 280.1 Q340.8 281.4 333.0 285.7 Q341.8 284.4 349.7 280.1 Z M349.7 280.1 Q347.8 273.6 343.7 268.1 Q345.6 274.6 349.7 280.1 Z M346.9 278.5 Q335.8 281.6 326.0 287.6 Q337.1 284.5 346.9 278.5 Z M346.9 278.5 Q343.0 270.7 337.0 264.3 Q341.0 272.1 346.9 278.5 Z M344.0 277.5 Q333.5 280.1 324.2 285.6 Q334.7 283.0 344.0 277.5 Z M344.0 277.5 Q339.1 270.6 332.4 265.4 Q337.3 272.3 344.0 277.5 Z M341.1 276.9 Q330.5 283.2 322.0 292.2 Q332.6 285.9 341.1 276.9 Z M341.1 276.9 Q333.4 271.1 324.5 267.5 Q332.1 273.4 341.1 276.9 Z M338.0 276.9 Q328.2 283.0 320.7 291.6 Q330.4 285.5 338.0 276.9 Z M338.0 276.9 Q330.2 272.1 321.4 269.9 Q329.2 274.6 338.0 276.9 Z M334.8 277.3 Q327.4 283.0 322.5 291.0 Q330.0 285.3 334.8 277.3 Z M334.8 277.3 Q327.3 275.2 319.6 276.0 Q327.1 278.1 334.8 277.3 Z M331.6 278.3 Q324.4 286.0 320.1 295.7 Q327.3 288.0 331.6 278.3 Z M331.6 278.3 Q323.3 276.1 314.8 276.7 Q323.0 278.9 331.6 278.3 Z M328.2 279.8 Q322.5 288.5 320.0 298.5 Q325.7 289.9 328.2 279.8 Z M328.2 279.8 Q319.5 279.4 311.2 282.0 Q319.9 282.4 328.2 279.8 Z M324.7 281.8 Q320.9 288.4 320.6 296.0 Q324.4 289.4 324.7 281.8 Z M324.7 281.8 Q318.5 281.0 312.6 283.2 Q318.8 284.0 324.7 281.8 Z M321.2 284.3 Q318.0 290.2 318.3 296.9 Q321.5 291.0 321.2 284.3 Z M321.2 284.3 Q315.4 285.0 310.8 288.6 Q316.6 287.9 321.2 284.3 Z" fill="#2c4431"/><path d="M379.1 347.0 Q361.2 283.4 319.6 307.9" stroke="#283c2d" stroke-width=".9" fill="none"/><path d="M365.3 315.4 Q360.0 313.0 354.2 313.3 Q359.5 315.7 365.3 315.4 Z M365.3 315.4 Q366.5 310.7 365.3 306.0 Q364.1 310.7 365.3 315.4 Z M362.9 312.4 Q358.3 310.1 353.2 310.5 Q357.8 312.8 362.9 312.4 Z M362.9 312.4 Q363.2 308.1 361.2 304.3 Q360.9 308.6 362.9 312.4 Z M360.5 309.7 Q352.3 308.9 344.5 311.2 Q352.6 311.9 360.5 309.7 Z M360.5 309.7 Q360.6 303.3 358.4 297.2 Q358.3 303.7 360.5 309.7 Z M357.9 307.4 Q350.0 306.9 342.6 309.5 Q350.5 309.9 357.9 307.4 Z M357.9 307.4 Q356.8 301.2 353.5 296.0 Q354.6 302.1 357.9 307.4 Z M355.3 305.4 Q346.1 305.0 337.4 307.6 Q346.5 308.0 355.3 305.4 Z M355.3 305.4 Q354.0 298.3 350.5 292.0 Q351.8 299.1 355.3 305.4 Z M352.5 303.8 Q343.6 306.6 336.2 312.2 Q345.1 309.4 352.5 303.8 Z M352.5 303.8 Q350.5 297.2 346.3 291.7 Q348.4 298.3 352.5 303.8 Z M349.7 302.6 Q341.1 304.8 334.0 310.0 Q342.5 307.7 349.7 302.6 Z M349.7 302.6 Q346.6 296.6 341.5 292.2 Q344.6 298.1 349.7 302.6 Z M346.7 301.7 Q334.5 307.2 324.1 315.6 Q336.3 310.0 346.7 301.7 Z M346.7 301.7 Q338.6 295.0 329.1 290.5 Q337.2 297.2 346.7 301.7 Z M343.7 301.2 Q335.2 307.3 329.2 315.7 Q337.6 309.7 343.7 301.2 Z M343.7 301.2 Q336.9 296.8 329.0 294.8 Q335.8 299.2 343.7 301.2 Z M340.5 301.1 Q330.5 307.0 322.6 315.5 Q332.6 309.6 340.5 301.1 Z M340.5 301.1 Q332.6 296.4 323.6 294.1 Q331.5 298.8 340.5 301.1 Z M337.3 301.3 Q326.9 309.0 319.0 319.1 Q329.3 311.4 337.3 301.3 Z M337.3 301.3 Q328.4 296.4 318.5 294.1 Q327.4 299.0 337.3 301.3 Z M333.9 301.9 Q327.2 310.1 323.5 320.2 Q330.3 311.9 333.9 301.9 Z M333.9 301.9 Q326.2 298.7 317.8 298.3 Q325.6 301.4 333.9 301.9 Z M330.5 302.8 Q325.2 309.9 323.1 318.4 Q328.4 311.4 330.5 302.8 Z M330.5 302.8 Q323.7 301.0 316.6 302.0 Q323.5 303.9 330.5 302.8 Z M327.0 304.2 Q321.7 308.8 319.3 315.4 Q324.6 310.8 327.0 304.2 Z M327.0 304.2 Q321.2 302.8 315.6 304.4 Q321.3 305.8 327.0 304.2 Z M323.3 305.9 Q318.5 311.5 316.9 318.7 Q321.7 313.1 323.3 305.9 Z M323.3 305.9 Q317.0 305.5 311.3 308.2 Q317.6 308.5 323.3 305.9 Z M319.6 307.9 Q315.7 312.4 315.1 318.4 Q319.0 313.8 319.6 307.9 Z M319.6 307.9 Q314.8 306.7 310.2 308.4 Q315.0 309.6 319.6 307.9 Z" fill="#283c2d"/><path d="M377.0 347.0 Q364.5 191.9 335.4 221.4" stroke="#314b36" stroke-width=".9" fill="none"/><path d="M367.4 267.0 Q364.4 262.5 359.6 259.9 Q362.7 264.4 367.4 267.0 Z M367.4 267.0 Q371.6 263.8 373.9 259.0 Q369.7 262.2 367.4 267.0 Z M365.7 258.6 Q360.6 254.7 354.3 253.2 Q359.5 257.1 365.7 258.6 Z M365.7 258.6 Q369.1 253.9 370.4 248.2 Q367.0 252.9 365.7 258.6 Z M364.0 251.0 Q359.6 246.5 353.7 244.2 Q358.1 248.7 364.0 251.0 Z M364.0 251.0 Q368.5 247.1 371.0 241.6 Q366.6 245.6 364.0 251.0 Z M362.2 244.1 Q356.5 239.1 349.3 236.2 Q355.1 241.3 362.2 244.1 Z M362.2 244.1 Q365.9 238.2 367.4 231.3 Q363.7 237.3 362.2 244.1 Z M360.4 238.0 Q355.2 232.9 348.6 229.9 Q353.8 235.1 360.4 238.0 Z M360.4 238.0 Q362.9 231.9 363.0 225.3 Q360.6 231.4 360.4 238.0 Z M358.4 232.7 Q350.4 227.2 341.1 224.1 Q349.2 229.6 358.4 232.7 Z M358.4 232.7 Q363.3 225.4 366.0 217.0 Q361.2 224.3 358.4 232.7 Z M356.5 228.2 Q349.5 223.9 341.5 222.1 Q348.4 226.4 356.5 228.2 Z M356.5 228.2 Q359.0 221.4 359.2 214.3 Q356.7 221.0 356.5 228.2 Z M354.4 224.4 Q346.7 221.0 338.4 220.4 Q346.1 223.7 354.4 224.4 Z M354.4 224.4 Q357.2 217.8 357.7 210.7 Q354.9 217.3 354.4 224.4 Z M352.3 221.3 Q340.7 220.2 329.3 222.0 Q340.8 223.1 352.3 221.3 Z M352.3 221.3 Q352.9 212.1 351.2 203.1 Q350.6 212.3 352.3 221.3 Z M350.1 219.0 Q338.1 220.4 327.0 224.8 Q338.9 223.4 350.1 219.0 Z M350.1 219.0 Q348.3 210.0 344.3 201.8 Q346.0 210.8 350.1 219.0 Z M347.8 217.5 Q337.1 218.4 327.2 222.2 Q337.8 221.4 347.8 217.5 Z M347.8 217.5 Q344.4 209.8 338.9 203.5 Q342.3 211.1 347.8 217.5 Z M345.4 216.8 Q336.8 221.7 330.4 229.2 Q339.0 224.3 345.4 216.8 Z M345.4 216.8 Q340.1 211.4 333.3 208.2 Q338.6 213.5 345.4 216.8 Z M343.0 216.8 Q335.8 221.5 331.0 228.7 Q338.2 224.0 343.0 216.8 Z M343.0 216.8 Q337.3 213.2 330.6 212.1 Q336.3 215.7 343.0 216.8 Z M340.6 217.6 Q335.8 223.3 334.2 230.7 Q339.0 224.9 340.6 217.6 Z M340.6 217.6 Q334.4 216.7 328.4 218.8 Q334.6 219.7 340.6 217.6 Z M338.0 219.1 Q334.8 225.4 335.1 232.5 Q338.3 226.2 338.0 219.1 Z M338.0 219.1 Q332.2 218.3 326.8 220.4 Q332.6 221.3 338.0 219.1 Z M335.4 221.4 Q333.0 226.8 334.2 232.5 Q336.6 227.1 335.4 221.4 Z M335.4 221.4 Q330.3 222.1 326.5 225.7 Q331.7 225.0 335.4 221.4 Z" fill="#314b36"/><path d="M384.8 347.0 Q379.8 281.0 368.0 215.0" stroke="#223527" stroke-width=".9" fill="none"/><path d="M380.9 305.0 Q378.8 301.0 374.9 298.7 Q377.0 302.7 380.9 305.0 Z M380.9 305.0 Q384.0 301.8 384.9 297.6 Q381.9 300.7 380.9 305.0 Z M380.2 299.0 Q376.6 295.3 371.6 293.8 Q375.3 297.5 380.2 299.0 Z M380.2 299.0 Q384.0 295.8 385.7 291.3 Q382.0 294.4 380.2 299.0 Z M379.6 293.0 Q375.2 288.9 369.6 287.0 Q373.9 291.1 379.6 293.0 Z M379.6 293.0 Q384.4 289.9 387.5 285.1 Q382.6 288.2 379.6 293.0 Z M378.8 287.0 Q375.0 281.2 369.3 277.2 Q373.2 282.9 378.8 287.0 Z M378.8 287.0 Q383.0 281.7 385.0 275.4 Q380.9 280.6 378.8 287.0 Z M378.1 281.0 Q374.1 275.8 368.5 272.5 Q372.5 277.7 378.1 281.0 Z M378.1 281.0 Q381.8 276.0 383.3 270.0 Q379.6 275.0 378.1 281.0 Z M377.3 275.0 Q372.9 269.1 366.7 265.1 Q371.1 271.0 377.3 275.0 Z M377.3 275.0 Q382.4 270.0 385.5 263.5 Q380.4 268.6 377.3 275.0 Z M376.5 269.0 Q368.8 262.5 359.7 258.1 Q367.4 264.7 376.5 269.0 Z M376.5 269.0 Q382.4 261.7 386.3 253.1 Q380.4 260.4 376.5 269.0 Z M375.7 263.0 Q369.7 256.9 362.3 252.9 Q368.2 259.0 375.7 263.0 Z M375.7 263.0 Q380.7 256.8 383.7 249.4 Q378.7 255.6 375.7 263.0 Z M374.8 257.0 Q370.2 250.5 363.9 245.7 Q368.4 252.2 374.8 257.0 Z M374.8 257.0 Q379.5 250.9 382.0 243.6 Q377.3 249.7 374.8 257.0 Z M373.9 251.0 Q367.8 243.2 359.9 237.3 Q366.0 245.0 373.9 251.0 Z M373.9 251.0 Q380.1 243.7 384.2 235.0 Q378.0 242.4 373.9 251.0 Z M373.0 245.0 Q366.1 239.6 357.9 236.4 Q364.8 241.9 373.0 245.0 Z M373.0 245.0 Q377.6 238.4 380.0 230.7 Q375.4 237.3 373.0 245.0 Z M372.1 239.0 Q367.8 233.6 361.9 230.1 Q366.1 235.5 372.1 239.0 Z M372.1 239.0 Q376.3 234.0 378.5 227.8 Q374.2 232.8 372.1 239.0 Z M371.1 233.0 Q365.5 228.6 358.7 226.6 Q364.3 231.0 371.1 233.0 Z M371.1 233.0 Q376.1 228.7 379.2 222.9 Q374.2 227.2 371.1 233.0 Z M370.1 227.0 Q366.2 221.2 360.4 217.2 Q364.4 223.0 370.1 227.0 Z M370.1 227.0 Q373.6 221.4 374.8 214.8 Q371.4 220.5 370.1 227.0 Z M369.1 221.0 Q364.5 217.1 358.7 215.5 Q363.3 219.4 369.1 221.0 Z M369.1 221.0 Q372.8 217.0 374.5 211.7 Q370.7 215.8 369.1 221.0 Z M368.0 215.0 Q365.8 211.0 361.8 208.8 Q364.0 212.8 368.0 215.0 Z M368.0 215.0 Q371.1 211.9 372.0 207.6 Q368.9 210.7 368.0 215.0 Z" fill="#223527"/><path d="M390.0 347.0 Q397.5 184.7 415.0 215.0" stroke="#3f5c44" stroke-width=".9" fill="none"/><path d="M395.8 263.2 Q392.9 258.7 388.3 255.9 Q391.1 260.4 395.8 263.2 Z M395.8 263.2 Q400.4 260.4 403.2 255.8 Q398.6 258.7 395.8 263.2 Z M396.8 254.5 Q395.8 250.0 392.7 246.6 Q393.7 251.1 396.8 254.5 Z M396.8 254.5 Q401.2 252.5 404.1 248.6 Q399.7 250.5 396.8 254.5 Z M397.8 246.5 Q394.2 240.7 388.7 236.6 Q392.3 242.4 397.8 246.5 Z M397.8 246.5 Q404.3 243.7 409.5 238.8 Q402.9 241.5 397.8 246.5 Z M398.9 239.3 Q395.4 232.8 390.0 227.7 Q393.5 234.2 398.9 239.3 Z M398.9 239.3 Q405.7 235.7 411.0 230.1 Q404.2 233.7 398.9 239.3 Z M400.0 232.9 Q398.6 225.5 394.9 219.0 Q396.3 226.4 400.0 232.9 Z M400.0 232.9 Q407.8 230.1 414.2 225.0 Q406.5 227.8 400.0 232.9 Z M401.1 227.3 Q398.0 220.9 392.8 215.9 Q396.0 222.3 401.1 227.3 Z M401.1 227.3 Q408.4 224.7 414.3 219.9 Q407.1 222.4 401.1 227.3 Z M402.3 222.5 Q401.5 215.1 398.3 208.5 Q399.2 215.8 402.3 222.5 Z M402.3 222.5 Q409.7 219.1 415.5 213.6 Q408.2 217.0 402.3 222.5 Z M403.6 218.5 Q401.3 210.2 396.7 202.8 Q399.1 211.1 403.6 218.5 Z M403.6 218.5 Q412.1 214.6 419.3 208.5 Q410.7 212.4 403.6 218.5 Z M404.9 215.2 Q404.6 208.5 402.0 202.4 Q402.3 209.1 404.9 215.2 Z M404.9 215.2 Q412.6 214.3 419.5 210.7 Q411.8 211.7 404.9 215.2 Z M406.2 212.8 Q408.0 205.6 407.5 198.1 Q405.7 205.4 406.2 212.8 Z M406.2 212.8 Q415.3 213.0 423.9 210.4 Q414.9 210.2 406.2 212.8 Z M407.6 211.2 Q410.9 206.1 412.1 200.0 Q408.7 205.2 407.6 211.2 Z M407.6 211.2 Q415.0 213.3 422.7 212.5 Q415.2 210.3 407.6 211.2 Z M409.0 210.4 Q416.0 205.1 421.4 198.1 Q414.3 203.3 409.0 210.4 Z M409.0 210.4 Q417.6 218.3 428.1 223.6 Q419.5 215.6 409.0 210.4 Z M410.4 210.3 Q418.2 211.3 425.8 209.5 Q418.0 208.5 410.4 210.3 Z M410.4 210.3 Q414.8 218.7 421.9 225.0 Q417.5 216.6 410.4 210.3 Z M411.9 211.1 Q420.1 214.4 428.9 214.7 Q420.7 211.4 411.9 211.1 Z M411.9 211.1 Q413.3 221.4 418.1 230.7 Q416.7 220.3 411.9 211.1 Z M413.4 212.6 Q417.4 216.7 422.9 217.8 Q419.0 213.8 413.4 212.6 Z M413.4 212.6 Q411.7 218.8 413.6 224.8 Q415.3 218.7 413.4 212.6 Z M415.0 215.0 Q418.2 219.8 423.5 222.0 Q420.3 217.2 415.0 215.0 Z M415.0 215.0 Q412.6 220.8 413.8 226.9 Q416.2 221.1 415.0 215.0 Z" fill="#3f5c44"/><path d="M390.0 347.0 Q376.5 225.7 345.0 250.0" stroke="#2c4431" stroke-width=".9" fill="none"/><path d="M379.6 284.6 Q377.0 281.4 373.1 280.3 Q375.6 283.5 379.6 284.6 Z M379.6 284.6 Q382.1 281.8 382.4 278.0 Q379.9 280.8 379.6 284.6 Z M377.8 278.0 Q373.5 273.6 367.7 271.3 Q372.0 275.7 377.8 278.0 Z M377.8 278.0 Q381.6 273.7 383.3 268.2 Q379.5 272.5 377.8 278.0 Z M375.9 272.1 Q369.9 267.8 362.7 265.8 Q368.7 270.2 375.9 272.1 Z M375.9 272.1 Q378.6 266.1 379.0 259.5 Q376.3 265.5 375.9 272.1 Z M374.0 266.8 Q366.6 261.8 358.1 259.1 Q365.5 264.1 374.0 266.8 Z M374.0 266.8 Q378.2 260.0 380.3 252.3 Q376.0 259.1 374.0 266.8 Z M372.0 262.1 Q365.9 258.0 358.7 256.2 Q364.8 260.4 372.0 262.1 Z M372.0 262.1 Q375.1 256.4 375.9 249.9 Q372.8 255.6 372.0 262.1 Z M369.9 258.0 Q361.6 255.7 353.1 256.2 Q361.3 258.5 369.9 258.0 Z M369.9 258.0 Q371.9 251.3 371.5 244.2 Q369.5 251.0 369.9 258.0 Z M367.7 254.5 Q360.2 251.2 352.0 250.7 Q359.5 253.9 367.7 254.5 Z M367.7 254.5 Q368.7 247.6 367.3 240.8 Q366.4 247.7 367.7 254.5 Z M365.5 251.6 Q354.6 251.2 343.9 253.8 Q354.9 254.2 365.5 251.6 Z M365.5 251.6 Q364.2 243.1 360.7 235.2 Q362.0 243.7 365.5 251.6 Z M363.2 249.3 Q353.6 248.1 344.1 249.8 Q353.7 251.0 363.2 249.3 Z M363.2 249.3 Q363.2 241.6 360.9 234.3 Q360.9 242.0 363.2 249.3 Z M360.8 247.6 Q352.1 247.4 343.9 250.3 Q352.6 250.4 360.8 247.6 Z M360.8 247.6 Q357.1 241.5 351.6 237.1 Q355.3 243.2 360.8 247.6 Z M358.4 246.5 Q349.1 250.7 341.7 257.7 Q351.0 253.5 358.4 246.5 Z M358.4 246.5 Q354.6 239.9 349.0 235.0 Q352.7 241.5 358.4 246.5 Z M355.8 246.0 Q347.0 253.0 340.7 262.3 Q349.5 255.3 355.8 246.0 Z M355.8 246.0 Q349.9 240.1 342.5 236.3 Q348.4 242.2 355.8 246.0 Z M353.2 246.1 Q346.0 251.2 341.3 258.6 Q348.5 253.5 353.2 246.1 Z M353.2 246.1 Q347.4 242.4 340.6 241.2 Q346.5 244.9 353.2 246.1 Z M350.6 246.8 Q343.7 253.2 339.7 261.7 Q346.6 255.3 350.6 246.8 Z M350.6 246.8 Q343.1 244.8 335.5 245.7 Q342.9 247.7 350.6 246.8 Z M347.8 248.1 Q343.4 253.9 342.3 261.0 Q346.7 255.3 347.8 248.1 Z M347.8 248.1 Q341.7 247.7 336.1 250.4 Q342.3 250.7 347.8 248.1 Z M345.0 250.0 Q341.4 254.2 341.1 259.8 Q344.7 255.6 345.0 250.0 Z M345.0 250.0 Q340.1 250.0 336.3 253.0 Q341.1 253.0 345.0 250.0 Z" fill="#2c4431"/><path d="M381.9 347.0 Q393.3 230.4 420.0 262.0" stroke="#283c2d" stroke-width=".9" fill="none"/><path d="M390.7 287.8 Q389.4 284.0 386.2 281.7 Q387.5 285.5 390.7 287.8 Z M390.7 287.8 Q394.7 286.4 397.1 283.0 Q393.1 284.4 390.7 287.8 Z M392.2 281.8 Q390.7 276.9 387.0 273.3 Q388.6 278.2 392.2 281.8 Z M392.2 281.8 Q397.9 280.9 402.4 277.4 Q396.8 278.4 392.2 281.8 Z M393.8 276.4 Q393.8 270.5 391.5 265.1 Q391.5 271.0 393.8 276.4 Z M393.8 276.4 Q400.2 274.6 405.3 270.5 Q399.0 272.3 393.8 276.4 Z M395.5 271.6 Q393.6 265.4 389.7 260.3 Q391.5 266.5 395.5 271.6 Z M395.5 271.6 Q402.2 269.4 407.6 264.8 Q400.9 267.1 395.5 271.6 Z M397.2 267.5 Q395.7 260.7 392.1 254.8 Q393.5 261.6 397.2 267.5 Z M397.2 267.5 Q404.4 265.0 410.5 260.3 Q403.2 262.7 397.2 267.5 Z M398.9 263.9 Q398.3 256.5 395.4 249.7 Q396.0 257.1 398.9 263.9 Z M398.9 263.9 Q407.8 263.8 416.2 261.0 Q407.3 261.1 398.9 263.9 Z M400.7 261.0 Q403.1 254.9 403.2 248.4 Q400.8 254.5 400.7 261.0 Z M400.7 261.0 Q408.3 260.2 415.2 256.9 Q407.6 257.6 400.7 261.0 Z M402.6 258.6 Q406.5 250.0 408.1 240.7 Q404.2 249.3 402.6 258.6 Z M402.6 258.6 Q414.3 261.1 426.2 260.6 Q414.5 258.1 402.6 258.6 Z M404.6 256.9 Q410.2 249.2 413.7 240.4 Q408.1 248.1 404.6 256.9 Z M404.6 256.9 Q416.1 260.0 428.0 260.0 Q416.5 257.0 404.6 256.9 Z M406.6 255.8 Q413.8 249.3 419.1 241.1 Q411.9 247.7 406.6 255.8 Z M406.6 255.8 Q417.6 261.7 429.8 264.6 Q418.7 258.7 406.6 255.8 Z M408.7 255.3 Q417.5 252.7 425.2 247.6 Q416.4 250.3 408.7 255.3 Z M408.7 255.3 Q417.0 263.3 427.3 268.6 Q418.9 260.6 408.7 255.3 Z M410.8 255.4 Q417.5 255.0 423.4 251.9 Q416.7 252.3 410.8 255.4 Z M410.8 255.4 Q413.6 263.5 419.5 269.8 Q416.7 261.7 410.8 255.4 Z M413.0 256.1 Q421.3 256.9 429.3 254.9 Q421.0 254.1 413.0 256.1 Z M413.0 256.1 Q416.9 265.6 423.7 273.1 Q419.9 263.7 413.0 256.1 Z M415.3 257.5 Q421.3 260.6 428.1 260.7 Q422.1 257.6 415.3 257.5 Z M415.3 257.5 Q414.8 265.5 418.0 272.8 Q418.4 264.8 415.3 257.5 Z M417.6 259.4 Q424.1 263.9 431.9 265.5 Q425.4 261.0 417.6 259.4 Z M417.6 259.4 Q417.9 268.4 421.7 276.6 Q421.4 267.6 417.6 259.4 Z M420.0 262.0 Q424.0 265.8 429.5 266.8 Q425.5 263.0 420.0 262.0 Z M420.0 262.0 Q418.0 268.0 419.7 274.0 Q421.7 268.0 420.0 262.0 Z" fill="#283c2d"/><path d="M379.6 347.0 Q370.7 260.0 350.0 290.0" stroke="#314b36" stroke-width=".9" fill="none"/><path d="M372.7 303.5 Q368.4 300.0 362.9 299.1 Q367.3 302.5 372.7 303.5 Z M372.7 303.5 Q376.3 299.9 377.8 295.2 Q374.2 298.7 372.7 303.5 Z M371.5 299.2 Q367.1 295.0 361.4 293.0 Q365.8 297.2 371.5 299.2 Z M371.5 299.2 Q374.4 294.4 375.0 288.9 Q372.2 293.7 371.5 299.2 Z M370.3 295.4 Q364.7 292.0 358.2 291.1 Q363.8 294.5 370.3 295.4 Z M370.3 295.4 Q372.5 290.1 372.3 284.4 Q370.1 289.7 370.3 295.4 Z M369.1 292.1 Q362.9 288.9 356.1 288.3 Q362.2 291.5 369.1 292.1 Z M369.1 292.1 Q371.1 286.5 370.9 280.7 Q368.8 286.2 369.1 292.1 Z M367.7 289.2 Q362.2 285.2 355.6 283.6 Q361.1 287.7 367.7 289.2 Z M367.7 289.2 Q369.9 283.6 369.8 277.6 Q367.6 283.2 367.7 289.2 Z M366.4 286.9 Q357.7 285.2 348.9 286.5 Q357.6 288.2 366.4 286.9 Z M366.4 286.9 Q368.7 280.1 368.7 273.0 Q366.4 279.8 366.4 286.9 Z M365.0 285.0 Q353.7 282.5 342.2 282.9 Q353.4 285.4 365.0 285.0 Z M365.0 285.0 Q363.1 275.7 359.0 267.1 Q360.9 276.4 365.0 285.0 Z M363.5 283.6 Q354.7 283.6 346.4 286.5 Q355.2 286.6 363.5 283.6 Z M363.5 283.6 Q362.5 276.9 359.2 270.9 Q360.2 277.6 363.5 283.6 Z M362.0 282.7 Q351.6 284.6 342.2 289.4 Q352.6 287.6 362.0 282.7 Z M362.0 282.7 Q357.3 275.9 350.9 270.6 Q355.5 277.5 362.0 282.7 Z M360.4 282.3 Q350.4 288.7 342.6 297.6 Q352.6 291.3 360.4 282.3 Z M360.4 282.3 Q353.8 276.2 345.7 272.3 Q352.3 278.4 360.4 282.3 Z M358.8 282.4 Q350.1 291.8 344.3 303.2 Q353.0 293.8 358.8 282.4 Z M358.8 282.4 Q348.6 280.2 338.2 280.8 Q348.4 283.0 358.8 282.4 Z M357.1 283.0 Q349.9 292.7 345.9 304.1 Q353.1 294.4 357.1 283.0 Z M357.1 283.0 Q347.2 281.9 337.3 283.8 Q347.3 284.8 357.1 283.0 Z M355.4 284.0 Q351.6 292.7 351.4 302.2 Q355.2 293.5 355.4 284.0 Z M355.4 284.0 Q347.3 285.1 340.2 289.3 Q348.3 288.1 355.4 284.0 Z M353.7 285.5 Q350.2 292.8 350.3 300.8 Q353.7 293.5 353.7 285.5 Z M353.7 285.5 Q346.7 287.3 341.3 292.0 Q348.2 290.2 353.7 285.5 Z M351.9 287.5 Q349.6 296.1 351.0 304.8 Q353.3 296.3 351.9 287.5 Z M351.9 287.5 Q344.3 290.0 338.5 295.4 Q346.0 292.9 351.9 287.5 Z M350.0 290.0 Q348.9 296.1 351.4 301.8 Q352.5 295.7 350.0 290.0 Z M350.0 290.0 Q344.6 291.4 340.9 295.6 Q346.3 294.2 350.0 290.0 Z" fill="#314b36"/><path d="M380.2 347.0 Q389.2 269.9 410.0 300.0" stroke="#223527" stroke-width=".9" fill="none"/><path d="M387.1 308.8 Q385.5 304.2 381.9 300.9 Q383.5 305.5 387.1 308.8 Z M387.1 308.8 Q391.9 306.9 395.3 303.0 Q390.4 304.8 387.1 308.8 Z M388.3 305.1 Q387.1 299.9 383.7 295.8 Q384.9 301.0 388.3 305.1 Z M388.3 305.1 Q394.3 304.5 399.5 301.3 Q393.5 301.9 388.3 305.1 Z M389.5 301.9 Q390.1 294.9 388.3 288.2 Q387.8 295.1 389.5 301.9 Z M389.5 301.9 Q397.2 299.8 403.7 295.2 Q396.0 297.3 389.5 301.9 Z M390.8 299.1 Q391.7 293.5 390.3 288.0 Q389.4 293.6 390.8 299.1 Z M390.8 299.1 Q397.7 299.5 404.2 297.2 Q397.3 296.7 390.8 299.1 Z M392.1 296.7 Q391.7 289.2 389.1 282.3 Q389.4 289.7 392.1 296.7 Z M392.1 296.7 Q401.0 296.1 409.2 292.7 Q400.3 293.4 392.1 296.7 Z M393.5 294.8 Q395.9 286.4 395.9 277.6 Q393.5 286.0 393.5 294.8 Z M393.5 294.8 Q404.1 294.8 414.3 292.0 Q403.7 292.0 393.5 294.8 Z M394.9 293.3 Q397.5 284.9 397.7 276.1 Q395.2 284.5 394.9 293.3 Z M394.9 293.3 Q405.8 294.7 416.6 293.2 Q405.8 291.8 394.9 293.3 Z M396.4 292.3 Q402.0 285.7 405.5 277.8 Q399.9 284.4 396.4 292.3 Z M396.4 292.3 Q406.6 296.3 417.6 297.4 Q407.4 293.3 396.4 292.3 Z M397.9 291.7 Q405.8 288.6 412.4 283.2 Q404.5 286.3 397.9 291.7 Z M397.9 291.7 Q406.4 297.9 416.4 301.2 Q407.9 295.0 397.9 291.7 Z M399.5 291.6 Q407.5 289.9 414.5 285.7 Q406.5 287.4 399.5 291.6 Z M399.5 291.6 Q405.1 300.4 413.3 306.9 Q407.7 298.1 399.5 291.6 Z M401.1 291.9 Q409.3 294.0 417.7 293.1 Q409.5 291.0 401.1 291.9 Z M401.1 291.9 Q405.2 301.0 412.1 308.1 Q408.1 299.0 401.1 291.9 Z M402.8 292.6 Q412.0 296.3 421.8 297.0 Q412.7 293.3 402.8 292.6 Z M402.8 292.6 Q405.8 303.7 412.1 313.3 Q409.1 302.2 402.8 292.6 Z M404.5 293.8 Q411.4 296.8 418.8 296.8 Q412.0 293.8 404.5 293.8 Z M404.5 293.8 Q404.7 302.6 408.5 310.6 Q408.3 301.8 404.5 293.8 Z M406.3 295.4 Q411.1 300.0 417.6 301.7 Q412.7 297.2 406.3 295.4 Z M406.3 295.4 Q405.7 302.8 408.7 309.6 Q409.3 302.2 406.3 295.4 Z M408.1 297.5 Q413.5 301.9 420.3 303.4 Q414.9 299.0 408.1 297.5 Z M408.1 297.5 Q407.6 305.3 410.6 312.6 Q411.2 304.7 408.1 297.5 Z M410.0 300.0 Q413.4 303.7 418.4 304.6 Q415.0 300.9 410.0 300.0 Z M410.0 300.0 Q408.3 305.4 410.3 310.7 Q412.0 305.3 410.0 300.0 Z" fill="#223527"/><path d="M381.0 347.0 Q384.3 288.5 392.0 230.0" stroke="#3f5c44" stroke-width=".9" fill="none"/><path d="M383.5 309.8 Q381.3 305.9 377.3 303.9 Q379.6 307.8 383.5 309.8 Z M383.5 309.8 Q387.4 307.6 389.5 303.8 Q385.6 305.9 383.5 309.8 Z M384.0 304.5 Q381.9 299.2 377.8 295.4 Q379.9 300.6 384.0 304.5 Z M384.0 304.5 Q388.9 301.5 392.2 296.7 Q387.2 299.7 384.0 304.5 Z M384.4 299.1 Q379.9 293.3 373.8 289.3 Q378.2 295.1 384.4 299.1 Z M384.4 299.1 Q390.5 295.0 394.8 289.1 Q388.8 293.2 384.4 299.1 Z M384.9 293.8 Q381.8 288.4 376.8 284.7 Q379.9 290.1 384.9 293.8 Z M384.9 293.8 Q390.0 290.2 393.3 284.9 Q388.2 288.5 384.9 293.8 Z M385.4 288.5 Q382.0 283.3 376.8 279.9 Q380.2 285.1 385.4 288.5 Z M385.4 288.5 Q390.8 285.3 394.5 280.3 Q389.1 283.4 385.4 288.5 Z M385.9 283.2 Q381.9 275.2 375.9 268.6 Q379.9 276.6 385.9 283.2 Z M385.9 283.2 Q394.5 279.2 401.7 273.0 Q393.1 277.0 385.9 283.2 Z M386.4 277.9 Q383.6 270.4 378.8 264.0 Q381.5 271.5 386.4 277.9 Z M386.4 277.9 Q392.6 272.4 396.8 265.4 Q390.7 270.9 386.4 277.9 Z M387.0 272.5 Q382.6 265.1 376.3 259.3 Q380.7 266.7 387.0 272.5 Z M387.0 272.5 Q395.3 268.9 402.3 263.0 Q393.9 266.7 387.0 272.5 Z M387.5 267.2 Q384.2 261.0 379.0 256.3 Q382.3 262.5 387.5 267.2 Z M387.5 267.2 Q393.6 263.4 398.1 257.7 Q391.9 261.5 387.5 267.2 Z M388.1 261.9 Q385.5 254.3 380.7 247.9 Q383.3 255.4 388.1 261.9 Z M388.1 261.9 Q395.0 257.1 400.1 250.4 Q393.2 255.3 388.1 261.9 Z M388.7 256.6 Q384.1 250.0 377.7 245.2 Q382.3 251.7 388.7 256.6 Z M388.7 256.6 Q395.0 251.6 399.5 245.0 Q393.2 249.9 388.7 256.6 Z M389.3 251.3 Q385.5 245.0 379.8 240.3 Q383.6 246.6 389.3 251.3 Z M389.3 251.3 Q396.7 248.6 402.7 243.6 Q395.4 246.3 389.3 251.3 Z M390.0 246.0 Q388.5 240.3 384.9 235.8 Q386.4 241.4 390.0 246.0 Z M390.0 246.0 Q396.0 244.0 400.7 239.7 Q394.7 241.7 390.0 246.0 Z M390.6 240.6 Q387.8 234.2 382.9 229.2 Q385.8 235.6 390.6 240.6 Z M390.6 240.6 Q396.3 236.3 400.1 230.2 Q394.5 234.6 390.6 240.6 Z M391.3 235.3 Q389.3 229.7 385.2 225.4 Q387.2 231.0 391.3 235.3 Z M391.3 235.3 Q397.4 233.3 402.1 229.0 Q396.1 231.0 391.3 235.3 Z M392.0 230.0 Q390.1 225.9 386.3 223.4 Q388.2 227.5 392.0 230.0 Z M392.0 230.0 Q396.0 227.8 398.3 223.7 Q394.2 226.0 392.0 230.0 Z" fill="#3f5c44"/><path d="M388.0 347.0 Q383.2 304.5 372.0 262.0" stroke="#2c4431" stroke-width=".9" fill="none"/><path d="M384.3 320.0 Q381.8 316.4 377.8 314.8 Q380.2 318.4 384.3 320.0 Z M384.3 320.0 Q387.8 317.6 389.4 313.7 Q385.9 316.1 384.3 320.0 Z M383.7 316.1 Q379.9 311.0 374.4 307.7 Q378.2 312.8 383.7 316.1 Z M383.7 316.1 Q387.3 311.2 388.8 305.4 Q385.1 310.2 383.7 316.1 Z M383.0 312.2 Q378.7 307.6 372.8 305.1 Q377.2 309.7 383.0 312.2 Z M383.0 312.2 Q386.8 307.7 388.5 302.0 Q384.7 306.5 383.0 312.2 Z M382.3 308.4 Q378.5 303.5 373.1 300.6 Q376.9 305.5 382.3 308.4 Z M382.3 308.4 Q386.7 304.3 389.0 298.9 Q384.7 302.9 382.3 308.4 Z M381.6 304.5 Q376.1 297.5 368.8 292.3 Q374.3 299.3 381.6 304.5 Z M381.6 304.5 Q387.1 297.9 390.5 290.0 Q385.0 296.6 381.6 304.5 Z M380.9 300.6 Q375.2 293.6 367.9 288.4 Q373.5 295.4 380.9 300.6 Z M380.9 300.6 Q387.0 294.4 391.3 286.7 Q385.1 292.9 380.9 300.6 Z M380.1 296.8 Q374.5 291.8 367.6 289.0 Q373.1 294.0 380.1 296.8 Z M380.1 296.8 Q384.6 291.5 387.0 285.0 Q382.5 290.3 380.1 296.8 Z M379.3 292.9 Q372.8 286.4 364.7 281.9 Q371.2 288.4 379.3 292.9 Z M379.3 292.9 Q384.2 285.8 387.0 277.7 Q382.1 284.7 379.3 292.9 Z M378.5 289.0 Q371.8 282.9 363.6 278.9 Q370.3 285.0 378.5 289.0 Z M378.5 289.0 Q383.9 282.5 387.3 274.6 Q381.9 281.2 378.5 289.0 Z M377.6 285.2 Q371.4 279.5 363.7 275.9 Q370.0 281.6 377.6 285.2 Z M377.6 285.2 Q381.0 278.2 382.2 270.6 Q378.8 277.5 377.6 285.2 Z M376.8 281.3 Q370.2 275.6 362.2 272.2 Q368.8 277.8 376.8 281.3 Z M376.8 281.3 Q380.8 274.4 382.5 266.7 Q378.5 273.6 376.8 281.3 Z M375.9 277.5 Q368.7 272.5 360.3 269.8 Q367.5 274.8 375.9 277.5 Z M375.9 277.5 Q380.3 271.0 382.7 263.4 Q378.2 269.9 375.9 277.5 Z M374.9 273.6 Q370.4 269.3 364.5 267.2 Q369.1 271.5 374.9 273.6 Z M374.9 273.6 Q377.8 268.7 378.3 263.0 Q375.5 267.9 374.9 273.6 Z M374.0 269.7 Q370.2 265.8 365.0 264.1 Q368.8 268.0 374.0 269.7 Z M374.0 269.7 Q376.5 265.5 376.8 260.5 Q374.3 264.8 374.0 269.7 Z M373.0 265.9 Q369.1 262.1 363.9 260.6 Q367.8 264.4 373.0 265.9 Z M373.0 265.9 Q375.4 261.6 375.5 256.7 Q373.1 261.0 373.0 265.9 Z M372.0 262.0 Q369.2 258.2 364.9 256.4 Q367.6 260.2 372.0 262.0 Z M372.0 262.0 Q375.2 258.9 376.3 254.6 Q373.1 257.7 372.0 262.0 Z" fill="#2c4431"/><path d="M387.9 347.0 Q402.9 222.9 438.0 250.0" stroke="#283c2d" stroke-width=".9" fill="none"/><path d="M399.5 283.3 Q399.1 279.6 396.6 276.7 Q396.9 280.5 399.5 283.3 Z M399.5 283.3 Q403.5 282.4 406.2 279.3 Q402.2 280.2 399.5 283.3 Z M401.5 276.7 Q401.2 270.5 398.7 264.9 Q398.9 271.1 401.5 276.7 Z M401.5 276.7 Q408.5 275.7 414.7 272.0 Q407.6 273.1 401.5 276.7 Z M403.5 270.8 Q401.9 263.7 398.0 257.5 Q399.7 264.6 403.5 270.8 Z M403.5 270.8 Q411.8 269.6 419.3 265.8 Q411.0 267.0 403.5 270.8 Z M405.7 265.4 Q404.4 259.6 400.9 254.7 Q402.2 260.6 405.7 265.4 Z M405.7 265.4 Q412.4 264.4 418.2 260.8 Q411.5 261.8 405.7 265.4 Z M407.9 260.7 Q406.4 252.2 402.6 244.5 Q404.2 253.0 407.9 260.7 Z M407.9 260.7 Q417.4 258.3 425.8 253.4 Q416.4 255.8 407.9 260.7 Z M410.3 256.6 Q409.6 248.1 406.6 240.1 Q407.3 248.6 410.3 256.6 Z M410.3 256.6 Q419.9 254.7 428.7 250.2 Q419.0 252.1 410.3 256.6 Z M412.7 253.1 Q413.6 245.7 412.3 238.4 Q411.3 245.8 412.7 253.1 Z M412.7 253.1 Q421.6 252.8 429.9 249.7 Q421.0 250.0 412.7 253.1 Z M415.1 250.3 Q419.2 241.8 421.0 232.6 Q417.0 241.1 415.1 250.3 Z M415.1 250.3 Q426.7 253.3 438.7 253.3 Q427.1 250.3 415.1 250.3 Z M417.7 248.1 Q421.7 242.3 423.5 235.5 Q419.5 241.3 417.7 248.1 Z M417.7 248.1 Q425.9 252.3 435.0 253.5 Q426.8 249.3 417.7 248.1 Z M420.4 246.5 Q426.2 242.0 430.2 235.8 Q424.4 240.3 420.4 246.5 Z M420.4 246.5 Q428.4 251.2 437.6 253.0 Q429.6 248.3 420.4 246.5 Z M423.1 245.5 Q430.5 242.9 436.6 238.1 Q429.2 240.6 423.1 245.5 Z M423.1 245.5 Q430.8 251.2 440.0 254.1 Q432.3 248.3 423.1 245.5 Z M425.9 245.1 Q432.2 242.7 437.2 238.1 Q430.9 240.5 425.9 245.1 Z M425.9 245.1 Q430.8 252.6 438.2 257.7 Q433.3 250.2 425.9 245.1 Z M428.8 245.4 Q437.9 246.1 446.7 244.0 Q437.6 243.3 428.8 245.4 Z M428.8 245.4 Q433.3 255.7 440.7 264.0 Q436.2 253.8 428.8 245.4 Z M431.8 246.3 Q437.7 247.8 443.6 246.3 Q437.7 244.8 431.8 246.3 Z M431.8 246.3 Q433.3 253.6 438.1 259.4 Q436.6 252.1 431.8 246.3 Z M434.9 247.8 Q440.5 249.6 446.3 248.4 Q440.6 246.6 434.9 247.8 Z M434.9 247.8 Q435.5 255.0 439.6 261.0 Q438.9 253.8 434.9 247.8 Z M438.0 250.0 Q443.0 252.4 448.4 251.7 Q443.5 249.4 438.0 250.0 Z M438.0 250.0 Q438.5 256.5 442.4 261.8 Q441.9 255.3 438.0 250.0 Z" fill="#283c2d"/><path d="M390.9 347.0 Q372.6 233.7 330.0 262.0" stroke="#314b36" stroke-width=".9" fill="none"/><path d="M376.8 289.2 Q372.6 286.5 367.6 286.3 Q371.8 289.1 376.8 289.2 Z M376.8 289.2 Q378.8 285.4 378.5 281.1 Q376.5 284.9 376.8 289.2 Z M374.4 283.3 Q368.1 279.8 360.8 278.8 Q367.2 282.3 374.4 283.3 Z M374.4 283.3 Q376.7 277.5 376.7 271.2 Q374.4 277.1 374.4 283.3 Z M371.9 278.0 Q365.0 274.4 357.3 273.4 Q364.2 277.0 371.9 278.0 Z M371.9 278.0 Q373.3 271.5 372.4 265.0 Q371.0 271.4 371.9 278.0 Z M369.3 273.3 Q361.9 269.1 353.7 267.4 Q361.0 271.6 369.3 273.3 Z M369.3 273.3 Q371.8 266.4 372.1 259.1 Q369.5 265.9 369.3 273.3 Z M366.5 269.1 Q358.8 267.0 350.9 267.7 Q358.6 269.9 366.5 269.1 Z M366.5 269.1 Q368.7 262.9 368.6 256.4 Q366.4 262.6 366.5 269.1 Z M363.7 265.5 Q353.9 264.2 344.1 265.9 Q354.0 267.2 363.7 265.5 Z M363.7 265.5 Q363.1 257.6 360.2 250.2 Q360.8 258.1 363.7 265.5 Z M360.8 262.5 Q353.2 260.7 345.4 261.7 Q353.0 263.6 360.8 262.5 Z M360.8 262.5 Q359.2 256.2 355.5 250.9 Q357.0 257.2 360.8 262.5 Z M357.8 260.1 Q346.8 260.8 336.5 264.4 Q347.4 263.8 357.8 260.1 Z M357.8 260.1 Q355.0 252.0 350.2 244.9 Q352.9 253.1 357.8 260.1 Z M354.7 258.3 Q342.5 259.9 331.2 264.5 Q343.3 262.9 354.7 258.3 Z M354.7 258.3 Q348.9 250.4 341.3 244.2 Q347.1 252.1 354.7 258.3 Z M351.4 257.1 Q340.5 259.8 330.7 265.4 Q341.7 262.7 351.4 257.1 Z M351.4 257.1 Q344.3 251.3 335.8 247.7 Q342.9 253.5 351.4 257.1 Z M348.1 256.5 Q338.9 260.3 331.5 267.0 Q340.7 263.1 348.1 256.5 Z M348.1 256.5 Q341.7 251.7 334.0 249.4 Q340.5 254.1 348.1 256.5 Z M344.7 256.4 Q337.3 262.0 332.6 269.9 Q339.9 264.3 344.7 256.4 Z M344.7 256.4 Q338.5 252.7 331.3 251.5 Q337.6 255.2 344.7 256.4 Z M341.2 256.9 Q335.1 262.9 331.9 270.9 Q338.0 264.9 341.2 256.9 Z M341.2 256.9 Q334.7 254.5 327.9 254.9 Q334.3 257.3 341.2 256.9 Z M337.5 258.0 Q333.1 264.1 331.9 271.6 Q336.4 265.5 337.5 258.0 Z M337.5 258.0 Q331.4 256.9 325.4 258.8 Q331.6 259.9 337.5 258.0 Z M333.8 259.7 Q329.2 264.4 327.8 270.7 Q332.4 266.1 333.8 259.7 Z M333.8 259.7 Q328.5 258.6 323.4 260.4 Q328.7 261.5 333.8 259.7 Z M330.0 262.0 Q326.5 268.4 326.6 275.7 Q330.0 269.3 330.0 262.0 Z M330.0 262.0 Q323.8 261.9 318.4 264.7 Q324.5 264.9 330.0 262.0 Z" fill="#314b36"/><path d="M380 349 L377 300 M384 349 L384 292 M389 349 L394 300 M382 349 L368 306 M387 349 L404 310 M379 349 L360 312" stroke="#6b8a58" stroke-width="1.1" fill="none"/><polygon points="161.5,324.0 248.0,320.0 256.0,322.0 335.5,320.0 338.0,362.0 160.0,362.0" fill="#bdbbb5" /><polygon points="308.0,322.0 336.0,318.0 341.0,345.0 312.0,350.0" fill="#dcdad5" /><line x1="252.0" y1="321.0" x2="250.5" y2="362.0" stroke="#8f8d88" stroke-width="1.6" /><rect x="141.0" y="340.0" width="18.0" height="62.0" fill="#cfcdc7" rx="4"/><rect x="341.0" y="338.0" width="12.0" height="64.0" fill="#b0aea8" rx="3"/><rect x="156.0" y="361.0" width="188.0" height="20.0" fill="#c4c2bc" rx="3"/><rect x="146.0" y="379.0" width="207.0" height="23.0" fill="#b3b1ab" rx="3"/><line x1="156.0" y1="380.0" x2="344.0" y2="380.0" stroke="#9f9d97" stroke-width="1" /><polygon points="151.2,328.0 193.5,327.0 197.0,361.0 162.0,366.0" fill="#c77a3d" /><polygon points="188.0,331.0 203.0,327.0 206.0,340.0 192.0,344.0" fill="#e0a77b" /><polygon points="190.0,340.0 250.0,334.0 252.0,364.0 198.0,367.0" fill="#e7e1d3" /><path d="M194.4 345.1 h5.2 M203.9 345.1 h5.2 M213.4 345.1 h5.2 M222.9 345.1 h5.2 M232.4 345.1 h5.2 M241.9 345.1 h5.2 M197.3 349.3 h5.2 M206.8 349.3 h5.2 M216.3 349.3 h5.2 M225.8 349.3 h5.2 M235.3 349.3 h5.2 M244.8 349.3 h5.2 M194.4 353.5 h5.2 M203.9 353.5 h5.2 M213.4 353.5 h5.2 M222.9 353.5 h5.2 M232.4 353.5 h5.2 M241.9 353.5 h5.2 M197.3 357.7 h5.2 M206.8 357.7 h5.2 M216.3 357.7 h5.2 M225.8 357.7 h5.2 M235.3 357.7 h5.2 M244.8 357.7 h5.2 M194.4 361.9 h5.2 M203.9 361.9 h5.2 M213.4 361.9 h5.2 M222.9 361.9 h5.2 M232.4 361.9 h5.2 M241.9 361.9 h5.2" stroke="#4f4a45" stroke-width="1.6" fill="none"/><polygon points="305.2,325.4 345.9,328.0 339.1,366.0 293.4,361.0" fill="#ba6a3b" /><polygon points="252.5,362.6 271.5,362.6 269.5,378.0 254.5,378.0" fill="#dc9f78" /><ellipse cx="263.0" cy="352.1" rx="5.0" ry="2.6" fill="#7d4a63" transform="rotate(22 263.0 352.1)"/><ellipse cx="269.1" cy="343.9" rx="5.0" ry="2.6" fill="#d9c9d3" transform="rotate(16 269.1 343.9)"/><ellipse cx="258.7" cy="348.5" rx="5.0" ry="2.6" fill="#5d3a55" transform="rotate(59 258.7 348.5)"/><ellipse cx="255.2" cy="351.5" rx="5.0" ry="2.6" fill="#c7b3c4" transform="rotate(-39 255.2 351.5)"/><ellipse cx="263.6" cy="351.7" rx="5.0" ry="2.6" fill="#7d4a63" transform="rotate(8 263.6 351.7)"/><ellipse cx="265.9" cy="352.3" rx="5.0" ry="2.6" fill="#d9c9d3" transform="rotate(-40 265.9 352.3)"/><ellipse cx="274.6" cy="354.8" rx="5.0" ry="2.6" fill="#5d3a55" transform="rotate(-59 274.6 354.8)"/><ellipse cx="255.0" cy="347.7" rx="5.0" ry="2.6" fill="#c7b3c4" transform="rotate(-35 255.0 347.7)"/><ellipse cx="265.0" cy="353.6" rx="5.0" ry="2.6" fill="#7d4a63" transform="rotate(17 265.0 353.6)"/><ellipse cx="256.5" cy="346.9" rx="5.0" ry="2.6" fill="#d9c9d3" transform="rotate(-7 256.5 346.9)"/><ellipse cx="264.1" cy="350.4" rx="5.0" ry="2.6" fill="#5d3a55" transform="rotate(-21 264.1 350.4)"/><ellipse cx="272.2" cy="354.4" rx="5.0" ry="2.6" fill="#c7b3c4" transform="rotate(53 272.2 354.4)"/><ellipse cx="261.8" cy="347.3" rx="5.0" ry="2.6" fill="#7d4a63" transform="rotate(8 261.8 347.3)"/><ellipse cx="276.5" cy="352.3" rx="5.0" ry="2.6" fill="#d9c9d3" transform="rotate(35 276.5 352.3)"/><rect x="233.0" y="350.0" width="6.0" height="28.0" fill="#f1f1ee" opacity=".8" rx="2"/><rect x="241.0" y="356.0" width="6.0" height="22.0" fill="#ededea" opacity=".75" rx="2"/><rect x="0.0" y="400.0" width="554.0" height="156.0" fill="url(#p4_lvFl)" /><rect x="0.0" y="400.0" width="554.0" height="156.0" fill="url(#p4_lvHb)" /><polygon points="130.0,402.0 77.0,422.0 0.0,452.0 0.0,497.5 507.0,497.5 479.0,463.5 425.0,402.0" fill="#ebe9e0" /><rect x="0.0" y="400.0" width="130.0" height="6.0" fill="#e9e5db" /><line x1="159.0" y1="400.0" x2="158.0" y2="415.0" stroke="#2a2622" stroke-width="3" /><line x1="349.0" y1="400.0" x2="350.0" y2="415.0" stroke="#2a2622" stroke-width="3" /><rect x="62.0" y="376.0" width="74.0" height="46.0" fill="#efece5" rx="12"/><ellipse cx="99.0" cy="420.0" rx="36.0" ry="5.0" fill="#d9d5ca" opacity=".6"/><line x1="167.3" y1="418.2" x2="148.7" y2="440.2" stroke="#9a3f25" stroke-width="4" /><line x1="188.4" y1="414.0" x2="177.4" y2="427.5" stroke="#9a3f25" stroke-width="3.5" /><line x1="229.9" y1="416.5" x2="293.4" y2="416.5" stroke="#9a3f25" stroke-width="2.4" /><rect x="207.9" y="428.4" width="13.5" height="7.6" fill="#9a3f25" /><rect x="232.4" y="433.5" width="6.8" height="4.2" fill="#9a3f25" /><path d="M323.900 413.200 H337.400 A6.800 7.600 0 0 1 323.900 413.200 Z" fill="#9a3f25"/><line x1="325.5" y1="436.0" x2="351.8" y2="436.0" stroke="#9a3f25" stroke-width="1.5" /><line x1="382.2" y1="422.8" x2="417.8" y2="422.8" stroke="#9a3f25" stroke-width="2.5" /><line x1="381.0" y1="427.5" x2="408.0" y2="427.5" stroke="#9a3f25" stroke-width="1.4" /><line x1="229.0" y1="450.9" x2="278.1" y2="450.9" stroke="#9a3f25" stroke-width="2" /><line x1="219.8" y1="460.6" x2="290.8" y2="460.6" stroke="#9a3f25" stroke-width="3" /><rect x="138.5" y="460.6" width="23.7" height="4.2" fill="#9a3f25" /><line x1="379.7" y1="448.7" x2="393.2" y2="467.3" stroke="#9a3f25" stroke-width="4" /><line x1="290.8" y1="479.0" x2="358.5" y2="480.5" stroke="#9a3f25" stroke-width="4.2" stroke-dasharray="3 3.2"/><line x1="148.0" y1="487.0" x2="166.0" y2="487.0" stroke="#9a3f25" stroke-width="10" stroke-dasharray="2 3"/><line x1="420.3" y1="486.5" x2="462.6" y2="487.5" stroke="#9a3f25" stroke-width="3" stroke-dasharray="3 4" opacity=".8"/><rect x="414.4" y="449.5" width="8.5" height="3.5" fill="#9a3f25" /><line x1="435.6" y1="470.7" x2="470.0" y2="470.7" stroke="#9a3f25" stroke-width="1.4" /><line x1="92.0" y1="440.0" x2="106.0" y2="440.0" stroke="#9a3f25" stroke-width="1.2" opacity=".5"/><line x1="91.5" y1="466.0" x2="95.0" y2="462.0" stroke="#9a3f25" stroke-width="3" /><polygon points="405.0,332.0 425.0,323.0 476.0,323.0 478.0,420.0 430.0,414.0 430.0,375.0" fill="#edeade" /><polygon points="364.0,352.0 395.0,345.0 432.0,376.0 431.0,414.0 375.0,406.0 359.5,396.0" fill="#e9e4d8" /><polygon points="359.5,380.0 431.0,396.0 431.0,414.0 375.0,406.0 359.5,396.0" fill="#d8d3c6" /><polygon points="356.0,374.0 368.0,372.0 368.0,392.0 356.0,390.0" fill="#e5e1d6" /><polygon points="388.0,348.0 452.0,342.0 458.0,374.0 398.0,378.0" fill="#e6e0d1" /><path d="M393.5 352.4 h5.5 M403.5 352.4 h5.5 M413.5 352.4 h5.5 M423.5 352.4 h5.5 M433.5 352.4 h5.5 M443.5 352.4 h5.5 M396.5 357.2 h5.5 M406.5 357.2 h5.5 M416.5 357.2 h5.5 M426.5 357.2 h5.5 M436.5 357.2 h5.5 M446.5 357.2 h5.5 M393.5 362.0 h5.5 M403.5 362.0 h5.5 M413.5 362.0 h5.5 M423.5 362.0 h5.5 M433.5 362.0 h5.5 M443.5 362.0 h5.5 M396.5 366.8 h5.5 M406.5 366.8 h5.5 M416.5 366.8 h5.5 M426.5 366.8 h5.5 M436.5 366.8 h5.5 M446.5 366.8 h5.5 M393.5 371.6 h5.5 M403.5 371.6 h5.5 M413.5 371.6 h5.5 M423.5 371.6 h5.5 M433.5 371.6 h5.5 M443.5 371.6 h5.5" stroke="#4f4a45" stroke-width="1.5" fill="none"/><line x1="361.0" y1="403.9" x2="357.7" y2="431.0" stroke="#a1582e" stroke-width="2.6" /><line x1="427.0" y1="409.0" x2="424.5" y2="456.3" stroke="#a1582e" stroke-width="2.8" /><line x1="468.9" y1="409.0" x2="472.0" y2="440.0" stroke="#a1582e" stroke-width="2.4" /><polygon points="362.0,404.0 430.0,414.0 400.0,418.0" fill="#4d4038" opacity=".55"/><rect x="470.0" y="330.0" width="84.0" height="80.0" fill="#e9e2d1" /><rect x="500.0" y="330.0" width="54.0" height="130.0" fill="#e8e1cf" /><line x1="494.0" y1="330.0" x2="494.0" y2="470.0" stroke="#2d2a27" stroke-width="3" /><line x1="527.0" y1="330.0" x2="527.0" y2="480.0" stroke="#2d2a27" stroke-width="3" /><line x1="464.0" y1="448.5" x2="527.0" y2="448.5" stroke="#2d2a27" stroke-width="2.4" /><polygon points="428.7,430.0 464.4,430.0 462.0,470.0 431.0,470.0" fill="#dacfb6" /><ellipse cx="446.5" cy="430.0" rx="17.8" ry="4.0" fill="#cfc3a6" /><polygon points="429.8,431.0 434.2,431.0 417.6,348.2" fill="#5f6f2d" /><polygon points="432.8,431.0 437.2,431.0 422.8,348.0" fill="#8f9a3f" /><polygon points="435.8,431.0 440.2,431.0 430.4,347.5" fill="#4d5f2a" /><polygon points="438.8,431.0 443.2,431.0 435.2,337.9" fill="#b5b458" /><polygon points="441.8,431.0 446.2,431.0 442.4,366.0" fill="#6f7f35" /><polygon points="444.8,431.0 449.2,431.0 448.8,335.5" fill="#5f6f2d" /><polygon points="447.8,431.0 452.2,431.0 451.4,354.4" fill="#8f9a3f" /><polygon points="450.8,431.0 455.2,431.0 460.1,360.4" fill="#4d5f2a" /><polygon points="453.8,431.0 458.2,431.0 467.3,375.9" fill="#b5b458" /><polygon points="456.8,431.0 461.2,431.0 471.0,378.1" fill="#6f7f35" /><polygon points="459.8,431.0 464.2,431.0 479.6,348.4" fill="#5f6f2d" /><polygon points="197.5,376.0 317.5,376.0 328.9,404.7 174.0,404.7" fill="url(#p4_lvGl)" /><polygon points="205.0,380.0 240.0,380.0 225.0,402.0 182.0,402.0" fill="#dedbd6" opacity=".7"/><polygon points="290.0,380.0 312.0,380.0 322.0,402.0 300.0,402.0" fill="#b9826a" opacity=".55"/><polygon points="219.5,379.0 286.5,379.0 286.5,389.0 262.0,395.0 219.5,388.0" fill="#2a2725" /><polygon points="262.0,395.0 286.5,389.0 286.5,392.0 262.0,398.0" fill="#bcb6ad" /><polygon points="197.5,376.0 317.5,376.0 328.9,404.7 174.0,404.7" fill="none" stroke="#2b2724" stroke-width="2.4"/><line x1="174.9" y1="404.7" x2="174.9" y2="467.8" stroke="#2b2724" stroke-width="2.2" /><line x1="328.5" y1="404.7" x2="328.5" y2="467.8" stroke="#2b2724" stroke-width="2.2" /><line x1="175.0" y1="444.0" x2="328.5" y2="444.0" stroke="#2b2724" stroke-width="2" /><line x1="197.2" y1="404.7" x2="197.2" y2="426.0" stroke="#2b2724" stroke-width="1.7" /><line x1="317.1" y1="404.7" x2="317.1" y2="426.0" stroke="#2b2724" stroke-width="1.7" /><line x1="175.0" y1="444.0" x2="197.2" y2="412.0" stroke="#5a5550" stroke-width="1.1" /><line x1="328.5" y1="444.0" x2="317.1" y2="412.0" stroke="#5a5550" stroke-width="1.1" /></svg></div><div class="cap" style="left:102px;top:70.90000000000002px">Grover Residence</div><div class="cap r" style="left:102px;top:70.90000000000002px;width:370.5px">View Project</div><div class="photo" style="left:102px;top:176.0px;width:370.5px;height:246.6px;"><svg viewBox="0.00 92.70 556.00 370.70" preserveAspectRatio="none"><defs><linearGradient id="p5_gB1" x1="0" y1="0" x2="1" y2="0"><stop offset="0" stop-color="#d7cfc5"/><stop offset=".75" stop-color="#dfd6ca"/><stop offset="1" stop-color="#e6d6c2"/></linearGradient><linearGradient id="p5_gB2" x1="0" y1="0" x2="0" y2="1"><stop offset="0" stop-color="#bfa081"/><stop offset=".5" stop-color="#c6b692"/><stop offset="1" stop-color="#c7ba96"/></linearGradient><linearGradient id="p5_gB2h" x1="0" y1="0" x2="1" y2="0"><stop offset="0" stop-color="#c3a583" stop-opacity=".8"/><stop offset=".35" stop-color="#c3a583" stop-opacity="0"/><stop offset=".72" stop-color="#c0a07a" stop-opacity="0"/><stop offset="1" stop-color="#c19f78" stop-opacity=".85"/></linearGradient><linearGradient id="p5_gB3" x1="0" y1="0" x2="1" y2="0"><stop offset="0" stop-color="#b89a7b"/><stop offset=".6" stop-color="#bd9d7a"/><stop offset="1" stop-color="#cba579"/></linearGradient><linearGradient id="p5_gW" x1="0" y1="0" x2="0" y2="1"><stop offset="0" stop-color="#6c725d"/><stop offset=".12" stop-color="#7e846c"/><stop offset=".3" stop-color="#8d9783"/><stop offset=".65" stop-color="#9caa98"/><stop offset="1" stop-color="#b4c0b0"/></linearGradient><linearGradient id="p5_gWh" x1="0" y1="0" x2="1" y2="0"><stop offset="0" stop-color="#6f8068" stop-opacity=".55"/><stop offset=".4" stop-color="#6f8068" stop-opacity="0"/><stop offset="1" stop-color="#c9d2c4" stop-opacity=".35"/></linearGradient><linearGradient id="p5_gWb" x1="0" y1="0" x2="1" y2="0"><stop offset=".5" stop-color="#7d7556" stop-opacity="0"/><stop offset="1" stop-color="#80714f" stop-opacity=".7"/></linearGradient><pattern id="p5_gRug" width="26" height="14" patternUnits="userSpaceOnUse"><path d="M0 7 L6.500 1 L13 7 L19.500 13 L26 7 M3 12 h5 M16 3 h5" stroke="#8d8a7b" stroke-width=".9" fill="none" opacity=".6"/></pattern><pattern id="p5_gCane" width="3" height="3" patternUnits="userSpaceOnUse"><path d="M0 1.500 H3 M1.500 0 V3" stroke="#a97c44" stroke-width=".5" opacity=".7"/></pattern><clipPath id="p5_gMc"><circle cx="275.900" cy="215.500" r="81.500"/></clipPath></defs><rect x="0.0" y="0.0" width="556.0" height="556.0" fill="#8f9a86" /><rect x="0.0" y="107.0" width="556.0" height="300.0" fill="url(#p5_gW)" /><rect x="0.0" y="107.0" width="556.0" height="300.0" fill="url(#p5_gWh)" /><rect x="0.0" y="107.0" width="556.0" height="22.0" fill="url(#p5_gWb)" /><rect x="0.0" y="129.0" width="556.0" height="22.0" fill="url(#p5_gWb)" opacity=".6"/><rect x="0.0" y="151.0" width="556.0" height="22.0" fill="url(#p5_gWb)" opacity=".25"/><rect x="0.0" y="0.0" width="556.0" height="40.5" fill="url(#p5_gB1)" /><rect x="0.0" y="40.0" width="556.0" height="50.5" fill="url(#p5_gB2)" /><rect x="0.0" y="40.0" width="556.0" height="50.5" fill="url(#p5_gB2h)" /><rect x="0.0" y="90.0" width="556.0" height="17.3" fill="url(#p5_gB3)" /><line x1="0.0" y1="107.3" x2="556.0" y2="107.3" stroke="#5f5a45" stroke-width="1.2" opacity=".6"/><rect x="481.0" y="107.0" width="75.0" height="300.0" fill="#d8ccbb" /><rect x="481.0" y="107.0" width="75.0" height="16.0" fill="#c9ab86" /><rect x="481.0" y="123.0" width="46.0" height="280.0" fill="#d6c8b4" /><rect x="527.0" y="123.0" width="29.0" height="280.0" fill="#efe7da" /><line x1="540.0" y1="180.0" x2="536.0" y2="400.0" stroke="#2b2824" stroke-width="1.6" /><rect x="538.0" y="182.0" width="18.0" height="220.0" fill="#cbb79c" opacity=".7"/><rect x="0.0" y="388.0" width="556.0" height="12.0" fill="#c9a87c" /><rect x="0.0" y="396.0" width="556.0" height="160.0" fill="#dedacb" /><rect x="0.0" y="396.0" width="556.0" height="160.0" fill="url(#p5_gRug)" /><polygon points="520.0,380.0 556.0,380.0 556.0,430.0 540.0,420.0" fill="#d29a52" /><circle cx="275.9" cy="215.5" r="82.5" fill="#8e9b87" /><g clip-path="url(#p5_gMc)"><rect x="190.0" y="130.0" width="175.0" height="24.5" fill="#e0c9a8" /><path d="M194 154.500 Q276 146 358 154.500 V130 H194 Z" fill="#e3ceae"/><rect x="190.0" y="154.5" width="175.0" height="160.0" fill="#8a9783" /><rect x="190.0" y="154.5" width="175.0" height="10.0" fill="#76806b" opacity=".6"/><rect x="226.0" y="186.0" width="68.5" height="88.0" fill="#cfc3a5" stroke="#1f1d1a" stroke-width="2"/><rect x="228.0" y="200.0" width="30.0" height="14.0" fill="#bfb08f" /><rect x="250.0" y="214.0" width="43.0" height="20.0" fill="#d8cdb0" /><rect x="228.0" y="240.0" width="40.0" height="16.0" fill="#c4b697" /><circle cx="306.0" cy="198.0" r="4.0" fill="#d9d7c0" /><path d="M302 198 a4 4 0 0 1 8 0 z" fill="#6f7d55"/><circle cx="306.0" cy="222.0" r="4.0" fill="#d9d7c0" /><path d="M302 222 a4 4 0 0 1 8 0 z" fill="#6f7d55"/><circle cx="306.0" cy="246.0" r="4.0" fill="#d9d7c0" /><path d="M302 246 a4 4 0 0 1 8 0 z" fill="#6f7d55"/></g><circle cx="275.9" cy="215.5" r="82.2" fill="none" stroke="#26231f" stroke-width="1.500"/><rect x="130.8" y="192.0" width="22.0" height="52.0" fill="#7f8c58" rx="11"/><path d="M131.8 226 v8 a10 10 0 0 0 20 0 v-8 z" fill="#e9e7b8"/><ellipse cx="141.8" cy="238.0" rx="17.0" ry="14.0" fill="#e6e8c0" opacity=".35"/><path d="M139.8 204 v-8 a9 9 0 0 1 18 0 v4" stroke="#5f6a42" stroke-width="2" fill="none"/><rect x="394.0" y="192.0" width="22.0" height="52.0" fill="#7f8c58" rx="11"/><path d="M395.0 226 v8 a10 10 0 0 0 20 0 v-8 z" fill="#e9e7b8"/><ellipse cx="405.0" cy="238.0" rx="17.0" ry="14.0" fill="#e6e8c0" opacity=".35"/><path d="M403.0 204 v-8 a9 9 0 0 1 18 0 v4" stroke="#5f6a42" stroke-width="2" fill="none"/><rect x="155.3" y="315.2" width="241.5" height="66.8" fill="#c99a5b" /><rect x="155.3" y="315.2" width="241.5" height="3.5" fill="#dbb27a" /><rect x="162.0" y="321.0" width="70.0" height="17.0" fill="#3a2c1e" /><rect x="240.0" y="321.0" width="72.0" height="17.0" fill="#3a2c1e" /><rect x="320.0" y="321.0" width="70.0" height="17.0" fill="#3a2c1e" /><rect x="170.0" y="327.0" width="46.0" height="11.0" fill="#c9b8a3" /><rect x="182.0" y="324.0" width="38.0" height="4.0" fill="#a85b4a" /><rect x="252.0" y="326.0" width="50.0" height="12.0" fill="#e9e4d8" /><rect x="258.0" y="322.0" width="36.0" height="4.0" fill="#d9a98a" /><rect x="331.0" y="324.0" width="45.0" height="14.0" fill="#a5673c" /><rect x="155.3" y="340.0" width="241.5" height="3.0" fill="#b88a50" /><rect x="160.0" y="344.0" width="232.0" height="33.0" fill="#d3a969" /><rect x="160.0" y="344.0" width="232.0" height="33.0" fill="url(#p5_gCane)" /><line x1="236.0" y1="343.0" x2="236.0" y2="378.0" stroke="#b08046" stroke-width="1.6" /><line x1="315.0" y1="343.0" x2="315.0" y2="378.0" stroke="#b08046" stroke-width="1.6" /><rect x="155.3" y="378.0" width="241.5" height="4.0" fill="#b98b52" /><line x1="172.0" y1="382.0" x2="170.0" y2="401.0" stroke="#26231f" stroke-width="2.2" /><line x1="170.0" y1="401.0" x2="180.0" y2="392.0" stroke="#26231f" stroke-width="1.6" /><line x1="372.0" y1="382.0" x2="374.0" y2="401.0" stroke="#26231f" stroke-width="2.2" /><line x1="366.0" y1="382.0" x2="366.0" y2="396.0" stroke="#26231f" stroke-width="1.6" /><ellipse cx="276.0" cy="392.0" rx="110.0" ry="5.0" fill="#7f8a78" opacity=".35"/><circle cx="179.0" cy="298.0" r="14.0" fill="#e9e4dc" /><ellipse cx="175.0" cy="293.0" rx="6.0" ry="5.0" fill="#f7f4ee" opacity=".8"/><ellipse cx="204.0" cy="307.0" rx="8.0" ry="4.5" fill="#d9d6c8" /><ellipse cx="214.0" cy="304.0" rx="5.0" ry="6.0" fill="#cfd0c4" /><path d="M166.6 280.6 l6.0 -3.1 M165.8 277.5 l2.8 6.5 M168.2 270.2 l4.7 3.1 M190.1 283.8 l-1.3 -3.6 M193.6 276.7 l-4.4 -6.4 M179.1 279.2 l-3.9 -0.7 M180.9 283.5 l6.6 1.3 M164.3 282.0 l-7.9 -1.0 M165.0 278.0 l-5.3 1.4 M194.0 277.8 l4.5 -7.1 M174.9 283.3 l-1.0 3.9 M179.0 270.4 l3.5 -5.1 M192.2 275.1 l5.0 0.0 M187.3 273.6 l6.2 -0.8 M189.4 282.2 l1.0 -5.3 M185.9 281.6 l8.6 -2.0 M183.9 282.0 l3.2 2.3 M180.0 273.2 l-6.2 -2.4 M183.0 287.6 l5.4 5.9 M185.7 283.2 l1.2 5.2 M192.1 276.0 l-3.2 9.1 M180.5 285.3 l4.9 -6.3 M190.9 285.0 l1.2 5.2 M179.3 271.2 l-1.2 3.8 M188.3 282.9 l0.3 7.7 M170.5 283.8 l6.7 -1.7 M164.7 273.0 l1.9 4.2 M190.1 272.1 l0.0 4.8 M177.0 266.4 l3.3 9.6 M187.2 271.7 l-3.7 2.0 M193.2 280.8 l0.6 8.4 M177.4 288.9 l-4.6 -3.2 M184.1 287.1 l4.6 2.1 M164.2 274.0 l-4.1 -3.6 M184.3 275.3 l5.4 0.6 M174.3 279.0 l2.7 5.4 M172.8 276.1 l-6.3 7.4 M190.9 276.8 l-2.7 -7.1 M179.9 279.7 l9.8 1.1 M173.2 266.8 l7.9 1.1 M194.8 289.1 l-4.4 9.5 M212.9 292.0 l-0.8 -9.8 M204.2 278.0 l2.7 -9.5 M199.1 296.0 l7.8 -5.6 M195.7 293.3 l4.9 -5.7 M199.8 282.8 l-6.7 -3.9 M213.4 292.6 l9.7 -0.4 M204.0 280.6 l-0.7 -7.5 M194.8 292.0 l7.6 4.4 M214.1 289.7 l-5.1 0.6 M202.3 280.0 l-7.5 -6.6 M205.0 289.3 l-2.6 7.8 M206.5 292.7 l6.7 -4.5 M194.4 292.0 l-3.8 7.2 M207.5 295.5 l3.4 -9.3 M210.4 282.9 l-5.0 -2.9 M210.5 294.4 l4.9 -8.1 M202.2 276.6 l-0.8 4.6 M199.0 289.9 l1.4 6.2 M199.1 282.0 l-3.7 8.6 M213.0 287.1 l3.3 1.7 M206.7 286.2 l-1.9 -7.2 M201.1 298.0 l4.4 0.5 M203.2 288.5 l2.5 -4.5 M206.6 290.0 l-4.6 -4.8 M198.3 280.9 l3.6 -9.6 M202.9 283.1 l-4.7 0.7 M213.2 288.6 l-1.1 -4.6 M204.0 295.0 l-2.3 -6.8 M197.1 281.1 l-7.1 5.6 M207.9 286.0 l7.8 -3.5 M210.5 293.9 l-7.0 -7.0 M198.5 294.3 l6.6 -6.2 M212.7 285.2 l-2.9 -4.0 M203.1 277.3 l-5.4 -6.6 M207.6 299.1 l10.3 -1.3 M194.6 285.5 l-4.2 8.9 M209.4 282.4 l5.7 3.3 M195.0 284.7 l-3.7 0.3 M206.1 285.2 l1.5 -4.5" stroke="#5b8a45" stroke-width="1.6" fill="none" stroke-linecap="round" opacity="0.9"/><rect x="335.0" y="285.0" width="26.0" height="30.0" fill="#c9c9bd" opacity=".8"/><ellipse cx="338.0" cy="306.0" rx="16.0" ry="9.0" fill="#b0523f" /><ellipse cx="333.0" cy="299.0" rx="9.0" ry="6.0" fill="#e0a23c" /><ellipse cx="346.0" cy="309.0" rx="10.0" ry="6.0" fill="#7d3a5a" /><polygon points="362.0,288.0 388.0,288.0 385.0,315.0 365.0,315.0" fill="#c79b5e" /><path d="M369.6 284.9 l2.5 3.0 M364.8 277.2 l3.8 -6.0 M382.9 275.9 l3.3 -1.1 M376.6 284.4 l-1.8 7.1 M369.4 273.0 l3.5 -5.3 M372.2 283.1 l4.7 -6.9 M377.9 286.0 l6.0 -1.2 M370.2 276.2 l-5.9 -1.3 M373.4 277.1 l6.0 -1.2 M366.3 282.7 l-5.5 -2.3 M373.9 275.8 l-5.3 -1.3 M386.1 275.7 l-0.7 5.8 M380.5 282.2 l3.4 -7.7 M368.3 278.7 l2.4 6.3 M378.9 276.5 l0.6 -3.1 M377.0 282.0 l-1.9 -4.6 M369.2 283.6 l5.8 4.5 M381.1 282.5 l-0.0 4.2 M367.2 276.9 l-3.9 3.9 M370.3 277.3 l1.9 6.5 M369.4 273.0 l4.0 -5.4 M378.6 274.6 l-0.5 -7.8 M380.5 275.1 l-3.4 7.8 M377.4 286.8 l2.9 -2.5 M375.7 285.7 l-0.2 3.6 M378.8 272.9 l0.9 -3.6 M366.9 282.3 l4.2 0.5 M370.3 270.2 l3.6 -0.7 M364.6 277.7 l-7.1 -0.1 M376.2 280.2 l2.5 2.0 M366.8 275.9 l-3.5 -1.6 M377.2 281.7 l4.8 -7.5 M378.3 276.8 l8.1 3.3 M364.8 279.9 l-2.7 5.1 M367.2 277.4 l-2.5 -1.8 M371.7 270.1 l2.4 5.2 M374.5 272.3 l1.3 3.8 M373.5 277.9 l6.1 -4.9 M371.9 270.0 l-3.7 -3.9 M368.1 274.3 l7.8 -0.9 M374.4 286.6 l-0.3 -7.7 M378.0 272.7 l6.6 -5.0 M371.4 270.6 l0.5 -5.4 M374.5 275.6 l-3.2 4.9 M382.1 278.4 l-4.3 -5.2" stroke="#4f8a3c" stroke-width="1.8" fill="none" stroke-linecap="round" opacity="0.95"/><path d="M28.0 118.0 Q34.3 202.7 95.0 262.0 Q88.7 177.3 28.0 118.0 Z" fill="#264a25"/><path d="M107.0 139.0 Q82.5 206.5 112.0 272.0 Q136.5 204.5 107.0 139.0 Z" fill="#2f5a2c"/><path d="M120.0 165.0 Q102.1 215.3 128.0 262.0 Q145.9 211.7 120.0 165.0 Z" fill="#1f3d20"/><path d="M20.0 220.0 Q24.6 272.7 70.0 300.0 Q65.4 247.3 20.0 220.0 Z" fill="#3a6a35"/><path d="M150.0 240.0 Q120.7 262.8 120.0 300.0 Q149.3 277.2 150.0 240.0 Z" fill="#264a25"/><path d="M0.0 205.0 Q0.1 256.9 40.0 290.0 Q39.9 238.1 0.0 205.0 Z" fill="#2f5a2c"/><path d="M70.0 300.0 Q126.4 297.8 170.0 262.0 Q113.6 264.2 70.0 300.0 Z" fill="#1f3d20"/><path d="M120.0 300.0 Q163.9 299.9 200.0 275.0 Q156.1 275.1 120.0 300.0 Z" fill="#3a6a35"/><path d="M60.0 330.0 Q49.6 302.2 20.0 300.0 Q30.4 327.8 60.0 330.0 Z" fill="#264a25"/><path d="M110.0 330.0 Q145.4 335.2 175.0 315.0 Q139.6 309.8 110.0 330.0 Z" fill="#2f5a2c"/><path d="M30.0 340.0 Q19.4 321.7 0.0 330.0 Q10.6 348.3 30.0 340.0 Z" fill="#1f3d20"/><path d="M80.0 350.0 Q107.4 356.8 130.0 340.0 Q102.6 333.2 80.0 350.0 Z" fill="#3a6a35"/><path d="M225.0 290.0 Q204.1 277.1 180.0 282.0 Q200.9 294.9 225.0 290.0 Z" fill="#264a25"/><path d="M33.3 348.3 l-3.8 -6.5 M17.8 268.2 l-7.8 -1.7 M54.0 300.0 l-3.4 -10.8 M34.5 299.1 l-8.3 -7.4 M29.2 331.7 l5.9 2.0 M23.3 311.0 l-0.1 12.7 M9.7 289.0 l9.4 -2.0 M54.0 298.8 l1.9 -4.8 M8.6 274.9 l12.4 3.6 M41.0 329.0 l4.4 7.8 M24.4 292.2 l7.8 -2.8 M7.1 293.5 l-4.7 5.3 M17.4 269.0 l-2.3 10.7 M29.0 305.7 l0.2 4.9 M44.4 336.2 l-9.7 8.0 M29.9 288.8 l13.0 -0.9 M55.6 321.2 l-7.9 3.8 M44.6 295.9 l-12.8 -1.9 M26.5 266.3 l11.7 -1.6 M21.9 289.7 l-6.1 -6.1 M32.0 310.9 l-5.5 -1.0 M7.0 314.4 l-6.6 1.9 M13.1 284.0 l1.6 -9.1 M59.3 299.3 l-0.7 -6.6 M51.4 331.0 l2.2 -9.9 M20.1 320.2 l-3.8 -8.8 M10.0 278.3 l0.1 -6.2 M30.2 349.5 l10.7 -6.3 M37.2 303.0 l-1.1 8.3 M23.1 288.8 l-5.0 -1.3 M51.1 321.3 l-9.7 -3.2 M15.5 324.7 l1.9 7.4 M29.1 254.2 l5.0 2.5 M38.6 263.2 l0.8 -6.4 M16.4 311.6 l2.9 -7.3 M13.0 259.1 l-4.3 8.4 M29.3 252.0 l-7.0 3.4 M53.0 326.8 l4.6 2.5 M10.8 286.3 l-2.8 -6.6 M31.3 286.4 l2.4 10.2 M44.4 313.5 l-1.7 -10.6 M27.7 318.5 l-6.9 8.6 M23.1 312.8 l-2.4 -9.3 M55.4 276.3 l7.2 -4.4 M35.4 273.9 l-3.3 7.4 M56.0 281.1 l0.1 7.8 M18.0 322.5 l-6.3 4.9 M37.6 335.3 l2.7 -9.0 M41.6 267.9 l5.0 10.1 M41.7 282.0 l9.1 1.3 M8.3 289.7 l10.1 -2.2 M32.5 288.1 l-11.1 -3.4 M37.4 307.2 l-1.0 -12.6 M50.6 320.2 l6.9 8.8 M21.2 280.1 l2.1 11.2 M4.0 294.1 l-5.9 4.6 M54.1 291.9 l-9.3 0.4 M25.4 258.6 l7.1 -4.2 M41.3 263.8 l7.1 -9.4 M44.2 259.3 l9.9 -2.7 M26.7 356.5 l2.7 -7.9 M46.6 365.1 l-0.7 -13.4 M48.4 368.1 l2.4 8.0 M49.7 386.6 l6.8 2.6 M84.2 374.9 l1.0 -6.0 M85.0 367.2 l-11.0 -6.4 M72.8 362.1 l2.6 5.9 M63.1 383.6 l-5.4 -3.7 M68.4 373.6 l5.3 10.0 M48.8 379.2 l3.6 -8.0 M57.5 386.3 l6.5 -3.9 M22.6 352.0 l-6.5 0.7 M97.1 368.4 l2.5 -7.6 M31.7 356.5 l-2.1 13.3 M49.3 348.6 l8.7 0.6 M35.3 378.1 l-2.3 -9.7 M68.7 369.3 l-3.0 6.2 M79.6 345.3 l-8.8 -10.2 M57.0 380.4 l6.7 9.3 M96.3 360.2 l6.8 -9.8 M78.1 367.2 l-1.1 -5.3 M32.8 362.4 l9.4 -2.7 M73.8 348.0 l2.0 -8.0 M70.5 355.8 l2.9 -5.7 M32.1 354.5 l6.6 10.0 M51.6 374.5 l6.4 3.3 M26.9 364.8 l-6.8 8.2 M79.8 370.8 l-12.8 3.1 M75.5 340.1 l7.9 0.6 M55.2 346.8 l-7.9 -3.4 M99.7 361.8 l1.9 -6.1 M43.9 349.9 l-6.7 6.6 M53.1 375.5 l-8.2 6.6 M59.3 372.5 l-0.9 -7.4 M88.2 352.9 l-1.2 -7.4 M65.6 352.5 l3.4 4.1 M45.2 338.8 l3.5 7.3 M76.0 341.6 l5.5 3.5 M67.8 368.2 l-4.3 2.8 M83.0 351.2 l-10.3 -0.7 M63.8 334.8 l-5.6 4.9 M55.8 361.8 l-8.8 6.3 M95.3 357.2 l-5.3 -8.4 M82.9 361.9 l-5.7 8.7 M79.3 370.7 l-11.6 -0.7 M74.2 340.5 l6.2 9.6 M84.3 348.1 l-5.4 7.2 M81.2 378.4 l9.1 -0.8 M52.1 335.0 l4.2 12.3 M47.6 351.1 l5.8 3.3 M30.4 349.2 l-6.1 11.3 M42.5 374.6 l9.4 9.3 M85.0 380.0 l-9.2 -2.6 M40.9 354.7 l11.3 -7.2 M72.8 340.2 l8.6 8.3 M50.9 385.7 l0.6 9.6 M68.4 349.5 l-5.0 -1.5 M76.6 362.4 l12.9 -1.1 M47.9 347.0 l-5.3 -9.8 M37.4 374.6 l1.5 -4.4 M29.3 276.0 l5.0 6.2 M17.4 242.9 l-6.8 -0.9 M14.5 240.4 l-3.0 -3.8 M21.4 236.6 l9.6 -2.5 M12.4 254.8 l-7.6 -7.5 M25.9 215.4 l-13.4 1.2 M34.7 218.6 l-7.1 4.5 M7.6 234.7 l-9.1 -1.5 M7.7 265.7 l-2.1 4.5 M22.1 212.5 l-1.1 -9.8 M25.1 227.9 l-4.3 -2.8 M34.5 268.8 l-8.1 -0.1 M40.8 260.7 l-6.6 -1.1 M20.6 273.6 l0.5 5.1 M41.7 229.2 l-6.2 -10.6 M9.2 267.0 l2.0 11.0 M7.6 234.5 l9.5 6.8 M35.4 270.6 l4.3 -1.4 M25.4 271.9 l-2.3 4.5 M39.3 227.9 l-6.2 4.6 M21.3 245.6 l12.3 2.4 M20.0 276.4 l12.2 -5.4 M16.0 253.1 l-3.6 12.3 M32.0 239.3 l4.0 -6.5 M16.8 252.9 l9.8 -9.2 M29.7 280.4 l4.5 11.6 M31.2 254.0 l-1.1 -7.2 M40.1 228.1 l-1.3 -5.6 M18.5 213.5 l-4.9 1.8 M26.9 271.9 l-1.5 -6.1 M29.1 267.6 l-5.9 -10.0 M13.7 273.4 l7.3 -6.5 M26.4 271.8 l9.4 -4.7 M22.3 281.5 l11.3 7.2 M11.5 260.6 l-4.8 -0.9 M16.4 237.5 l-0.1 11.7 M34.1 261.1 l0.2 -6.7 M22.3 279.1 l4.9 11.6 M28.7 249.4 l-10.9 2.7 M10.6 275.6 l-6.1 0.0 M9.9 238.9 l-6.6 8.0 M28.0 221.9 l-12.1 -0.4 M19.2 223.6 l5.8 -1.8 M26.5 234.0 l-5.1 -4.2 M8.6 262.9 l2.6 -11.3 M26.2 277.9 l1.7 9.6 M21.2 250.0 l-9.0 -6.2 M8.2 233.5 l2.5 5.3 M39.0 253.1 l-7.8 3.4 M23.5 285.6 l11.4 5.6 M11.6 237.6 l1.7 -6.4 M31.8 267.7 l7.1 1.9 M14.5 230.0 l-0.9 9.8 M40.4 269.1 l3.2 6.0 M33.9 278.0 l5.6 -10.1 M36.9 259.6 l-4.2 4.9 M29.0 248.5 l-11.3 0.7 M32.6 248.7 l-10.8 3.1 M34.5 254.8 l4.5 -3.7 M16.5 263.6 l-4.6 2.4" stroke="#3f7a35" stroke-width="2.2" fill="none" stroke-linecap="round" opacity="0.85"/><path d="M95 260 L88 370 M110 270 L94 370 M70 300 L84 372" stroke="#3f6a35" stroke-width="1.6" fill="none"/><polygon points="70.0,368.0 116.0,368.0 112.0,416.0 75.0,416.0" fill="#e9e6dc" /><line x1="72.0" y1="374.0" x2="114.0" y2="374.0" stroke="#2d2b27" stroke-width="2.6" stroke-dasharray="7 4"/><line x1="72.0" y1="383.0" x2="114.0" y2="383.0" stroke="#2d2b27" stroke-width="2.6" stroke-dasharray="7 4"/><line x1="72.0" y1="392.0" x2="114.0" y2="392.0" stroke="#2d2b27" stroke-width="2.6" stroke-dasharray="7 4"/><line x1="72.0" y1="401.0" x2="114.0" y2="401.0" stroke="#2d2b27" stroke-width="2.6" stroke-dasharray="7 4"/><line x1="72.0" y1="410.0" x2="114.0" y2="410.0" stroke="#2d2b27" stroke-width="2.6" stroke-dasharray="7 4"/><polygon points="32.0,416.0 84.0,416.0 80.0,456.0 36.0,456.0" fill="#e6dfcc" /><line x1="34.0" y1="422.0" x2="82.0" y2="422.0" stroke="#4a4238" stroke-width="1.6" stroke-dasharray="3 2"/><line x1="34.0" y1="430.0" x2="82.0" y2="430.0" stroke="#4a4238" stroke-width="1.6" stroke-dasharray="3 2"/><line x1="34.0" y1="438.0" x2="82.0" y2="438.0" stroke="#4a4238" stroke-width="1.6" stroke-dasharray="3 2"/><line x1="34.0" y1="446.0" x2="82.0" y2="446.0" stroke="#4a4238" stroke-width="1.6" stroke-dasharray="3 2"/><polygon points="0.0,408.0 27.0,408.0 25.0,448.0 0.0,448.0" fill="#8a6a45" /><line x1="0.0" y1="440.0" x2="26.0" y2="440.0" stroke="#3a2c20" stroke-width="2" /><line x1="6.0" y1="330.0" x2="8.0" y2="410.0" stroke="#5a4a35" stroke-width="1.8" /><polygon points="424.0,312.0 490.0,312.0 486.0,338.0 436.0,338.0" fill="#c9783a" /><polygon points="408.0,335.0 478.0,330.0 482.0,372.0 414.0,378.0" fill="#ece6da" /><line x1="412.0" y1="334.0" x2="482.0" y2="330.0" stroke="#f3efe6" stroke-width="4" stroke-dasharray="4 3"/><polygon points="386.0,378.0 460.0,374.0 468.0,384.0 396.0,390.0" fill="#e2d2b6" /><path d="M384 350 Q376 380 392 400 L420 420 M460 374 L462 424 Q470 432 480 424 M384 350 Q400 342 418 346 M396 390 L380 418 Q392 426 410 416" stroke="#c9a35e" stroke-width="1.8" fill="none"/><path d="M476 354 H537 Q540 366 522 376 Q528 400 540 420 Q538 432 506 434 Q476 432 478 420 Q490 398 494 376 Q474 366 476 354 Z" fill="#ddc6a0"/><ellipse cx="506.5" cy="354.0" rx="30.5" ry="5.0" fill="#e9d6b4" /><path d="M516.7 332.1 l0.6 -7.4 M505.8 335.0 l-4.2 -1.4 M493.7 332.3 l-3.3 3.8 M514.3 329.1 l5.3 1.3 M503.3 328.0 l-4.0 6.0 M511.1 324.2 l4.4 -3.8 M496.4 335.7 l-5.6 5.2 M506.5 335.8 l2.6 5.8 M507.8 333.9 l1.3 5.7 M502.1 336.2 l7.1 -0.3 M508.5 326.6 l-2.5 2.3 M502.4 324.4 l-0.5 3.1 M507.5 334.7 l-6.7 5.3 M503.7 324.9 l-2.5 3.0 M511.6 327.7 l0.7 -7.3 M506.4 329.2 l-2.3 4.8 M514.8 334.7 l-3.5 6.8 M502.2 329.7 l-3.5 2.7 M509.5 331.0 l-2.6 -1.8 M502.0 336.0 l-3.7 -1.0 M503.4 325.1 l-1.1 -6.9 M508.3 333.6 l-1.4 7.1 M498.8 333.5 l2.9 -3.3 M503.2 335.7 l0.7 3.2 M514.4 331.2 l-7.2 -3.2 M511.5 329.2 l-4.1 -7.5 M507.1 338.1 l-4.4 -7.6 M508.9 326.4 l-2.4 -2.6 M498.2 332.7 l4.9 2.0 M501.0 336.2 l-0.7 3.9 M498.2 334.0 l3.5 6.1 M505.2 333.0 l-3.0 4.6 M510.3 336.2 l-1.9 -6.0 M504.4 328.6 l-4.0 3.3 M512.0 332.4 l5.6 2.0" stroke="#4f8a3c" stroke-width="1.8" fill="none" stroke-linecap="round" opacity="0.95"/><rect x="499.0" y="340.0" width="12.0" height="14.0" fill="#cfd6cf" opacity=".8"/><path d="M504.7 235.9 l-3.8 7.4 M535.2 253.5 l9.1 -7.4 M518.4 282.6 l4.2 9.8 M501.0 224.1 l-7.7 9.0 M541.4 237.6 l-8.6 -8.8 M505.8 263.7 l-2.4 14.4 M531.7 233.0 l5.0 -3.2 M532.2 271.5 l-3.4 8.8 M530.0 247.8 l2.8 7.5 M514.7 232.5 l11.5 0.1 M510.0 262.1 l-12.6 0.5 M500.4 240.6 l-13.6 -5.5 M534.7 245.5 l-8.7 12.5 M511.5 281.2 l-4.4 -12.3 M543.0 241.8 l6.6 10.4 M500.5 251.8 l-5.9 6.3 M519.9 220.8 l0.7 8.2 M515.0 265.0 l-6.9 -0.6 M526.3 254.1 l10.6 7.9 M533.3 267.5 l1.5 -10.7 M532.6 281.8 l4.2 -4.4 M519.5 278.5 l2.8 -9.4 M517.2 230.4 l-1.9 -8.9 M508.6 280.1 l8.0 -12.2 M504.6 239.3 l-3.3 -11.9 M531.3 218.7 l6.8 6.8 M513.9 233.2 l2.3 5.2 M498.3 230.1 l6.9 -1.3 M513.6 226.1 l-6.7 -7.3 M543.6 233.8 l12.7 4.0 M523.9 255.6 l-3.0 13.2 M529.0 249.4 l-2.8 5.1 M502.6 242.7 l-6.2 6.4 M527.4 215.2 l-2.1 9.6 M503.2 226.4 l9.7 -1.2 M513.4 222.3 l2.2 -6.8 M523.9 261.7 l7.6 -3.4 M511.0 251.0 l-2.5 5.1 M511.0 243.9 l-6.0 -6.0 M522.5 277.5 l-5.6 6.2 M526.3 253.2 l7.0 -5.6 M529.8 258.1 l-16.4 1.7 M527.2 285.6 l-10.0 1.0 M525.7 226.4 l10.8 4.1 M508.7 223.7 l-2.7 15.6 M531.7 274.5 l-13.7 5.1 M510.0 285.9 l7.3 1.2 M518.0 306.3 l-8.7 10.7 M504.1 322.7 l7.8 0.5 M515.0 299.1 l-14.2 -2.5 M518.8 271.9 l-11.6 8.5 M524.3 273.7 l6.6 -0.6 M530.1 293.4 l-2.3 -7.9 M515.9 297.2 l-7.1 -3.7 M498.1 313.3 l-8.0 -12.0 M496.2 320.4 l-5.2 6.8 M526.1 289.2 l7.6 5.1 M511.3 284.4 l-0.5 -11.5 M506.6 287.0 l5.6 4.4 M500.4 318.0 l11.0 0.7 M498.0 311.0 l-15.5 -3.7 M519.9 330.6 l-5.9 12.4 M535.2 321.3 l-14.6 6.8 M515.6 321.3 l-2.0 -7.2 M508.4 327.7 l8.6 -2.9 M519.3 318.6 l7.1 -0.5 M499.8 284.3 l-4.8 -6.2 M490.9 278.6 l7.7 -9.7 M489.4 299.2 l11.1 9.7 M504.5 278.7 l-5.1 -8.7 M501.2 310.8 l-9.5 -7.0 M506.6 299.4 l-7.3 -7.5 M492.7 285.5 l6.5 -3.0 M482.7 306.6 l-0.7 -8.9 M509.5 266.3 l-12.3 8.7 M532.9 324.2 l-8.1 0.5 M525.0 276.9 l13.5 -5.6 M518.3 276.8 l6.2 -0.2 M529.3 279.1 l-0.1 14.4 M490.9 307.1 l5.1 -5.7 M507.5 326.8 l10.4 5.2 M516.9 276.8 l0.7 14.3 M528.1 276.4 l-14.7 -4.7 M515.4 287.3 l-4.4 4.9 M529.2 304.6 l9.7 -11.0 M521.5 309.7 l-11.4 9.6 M490.9 278.3 l14.7 7.1 M518.4 326.0 l9.6 -9.5 M520.0 326.3 l-5.1 2.4 M503.0 316.1 l-5.9 -6.2 M529.4 314.9 l2.9 6.3 M536.2 310.8 l4.7 4.9 M551.6 321.5 l-4.8 6.0 M553.3 329.2 l-0.8 -9.4 M536.2 347.8 l7.5 9.9 M527.1 342.4 l-8.9 5.7 M524.5 328.8 l-7.5 10.9 M541.1 352.7 l-3.3 14.7 M536.6 357.0 l-4.7 -9.4 M549.1 322.4 l-0.5 -12.1 M536.2 332.4 l-7.5 4.2 M525.4 340.6 l-3.5 12.7 M536.3 316.9 l-5.9 3.7 M546.4 320.8 l-8.1 4.4 M546.3 305.0 l-9.7 -6.2 M552.3 346.6 l8.1 5.0 M530.4 348.1 l-4.5 -8.1 M552.5 312.5 l12.3 1.8 M530.6 333.5 l-8.8 2.0 M534.1 309.5 l16.0 -3.0 M550.0 329.1 l6.0 -11.1 M535.2 301.4 l9.7 4.3 M529.5 344.1 l3.3 16.1 M542.5 347.7 l6.1 7.7 M539.8 321.3 l6.3 11.0 M530.1 312.0 l-0.3 14.4 M538.3 303.8 l7.8 7.3 M554.8 332.8 l14.4 -5.2 M549.4 332.7 l-11.1 -2.5 M550.9 347.1 l-3.5 10.5 M548.5 345.9 l4.4 4.7 M531.4 328.8 l1.4 -8.1 M536.8 333.6 l2.1 10.3 M529.9 322.7 l3.9 -5.4 M543.7 320.5 l11.1 -2.1 M529.6 343.0 l10.6 -12.2 M538.6 331.6 l8.2 11.9 M538.7 304.8 l6.3 9.4 M545.2 331.8 l-5.1 15.3 M530.8 308.4 l9.7 2.9 M547.2 337.2 l11.9 10.1 M534.7 348.5 l-8.7 -12.6 M551.4 322.5 l-15.4 -0.1 M533.1 340.1 l-0.6 -8.3 M532.9 344.5 l-9.3 1.4 M524.0 219.5 l14.0 4.5 M547.1 219.4 l-9.5 -2.9 M536.0 220.0 l-6.2 6.5 M526.4 215.8 l-0.0 -10.9 M546.5 215.6 l5.5 -1.2 M520.3 206.3 l-8.0 9.0 M528.3 221.4 l-9.3 -7.6 M529.9 225.4 l-13.7 -1.4 M540.2 216.6 l-0.1 8.5 M538.3 205.0 l6.3 -7.6 M531.7 227.9 l14.0 8.4 M540.1 207.0 l-6.0 13.2 M538.4 202.5 l13.0 4.9 M548.6 218.8 l-14.9 -5.0 M533.3 213.2 l12.6 -5.5 M533.8 214.4 l-0.8 -10.1 M527.4 200.7 l5.5 -3.2 M537.3 204.6 l0.1 -9.7 M523.7 218.4 l6.7 6.1 M534.5 210.7 l11.0 9.8 M528.3 204.8 l5.2 4.4 M528.5 229.5 l-14.5 -5.8 M537.8 225.0 l-14.3 -3.3 M547.0 225.5 l-5.8 1.0 M524.9 219.1 l-7.2 -14.0 M520.1 215.5 l-10.7 9.1 M547.2 223.5 l6.0 10.3 M538.1 224.0 l4.8 8.0 M524.1 208.7 l-9.0 7.6 M540.9 207.0 l-9.3 -5.4 M545.2 213.9 l-2.6 -7.6 M533.9 228.6 l-7.4 -3.8 M550.0 220.7 l-9.6 9.3 M522.1 220.2 l-15.1 -5.9 M545.2 209.2 l-8.0 0.7 M535.1 209.9 l-5.2 13.9 M549.7 217.9 l-10.5 -4.8 M531.5 220.4 l13.3 -4.2 M536.9 210.3 l1.7 -7.7 M539.1 226.1 l-5.3 -4.3 M536.3 202.8 l12.6 -9.3 M531.0 206.0 l12.8 -4.1 M530.8 229.3 l-1.2 -8.3 M535.0 217.3 l-8.1 -1.9 M532.6 222.8 l7.3 8.0" stroke="#47683c" stroke-width="3.2" fill="none" stroke-linecap="round" opacity="0.85"/><polygon points="536.0,352.0 556.0,352.0 556.0,400.0 538.0,396.0" fill="#a69a8a" /></svg></div><div class="cap" style="left:102px;top:438.8px">21 Alegheny Ave</div><div class="cap r" style="left:102px;top:438.8px;width:370.5px">View Project</div><div class="photo" style="left:102px;top:543.9px;width:370.5px;height:246.6px;"><svg viewBox="0.00 0.00 286.00 190.70" preserveAspectRatio="none"><defs><linearGradient id="p6_mG" x1="0" y1="0" x2="1" y2="0"><stop offset="0" stop-color="#d5dcc9"/><stop offset=".5" stop-color="#dfe5d6"/><stop offset="1" stop-color="#f4f6ef"/></linearGradient></defs><rect x="0.0" y="0.0" width="286.0" height="191.0" fill="#e8e8e7" /><rect x="0.0" y="0.0" width="47.6" height="191.0" fill="#dededd" /><rect x="121.4" y="0.0" width="164.6" height="191.0" fill="url(#p6_mG)" /><ellipse cx="204.0" cy="36.1" rx="7.2" ry="9.2" fill="#b9c7a6" opacity=".55"/><ellipse cx="134.4" cy="45.2" rx="14.1" ry="4.5" fill="#c7d3b8" opacity=".55"/><ellipse cx="218.0" cy="53.2" rx="6.4" ry="6.3" fill="#aebd9a" opacity=".55"/><ellipse cx="240.7" cy="41.6" rx="12.5" ry="4.9" fill="#d6dfca" opacity=".55"/><ellipse cx="169.7" cy="17.8" rx="10.6" ry="9.5" fill="#b9c7a6" opacity=".55"/><ellipse cx="223.5" cy="64.2" rx="9.5" ry="8.5" fill="#c7d3b8" opacity=".55"/><ellipse cx="148.9" cy="30.4" rx="12.1" ry="8.4" fill="#aebd9a" opacity=".55"/><ellipse cx="197.8" cy="16.1" rx="8.4" ry="5.3" fill="#d6dfca" opacity=".55"/><ellipse cx="176.3" cy="66.7" rx="7.8" ry="9.3" fill="#b9c7a6" opacity=".55"/><ellipse cx="267.6" cy="13.8" rx="9.4" ry="7.0" fill="#c7d3b8" opacity=".55"/><ellipse cx="137.0" cy="39.7" rx="14.2" ry="4.7" fill="#aebd9a" opacity=".55"/><ellipse cx="224.5" cy="18.5" rx="11.2" ry="9.4" fill="#d6dfca" opacity=".55"/><ellipse cx="164.4" cy="10.6" rx="6.8" ry="7.2" fill="#b9c7a6" opacity=".55"/><ellipse cx="136.1" cy="15.9" rx="10.5" ry="9.5" fill="#c7d3b8" opacity=".55"/><ellipse cx="197.5" cy="37.9" rx="11.7" ry="4.6" fill="#aebd9a" opacity=".55"/><ellipse cx="221.9" cy="22.1" rx="11.5" ry="9.7" fill="#d6dfca" opacity=".55"/><ellipse cx="141.7" cy="48.9" rx="11.5" ry="4.9" fill="#b9c7a6" opacity=".55"/><ellipse cx="174.3" cy="79.6" rx="15.0" ry="4.7" fill="#c7d3b8" opacity=".55"/><ellipse cx="241.1" cy="76.6" rx="8.1" ry="7.7" fill="#aebd9a" opacity=".55"/><ellipse cx="140.0" cy="35.6" rx="12.1" ry="7.5" fill="#d6dfca" opacity=".55"/><ellipse cx="251.6" cy="16.1" rx="9.1" ry="9.2" fill="#b9c7a6" opacity=".55"/><ellipse cx="222.5" cy="41.6" rx="9.6" ry="9.9" fill="#c7d3b8" opacity=".55"/><ellipse cx="221.1" cy="11.3" rx="13.2" ry="6.0" fill="#aebd9a" opacity=".55"/><ellipse cx="199.6" cy="24.9" rx="10.0" ry="5.9" fill="#d6dfca" opacity=".55"/><ellipse cx="146.9" cy="54.1" rx="6.9" ry="8.7" fill="#b9c7a6" opacity=".55"/><ellipse cx="137.3" cy="64.7" rx="13.3" ry="7.0" fill="#c7d3b8" opacity=".55"/><polygon points="121.4,0.0 286.5,0.0 286.5,14.3 207.4,39.2 178.2,17.7 121.4,5.1" fill="#c4924f" /><polygon points="233.6,26.6 286.5,14.3 286.5,16.6 233.6,29.7" fill="#8a6538" /><polygon points="178.2,17.7 207.4,39.2 207.4,41.2 178.2,20.1" fill="#6f5534" /><polygon points="142.9,0.0 150.6,0.0 178.2,16.6 174.4,18.1" fill="#4a3c2c" /><polygon points="174.4,18.1 204.4,0.0 212.0,0.0 178.2,19.7" fill="#5a4733" opacity=".8"/><rect x="174.4" y="17.4" width="3.8" height="191.0" fill="#5d5a50" /><rect x="225.1" y="0.0" width="8.5" height="191.0" fill="#6b6a63" /><rect x="225.1" y="0.0" width="4.0" height="191.0" fill="#3f3d38" /><rect x="118.0" y="0.0" width="3.4" height="191.0" fill="#3b362f" /><line x1="161.0" y1="0.0" x2="161.0" y2="21.2" stroke="#3a342c" stroke-width="0.5" /><ellipse cx="161.0" cy="24.7" rx="10.0" ry="5.5" fill="#a98257" /><ellipse cx="161.0" cy="31.2" rx="12.5" ry="6.5" fill="#a98257" /><ellipse cx="161.0" cy="38.1" rx="12.0" ry="6.5" fill="#a98257" /><ellipse cx="161.0" cy="45.3" rx="9.5" ry="5.5" fill="#a98257" /><rect x="0.8" y="38.1" width="40.0" height="26.9" fill="#5b626c" /><rect x="0.8" y="38.1" width="4.5" height="26.9" fill="#747b84" /><rect x="0.0" y="65.0" width="40.7" height="20.0" fill="#cbcbca" /><rect x="53.5" y="51.2" width="38.7" height="40.0" fill="#5b6168" /><rect x="61.5" y="58.9" width="22.3" height="40.0" fill="#e1e5e0" /></svg></div></div><div class="top"><svg class="abs" style="left:5px;top:8px" width="15" height="10" viewBox="0 0 30 20"><path fill="#e9e9e9" d="M30 0 L20.400 19 H11.400 L15.400 11.100 H15.200 C11.900 15.500 7 18.300 0 19 V11.300 C0 11.300 4.500 11 7.100 8.200 H0 V0 H8 V6.600 L8.200 6.600 L11.500 0 H17.500 V6.500 L17.700 6.500 L21.100 0 Z"/></svg><div class="abs" style="left:26px;top:0;width:1px;height:27px;background:#2b2b2b"></div><div class="btn" style="left:32px;width:51px;"><svg class="ic" style="left:6.5px;top:3.3px;stroke-width:1.600;color:#c8c8c8;" width="10" height="11.5" viewBox="0 0 16 16" preserveAspectRatio="none"><path d="M3.5 2.500 H9.500 L12.500 5.500 V13.500 H3.500 Z"/><path d="M9.500 2.500 V5.500 H12.500"/></svg><span class="t" style="left:21.5px;top:4.85px;font-size:8.8px">Home</span></div><svg class="ic" style="left:418.5px;top:12.2px;stroke-width:1.467;stroke:#a3a3a3;color:#a3a3a3;" width="9" height="3" viewBox="0 0 12 4" preserveAspectRatio="none"><circle cx="2" cy="2" r="1" fill="currentColor" stroke="none"/><circle cx="6" cy="2" r="1" fill="currentColor" stroke="none"/><circle cx="10" cy="2" r="1" fill="currentColor" stroke="none"/></svg><div class="abs" style="left:440px;top:0;width:33px;height:26px;background:#2f2f2f"></div><svg class="ic" style="left:447.5px;top:6.5px;stroke-width:1.035;color:#c8c8c8;" width="17" height="13" viewBox="0 0 16 12" preserveAspectRatio="none"><path d="M2.500 3 V9.500 H12.500 V6.500"/><path d="M2.500 3 H9"/><path d="M0.800 11.200 H14.200"/><path d="M12.600 0.300 L13.300 2.100 L15.100 2.800 L13.300 3.500 L12.600 5.300 L11.900 3.500 L10.100 2.800 L11.900 2.100 Z" fill="currentColor" stroke="none"/></svg><svg class="ic" style="left:484.8px;top:6.8px;stroke-width:1.389;color:#c8c8c8;" width="9.5" height="12.6" viewBox="0 0 12 16" preserveAspectRatio="none"><rect x="1.200" y="1.200" width="9.600" height="13.600" rx="1"/><path d="M4.500 13 H7.500"/></svg><svg class="ic" style="left:516.5px;top:8.5px;stroke-width:1.467;color:#c8c8c8;" width="12" height="9" viewBox="0 0 16 12" preserveAspectRatio="none"><rect x="1" y="1.500" width="14" height="9" rx="1.200"/><path d="M12.800 4.500 V7.500"/></svg><svg class="ic" style="left:552px;top:6.8px;stroke-width:1.375;color:#c8c8c8;" width="8" height="12.6" viewBox="0 0 10 16" preserveAspectRatio="none"><rect x="1.300" y="1.200" width="7.400" height="13.600" rx="1"/><path d="M4 13 H6"/></svg><div class="t" style="left:582px;top:9.3px;font-size:8.8px;color:#cfcfcf;letter-spacing:.05px">1369 PX</div><div class="btn" style="left:918px;width:83px;"><svg class="ic" style="left:7px;top:5px;stroke-width:1.650;color:#c8c8c8;" width="8" height="8" viewBox="0 0 12 12" preserveAspectRatio="none"><path d="M10.500 1.200 L4.800 6.500 L6 7.700 L11 2 Z" fill="currentColor"/><path d="M4.300 7.300 C2.800 7.300 2.600 9 1.200 10.300 C3 10.900 5.300 10.300 5.300 8.300 Z" fill="currentColor"/></svg><span class="t" style="left:20px;top:4.9px">Designing</span><svg class="ic" style="left:68px;top:7px;stroke-width:1.467;color:#c8c8c8;" width="6" height="4" viewBox="0 0 8 5" preserveAspectRatio="none"><path d="M1 1 L4 4 L7 1"/></svg></div><svg class="ic" style="left:1013px;top:7px;stroke-width:1.467;color:#c8c8c8;" width="12" height="12" viewBox="0 0 16 16" preserveAspectRatio="none"><path d="M3 7.500 A5 5 0 0 1 12 5"/><path d="M13 8.500 A5 5 0 0 1 4 11"/><path d="M12.300 2.500 V5.200 H9.600"/><path d="M3.700 13.500 V10.800 H6.400"/></svg><svg class="ic" style="left:1037px;top:8px;stroke-width:1.467;color:#c8c8c8;" width="12" height="10" viewBox="0 0 16 14" preserveAspectRatio="none"><path d="M5 3.500 L1.500 7 L5 10.500"/><path d="M11 3.500 L14.500 7 L11 10.500"/><path d="M9.200 2 L6.800 12"/></svg><svg class="ic" style="left:1061px;top:7px;stroke-width:1.467;color:#c8c8c8;" width="12" height="12" viewBox="0 0 16 16" preserveAspectRatio="none"><path d="M8 2 A6 6 0 1 1 3.500 12 L2 14 V8 A6 6 0 0 1 8 2 Z"/><path d="M5.500 7 H10.500"/><path d="M5.500 9.500 H8.500"/></svg><svg class="ic" style="left:1087px;top:7px;stroke-width:1.467;color:#c8c8c8;" width="9" height="12" viewBox="0 0 12 16" preserveAspectRatio="none"><path d="M2 2.500 L10.500 8 L2 13.500 Z"/></svg><div class="btn" style="left:1110px;width:51px;"><svg class="ic" style="left:7px;top:4px;stroke-width:1.711;color:#c8c8c8;" width="9" height="10" viewBox="0 0 14 14" preserveAspectRatio="none"><circle cx="7" cy="4.300" r="2.500"/><path d="M1.800 12.500 C2.300 9 4.500 8.300 7 8.300 C9.500 8.300 11.700 9 12.200 12.500 Z"/></svg><span class="t" style="left:21.5px;top:5px;font-size:8.7px">Share</span></div><div class="btn" style="left:1167px;width:71px;"><svg class="ic" style="left:6px;top:4px;stroke-width:1.540;color:#c8c8c8;" width="10" height="10" viewBox="0 0 14 14" preserveAspectRatio="none"><path d="M7 1.200 C9.500 3 10 6 9.500 9.500 H4.500 C4 6 4.500 3 7 1.200 Z"/><path d="M4.500 7.500 L2 10 V12 H4.500"/><path d="M9.500 7.500 L12 10 V12 H9.500"/><path d="M5.500 11.500 H8.500"/></svg><span class="t" style="left:20.5px;top:5px;font-size:8.9px">Publish</span><svg class="ic" style="left:57px;top:7px;stroke-width:1.467;color:#c8c8c8;" width="6" height="4" viewBox="0 0 8 5" preserveAspectRatio="none"><path d="M1 1 L4 4 L7 1"/></svg></div></div><div class="side"><svg class="ic" style="left:6px;top:4.5px;stroke-width:1.257;color:#c8c8c8;" width="14" height="14" viewBox="0 0 16 16" preserveAspectRatio="none"><path d="M8 2 V14 M2 8 H14"/></svg><svg class="ic" style="left:6px;top:32px;stroke-width:1.257;color:#c8c8c8;" width="14" height="14" viewBox="0 0 16 16" preserveAspectRatio="none"><path d="M3.5 2.500 H9.500 L12.500 5.500 V13.500 H3.500 Z"/><path d="M9.500 2.500 V5.500 H12.500"/></svg><svg class="ic" style="left:6px;top:58px;stroke-width:1.257;color:#c8c8c8;" width="14" height="14" viewBox="0 0 16 16" preserveAspectRatio="none"><path d="M1.500 4 H11"/><path d="M4.500 8 H14.500"/><path d="M4.500 12 H14.500"/></svg><svg class="ic" style="left:6px;top:92.4px;stroke-width:1.257;color:#c8c8c8;" width="14" height="14" viewBox="0 0 16 16" preserveAspectRatio="none"><path d="M8 1.500 L14 4.800 V11.200 L8 14.500 L2 11.200 V4.800 Z"/><path d="M2 4.800 L8 8 L14 4.800"/><path d="M8 8 V14.500"/><path d="M5 3.200 L11 6.400"/></svg><svg class="ic" style="left:6px;top:118.4px;stroke-width:1.257;color:#c8c8c8;" width="14" height="14" viewBox="0 0 16 16" preserveAspectRatio="none"><path d="M4.500 1.500 C5.800 3.500 6.500 4.500 6.500 5.700 A2 2 0 0 1 2.500 5.700 C2.500 4.500 3.200 3.500 4.500 1.500 Z"/><path d="M11.500 1.500 C12.800 3.500 13.500 4.500 13.500 5.700 A2 2 0 0 1 9.500 5.700 C9.500 4.500 10.200 3.500 11.500 1.500 Z"/><path d="M8 8.500 C9.300 10.500 10 11.500 10 12.700 A2 2 0 0 1 6 12.700 C6 11.500 6.700 10.500 8 8.500 Z"/></svg><svg class="ic" style="left:6px;top:145.3px;stroke-width:1.257;color:#c8c8c8;" width="14" height="14" viewBox="0 0 16 16" preserveAspectRatio="none"><rect x="4" y="3.500" width="10.500" height="10.500" rx="1.500"/><path d="M4 12 L8 8.500 L11 11 L12.500 10 L14.500 11.800"/><path d="M1.500 10.500 L1.500 5 L4 2.500 L5.500 1.500"/><circle cx="7" cy="6.300" r=".8"/></svg><svg class="ic" style="left:6px;top:172px;stroke-width:1.257;color:#c8c8c8;" width="14" height="14" viewBox="0 0 16 16" preserveAspectRatio="none"><ellipse cx="8" cy="4" rx="5.500" ry="2.300"/><path d="M2.500 4 V12 C2.500 13.300 5 14.300 8 14.300 C11 14.300 13.500 13.300 13.500 12 V4"/><path d="M2.500 8 C2.500 9.300 5 10.300 8 10.300 C11 10.300 13.500 9.300 13.500 8"/></svg><svg class="ic" style="left:6px;top:198.3px;stroke-width:1.257;color:#c8c8c8;" width="14" height="14" viewBox="0 0 16 16" preserveAspectRatio="none"><path d="M8 1.500 V6"/><path d="M3.500 11 V7.500 Q3.500 6 5 6 H11 Q12.500 6 12.500 7.500 V9.500"/><circle cx="3.500" cy="12.700" r="1.500"/><path d="M11 11 L14 14 M14 11 L11 14"/></svg><svg class="ic" style="left:6px;top:225px;stroke-width:1.257;color:#c8c8c8;" width="14" height="14" viewBox="0 0 16 16" preserveAspectRatio="none"><circle cx="8" cy="5" r="3"/><path d="M2.500 14 C3 10.500 5 9.500 8 9.500 C11 9.500 13 10.500 13.500 14 Z"/></svg><svg class="ic" style="left:6px;top:251px;stroke-width:1.257;color:#c8c8c8;" width="14" height="14" viewBox="0 0 16 16" preserveAspectRatio="none"><path d="M1.500 7 H14.500 L13 13.500 H3 Z"/><path d="M5 7 L6.500 2 M11 7 L9.500 2"/><path d="M4.500 10 H11.500"/></svg><svg class="ic" style="left:6px;top:277px;stroke-width:1.257;color:#c8c8c8;" width="14" height="14" viewBox="0 0 16 16" preserveAspectRatio="none"><rect x="2" y="2" width="5" height="5" rx="1"/><rect x="9" y="2" width="5" height="5" rx="1"/><rect x="2" y="9" width="5" height="5" rx="1"/><path d="M11.500 9.200 V13.800 M9.200 11.500 H13.800"/></svg><svg class="ic" style="left:6px;top:303.6px;stroke-width:1.257;color:#c8c8c8;" width="14" height="14" viewBox="0 0 16 16" preserveAspectRatio="none"><path d="M1 9 H3.500 L5.500 4 L8 12.500 L10 6.500 L11.500 10 L12.500 9 H15"/></svg><div class="abs" style="left:0;top:82.5px;width:26px;height:1px;background:#2b2b2b"></div><div class="abs" style="left:0;top:165.5px;width:26px;height:1px;background:#2b2b2b"></div><svg class="ic" style="left:6px;top:532.6px;stroke-width:1.257;stroke:#989898;color:#989898;" width="14" height="14" viewBox="0 0 16 16" preserveAspectRatio="none"><path d="M8 1.500 L9.800 3.200 L12.300 2.900 L12.600 5.400 L14.700 6.800 L13.400 9 L14.200 11.300 L11.900 12.200 L11 14.500 L8.600 13.800 L6.400 15 L5 13 L2.600 12.500 L2.900 10 L1.300 8.200 L3 6.400 L2.700 3.900 L5.200 3.700 L6.200 1.500 Z" transform="translate(0,-.3)"/><circle cx="8" cy="8" r="1.800"/></svg><svg class="ic" style="left:6px;top:558.7px;stroke-width:1.257;stroke:#989898;color:#989898;" width="14" height="14" viewBox="0 0 16 16" preserveAspectRatio="none"><path d="M10 2.500 A6 6 0 1 0 13.700 6.500"/><path d="M6.300 6.500 A1.800 1.800 0 1 1 8 8.500 V9.800"/><circle cx="8" cy="12" r=".4"/><path d="M13 .8 L13.500 2.500 L15.200 3 L13.500 3.500 L13 5.200 L12.500 3.500 L10.800 3 L12.500 2.500 Z" fill="currentColor" stroke="none"/></svg><svg class="ic" style="left:6px;top:585.6px;stroke-width:1.257;stroke:#989898;color:#989898;" width="14" height="14" viewBox="0 0 16 16" preserveAspectRatio="none"><rect x="2.500" y="2.500" width="11" height="11" rx="1"/><path d="M5 8 L7.300 10.300 L11.300 5.700"/></svg><svg class="ic" style="left:6px;top:612.2px;stroke-width:1.257;stroke:#989898;color:#989898;" width="14" height="14" viewBox="0 0 16 16" preserveAspectRatio="none"><circle cx="7" cy="7" r="4.500"/><path d="M10.500 10.500 L14.500 14.500"/><path d="M5 6 A2.500 2.500 0 0 1 7.500 4.800"/></svg><svg class="ic" style="left:6px;top:639.8px;stroke-width:1.257;stroke:#989898;color:#989898;" width="14" height="14" viewBox="0 0 16 16" preserveAspectRatio="none"><path d="M2 4.500 H4 L5 3 H8 L9 4.500 H11 V7 L14.500 5 V13 L11 11 V13.500 H2 V11 H3.500 V9 H2 Z"/></svg></div><div class="crumbs"><svg class="ic" style="left:9px;top:6px;stroke-width:1.250;stroke:#9c9c9c;color:#9c9c9c;" width="8" height="8" viewBox="0 0 10 10" preserveAspectRatio="none"><rect x="1.500" y="1.500" width="7" height="7" rx=".5"/><path d="M1.500 3.200 H8.500" stroke-width="1.600"/></svg><span class="t" style="left:21.3px;top:5.7px;font-size:8.8px;">Body</span><svg class="ic" style="left:60px;top:6px;stroke-width:1.250;stroke:#9c9c9c;color:#9c9c9c;" width="8" height="8" viewBox="0 0 10 10" preserveAspectRatio="none"><rect x="1.500" y="1.500" width="7" height="7" rx=".8"/></svg><span class="t" style="left:72.0px;top:5.7px;font-size:8.8px;">Section</span><svg class="ic" style="left:119px;top:6px;stroke-width:1.250;stroke:#9c9c9c;color:#9c9c9c;" width="8" height="8" viewBox="0 0 10 10" preserveAspectRatio="none"><rect x="1.500" y="1.500" width="7" height="7" rx=".8"/></svg><span class="t" style="left:132.5px;top:5.7px;font-size:8.8px;">Container</span><svg class="ic" style="left:188.8px;top:6px;stroke-width:1.250;stroke:#9c9c9c;color:#9c9c9c;" width="8" height="8" viewBox="0 0 10 10" preserveAspectRatio="none"><rect x="1.500" y="1.500" width="7" height="7" rx=".8"/></svg><span class="t" style="left:201.0px;top:5.7px;font-size:8.8px;">Projects component</span><svg class="ic" style="left:296.8px;top:6px;stroke-width:1.250;stroke:#9c9c9c;color:#9c9c9c;" width="8" height="8" viewBox="0 0 10 10" preserveAspectRatio="none"><ellipse cx="5" cy="3" rx="3.200" ry="1.400"/><path d="M1.800 3 V7.200 C1.800 8 3.200 8.600 5 8.600 C6.800 8.600 8.200 8 8.200 7.200 V3"/><path d="M1.800 5.200 C1.800 6 3.200 6.600 5 6.600 C6.800 6.600 8.200 6 8.200 5.200"/></svg><span class="t" style="left:309.0px;top:5.7px;font-size:8.8px;">Project list wrapper</span><svg class="ic" style="left:401.8px;top:6px;stroke-width:1.250;stroke:#9c9c9c;color:#9c9c9c;" width="8" height="8" viewBox="0 0 10 10" preserveAspectRatio="none"><path d="M0.500 3 H2 M0.500 5 H2 M0.500 7 H2"/><ellipse cx="6.200" cy="3.200" rx="2.600" ry="1.200"/><path d="M3.600 3.200 V7 C3.600 7.800 4.800 8.300 6.200 8.300 C7.600 8.300 8.800 7.800 8.800 7 V3.200"/><path d="M3.600 5.200 C3.600 6 4.800 6.400 6.200 6.400 C7.600 6.400 8.800 6 8.800 5.200"/></svg><span class="t" style="left:414.7px;top:5.7px;font-size:8.8px;">Project list</span><svg class="ic" style="left:472.8px;top:6px;stroke-width:1.250;stroke:#9c9c9c;color:#9c9c9c;" width="8" height="8" viewBox="0 0 10 10" preserveAspectRatio="none"><path d="M0.300 5 H2.200"/><ellipse cx="6.200" cy="4" rx="2.600" ry="1.200"/><path d="M3.600 4 V6.300 C3.600 7.100 4.800 7.600 6.200 7.600 C7.600 7.600 8.800 7.100 8.800 6.300 V4"/></svg><span class="t" style="left:486.6px;top:5.7px;font-size:8.8px;">Projects item</span><svg class="ic" style="left:554px;top:6px;stroke-width:1.250;stroke:#9c9c9c;color:#9c9c9c;" width="8" height="8" viewBox="0 0 10 10" preserveAspectRatio="none"><rect x="1.500" y="1.500" width="7" height="7" rx=".8"/><path d="M1.500 7.500 L4 5 L8 8.500"/><circle cx="3.500" cy="3.500" r=".6"/></svg><span class="t" style="left:567.0px;top:5.7px;font-size:8.8px;">Image</span><svg class="ic" style="left:46.0px;top:0;stroke:#343434;stroke-width:1" width="6" height="21" viewBox="0 0 6 21"><path d="M1 0 L5 10.5 L1 21"/></svg><svg class="ic" style="left:105.6px;top:0;stroke:#343434;stroke-width:1" width="6" height="21" viewBox="0 0 6 21"><path d="M1 0 L5 10.5 L1 21"/></svg><svg class="ic" style="left:174.4px;top:0;stroke:#343434;stroke-width:1" width="6" height="21" viewBox="0 0 6 21"><path d="M1 0 L5 10.5 L1 21"/></svg><svg class="ic" style="left:283.0px;top:0;stroke:#343434;stroke-width:1" width="6" height="21" viewBox="0 0 6 21"><path d="M1 0 L5 10.5 L1 21"/></svg><svg class="ic" style="left:388.7px;top:0;stroke:#343434;stroke-width:1" width="6" height="21" viewBox="0 0 6 21"><path d="M1 0 L5 10.5 L1 21"/></svg><svg class="ic" style="left:459.0px;top:0;stroke:#343434;stroke-width:1" width="6" height="21" viewBox="0 0 6 21"><path d="M1 0 L5 10.5 L1 21"/></svg><svg class="ic" style="left:540.0px;top:0;stroke:#343434;stroke-width:1" width="6" height="21" viewBox="0 0 6 21"><path d="M1 0 L5 10.5 L1 21"/></svg><svg class="ic" style="left:597.0px;top:0;stroke:#343434;stroke-width:1" width="6" height="21" viewBox="0 0 6 21"><path d="M1 0 L5 10.5 L1 21"/></svg></div><div class="panel"><div class="abs" style="left:0;top:-1px;width:182px;height:661px"><div class="t" style="left:5.3px;top:9.4px;font-size:9.1px;color:#f2f2f2">Style</div><div class="t" style="left:38px;top:9.4px;font-size:9.1px;color:#b9b9b9">Settings</div><div class="t" style="left:83px;top:9.4px;font-size:9.2px;color:#b9b9b9">Interactions</div><div class="hr" style="top:26px"></div><div class="abs" style="left:0;top:26px;width:33px;height:1px;background:#8a8a8a"></div><svg class="ic" style="left:7px;top:33.5px;stroke-width:1.250;stroke:#cfcfcf;color:#cfcfcf;" width="8" height="8" viewBox="0 0 10 10" preserveAspectRatio="none"><rect x="1.500" y="1.500" width="7" height="7" rx=".8"/><path d="M1.500 7.500 L4 5 L8 8.500"/><circle cx="3.500" cy="3.500" r=".6"/></svg><div class="t" style="left:19px;top:33.5px;font-size:8.8px;color:#e6e6e6">Image Styles</div><svg class="ic" style="left:166.5px;top:37px;stroke-width:1.760;stroke:#9a9a9a;color:#9a9a9a;" width="7.5" height="2.5" viewBox="0 0 12 4" preserveAspectRatio="none"><circle cx="2" cy="2" r="1" fill="currentColor" stroke="none"/><circle cx="6" cy="2" r="1" fill="currentColor" stroke="none"/><circle cx="10" cy="2" r="1" fill="currentColor" stroke="none"/></svg><div class="abs" style="left:6px;top:48px;width:170px;height:18px;background:#2b2b2b;border-radius:3px"></div><svg class="ic" style="left:46.5px;top:52px;stroke-width:1.684;stroke:#7d7d7d;color:#7d7d7d;" width="9.5" height="10" viewBox="0 0 16 16" preserveAspectRatio="none"><path d="M8 1.500 L14 4.800 V11.200 L8 14.500 L2 11.200 V4.800 Z"/><path d="M2 4.800 L8 8 L14 4.800"/><path d="M8 8 V14.500"/><path d="M5 3.200 L11 6.400"/></svg><div class="t" style="left:60px;top:52.5px;font-size:9.4px;color:#7d7d7d">Create component</div><div class="hr" style="top:72.500px"></div><div class="t" style="left:6px;top:81.5px;font-size:9.2px;color:#cfcfcf">Style selector</div><div class="t" style="right:6px;top:81.5px;font-size:9px;color:#e3e3e3">Inheriting <span style="color:#e9a574">2 selectors</span></div><div class="abs" style="left:6px;top:96.500px;width:170px;height:23px;background:#191919;border-radius:3px;box-shadow:inset 0 0 0 1px #2b2b2b"></div><div class="abs" style="left:9px;top:98.500px;width:23px;height:19px;background:#2f2f2f;border-radius:3px"></div><svg class="ic" style="left:15px;top:103px;stroke-width:1.455;stroke:#c9c9c9;color:#c9c9c9;" width="11" height="9" viewBox="0 0 16 12" preserveAspectRatio="none"><path d="M2.500 3 V9.500 H12.500 V6.500"/><path d="M2.500 3 H9"/><path d="M0.800 11.200 H14.200"/><path d="M12.600 0.300 L13.300 2.100 L15.100 2.800 L13.300 3.500 L12.600 5.300 L11.900 3.500 L10.100 2.800 L11.900 2.100 Z" fill="currentColor" stroke="none"/></svg><div class="abs" style="left:35px;top:98.500px;width:34px;height:19px;background:#2c6fd9;border-radius:3px;color:#fff;font-size:9.4px;line-height:19px;text-align:center">Image</div><svg class="ic" style="left:155.5px;top:106px;stroke-width:1.486;stroke:#d5d5d5;color:#d5d5d5;" width="7" height="4.5" viewBox="0 0 8 5" preserveAspectRatio="none"><path d="M1 1 L4 4 L7 1"/></svg><div class="t" style="left:6px;top:124.500px;font-size:8.6px;color:#a9a9a9">1 on this page</div><div class="hr" style="top:140px"></div><div class="sec" style="top:147px">Spacing</div><svg class="ic" style="left:143.5px;top:147.5px;stroke-width:1.145;stroke:#a0a0a0;color:#a0a0a0;" width="11" height="11" viewBox="0 0 14 14" preserveAspectRatio="none"><path d="M2 1.500 H12" stroke-dasharray="1.500 1.200"/><path d="M2 12.500 H12" stroke-dasharray="1.500 1.200"/><path d="M1 7 H3.500 M10.500 7 H13"/><rect x="5.500" y="5.500" width="3" height="3" fill="currentColor"/></svg><svg class="ic" style="left:166px;top:151.5px;stroke-width:1.467;stroke:#bdbdbd;color:#bdbdbd;" width="6" height="3.5" viewBox="0 0 8 5" preserveAspectRatio="none"><path d="M1 1 L4 4 L7 1"/></svg><div class="abs" style="left:6px;top:168px;width:170px;height:85px;background:#2d2d2d;border-radius:3px;overflow:hidden"><svg class="abs" style="left:0;top:0" width="170" height="85" viewBox="0 0 170 85"><polygon points="0,0 170,0 143,19 27,19" fill="#313131"/><polygon points="0,85 170,85 143,66 27,66" fill="#2a2a2a"/><polygon points="0,0 27,19 27,66 0,85" fill="#2b2b2b"/><polygon points="170,0 143,19 143,66 170,85" fill="#292929"/><rect x="27.500" y="19.500" width="115" height="46" rx="2" fill="#2b2b2b" stroke="#1a1a1a"/><polygon points="28,20 142,20 115,38 55,38" fill="#2f2f2f"/><polygon points="28,65 142,65 115,47 55,47" fill="#282828"/><rect x="55" y="38" width="60" height="9.500" fill="#1c1c1c"/></svg><div class="t" style="left:4px;top:4px;font-size:4.6px;color:#9a9a9a;letter-spacing:.1px">MARGIN</div><div class="t" style="left:31px;top:23.5px;font-size:4.6px;color:#9a9a9a;letter-spacing:.1px">PADDING</div><div class="num" style="left:75px;top:5px">0</div><div class="num" style="left:75px;top:24.5px">0</div><div class="num" style="left:75px;top:50px">0</div><div class="num" style="left:75px;top:71px">0</div><div class="num" style="left:3px;top:37.5px">0</div><div class="num" style="left:31px;top:37.5px">0</div><div class="num" style="left:118px;top:37.5px">0</div><div class="num" style="left:146px;top:37.5px">0</div></div><div class="hr" style="top:259px"></div><div class="sec" style="top:269px">Size</div><svg class="ic" style="left:166px;top:273.5px;stroke-width:1.467;stroke:#bdbdbd;color:#bdbdbd;" width="6" height="3.5" viewBox="0 0 8 5" preserveAspectRatio="none"><path d="M1 1 L4 4 L7 1"/></svg><div class="lbl" style="top:293px">Width</div><div class="fld d" style="left:46px;top:290px;width:41px;color:#6f6f6f">Auto<span class="abs" style="right:5px;color:#6f6f6f">-</span></div><div class="lbl" style="left:93px;top:293px">Height</div><div class="fld d" style="left:134px;top:290px;width:42px;color:#6f6f6f">Auto<span class="abs" style="right:5px;color:#6f6f6f">-</span></div><div class="lbl" style="top:317px">Min W</div><div class="lbl o" style="top:341px">Max W</div><div class="hr" style="top:357px"></div><div class="lbl b" style="top:371px">Ratio</div><div class="hr" style="top:384px"></div><div class="lbl" style="top:396px;color:#9c9c9c">Overflow</div><div class="lbl b" style="top:420px">Fit</div><div class="hr" style="top:437px"></div><div class="sec" style="top:451px">Position</div><div class="lbl" style="top:475px;color:#9c9c9c">Position</div><div class="abs" style="left:6px;top:492px;width:170px;height:18px;background:#1a1a1a;border-radius:3px;box-shadow:inset 0 0 0 1px #2a2a2a"></div><div class="hr" style="top:517px"></div><div class="sec" style="top:531px">Typography</div><div class="lbl o" style="top:555px">Font</div><div class="fld" style="left:46px;top:552px;width:130px">Inter<svg class="ic" style="left:119px;top:5px;stroke-width:1.350;stroke:#9a9a9a;color:#9a9a9a;" width="4" height="8" viewBox="0 0 6 10" preserveAspectRatio="none"><path d="M1 3.500 L3 1.500 L5 3.500"/><path d="M1 6.500 L3 8.500 L5 6.500"/></svg></div><div class="lbl" style="top:579px">Weight</div><div class="fld" style="left:46px;top:576px;width:130px;color:#a5a5a5">400 - Normal<svg class="ic" style="left:119px;top:5px;stroke-width:1.350;stroke:#9a9a9a;color:#9a9a9a;" width="4" height="8" viewBox="0 0 6 10" preserveAspectRatio="none"><path d="M1 3.500 L3 1.500 L5 3.500"/><path d="M1 6.500 L3 8.500 L5 6.500"/></svg></div><div class="lbl o" style="top:603px">Size</div><div class="fld d" style="left:46px;top:600px;width:41px;padding-left:3px">16<span class="abs" style="right:3px;font-size:6.5px;color:#777">PX</span></div><div class="lbl o" style="left:94px;top:603px">Height</div><div class="fld d" style="left:134px;top:600px;width:42px;padding-left:3px;color:#bdbdbd">1.3<span class="abs" style="right:5px;color:#666">-</span></div><div class="lbl o" style="top:627px">Color</div><div class="abs" style="left:46px;top:624.500px;width:130px;height:18px;background:#171717;border-radius:3px;box-shadow:inset 0 0 0 1px #262626"></div><div class="abs" style="left:46px;top:624.500px;width:18px;height:18px;background:#e7e2dc;border-radius:2px"></div><div class="t" style="left:67px;top:629.500px;font-size:8.6px;color:#e2e2e2">Seashell</div><div class="lbl" style="top:651px">Align</div><div class="abs" style="left:46px;top:649px;width:130px;height:18px;background:#2e2e2e;border-radius:3px"></div><div class="abs" style="left:46px;top:649px;width:32px;height:18px;background:#171717;border-radius:3px"></div><div class="abs" style="left:58.0px;top:653.5px;width:8px;height:1px;background:#b0b0b0"></div><div class="abs" style="left:58.0px;top:656.5px;width:5px;height:1px;background:#b0b0b0"></div><div class="abs" style="left:90.5px;top:653.5px;width:8px;height:1px;background:#b0b0b0"></div><div class="abs" style="left:92.0px;top:656.5px;width:5px;height:1px;background:#b0b0b0"></div><div class="abs" style="left:123.0px;top:653.5px;width:8px;height:1px;background:#b0b0b0"></div><div class="abs" style="left:126.0px;top:656.5px;width:5px;height:1px;background:#b0b0b0"></div><div class="abs" style="left:155.5px;top:653.5px;width:8px;height:1px;background:#b0b0b0"></div><div class="abs" style="left:155.5px;top:656.5px;width:8px;height:1px;background:#b0b0b0"></div></div></div></div></div><div class="win m" style="left:520px;top:262px"><div class="clip"><div class="canvas"><div class="photo" style="left:102px;top:-193px;width:370.5px;height:556px;"><svg viewBox="91.50 0.00 371.00 556.00" preserveAspectRatio="none"><defs><linearGradient id="p7_lvP2" x1="0" y1="0" x2="0" y2="1"><stop offset="0" stop-color="#e4d8b0"/><stop offset=".2" stop-color="#ddd0a2"/><stop offset=".6" stop-color="#dcd1ab"/><stop offset=".625" stop-color="#f4f4f1"/><stop offset=".65" stop-color="#b9bdb2"/><stop offset="1" stop-color="#c3c7bd"/></linearGradient><linearGradient id="p7_lvP1" x1="0" y1="0" x2="0" y2="1"><stop offset="0" stop-color="#e3e5e5"/><stop offset=".6" stop-color="#e2e4e4"/><stop offset="1" stop-color="#dfe1e0"/></linearGradient><linearGradient id="p7_lvFl" x1="0" y1="0" x2="1" y2="0"><stop offset="0" stop-color="#ecd6b4"/><stop offset=".2" stop-color="#f0dcc0"/><stop offset=".55" stop-color="#edd3ad"/><stop offset=".75" stop-color="#e6bf86"/><stop offset="1" stop-color="#dcae70"/></linearGradient><linearGradient id="p7_lvGl" x1="0" y1="0" x2="1" y2="1"><stop offset="0" stop-color="#9b968f"/><stop offset=".5" stop-color="#cfcbc4"/><stop offset="1" stop-color="#a7a39b"/></linearGradient><linearGradient id="p7_lvSh" x1="0" y1="0" x2="1" y2="0"><stop offset="0" stop-color="#fbf5de"/><stop offset="1" stop-color="#efe6c9"/></linearGradient><pattern id="p7_lvBl" width="4" height="3.2" patternUnits="userSpaceOnUse"><rect width="4" height="1.7" y="0" fill="#fbfbfa" opacity=".85"/></pattern><filter id="p7_lvBlur" x="-40%" y="-40%" width="180%" height="180%"><feGaussianBlur stdDeviation="8"/></filter><pattern id="p7_lvHb" width="46" height="26" patternUnits="userSpaceOnUse"><path d="M0 26 L23 0 L46 26 M0 13 L11.500 0 M46 13 L34.500 0 M11.500 26 L23 13 L34.500 26" stroke="#c08f5c" stroke-width=".9" fill="none" opacity=".5"/></pattern></defs><rect x="0.0" y="0.0" width="554.0" height="556.0" fill="#eaeae6" /><rect x="0.0" y="0.0" width="141.0" height="556.0" fill="#f0ede4" /><rect x="141.0" y="150.0" width="64.4" height="190.0" fill="url(#p7_lvP1)" /><rect x="198.0" y="150.0" width="7.5" height="118.0" fill="#d9c98f" /><rect x="198.0" y="270.0" width="7.5" height="70.0" fill="#8b9086" opacity=".7"/><rect x="230.5" y="150.0" width="64.5" height="190.0" fill="url(#p7_lvP2)" /><rect x="319.5" y="150.0" width="60.0" height="190.0" fill="url(#p7_lvP1)" /><rect x="319.5" y="150.0" width="8.0" height="118.0" fill="#dccf9a" /><rect x="141.0" y="150.0" width="57.0" height="190.0" fill="url(#p7_lvBl)" opacity=".45"/><rect x="198.0" y="150.0" width="7.5" height="190.0" fill="url(#p7_lvBl)" /><rect x="319.5" y="150.0" width="60.5" height="190.0" fill="url(#p7_lvBl)" /><rect x="160.0" y="150.0" width="3.0" height="190.0" fill="#f2f3f3" opacity=".6"/><rect x="178.0" y="150.0" width="4.0" height="190.0" fill="#f2f3f3" opacity=".5"/><rect x="452.0" y="150.0" width="102.0" height="260.0" fill="#ebebe8" /><rect x="455.0" y="190.0" width="12.0" height="140.0" fill="url(#p7_lvBl)" /><rect x="205.4" y="150.0" width="25.0" height="190.0" fill="#e9e9e5" /><rect x="295.0" y="150.0" width="24.5" height="190.0" fill="#eaeae6" /><rect x="230.5" y="272.0" width="24.0" height="68.0" fill="#7d8277" opacity=".3"/><rect x="230.5" y="150.0" width="64.5" height="190.0" fill="url(#p7_lvBl)" /><rect x="216.0" y="150.0" width="2.0" height="190.0" fill="#e2e1de" /><rect x="306.0" y="150.0" width="2.0" height="190.0" fill="#e2e1de" /><circle cx="109.2" cy="222.0" r="15.0" fill="#f0efea" /><path d="M94.700 226 A15 15 0 0 0 123.700 226 Z" fill="#b4af98"/><path d="M104 226 l-2 -12 M107 226 l0 -15 M110 226 l2 -14 M113 226 l4 -10 M106 226 l-4 -8" stroke="#7f9464" stroke-width="1.1" fill="none"/><circle cx="109.2" cy="222.0" r="15.0" fill="none" stroke="#c8a74d" stroke-width="2.4"/><polygon points="99.5,251.0 142.5,251.0 150.0,284.0 94.5,284.0" fill="url(#p7_lvSh)" /><line x1="122.5" y1="284.0" x2="103.8" y2="374.5" stroke="#2b2621" stroke-width="2.2" /><ellipse cx="385.0" cy="285.0" rx="36.0" ry="44.0" fill="#2c4232" opacity=".4" filter="url(#p7_lvBlur)"/><path d="M381.5 347.0 Q357.8 227.8 302.4 251.3" stroke="#283c2d" stroke-width=".9" fill="none"/><path d="M363.2 285.6 Q359.2 282.1 354.1 280.9 Q358.0 284.4 363.2 285.6 Z M363.2 285.6 Q365.4 281.4 365.3 276.7 Q363.1 280.9 363.2 285.6 Z M360.1 279.2 Q355.6 275.7 350.0 274.7 Q354.5 278.1 360.1 279.2 Z M360.1 279.2 Q362.0 274.5 361.6 269.6 Q359.7 274.2 360.1 279.2 Z M356.8 273.4 Q351.6 270.7 345.7 270.7 Q350.9 273.4 356.8 273.4 Z M356.8 273.4 Q357.5 268.5 355.9 263.8 Q355.2 268.7 356.8 273.4 Z M353.4 268.1 Q347.1 265.7 340.4 266.0 Q346.7 268.4 353.4 268.1 Z M353.4 268.1 Q355.2 262.8 354.6 257.2 Q352.9 262.5 353.4 268.1 Z M349.9 263.5 Q342.8 261.0 335.4 261.4 Q342.4 263.8 349.9 263.5 Z M349.9 263.5 Q350.6 257.4 349.1 251.4 Q348.3 257.5 349.9 263.5 Z M346.2 259.4 Q334.9 258.6 323.7 260.7 Q335.1 261.5 346.2 259.4 Z M346.2 259.4 Q345.0 250.5 341.4 242.1 Q342.7 251.1 346.2 259.4 Z M342.4 256.0 Q330.8 254.5 319.1 255.9 Q330.8 257.4 342.4 256.0 Z M342.4 256.0 Q341.5 246.6 338.3 237.7 Q339.2 247.1 342.4 256.0 Z M338.5 253.1 Q329.0 252.9 319.9 255.7 Q329.4 255.9 338.5 253.1 Z M338.5 253.1 Q334.9 246.3 329.4 240.9 Q333.0 247.7 338.5 253.1 Z M334.4 250.8 Q324.7 253.7 316.3 259.5 Q326.0 256.6 334.4 250.8 Z M334.4 250.8 Q329.9 244.3 323.6 239.6 Q328.1 246.1 334.4 250.8 Z M330.3 249.1 Q319.8 253.2 310.9 260.1 Q321.4 256.0 330.3 249.1 Z M330.3 249.1 Q324.6 242.5 317.2 237.8 Q322.9 244.4 330.3 249.1 Z M325.9 248.0 Q315.9 251.4 307.4 257.7 Q317.4 254.3 325.9 248.0 Z M325.9 248.0 Q318.8 243.1 310.6 240.5 Q317.7 245.5 325.9 248.0 Z M321.5 247.5 Q313.9 252.4 308.6 259.8 Q316.3 254.9 321.5 247.5 Z M321.5 247.5 Q315.7 243.4 308.8 241.7 Q314.6 245.8 321.5 247.5 Z M316.9 247.5 Q309.9 252.9 305.5 260.5 Q312.5 255.2 316.9 247.5 Z M316.9 247.5 Q310.8 244.2 303.8 243.6 Q310.0 246.9 316.9 247.5 Z M312.2 248.2 Q306.5 253.8 303.9 261.3 Q309.5 255.7 312.2 248.2 Z M312.2 248.2 Q306.6 245.4 300.4 245.2 Q306.0 248.1 312.2 248.2 Z M307.4 249.5 Q302.5 254.2 300.7 260.7 Q305.6 256.0 307.4 249.5 Z M307.4 249.5 Q302.2 247.6 296.8 248.6 Q302.0 250.5 307.4 249.5 Z M302.4 251.3 Q298.0 257.0 296.8 264.1 Q301.2 258.4 302.4 251.3 Z M302.4 251.3 Q296.5 250.3 290.8 252.3 Q296.8 253.3 302.4 251.3 Z" fill="#283c2d"/><path d="M390.7 347.0 Q371.3 187.2 325.9 210.4" stroke="#314b36" stroke-width=".9" fill="none"/><path d="M375.7 263.8 Q372.0 260.7 367.1 259.9 Q370.9 263.1 375.7 263.8 Z M375.7 263.8 Q378.1 260.2 378.1 255.8 Q375.8 259.5 375.7 263.8 Z M373.2 255.0 Q369.4 250.7 364.1 248.4 Q367.9 252.7 373.2 255.0 Z M373.2 255.0 Q376.5 250.8 377.6 245.6 Q374.3 249.8 373.2 255.0 Z M370.5 246.9 Q364.1 242.7 356.8 241.0 Q363.1 245.2 370.5 246.9 Z M370.5 246.9 Q374.6 241.5 376.6 235.0 Q372.4 240.4 370.5 246.9 Z M367.7 239.5 Q361.4 236.1 354.2 235.2 Q360.5 238.7 367.7 239.5 Z M367.7 239.5 Q370.7 234.1 371.4 227.9 Q368.4 233.3 367.7 239.5 Z M364.8 233.0 Q357.2 228.9 348.6 227.4 Q356.3 231.5 364.8 233.0 Z M364.8 233.0 Q368.3 226.3 369.6 218.9 Q366.1 225.5 364.8 233.0 Z M361.8 227.1 Q352.0 223.2 341.5 221.9 Q351.3 225.8 361.8 227.1 Z M361.8 227.1 Q364.5 218.6 364.9 209.6 Q362.2 218.1 361.8 227.1 Z M358.7 222.1 Q351.0 219.9 343.0 220.5 Q350.7 222.7 358.7 222.1 Z M358.7 222.1 Q360.3 215.7 359.5 209.2 Q357.9 215.5 358.7 222.1 Z M355.5 217.7 Q343.4 216.7 331.5 218.7 Q343.5 219.7 355.5 217.7 Z M355.5 217.7 Q354.7 208.1 351.7 199.0 Q352.4 208.6 355.5 217.7 Z M352.2 214.2 Q342.3 213.8 332.9 216.4 Q342.7 216.8 352.2 214.2 Z M352.2 214.2 Q349.8 206.7 345.4 200.3 Q347.7 207.8 352.2 214.2 Z M348.7 211.4 Q338.9 211.0 329.3 213.5 Q339.2 213.9 348.7 211.4 Z M348.7 211.4 Q345.2 204.2 339.8 198.3 Q343.2 205.5 348.7 211.4 Z M345.2 209.3 Q336.9 211.5 330.0 216.5 Q338.3 214.4 345.2 209.3 Z M345.2 209.3 Q341.4 203.9 335.8 200.3 Q339.6 205.7 345.2 209.3 Z M341.5 208.0 Q333.2 210.9 326.4 216.6 Q334.8 213.7 341.5 208.0 Z M341.5 208.0 Q337.8 202.4 332.3 198.5 Q336.0 204.1 341.5 208.0 Z M337.8 207.5 Q330.9 211.1 326.3 217.4 Q333.1 213.7 337.8 207.5 Z M337.8 207.5 Q333.1 203.7 327.1 202.2 Q331.9 206.0 337.8 207.5 Z M333.9 207.7 Q327.0 214.7 323.0 223.7 Q329.9 216.7 333.9 207.7 Z M333.9 207.7 Q327.4 203.9 319.9 202.6 Q326.5 206.4 333.9 207.7 Z M330.0 208.7 Q325.0 213.4 323.0 219.9 Q328.0 215.2 330.0 208.7 Z M330.0 208.7 Q324.5 207.1 319.0 208.5 Q324.5 210.1 330.0 208.7 Z M325.9 210.4 Q322.1 216.6 321.8 223.9 Q325.6 217.7 325.9 210.4 Z M325.9 210.4 Q319.8 210.1 314.2 212.7 Q320.3 213.1 325.9 210.4 Z" fill="#314b36"/><path d="M379.5 347.0 Q371.9 183.0 354.2 207.3" stroke="#223527" stroke-width=".9" fill="none"/><path d="M373.6 261.7 Q371.3 258.0 367.3 256.3 Q369.6 260.0 373.6 261.7 Z M373.6 261.7 Q377.1 259.3 378.5 255.3 Q375.1 257.8 373.6 261.7 Z M372.6 252.6 Q370.3 248.1 366.2 245.2 Q368.5 249.7 372.6 252.6 Z M372.6 252.6 Q376.3 249.3 377.9 244.6 Q374.2 247.9 372.6 252.6 Z M371.6 244.3 Q367.4 239.7 361.8 237.0 Q365.9 241.7 371.6 244.3 Z M371.6 244.3 Q376.5 240.8 379.7 235.7 Q374.7 239.1 371.6 244.3 Z M370.5 236.8 Q365.0 231.2 358.0 227.6 Q363.5 233.3 370.5 236.8 Z M370.5 236.8 Q375.7 231.5 378.9 224.7 Q373.7 230.1 370.5 236.8 Z M369.4 230.1 Q364.4 223.5 357.6 218.8 Q362.6 225.3 369.4 230.1 Z M369.4 230.1 Q375.3 224.6 379.4 217.6 Q373.4 223.1 369.4 230.1 Z M368.2 224.1 Q360.2 218.8 351.0 215.9 Q359.0 221.2 368.2 224.1 Z M368.2 224.1 Q374.1 217.6 378.1 209.7 Q372.1 216.2 368.2 224.1 Z M367.0 218.9 Q360.6 213.4 352.9 210.1 Q359.3 215.6 367.0 218.9 Z M367.0 218.9 Q370.3 212.0 371.3 204.5 Q368.0 211.3 367.0 218.9 Z M365.7 214.5 Q358.9 208.2 350.7 203.9 Q357.5 210.3 365.7 214.5 Z M365.7 214.5 Q368.6 206.5 369.2 198.1 Q366.3 206.0 365.7 214.5 Z M364.4 210.9 Q358.1 206.0 350.6 203.5 Q356.9 208.3 364.4 210.9 Z M364.4 210.9 Q367.1 204.3 367.4 197.1 Q364.8 203.8 364.4 210.9 Z M363.1 208.0 Q357.0 203.9 349.8 202.2 Q355.9 206.4 363.1 208.0 Z M363.1 208.0 Q364.2 201.7 362.9 195.4 Q361.9 201.7 363.1 208.0 Z M361.7 206.0 Q354.3 203.8 346.6 204.5 Q354.0 206.7 361.7 206.0 Z M361.7 206.0 Q361.0 199.6 358.0 194.0 Q358.7 200.3 361.7 206.0 Z M360.3 204.7 Q349.7 206.2 340.0 210.7 Q350.6 209.2 360.3 204.7 Z M360.3 204.7 Q356.2 197.3 350.2 191.5 Q354.3 198.8 360.3 204.7 Z M358.8 204.2 Q351.3 207.7 345.9 214.0 Q353.4 210.4 358.8 204.2 Z M358.8 204.2 Q353.6 200.2 347.2 198.6 Q352.4 202.6 358.8 204.2 Z M357.3 204.4 Q353.0 210.6 351.9 218.0 Q356.3 211.9 357.3 204.4 Z M357.3 204.4 Q351.8 202.3 345.9 203.0 Q351.4 205.1 357.3 204.4 Z M355.8 205.5 Q352.6 212.4 353.0 220.0 Q356.2 213.1 355.8 205.5 Z M355.8 205.5 Q349.2 207.0 344.1 211.3 Q350.6 209.9 355.8 205.5 Z M354.2 207.3 Q352.1 212.4 353.6 217.7 Q355.7 212.6 354.2 207.3 Z M354.2 207.3 Q349.4 208.6 346.4 212.6 Q351.2 211.3 354.2 207.3 Z" fill="#223527"/><path d="M388.6 347.0 Q386.8 270.0 382.5 193.0" stroke="#3f5c44" stroke-width=".9" fill="none"/><path d="M387.2 298.0 Q385.9 294.1 382.7 291.7 Q384.0 295.6 387.2 298.0 Z M387.2 298.0 Q391.1 296.4 393.3 292.8 Q389.5 294.4 387.2 298.0 Z M386.9 291.0 Q384.6 286.0 380.2 282.4 Q382.6 287.5 386.9 291.0 Z M386.9 291.0 Q391.5 287.7 394.2 282.8 Q389.7 286.1 386.9 291.0 Z M386.7 284.0 Q383.9 279.6 379.3 276.9 Q382.1 281.4 386.7 284.0 Z M386.7 284.0 Q391.5 281.7 394.7 277.4 Q389.9 279.7 386.7 284.0 Z M386.4 277.0 Q381.1 270.8 374.1 266.5 Q379.4 272.7 386.4 277.0 Z M386.4 277.0 Q392.0 271.3 395.5 264.2 Q390.0 269.9 386.4 277.0 Z M386.2 270.0 Q382.7 263.7 377.3 259.0 Q380.8 265.3 386.2 270.0 Z M386.2 270.0 Q392.2 265.9 396.5 260.0 Q390.5 264.1 386.2 270.0 Z M385.9 263.0 Q380.2 256.8 372.9 252.6 Q378.6 258.8 385.9 263.0 Z M385.9 263.0 Q391.6 257.3 395.4 250.2 Q389.7 255.9 385.9 263.0 Z M385.6 256.0 Q380.4 250.3 373.6 246.7 Q378.8 252.4 385.6 256.0 Z M385.6 256.0 Q392.2 252.1 397.1 246.3 Q390.5 250.2 385.6 256.0 Z M385.3 249.0 Q378.3 241.9 369.7 236.9 Q376.7 243.9 385.3 249.0 Z M385.3 249.0 Q393.2 243.2 399.4 235.6 Q391.5 241.4 385.3 249.0 Z M385.0 242.0 Q380.0 234.2 373.1 228.1 Q378.1 235.8 385.0 242.0 Z M385.0 242.0 Q391.8 235.8 396.8 228.0 Q389.9 234.2 385.0 242.0 Z M384.6 235.0 Q381.1 228.2 375.6 222.8 Q379.1 229.6 384.6 235.0 Z M384.6 235.0 Q389.4 229.1 392.1 222.0 Q387.3 227.9 384.6 235.0 Z M384.3 228.0 Q380.5 221.8 374.9 217.3 Q378.7 223.5 384.3 228.0 Z M384.3 228.0 Q390.2 223.7 394.2 217.6 Q388.4 222.0 384.3 228.0 Z M384.0 221.0 Q378.6 214.0 371.6 208.7 Q376.9 215.8 384.0 221.0 Z M384.0 221.0 Q391.4 216.1 397.2 209.3 Q389.7 214.2 384.0 221.0 Z M383.6 214.0 Q377.5 208.2 369.9 204.6 Q376.0 210.4 383.6 214.0 Z M383.6 214.0 Q389.3 208.4 393.0 201.4 Q387.3 207.0 383.6 214.0 Z M383.3 207.0 Q380.7 202.2 376.4 199.1 Q378.9 203.8 383.3 207.0 Z M383.3 207.0 Q387.1 203.3 388.9 198.4 Q385.0 202.0 383.3 207.0 Z M382.9 200.0 Q380.2 196.1 376.0 194.0 Q378.6 198.0 382.9 200.0 Z M382.9 200.0 Q387.1 197.9 389.6 193.8 Q385.4 196.0 382.9 200.0 Z M382.5 193.0 Q379.9 188.8 375.5 186.4 Q378.2 190.6 382.5 193.0 Z M382.5 193.0 Q386.6 190.3 388.9 186.0 Q384.8 188.6 382.5 193.0 Z" fill="#3f5c44"/><path d="M388.2 347.0 Q392.6 273.2 403.0 199.4" stroke="#2c4431" stroke-width=".9" fill="none"/><path d="M391.6 300.0 Q390.1 296.4 386.7 294.3 Q388.2 298.0 391.6 300.0 Z M391.6 300.0 Q395.7 299.0 398.3 295.7 Q394.2 296.8 391.6 300.0 Z M392.2 293.3 Q389.1 288.0 384.1 284.4 Q387.2 289.7 392.2 293.3 Z M392.2 293.3 Q397.7 290.2 401.4 285.2 Q396.0 288.3 392.2 293.3 Z M392.8 286.6 Q390.0 281.8 385.5 278.6 Q388.2 283.5 392.8 286.6 Z M392.8 286.6 Q397.6 283.7 400.7 279.0 Q395.9 281.9 392.8 286.6 Z M393.5 279.9 Q388.7 273.6 382.1 269.0 Q386.9 275.4 393.5 279.9 Z M393.5 279.9 Q400.1 275.5 405.1 269.2 Q398.4 273.6 393.5 279.9 Z M394.1 273.2 Q389.8 267.2 383.7 262.9 Q388.0 269.0 394.1 273.2 Z M394.1 273.2 Q401.0 269.9 406.3 264.4 Q399.5 267.8 394.1 273.2 Z M394.8 266.5 Q392.7 260.0 388.5 254.6 Q390.6 261.1 394.8 266.5 Z M394.8 266.5 Q400.4 262.3 404.3 256.3 Q398.6 260.6 394.8 266.5 Z M395.5 259.8 Q390.0 251.8 382.6 245.5 Q388.2 253.5 395.5 259.8 Z M395.5 259.8 Q403.0 253.6 408.7 245.7 Q401.2 251.9 395.5 259.8 Z M396.2 253.1 Q390.3 245.4 382.6 239.6 Q388.5 247.2 396.2 253.1 Z M396.2 253.1 Q404.9 248.3 412.1 241.4 Q403.4 246.2 396.2 253.1 Z M397.0 246.4 Q393.4 239.4 387.9 233.8 Q391.4 240.8 397.0 246.4 Z M397.0 246.4 Q403.3 241.5 407.8 234.9 Q401.5 239.8 397.0 246.4 Z M397.8 239.7 Q394.0 234.1 388.5 230.2 Q392.2 235.8 397.8 239.7 Z M397.8 239.7 Q404.1 236.7 408.8 231.6 Q402.6 234.6 397.8 239.7 Z M398.6 232.9 Q394.0 226.3 387.6 221.4 Q392.2 228.1 398.6 232.9 Z M398.6 232.9 Q405.6 228.7 411.0 222.5 Q404.0 226.8 398.6 232.9 Z M399.4 226.2 Q394.8 219.1 388.4 213.6 Q393.0 220.7 399.4 226.2 Z M399.4 226.2 Q406.4 221.2 411.6 214.4 Q404.6 219.4 399.4 226.2 Z M400.3 219.5 Q398.4 213.9 394.5 209.4 Q396.3 215.0 400.3 219.5 Z M400.3 219.5 Q405.6 216.2 409.1 211.1 Q403.8 214.4 400.3 219.5 Z M401.2 212.8 Q399.4 207.0 395.4 202.4 Q397.3 208.2 401.2 212.8 Z M401.2 212.8 Q406.8 209.8 410.8 204.8 Q405.2 207.8 401.2 212.8 Z M402.1 206.1 Q400.1 202.1 396.3 199.7 Q398.2 203.7 402.1 206.1 Z M402.1 206.1 Q406.2 204.2 408.8 200.3 Q404.6 202.3 402.1 206.1 Z M403.0 199.4 Q401.7 195.4 398.3 192.8 Q399.7 196.8 403.0 199.4 Z M403.0 199.4 Q407.4 198.4 410.6 195.1 Q406.1 196.1 403.0 199.4 Z" fill="#2c4431"/><path d="M382.9 347.0 Q397.9 201.2 432.8 232.4" stroke="#283c2d" stroke-width=".9" fill="none"/><path d="M394.4 272.1 Q393.5 267.7 390.4 264.3 Q391.4 268.8 394.4 272.1 Z M394.4 272.1 Q399.2 270.8 402.7 267.2 Q397.9 268.6 394.4 272.1 Z M396.4 264.4 Q395.9 260.0 393.1 256.6 Q393.7 261.0 396.4 264.4 Z M396.4 264.4 Q400.9 262.8 403.8 259.1 Q399.4 260.7 396.4 264.4 Z M398.5 257.3 Q397.3 252.5 393.9 248.8 Q395.2 253.6 398.5 257.3 Z M398.5 257.3 Q403.6 255.6 407.2 251.6 Q402.1 253.4 398.5 257.3 Z M400.6 251.0 Q399.1 244.5 395.5 238.9 Q397.0 245.4 400.6 251.0 Z M400.6 251.0 Q408.0 249.4 414.4 245.3 Q407.0 246.9 400.6 251.0 Z M402.9 245.5 Q402.4 238.7 399.6 232.5 Q400.1 239.3 402.9 245.5 Z M402.9 245.5 Q410.6 244.2 417.4 240.4 Q409.7 241.7 402.9 245.5 Z M405.2 240.6 Q406.4 232.2 405.2 223.8 Q404.0 232.2 405.2 240.6 Z M405.2 240.6 Q415.1 239.5 424.4 235.6 Q414.4 236.8 405.2 240.6 Z M407.6 236.5 Q409.1 229.5 408.3 222.5 Q406.8 229.4 407.6 236.5 Z M407.6 236.5 Q416.3 237.1 424.7 234.9 Q416.0 234.3 407.6 236.5 Z M410.0 233.1 Q412.0 225.3 411.6 217.2 Q409.7 225.1 410.0 233.1 Z M410.0 233.1 Q420.0 234.8 430.1 233.6 Q420.1 231.9 410.0 233.1 Z M412.6 230.5 Q416.8 222.1 418.8 212.9 Q414.6 221.3 412.6 230.5 Z M412.6 230.5 Q424.2 233.5 436.1 233.6 Q424.6 230.6 412.6 230.5 Z M415.2 228.6 Q420.5 222.4 423.7 215.0 Q418.5 221.1 415.2 228.6 Z M415.2 228.6 Q424.5 233.5 434.9 235.6 Q425.6 230.6 415.2 228.6 Z M418.0 227.4 Q424.6 223.1 429.5 216.9 Q422.9 221.2 418.0 227.4 Z M418.0 227.4 Q426.0 233.6 435.7 237.0 Q427.6 230.8 418.0 227.4 Z M420.8 226.9 Q429.4 223.7 436.8 218.2 Q428.2 221.4 420.8 226.9 Z M420.8 226.9 Q427.6 236.9 437.0 244.6 Q430.1 234.6 420.8 226.9 Z M423.6 227.2 Q432.8 227.8 441.8 225.5 Q432.6 224.9 423.6 227.2 Z M423.6 227.2 Q428.6 237.3 436.4 245.5 Q431.5 235.3 423.6 227.2 Z M426.6 228.2 Q434.8 229.2 442.9 227.3 Q434.7 226.3 426.6 228.2 Z M426.6 228.2 Q430.2 237.7 436.9 245.3 Q433.3 235.9 426.6 228.2 Z M429.7 229.9 Q434.5 232.7 440.1 232.4 Q435.2 229.7 429.7 229.9 Z M429.7 229.9 Q430.5 236.4 434.7 241.4 Q433.8 234.9 429.7 229.9 Z M432.8 232.4 Q436.5 236.0 441.6 236.7 Q437.9 233.1 432.8 232.4 Z M432.8 232.4 Q431.9 238.1 434.5 243.3 Q435.5 237.6 432.8 232.4 Z" fill="#283c2d"/><path d="M388.0 347.0 Q409.4 226.6 459.5 257.6" stroke="#314b36" stroke-width=".9" fill="none"/><path d="M404.5 285.7 Q404.4 281.8 402.0 278.6 Q402.2 282.6 404.5 285.7 Z M404.5 285.7 Q409.1 285.7 412.8 283.1 Q408.2 283.1 404.5 285.7 Z M407.4 279.5 Q407.0 274.9 404.5 271.1 Q404.8 275.7 407.4 279.5 Z M407.4 279.5 Q412.8 280.0 417.8 277.8 Q412.4 277.2 407.4 279.5 Z M410.3 273.8 Q410.0 268.4 407.4 263.7 Q407.7 269.1 410.3 273.8 Z M410.3 273.8 Q416.6 273.5 422.2 270.5 Q415.9 270.9 410.3 273.8 Z M413.4 268.8 Q413.2 262.2 410.8 256.0 Q410.9 262.7 413.4 268.8 Z M413.4 268.8 Q421.5 269.8 429.5 267.9 Q421.3 266.9 413.4 268.8 Z M416.6 264.5 Q418.5 258.5 418.1 252.2 Q416.2 258.2 416.6 264.5 Z M416.6 264.5 Q424.2 265.4 431.7 263.4 Q424.0 262.5 416.6 264.5 Z M419.9 260.7 Q423.4 254.4 424.7 247.2 Q421.2 253.6 419.9 260.7 Z M419.9 260.7 Q428.7 261.9 437.4 260.2 Q428.6 259.0 419.9 260.7 Z M423.3 257.6 Q429.0 250.7 432.6 242.6 Q426.9 249.5 423.3 257.6 Z M423.3 257.6 Q434.0 260.8 445.1 261.0 Q434.5 257.8 423.3 257.6 Z M426.9 255.1 Q433.2 249.7 437.6 242.7 Q431.3 248.1 426.9 255.1 Z M426.9 255.1 Q436.5 258.8 446.8 259.5 Q437.2 255.8 426.9 255.1 Z M430.5 253.2 Q437.2 247.4 442.0 240.0 Q435.4 245.8 430.5 253.2 Z M430.5 253.2 Q440.7 257.8 451.8 259.4 Q441.6 254.8 430.5 253.2 Z M434.3 252.0 Q442.3 246.0 448.5 238.3 Q440.6 244.2 434.3 252.0 Z M434.3 252.0 Q443.6 261.6 455.1 268.6 Q445.7 258.9 434.3 252.0 Z M438.2 251.3 Q445.3 249.8 451.3 245.7 Q444.2 247.3 438.2 251.3 Z M438.2 251.3 Q444.7 257.5 453.0 260.8 Q446.5 254.7 438.2 251.3 Z M442.2 251.3 Q451.4 250.5 459.9 247.0 Q450.8 247.8 442.2 251.3 Z M442.2 251.3 Q449.4 260.1 458.9 266.2 Q451.7 257.5 442.2 251.3 Z M446.4 252.0 Q453.6 251.2 460.1 247.9 Q452.8 248.6 446.4 252.0 Z M446.4 252.0 Q449.6 260.8 455.9 267.8 Q452.7 259.0 446.4 252.0 Z M450.6 253.2 Q456.9 255.2 463.5 254.2 Q457.2 252.2 450.6 253.2 Z M450.6 253.2 Q452.1 261.1 456.8 267.5 Q455.4 259.6 450.6 253.2 Z M455.0 255.1 Q461.2 256.7 467.4 255.4 Q461.2 253.8 455.0 255.1 Z M455.0 255.1 Q457.2 262.5 462.5 268.1 Q460.3 260.7 455.0 255.1 Z M459.5 257.6 Q463.5 259.6 467.8 258.6 Q463.8 256.6 459.5 257.6 Z M459.5 257.6 Q459.6 262.9 463.0 267.0 Q463.0 261.7 459.5 257.6 Z" fill="#314b36"/><path d="M378.0 347.0 Q397.7 256.0 443.8 287.4" stroke="#223527" stroke-width=".9" fill="none"/><path d="M393.2 301.5 Q393.3 296.8 391.0 292.7 Q391.0 297.4 393.2 301.5 Z M393.2 301.5 Q398.5 300.7 402.8 297.5 Q397.5 298.2 393.2 301.5 Z M395.8 297.0 Q397.7 291.3 397.2 285.4 Q395.4 291.0 395.8 297.0 Z M395.8 297.0 Q403.1 297.9 410.2 295.9 Q402.9 295.0 395.8 297.0 Z M398.6 293.0 Q400.4 287.4 399.9 281.5 Q398.1 287.2 398.6 293.0 Z M398.6 293.0 Q405.7 293.8 412.7 291.7 Q405.5 290.9 398.6 293.0 Z M401.4 289.6 Q404.5 282.4 405.3 274.6 Q402.2 281.8 401.4 289.6 Z M401.4 289.6 Q410.8 289.8 419.9 287.1 Q410.5 286.9 401.4 289.6 Z M404.3 286.6 Q408.3 280.3 410.0 273.1 Q406.1 279.4 404.3 286.6 Z M404.3 286.6 Q413.3 287.8 422.2 286.0 Q413.2 284.9 404.3 286.6 Z M407.4 284.2 Q412.3 279.3 415.2 273.1 Q410.3 277.9 407.4 284.2 Z M407.4 284.2 Q415.5 286.6 424.0 286.0 Q415.9 283.6 407.4 284.2 Z M410.5 282.2 Q416.3 277.1 420.1 270.4 Q414.4 275.5 410.5 282.2 Z M410.5 282.2 Q419.0 287.5 428.7 289.8 Q420.2 284.5 410.5 282.2 Z M413.8 280.8 Q420.1 276.1 424.7 269.7 Q418.4 274.4 413.8 280.8 Z M413.8 280.8 Q422.4 285.8 432.2 287.8 Q423.6 282.8 413.8 280.8 Z M417.2 279.8 Q425.3 277.3 432.3 272.4 Q424.1 274.9 417.2 279.8 Z M417.2 279.8 Q425.4 286.4 435.2 290.1 Q427.0 283.6 417.2 279.8 Z M420.6 279.4 Q427.3 277.0 432.6 272.4 Q426.0 274.7 420.6 279.4 Z M420.6 279.4 Q426.3 286.7 434.1 291.4 Q428.5 284.1 420.6 279.4 Z M424.2 279.5 Q431.9 278.6 438.8 275.1 Q431.1 276.0 424.2 279.5 Z M424.2 279.5 Q428.5 288.4 435.6 295.2 Q431.3 286.3 424.2 279.5 Z M427.9 280.0 Q434.9 279.6 441.2 276.5 Q434.2 276.9 427.9 280.0 Z M427.9 280.0 Q431.7 288.1 438.4 294.0 Q434.5 286.0 427.9 280.0 Z M431.7 281.1 Q439.5 281.4 446.8 278.9 Q439.1 278.6 431.7 281.1 Z M431.7 281.1 Q435.2 290.1 441.7 297.3 Q438.2 288.3 431.7 281.1 Z M435.6 282.7 Q442.7 284.2 449.7 282.7 Q442.7 281.2 435.6 282.7 Z M435.6 282.7 Q436.7 291.5 441.1 299.2 Q440.1 290.4 435.6 282.7 Z M439.7 284.8 Q445.3 286.5 451.0 285.3 Q445.4 283.6 439.7 284.8 Z M439.7 284.8 Q440.1 292.0 444.0 298.0 Q443.6 290.9 439.7 284.8 Z M443.8 287.4 Q448.8 290.2 454.5 290.0 Q449.5 287.2 443.8 287.4 Z M443.8 287.4 Q444.3 294.1 448.1 299.5 Q447.7 292.8 443.8 287.4 Z" fill="#223527"/><path d="M377.8 347.0 Q392.8 281.4 428.0 304.7" stroke="#3f5c44" stroke-width=".9" fill="none"/><path d="M389.4 314.3 Q389.9 310.5 388.0 307.2 Q387.6 311.0 389.4 314.3 Z M389.4 314.3 Q393.8 314.3 397.3 311.7 Q392.9 311.7 389.4 314.3 Z M391.4 311.0 Q393.2 306.8 392.7 302.2 Q390.9 306.5 391.4 311.0 Z M391.4 311.0 Q396.9 312.2 402.3 310.4 Q396.8 309.3 391.4 311.0 Z M393.5 308.2 Q394.8 301.5 393.8 294.7 Q392.5 301.4 393.5 308.2 Z M393.5 308.2 Q401.8 308.4 409.7 305.9 Q401.4 305.6 393.5 308.2 Z M395.6 305.7 Q398.4 300.4 399.0 294.4 Q396.2 299.7 395.6 305.7 Z M395.6 305.7 Q403.0 307.2 410.3 305.8 Q403.0 304.3 395.6 305.7 Z M397.9 303.6 Q401.2 298.2 402.3 292.0 Q399.0 297.4 397.9 303.6 Z M397.9 303.6 Q405.5 305.5 413.4 304.4 Q405.7 302.5 397.9 303.6 Z M400.2 301.9 Q404.1 293.7 405.8 284.7 Q401.9 292.9 400.2 301.9 Z M400.2 301.9 Q411.3 306.3 423.1 307.7 Q412.0 303.3 400.2 301.9 Z M402.6 300.5 Q407.0 294.7 409.3 287.8 Q404.9 293.6 402.6 300.5 Z M402.6 300.5 Q411.1 304.8 420.5 306.1 Q412.0 301.8 402.6 300.5 Z M405.1 299.5 Q412.7 296.1 419.0 290.5 Q411.3 293.9 405.1 299.5 Z M405.1 299.5 Q413.7 305.5 423.7 308.5 Q415.1 302.6 405.1 299.5 Z M407.7 298.9 Q415.6 295.1 422.0 289.3 Q414.1 293.0 407.7 298.9 Z M407.7 298.9 Q416.3 305.8 426.6 310.0 Q418.0 303.0 407.7 298.9 Z M410.3 298.6 Q419.5 297.5 427.9 293.7 Q418.7 294.8 410.3 298.6 Z M410.3 298.6 Q418.0 306.8 427.8 312.4 Q420.1 304.2 410.3 298.6 Z M413.1 298.7 Q420.5 298.2 427.2 295.0 Q419.8 295.5 413.1 298.7 Z M413.1 298.7 Q418.6 305.9 426.4 310.6 Q420.9 303.4 413.1 298.7 Z M415.9 299.2 Q422.8 299.9 429.5 297.8 Q422.5 297.1 415.9 299.2 Z M415.9 299.2 Q419.8 306.7 426.4 312.0 Q422.5 304.5 415.9 299.2 Z M418.8 300.0 Q426.9 301.0 434.9 299.1 Q426.7 298.1 418.8 300.0 Z M418.8 300.0 Q421.7 309.7 427.7 317.8 Q424.8 308.1 418.8 300.0 Z M421.8 301.2 Q429.2 302.5 436.6 301.0 Q429.2 299.6 421.8 301.2 Z M421.8 301.2 Q423.2 310.4 428.1 318.4 Q426.6 309.2 421.8 301.2 Z M424.8 302.8 Q430.5 305.3 436.6 304.9 Q431.0 302.4 424.8 302.8 Z M424.8 302.8 Q424.9 310.1 428.5 316.6 Q428.4 309.2 424.8 302.8 Z M428.0 304.7 Q432.1 306.8 436.7 305.9 Q432.6 303.8 428.0 304.7 Z M428.0 304.7 Q427.7 310.3 430.9 314.8 Q431.2 309.3 428.0 304.7 Z" fill="#3f5c44"/><path d="M377.6 347.0 Q360.7 253.9 321.2 284.3" stroke="#2c4431" stroke-width=".9" fill="none"/><path d="M364.6 300.3 Q359.4 297.3 353.4 296.8 Q358.6 299.9 364.6 300.3 Z M364.6 300.3 Q367.3 295.9 367.7 290.7 Q365.0 295.1 364.6 300.3 Z M362.3 295.6 Q356.7 291.9 350.1 290.6 Q355.7 294.3 362.3 295.6 Z M362.3 295.6 Q364.4 290.1 364.2 284.2 Q362.1 289.7 362.3 295.6 Z M360.0 291.5 Q352.9 289.4 345.6 290.1 Q352.7 292.2 360.0 291.5 Z M360.0 291.5 Q362.2 285.9 362.1 279.9 Q359.9 285.5 360.0 291.5 Z M357.6 287.9 Q348.6 285.7 339.5 286.3 Q348.4 288.5 357.6 287.9 Z M357.6 287.9 Q359.5 280.6 359.2 273.1 Q357.2 280.4 357.6 287.9 Z M355.0 284.8 Q345.4 283.7 335.8 285.6 Q345.5 286.7 355.0 284.8 Z M355.0 284.8 Q354.1 277.1 350.9 270.0 Q351.8 277.7 355.0 284.8 Z M352.4 282.2 Q344.8 280.7 337.1 282.0 Q344.8 283.6 352.4 282.2 Z M352.4 282.2 Q351.3 276.0 347.9 270.6 Q349.1 276.8 352.4 282.2 Z M349.7 280.1 Q340.8 281.4 333.0 285.7 Q341.8 284.4 349.7 280.1 Z M349.7 280.1 Q347.8 273.6 343.7 268.1 Q345.6 274.6 349.7 280.1 Z M346.9 278.5 Q335.8 281.6 326.0 287.6 Q337.1 284.5 346.9 278.5 Z M346.9 278.5 Q343.0 270.7 337.0 264.3 Q341.0 272.1 346.9 278.5 Z M344.0 277.5 Q333.5 280.1 324.2 285.6 Q334.7 283.0 344.0 277.5 Z M344.0 277.5 Q339.1 270.6 332.4 265.4 Q337.3 272.3 344.0 277.5 Z M341.1 276.9 Q330.5 283.2 322.0 292.2 Q332.6 285.9 341.1 276.9 Z M341.1 276.9 Q333.4 271.1 324.5 267.5 Q332.1 273.4 341.1 276.9 Z M338.0 276.9 Q328.2 283.0 320.7 291.6 Q330.4 285.5 338.0 276.9 Z M338.0 276.9 Q330.2 272.1 321.4 269.9 Q329.2 274.6 338.0 276.9 Z M334.8 277.3 Q327.4 283.0 322.5 291.0 Q330.0 285.3 334.8 277.3 Z M334.8 277.3 Q327.3 275.2 319.6 276.0 Q327.1 278.1 334.8 277.3 Z M331.6 278.3 Q324.4 286.0 320.1 295.7 Q327.3 288.0 331.6 278.3 Z M331.6 278.3 Q323.3 276.1 314.8 276.7 Q323.0 278.9 331.6 278.3 Z M328.2 279.8 Q322.5 288.5 320.0 298.5 Q325.7 289.9 328.2 279.8 Z M328.2 279.8 Q319.5 279.4 311.2 282.0 Q319.9 282.4 328.2 279.8 Z M324.7 281.8 Q320.9 288.4 320.6 296.0 Q324.4 289.4 324.7 281.8 Z M324.7 281.8 Q318.5 281.0 312.6 283.2 Q318.8 284.0 324.7 281.8 Z M321.2 284.3 Q318.0 290.2 318.3 296.9 Q321.5 291.0 321.2 284.3 Z M321.2 284.3 Q315.4 285.0 310.8 288.6 Q316.6 287.9 321.2 284.3 Z" fill="#2c4431"/><path d="M379.1 347.0 Q361.2 283.4 319.6 307.9" stroke="#283c2d" stroke-width=".9" fill="none"/><path d="M365.3 315.4 Q360.0 313.0 354.2 313.3 Q359.5 315.7 365.3 315.4 Z M365.3 315.4 Q366.5 310.7 365.3 306.0 Q364.1 310.7 365.3 315.4 Z M362.9 312.4 Q358.3 310.1 353.2 310.5 Q357.8 312.8 362.9 312.4 Z M362.9 312.4 Q363.2 308.1 361.2 304.3 Q360.9 308.6 362.9 312.4 Z M360.5 309.7 Q352.3 308.9 344.5 311.2 Q352.6 311.9 360.5 309.7 Z M360.5 309.7 Q360.6 303.3 358.4 297.2 Q358.3 303.7 360.5 309.7 Z M357.9 307.4 Q350.0 306.9 342.6 309.5 Q350.5 309.9 357.9 307.4 Z M357.9 307.4 Q356.8 301.2 353.5 296.0 Q354.6 302.1 357.9 307.4 Z M355.3 305.4 Q346.1 305.0 337.4 307.6 Q346.5 308.0 355.3 305.4 Z M355.3 305.4 Q354.0 298.3 350.5 292.0 Q351.8 299.1 355.3 305.4 Z M352.5 303.8 Q343.6 306.6 336.2 312.2 Q345.1 309.4 352.5 303.8 Z M352.5 303.8 Q350.5 297.2 346.3 291.7 Q348.4 298.3 352.5 303.8 Z M349.7 302.6 Q341.1 304.8 334.0 310.0 Q342.5 307.7 349.7 302.6 Z M349.7 302.6 Q346.6 296.6 341.5 292.2 Q344.6 298.1 349.7 302.6 Z M346.7 301.7 Q334.5 307.2 324.1 315.6 Q336.3 310.0 346.7 301.7 Z M346.7 301.7 Q338.6 295.0 329.1 290.5 Q337.2 297.2 346.7 301.7 Z M343.7 301.2 Q335.2 307.3 329.2 315.7 Q337.6 309.7 343.7 301.2 Z M343.7 301.2 Q336.9 296.8 329.0 294.8 Q335.8 299.2 343.7 301.2 Z M340.5 301.1 Q330.5 307.0 322.6 315.5 Q332.6 309.6 340.5 301.1 Z M340.5 301.1 Q332.6 296.4 323.6 294.1 Q331.5 298.8 340.5 301.1 Z M337.3 301.3 Q326.9 309.0 319.0 319.1 Q329.3 311.4 337.3 301.3 Z M337.3 301.3 Q328.4 296.4 318.5 294.1 Q327.4 299.0 337.3 301.3 Z M333.9 301.9 Q327.2 310.1 323.5 320.2 Q330.3 311.9 333.9 301.9 Z M333.9 301.9 Q326.2 298.7 317.8 298.3 Q325.6 301.4 333.9 301.9 Z M330.5 302.8 Q325.2 309.9 323.1 318.4 Q328.4 311.4 330.5 302.8 Z M330.5 302.8 Q323.7 301.0 316.6 302.0 Q323.5 303.9 330.5 302.8 Z M327.0 304.2 Q321.7 308.8 319.3 315.4 Q324.6 310.8 327.0 304.2 Z M327.0 304.2 Q321.2 302.8 315.6 304.4 Q321.3 305.8 327.0 304.2 Z M323.3 305.9 Q318.5 311.5 316.9 318.7 Q321.7 313.1 323.3 305.9 Z M323.3 305.9 Q317.0 305.5 311.3 308.2 Q317.6 308.5 323.3 305.9 Z M319.6 307.9 Q315.7 312.4 315.1 318.4 Q319.0 313.8 319.6 307.9 Z M319.6 307.9 Q314.8 306.7 310.2 308.4 Q315.0 309.6 319.6 307.9 Z" fill="#283c2d"/><path d="M377.0 347.0 Q364.5 191.9 335.4 221.4" stroke="#314b36" stroke-width=".9" fill="none"/><path d="M367.4 267.0 Q364.4 262.5 359.6 259.9 Q362.7 264.4 367.4 267.0 Z M367.4 267.0 Q371.6 263.8 373.9 259.0 Q369.7 262.2 367.4 267.0 Z M365.7 258.6 Q360.6 254.7 354.3 253.2 Q359.5 257.1 365.7 258.6 Z M365.7 258.6 Q369.1 253.9 370.4 248.2 Q367.0 252.9 365.7 258.6 Z M364.0 251.0 Q359.6 246.5 353.7 244.2 Q358.1 248.7 364.0 251.0 Z M364.0 251.0 Q368.5 247.1 371.0 241.6 Q366.6 245.6 364.0 251.0 Z M362.2 244.1 Q356.5 239.1 349.3 236.2 Q355.1 241.3 362.2 244.1 Z M362.2 244.1 Q365.9 238.2 367.4 231.3 Q363.7 237.3 362.2 244.1 Z M360.4 238.0 Q355.2 232.9 348.6 229.9 Q353.8 235.1 360.4 238.0 Z M360.4 238.0 Q362.9 231.9 363.0 225.3 Q360.6 231.4 360.4 238.0 Z M358.4 232.7 Q350.4 227.2 341.1 224.1 Q349.2 229.6 358.4 232.7 Z M358.4 232.7 Q363.3 225.4 366.0 217.0 Q361.2 224.3 358.4 232.7 Z M356.5 228.2 Q349.5 223.9 341.5 222.1 Q348.4 226.4 356.5 228.2 Z M356.5 228.2 Q359.0 221.4 359.2 214.3 Q356.7 221.0 356.5 228.2 Z M354.4 224.4 Q346.7 221.0 338.4 220.4 Q346.1 223.7 354.4 224.4 Z M354.4 224.4 Q357.2 217.8 357.7 210.7 Q354.9 217.3 354.4 224.4 Z M352.3 221.3 Q340.7 220.2 329.3 222.0 Q340.8 223.1 352.3 221.3 Z M352.3 221.3 Q352.9 212.1 351.2 203.1 Q350.6 212.3 352.3 221.3 Z M350.1 219.0 Q338.1 220.4 327.0 224.8 Q338.9 223.4 350.1 219.0 Z M350.1 219.0 Q348.3 210.0 344.3 201.8 Q346.0 210.8 350.1 219.0 Z M347.8 217.5 Q337.1 218.4 327.2 222.2 Q337.8 221.4 347.8 217.5 Z M347.8 217.5 Q344.4 209.8 338.9 203.5 Q342.3 211.1 347.8 217.5 Z M345.4 216.8 Q336.8 221.7 330.4 229.2 Q339.0 224.3 345.4 216.8 Z M345.4 216.8 Q340.1 211.4 333.3 208.2 Q338.6 213.5 345.4 216.8 Z M343.0 216.8 Q335.8 221.5 331.0 228.7 Q338.2 224.0 343.0 216.8 Z M343.0 216.8 Q337.3 213.2 330.6 212.1 Q336.3 215.7 343.0 216.8 Z M340.6 217.6 Q335.8 223.3 334.2 230.7 Q339.0 224.9 340.6 217.6 Z M340.6 217.6 Q334.4 216.7 328.4 218.8 Q334.6 219.7 340.6 217.6 Z M338.0 219.1 Q334.8 225.4 335.1 232.5 Q338.3 226.2 338.0 219.1 Z M338.0 219.1 Q332.2 218.3 326.8 220.4 Q332.6 221.3 338.0 219.1 Z M335.4 221.4 Q333.0 226.8 334.2 232.5 Q336.6 227.1 335.4 221.4 Z M335.4 221.4 Q330.3 222.1 326.5 225.7 Q331.7 225.0 335.4 221.4 Z" fill="#314b36"/><path d="M384.8 347.0 Q379.8 281.0 368.0 215.0" stroke="#223527" stroke-width=".9" fill="none"/><path d="M380.9 305.0 Q378.8 301.0 374.9 298.7 Q377.0 302.7 380.9 305.0 Z M380.9 305.0 Q384.0 301.8 384.9 297.6 Q381.9 300.7 380.9 305.0 Z M380.2 299.0 Q376.6 295.3 371.6 293.8 Q375.3 297.5 380.2 299.0 Z M380.2 299.0 Q384.0 295.8 385.7 291.3 Q382.0 294.4 380.2 299.0 Z M379.6 293.0 Q375.2 288.9 369.6 287.0 Q373.9 291.1 379.6 293.0 Z M379.6 293.0 Q384.4 289.9 387.5 285.1 Q382.6 288.2 379.6 293.0 Z M378.8 287.0 Q375.0 281.2 369.3 277.2 Q373.2 282.9 378.8 287.0 Z M378.8 287.0 Q383.0 281.7 385.0 275.4 Q380.9 280.6 378.8 287.0 Z M378.1 281.0 Q374.1 275.8 368.5 272.5 Q372.5 277.7 378.1 281.0 Z M378.1 281.0 Q381.8 276.0 383.3 270.0 Q379.6 275.0 378.1 281.0 Z M377.3 275.0 Q372.9 269.1 366.7 265.1 Q371.1 271.0 377.3 275.0 Z M377.3 275.0 Q382.4 270.0 385.5 263.5 Q380.4 268.6 377.3 275.0 Z M376.5 269.0 Q368.8 262.5 359.7 258.1 Q367.4 264.7 376.5 269.0 Z M376.5 269.0 Q382.4 261.7 386.3 253.1 Q380.4 260.4 376.5 269.0 Z M375.7 263.0 Q369.7 256.9 362.3 252.9 Q368.2 259.0 375.7 263.0 Z M375.7 263.0 Q380.7 256.8 383.7 249.4 Q378.7 255.6 375.7 263.0 Z M374.8 257.0 Q370.2 250.5 363.9 245.7 Q368.4 252.2 374.8 257.0 Z M374.8 257.0 Q379.5 250.9 382.0 243.6 Q377.3 249.7 374.8 257.0 Z M373.9 251.0 Q367.8 243.2 359.9 237.3 Q366.0 245.0 373.9 251.0 Z M373.9 251.0 Q380.1 243.7 384.2 235.0 Q378.0 242.4 373.9 251.0 Z M373.0 245.0 Q366.1 239.6 357.9 236.4 Q364.8 241.9 373.0 245.0 Z M373.0 245.0 Q377.6 238.4 380.0 230.7 Q375.4 237.3 373.0 245.0 Z M372.1 239.0 Q367.8 233.6 361.9 230.1 Q366.1 235.5 372.1 239.0 Z M372.1 239.0 Q376.3 234.0 378.5 227.8 Q374.2 232.8 372.1 239.0 Z M371.1 233.0 Q365.5 228.6 358.7 226.6 Q364.3 231.0 371.1 233.0 Z M371.1 233.0 Q376.1 228.7 379.2 222.9 Q374.2 227.2 371.1 233.0 Z M370.1 227.0 Q366.2 221.2 360.4 217.2 Q364.4 223.0 370.1 227.0 Z M370.1 227.0 Q373.6 221.4 374.8 214.8 Q371.4 220.5 370.1 227.0 Z M369.1 221.0 Q364.5 217.1 358.7 215.5 Q363.3 219.4 369.1 221.0 Z M369.1 221.0 Q372.8 217.0 374.5 211.7 Q370.7 215.8 369.1 221.0 Z M368.0 215.0 Q365.8 211.0 361.8 208.8 Q364.0 212.8 368.0 215.0 Z M368.0 215.0 Q371.1 211.9 372.0 207.6 Q368.9 210.7 368.0 215.0 Z" fill="#223527"/><path d="M390.0 347.0 Q397.5 184.7 415.0 215.0" stroke="#3f5c44" stroke-width=".9" fill="none"/><path d="M395.8 263.2 Q392.9 258.7 388.3 255.9 Q391.1 260.4 395.8 263.2 Z M395.8 263.2 Q400.4 260.4 403.2 255.8 Q398.6 258.7 395.8 263.2 Z M396.8 254.5 Q395.8 250.0 392.7 246.6 Q393.7 251.1 396.8 254.5 Z M396.8 254.5 Q401.2 252.5 404.1 248.6 Q399.7 250.5 396.8 254.5 Z M397.8 246.5 Q394.2 240.7 388.7 236.6 Q392.3 242.4 397.8 246.5 Z M397.8 246.5 Q404.3 243.7 409.5 238.8 Q402.9 241.5 397.8 246.5 Z M398.9 239.3 Q395.4 232.8 390.0 227.7 Q393.5 234.2 398.9 239.3 Z M398.9 239.3 Q405.7 235.7 411.0 230.1 Q404.2 233.7 398.9 239.3 Z M400.0 232.9 Q398.6 225.5 394.9 219.0 Q396.3 226.4 400.0 232.9 Z M400.0 232.9 Q407.8 230.1 414.2 225.0 Q406.5 227.8 400.0 232.9 Z M401.1 227.3 Q398.0 220.9 392.8 215.9 Q396.0 222.3 401.1 227.3 Z M401.1 227.3 Q408.4 224.7 414.3 219.9 Q407.1 222.4 401.1 227.3 Z M402.3 222.5 Q401.5 215.1 398.3 208.5 Q399.2 215.8 402.3 222.5 Z M402.3 222.5 Q409.7 219.1 415.5 213.6 Q408.2 217.0 402.3 222.5 Z M403.6 218.5 Q401.3 210.2 396.7 202.8 Q399.1 211.1 403.6 218.5 Z M403.6 218.5 Q412.1 214.6 419.3 208.5 Q410.7 212.4 403.6 218.5 Z M404.9 215.2 Q404.6 208.5 402.0 202.4 Q402.3 209.1 404.9 215.2 Z M404.9 215.2 Q412.6 214.3 419.5 210.7 Q411.8 211.7 404.9 215.2 Z M406.2 212.8 Q408.0 205.6 407.5 198.1 Q405.7 205.4 406.2 212.8 Z M406.2 212.8 Q415.3 213.0 423.9 210.4 Q414.9 210.2 406.2 212.8 Z M407.6 211.2 Q410.9 206.1 412.1 200.0 Q408.7 205.2 407.6 211.2 Z M407.6 211.2 Q415.0 213.3 422.7 212.5 Q415.2 210.3 407.6 211.2 Z M409.0 210.4 Q416.0 205.1 421.4 198.1 Q414.3 203.3 409.0 210.4 Z M409.0 210.4 Q417.6 218.3 428.1 223.6 Q419.5 215.6 409.0 210.4 Z M410.4 210.3 Q418.2 211.3 425.8 209.5 Q418.0 208.5 410.4 210.3 Z M410.4 210.3 Q414.8 218.7 421.9 225.0 Q417.5 216.6 410.4 210.3 Z M411.9 211.1 Q420.1 214.4 428.9 214.7 Q420.7 211.4 411.9 211.1 Z M411.9 211.1 Q413.3 221.4 418.1 230.7 Q416.7 220.3 411.9 211.1 Z M413.4 212.6 Q417.4 216.7 422.9 217.8 Q419.0 213.8 413.4 212.6 Z M413.4 212.6 Q411.7 218.8 413.6 224.8 Q415.3 218.7 413.4 212.6 Z M415.0 215.0 Q418.2 219.8 423.5 222.0 Q420.3 217.2 415.0 215.0 Z M415.0 215.0 Q412.6 220.8 413.8 226.9 Q416.2 221.1 415.0 215.0 Z" fill="#3f5c44"/><path d="M390.0 347.0 Q376.5 225.7 345.0 250.0" stroke="#2c4431" stroke-width=".9" fill="none"/><path d="M379.6 284.6 Q377.0 281.4 373.1 280.3 Q375.6 283.5 379.6 284.6 Z M379.6 284.6 Q382.1 281.8 382.4 278.0 Q379.9 280.8 379.6 284.6 Z M377.8 278.0 Q373.5 273.6 367.7 271.3 Q372.0 275.7 377.8 278.0 Z M377.8 278.0 Q381.6 273.7 383.3 268.2 Q379.5 272.5 377.8 278.0 Z M375.9 272.1 Q369.9 267.8 362.7 265.8 Q368.7 270.2 375.9 272.1 Z M375.9 272.1 Q378.6 266.1 379.0 259.5 Q376.3 265.5 375.9 272.1 Z M374.0 266.8 Q366.6 261.8 358.1 259.1 Q365.5 264.1 374.0 266.8 Z M374.0 266.8 Q378.2 260.0 380.3 252.3 Q376.0 259.1 374.0 266.8 Z M372.0 262.1 Q365.9 258.0 358.7 256.2 Q364.8 260.4 372.0 262.1 Z M372.0 262.1 Q375.1 256.4 375.9 249.9 Q372.8 255.6 372.0 262.1 Z M369.9 258.0 Q361.6 255.7 353.1 256.2 Q361.3 258.5 369.9 258.0 Z M369.9 258.0 Q371.9 251.3 371.5 244.2 Q369.5 251.0 369.9 258.0 Z M367.7 254.5 Q360.2 251.2 352.0 250.7 Q359.5 253.9 367.7 254.5 Z M367.7 254.5 Q368.7 247.6 367.3 240.8 Q366.4 247.7 367.7 254.5 Z M365.5 251.6 Q354.6 251.2 343.9 253.8 Q354.9 254.2 365.5 251.6 Z M365.5 251.6 Q364.2 243.1 360.7 235.2 Q362.0 243.7 365.5 251.6 Z M363.2 249.3 Q353.6 248.1 344.1 249.8 Q353.7 251.0 363.2 249.3 Z M363.2 249.3 Q363.2 241.6 360.9 234.3 Q360.9 242.0 363.2 249.3 Z M360.8 247.6 Q352.1 247.4 343.9 250.3 Q352.6 250.4 360.8 247.6 Z M360.8 247.6 Q357.1 241.5 351.6 237.1 Q355.3 243.2 360.8 247.6 Z M358.4 246.5 Q349.1 250.7 341.7 257.7 Q351.0 253.5 358.4 246.5 Z M358.4 246.5 Q354.6 239.9 349.0 235.0 Q352.7 241.5 358.4 246.5 Z M355.8 246.0 Q347.0 253.0 340.7 262.3 Q349.5 255.3 355.8 246.0 Z M355.8 246.0 Q349.9 240.1 342.5 236.3 Q348.4 242.2 355.8 246.0 Z M353.2 246.1 Q346.0 251.2 341.3 258.6 Q348.5 253.5 353.2 246.1 Z M353.2 246.1 Q347.4 242.4 340.6 241.2 Q346.5 244.9 353.2 246.1 Z M350.6 246.8 Q343.7 253.2 339.7 261.7 Q346.6 255.3 350.6 246.8 Z M350.6 246.8 Q343.1 244.8 335.5 245.7 Q342.9 247.7 350.6 246.8 Z M347.8 248.1 Q343.4 253.9 342.3 261.0 Q346.7 255.3 347.8 248.1 Z M347.8 248.1 Q341.7 247.7 336.1 250.4 Q342.3 250.7 347.8 248.1 Z M345.0 250.0 Q341.4 254.2 341.1 259.8 Q344.7 255.6 345.0 250.0 Z M345.0 250.0 Q340.1 250.0 336.3 253.0 Q341.1 253.0 345.0 250.0 Z" fill="#2c4431"/><path d="M381.9 347.0 Q393.3 230.4 420.0 262.0" stroke="#283c2d" stroke-width=".9" fill="none"/><path d="M390.7 287.8 Q389.4 284.0 386.2 281.7 Q387.5 285.5 390.7 287.8 Z M390.7 287.8 Q394.7 286.4 397.1 283.0 Q393.1 284.4 390.7 287.8 Z M392.2 281.8 Q390.7 276.9 387.0 273.3 Q388.6 278.2 392.2 281.8 Z M392.2 281.8 Q397.9 280.9 402.4 277.4 Q396.8 278.4 392.2 281.8 Z M393.8 276.4 Q393.8 270.5 391.5 265.1 Q391.5 271.0 393.8 276.4 Z M393.8 276.4 Q400.2 274.6 405.3 270.5 Q399.0 272.3 393.8 276.4 Z M395.5 271.6 Q393.6 265.4 389.7 260.3 Q391.5 266.5 395.5 271.6 Z M395.5 271.6 Q402.2 269.4 407.6 264.8 Q400.9 267.1 395.5 271.6 Z M397.2 267.5 Q395.7 260.7 392.1 254.8 Q393.5 261.6 397.2 267.5 Z M397.2 267.5 Q404.4 265.0 410.5 260.3 Q403.2 262.7 397.2 267.5 Z M398.9 263.9 Q398.3 256.5 395.4 249.7 Q396.0 257.1 398.9 263.9 Z M398.9 263.9 Q407.8 263.8 416.2 261.0 Q407.3 261.1 398.9 263.9 Z M400.7 261.0 Q403.1 254.9 403.2 248.4 Q400.8 254.5 400.7 261.0 Z M400.7 261.0 Q408.3 260.2 415.2 256.9 Q407.6 257.6 400.7 261.0 Z M402.6 258.6 Q406.5 250.0 408.1 240.7 Q404.2 249.3 402.6 258.6 Z M402.6 258.6 Q414.3 261.1 426.2 260.6 Q414.5 258.1 402.6 258.6 Z M404.6 256.9 Q410.2 249.2 413.7 240.4 Q408.1 248.1 404.6 256.9 Z M404.6 256.9 Q416.1 260.0 428.0 260.0 Q416.5 257.0 404.6 256.9 Z M406.6 255.8 Q413.8 249.3 419.1 241.1 Q411.9 247.7 406.6 255.8 Z M406.6 255.8 Q417.6 261.7 429.8 264.6 Q418.7 258.7 406.6 255.8 Z M408.7 255.3 Q417.5 252.7 425.2 247.6 Q416.4 250.3 408.7 255.3 Z M408.7 255.3 Q417.0 263.3 427.3 268.6 Q418.9 260.6 408.7 255.3 Z M410.8 255.4 Q417.5 255.0 423.4 251.9 Q416.7 252.3 410.8 255.4 Z M410.8 255.4 Q413.6 263.5 419.5 269.8 Q416.7 261.7 410.8 255.4 Z M413.0 256.1 Q421.3 256.9 429.3 254.9 Q421.0 254.1 413.0 256.1 Z M413.0 256.1 Q416.9 265.6 423.7 273.1 Q419.9 263.7 413.0 256.1 Z M415.3 257.5 Q421.3 260.6 428.1 260.7 Q422.1 257.6 415.3 257.5 Z M415.3 257.5 Q414.8 265.5 418.0 272.8 Q418.4 264.8 415.3 257.5 Z M417.6 259.4 Q424.1 263.9 431.9 265.5 Q425.4 261.0 417.6 259.4 Z M417.6 259.4 Q417.9 268.4 421.7 276.6 Q421.4 267.6 417.6 259.4 Z M420.0 262.0 Q424.0 265.8 429.5 266.8 Q425.5 263.0 420.0 262.0 Z M420.0 262.0 Q418.0 268.0 419.7 274.0 Q421.7 268.0 420.0 262.0 Z" fill="#283c2d"/><path d="M379.6 347.0 Q370.7 260.0 350.0 290.0" stroke="#314b36" stroke-width=".9" fill="none"/><path d="M372.7 303.5 Q368.4 300.0 362.9 299.1 Q367.3 302.5 372.7 303.5 Z M372.7 303.5 Q376.3 299.9 377.8 295.2 Q374.2 298.7 372.7 303.5 Z M371.5 299.2 Q367.1 295.0 361.4 293.0 Q365.8 297.2 371.5 299.2 Z M371.5 299.2 Q374.4 294.4 375.0 288.9 Q372.2 293.7 371.5 299.2 Z M370.3 295.4 Q364.7 292.0 358.2 291.1 Q363.8 294.5 370.3 295.4 Z M370.3 295.4 Q372.5 290.1 372.3 284.4 Q370.1 289.7 370.3 295.4 Z M369.1 292.1 Q362.9 288.9 356.1 288.3 Q362.2 291.5 369.1 292.1 Z M369.1 292.1 Q371.1 286.5 370.9 280.7 Q368.8 286.2 369.1 292.1 Z M367.7 289.2 Q362.2 285.2 355.6 283.6 Q361.1 287.7 367.7 289.2 Z M367.7 289.2 Q369.9 283.6 369.8 277.6 Q367.6 283.2 367.7 289.2 Z M366.4 286.9 Q357.7 285.2 348.9 286.5 Q357.6 288.2 366.4 286.9 Z M366.4 286.9 Q368.7 280.1 368.7 273.0 Q366.4 279.8 366.4 286.9 Z M365.0 285.0 Q353.7 282.5 342.2 282.9 Q353.4 285.4 365.0 285.0 Z M365.0 285.0 Q363.1 275.7 359.0 267.1 Q360.9 276.4 365.0 285.0 Z M363.5 283.6 Q354.7 283.6 346.4 286.5 Q355.2 286.6 363.5 283.6 Z M363.5 283.6 Q362.5 276.9 359.2 270.9 Q360.2 277.6 363.5 283.6 Z M362.0 282.7 Q351.6 284.6 342.2 289.4 Q352.6 287.6 362.0 282.7 Z M362.0 282.7 Q357.3 275.9 350.9 270.6 Q355.5 277.5 362.0 282.7 Z M360.4 282.3 Q350.4 288.7 342.6 297.6 Q352.6 291.3 360.4 282.3 Z M360.4 282.3 Q353.8 276.2 345.7 272.3 Q352.3 278.4 360.4 282.3 Z M358.8 282.4 Q350.1 291.8 344.3 303.2 Q353.0 293.8 358.8 282.4 Z M358.8 282.4 Q348.6 280.2 338.2 280.8 Q348.4 283.0 358.8 282.4 Z M357.1 283.0 Q349.9 292.7 345.9 304.1 Q353.1 294.4 357.1 283.0 Z M357.1 283.0 Q347.2 281.9 337.3 283.8 Q347.3 284.8 357.1 283.0 Z M355.4 284.0 Q351.6 292.7 351.4 302.2 Q355.2 293.5 355.4 284.0 Z M355.4 284.0 Q347.3 285.1 340.2 289.3 Q348.3 288.1 355.4 284.0 Z M353.7 285.5 Q350.2 292.8 350.3 300.8 Q353.7 293.5 353.7 285.5 Z M353.7 285.5 Q346.7 287.3 341.3 292.0 Q348.2 290.2 353.7 285.5 Z M351.9 287.5 Q349.6 296.1 351.0 304.8 Q353.3 296.3 351.9 287.5 Z M351.9 287.5 Q344.3 290.0 338.5 295.4 Q346.0 292.9 351.9 287.5 Z M350.0 290.0 Q348.9 296.1 351.4 301.8 Q352.5 295.7 350.0 290.0 Z M350.0 290.0 Q344.6 291.4 340.9 295.6 Q346.3 294.2 350.0 290.0 Z" fill="#314b36"/><path d="M380.2 347.0 Q389.2 269.9 410.0 300.0" stroke="#223527" stroke-width=".9" fill="none"/><path d="M387.1 308.8 Q385.5 304.2 381.9 300.9 Q383.5 305.5 387.1 308.8 Z M387.1 308.8 Q391.9 306.9 395.3 303.0 Q390.4 304.8 387.1 308.8 Z M388.3 305.1 Q387.1 299.9 383.7 295.8 Q384.9 301.0 388.3 305.1 Z M388.3 305.1 Q394.3 304.5 399.5 301.3 Q393.5 301.9 388.3 305.1 Z M389.5 301.9 Q390.1 294.9 388.3 288.2 Q387.8 295.1 389.5 301.9 Z M389.5 301.9 Q397.2 299.8 403.7 295.2 Q396.0 297.3 389.5 301.9 Z M390.8 299.1 Q391.7 293.5 390.3 288.0 Q389.4 293.6 390.8 299.1 Z M390.8 299.1 Q397.7 299.5 404.2 297.2 Q397.3 296.7 390.8 299.1 Z M392.1 296.7 Q391.7 289.2 389.1 282.3 Q389.4 289.7 392.1 296.7 Z M392.1 296.7 Q401.0 296.1 409.2 292.7 Q400.3 293.4 392.1 296.7 Z M393.5 294.8 Q395.9 286.4 395.9 277.6 Q393.5 286.0 393.5 294.8 Z M393.5 294.8 Q404.1 294.8 414.3 292.0 Q403.7 292.0 393.5 294.8 Z M394.9 293.3 Q397.5 284.9 397.7 276.1 Q395.2 284.5 394.9 293.3 Z M394.9 293.3 Q405.8 294.7 416.6 293.2 Q405.8 291.8 394.9 293.3 Z M396.4 292.3 Q402.0 285.7 405.5 277.8 Q399.9 284.4 396.4 292.3 Z M396.4 292.3 Q406.6 296.3 417.6 297.4 Q407.4 293.3 396.4 292.3 Z M397.9 291.7 Q405.8 288.6 412.4 283.2 Q404.5 286.3 397.9 291.7 Z M397.9 291.7 Q406.4 297.9 416.4 301.2 Q407.9 295.0 397.9 291.7 Z M399.5 291.6 Q407.5 289.9 414.5 285.7 Q406.5 287.4 399.5 291.6 Z M399.5 291.6 Q405.1 300.4 413.3 306.9 Q407.7 298.1 399.5 291.6 Z M401.1 291.9 Q409.3 294.0 417.7 293.1 Q409.5 291.0 401.1 291.9 Z M401.1 291.9 Q405.2 301.0 412.1 308.1 Q408.1 299.0 401.1 291.9 Z M402.8 292.6 Q412.0 296.3 421.8 297.0 Q412.7 293.3 402.8 292.6 Z M402.8 292.6 Q405.8 303.7 412.1 313.3 Q409.1 302.2 402.8 292.6 Z M404.5 293.8 Q411.4 296.8 418.8 296.8 Q412.0 293.8 404.5 293.8 Z M404.5 293.8 Q404.7 302.6 408.5 310.6 Q408.3 301.8 404.5 293.8 Z M406.3 295.4 Q411.1 300.0 417.6 301.7 Q412.7 297.2 406.3 295.4 Z M406.3 295.4 Q405.7 302.8 408.7 309.6 Q409.3 302.2 406.3 295.4 Z M408.1 297.5 Q413.5 301.9 420.3 303.4 Q414.9 299.0 408.1 297.5 Z M408.1 297.5 Q407.6 305.3 410.6 312.6 Q411.2 304.7 408.1 297.5 Z M410.0 300.0 Q413.4 303.7 418.4 304.6 Q415.0 300.9 410.0 300.0 Z M410.0 300.0 Q408.3 305.4 410.3 310.7 Q412.0 305.3 410.0 300.0 Z" fill="#223527"/><path d="M381.0 347.0 Q384.3 288.5 392.0 230.0" stroke="#3f5c44" stroke-width=".9" fill="none"/><path d="M383.5 309.8 Q381.3 305.9 377.3 303.9 Q379.6 307.8 383.5 309.8 Z M383.5 309.8 Q387.4 307.6 389.5 303.8 Q385.6 305.9 383.5 309.8 Z M384.0 304.5 Q381.9 299.2 377.8 295.4 Q379.9 300.6 384.0 304.5 Z M384.0 304.5 Q388.9 301.5 392.2 296.7 Q387.2 299.7 384.0 304.5 Z M384.4 299.1 Q379.9 293.3 373.8 289.3 Q378.2 295.1 384.4 299.1 Z M384.4 299.1 Q390.5 295.0 394.8 289.1 Q388.8 293.2 384.4 299.1 Z M384.9 293.8 Q381.8 288.4 376.8 284.7 Q379.9 290.1 384.9 293.8 Z M384.9 293.8 Q390.0 290.2 393.3 284.9 Q388.2 288.5 384.9 293.8 Z M385.4 288.5 Q382.0 283.3 376.8 279.9 Q380.2 285.1 385.4 288.5 Z M385.4 288.5 Q390.8 285.3 394.5 280.3 Q389.1 283.4 385.4 288.5 Z M385.9 283.2 Q381.9 275.2 375.9 268.6 Q379.9 276.6 385.9 283.2 Z M385.9 283.2 Q394.5 279.2 401.7 273.0 Q393.1 277.0 385.9 283.2 Z M386.4 277.9 Q383.6 270.4 378.8 264.0 Q381.5 271.5 386.4 277.9 Z M386.4 277.9 Q392.6 272.4 396.8 265.4 Q390.7 270.9 386.4 277.9 Z M387.0 272.5 Q382.6 265.1 376.3 259.3 Q380.7 266.7 387.0 272.5 Z M387.0 272.5 Q395.3 268.9 402.3 263.0 Q393.9 266.7 387.0 272.5 Z M387.5 267.2 Q384.2 261.0 379.0 256.3 Q382.3 262.5 387.5 267.2 Z M387.5 267.2 Q393.6 263.4 398.1 257.7 Q391.9 261.5 387.5 267.2 Z M388.1 261.9 Q385.5 254.3 380.7 247.9 Q383.3 255.4 388.1 261.9 Z M388.1 261.9 Q395.0 257.1 400.1 250.4 Q393.2 255.3 388.1 261.9 Z M388.7 256.6 Q384.1 250.0 377.7 245.2 Q382.3 251.7 388.7 256.6 Z M388.7 256.6 Q395.0 251.6 399.5 245.0 Q393.2 249.9 388.7 256.6 Z M389.3 251.3 Q385.5 245.0 379.8 240.3 Q383.6 246.6 389.3 251.3 Z M389.3 251.3 Q396.7 248.6 402.7 243.6 Q395.4 246.3 389.3 251.3 Z M390.0 246.0 Q388.5 240.3 384.9 235.8 Q386.4 241.4 390.0 246.0 Z M390.0 246.0 Q396.0 244.0 400.7 239.7 Q394.7 241.7 390.0 246.0 Z M390.6 240.6 Q387.8 234.2 382.9 229.2 Q385.8 235.6 390.6 240.6 Z M390.6 240.6 Q396.3 236.3 400.1 230.2 Q394.5 234.6 390.6 240.6 Z M391.3 235.3 Q389.3 229.7 385.2 225.4 Q387.2 231.0 391.3 235.3 Z M391.3 235.3 Q397.4 233.3 402.1 229.0 Q396.1 231.0 391.3 235.3 Z M392.0 230.0 Q390.1 225.9 386.3 223.4 Q388.2 227.5 392.0 230.0 Z M392.0 230.0 Q396.0 227.8 398.3 223.7 Q394.2 226.0 392.0 230.0 Z" fill="#3f5c44"/><path d="M388.0 347.0 Q383.2 304.5 372.0 262.0" stroke="#2c4431" stroke-width=".9" fill="none"/><path d="M384.3 320.0 Q381.8 316.4 377.8 314.8 Q380.2 318.4 384.3 320.0 Z M384.3 320.0 Q387.8 317.6 389.4 313.7 Q385.9 316.1 384.3 320.0 Z M383.7 316.1 Q379.9 311.0 374.4 307.7 Q378.2 312.8 383.7 316.1 Z M383.7 316.1 Q387.3 311.2 388.8 305.4 Q385.1 310.2 383.7 316.1 Z M383.0 312.2 Q378.7 307.6 372.8 305.1 Q377.2 309.7 383.0 312.2 Z M383.0 312.2 Q386.8 307.7 388.5 302.0 Q384.7 306.5 383.0 312.2 Z M382.3 308.4 Q378.5 303.5 373.1 300.6 Q376.9 305.5 382.3 308.4 Z M382.3 308.4 Q386.7 304.3 389.0 298.9 Q384.7 302.9 382.3 308.4 Z M381.6 304.5 Q376.1 297.5 368.8 292.3 Q374.3 299.3 381.6 304.5 Z M381.6 304.5 Q387.1 297.9 390.5 290.0 Q385.0 296.6 381.6 304.5 Z M380.9 300.6 Q375.2 293.6 367.9 288.4 Q373.5 295.4 380.9 300.6 Z M380.9 300.6 Q387.0 294.4 391.3 286.7 Q385.1 292.9 380.9 300.6 Z M380.1 296.8 Q374.5 291.8 367.6 289.0 Q373.1 294.0 380.1 296.8 Z M380.1 296.8 Q384.6 291.5 387.0 285.0 Q382.5 290.3 380.1 296.8 Z M379.3 292.9 Q372.8 286.4 364.7 281.9 Q371.2 288.4 379.3 292.9 Z M379.3 292.9 Q384.2 285.8 387.0 277.7 Q382.1 284.7 379.3 292.9 Z M378.5 289.0 Q371.8 282.9 363.6 278.9 Q370.3 285.0 378.5 289.0 Z M378.5 289.0 Q383.9 282.5 387.3 274.6 Q381.9 281.2 378.5 289.0 Z M377.6 285.2 Q371.4 279.5 363.7 275.9 Q370.0 281.6 377.6 285.2 Z M377.6 285.2 Q381.0 278.2 382.2 270.6 Q378.8 277.5 377.6 285.2 Z M376.8 281.3 Q370.2 275.6 362.2 272.2 Q368.8 277.8 376.8 281.3 Z M376.8 281.3 Q380.8 274.4 382.5 266.7 Q378.5 273.6 376.8 281.3 Z M375.9 277.5 Q368.7 272.5 360.3 269.8 Q367.5 274.8 375.9 277.5 Z M375.9 277.5 Q380.3 271.0 382.7 263.4 Q378.2 269.9 375.9 277.5 Z M374.9 273.6 Q370.4 269.3 364.5 267.2 Q369.1 271.5 374.9 273.6 Z M374.9 273.6 Q377.8 268.7 378.3 263.0 Q375.5 267.9 374.9 273.6 Z M374.0 269.7 Q370.2 265.8 365.0 264.1 Q368.8 268.0 374.0 269.7 Z M374.0 269.7 Q376.5 265.5 376.8 260.5 Q374.3 264.8 374.0 269.7 Z M373.0 265.9 Q369.1 262.1 363.9 260.6 Q367.8 264.4 373.0 265.9 Z M373.0 265.9 Q375.4 261.6 375.5 256.7 Q373.1 261.0 373.0 265.9 Z M372.0 262.0 Q369.2 258.2 364.9 256.4 Q367.6 260.2 372.0 262.0 Z M372.0 262.0 Q375.2 258.9 376.3 254.6 Q373.1 257.7 372.0 262.0 Z" fill="#2c4431"/><path d="M387.9 347.0 Q402.9 222.9 438.0 250.0" stroke="#283c2d" stroke-width=".9" fill="none"/><path d="M399.5 283.3 Q399.1 279.6 396.6 276.7 Q396.9 280.5 399.5 283.3 Z M399.5 283.3 Q403.5 282.4 406.2 279.3 Q402.2 280.2 399.5 283.3 Z M401.5 276.7 Q401.2 270.5 398.7 264.9 Q398.9 271.1 401.5 276.7 Z M401.5 276.7 Q408.5 275.7 414.7 272.0 Q407.6 273.1 401.5 276.7 Z M403.5 270.8 Q401.9 263.7 398.0 257.5 Q399.7 264.6 403.5 270.8 Z M403.5 270.8 Q411.8 269.6 419.3 265.8 Q411.0 267.0 403.5 270.8 Z M405.7 265.4 Q404.4 259.6 400.9 254.7 Q402.2 260.6 405.7 265.4 Z M405.7 265.4 Q412.4 264.4 418.2 260.8 Q411.5 261.8 405.7 265.4 Z M407.9 260.7 Q406.4 252.2 402.6 244.5 Q404.2 253.0 407.9 260.7 Z M407.9 260.7 Q417.4 258.3 425.8 253.4 Q416.4 255.8 407.9 260.7 Z M410.3 256.6 Q409.6 248.1 406.6 240.1 Q407.3 248.6 410.3 256.6 Z M410.3 256.6 Q419.9 254.7 428.7 250.2 Q419.0 252.1 410.3 256.6 Z M412.7 253.1 Q413.6 245.7 412.3 238.4 Q411.3 245.8 412.7 253.1 Z M412.7 253.1 Q421.6 252.8 429.9 249.7 Q421.0 250.0 412.7 253.1 Z M415.1 250.3 Q419.2 241.8 421.0 232.6 Q417.0 241.1 415.1 250.3 Z M415.1 250.3 Q426.7 253.3 438.7 253.3 Q427.1 250.3 415.1 250.3 Z M417.7 248.1 Q421.7 242.3 423.5 235.5 Q419.5 241.3 417.7 248.1 Z M417.7 248.1 Q425.9 252.3 435.0 253.5 Q426.8 249.3 417.7 248.1 Z M420.4 246.5 Q426.2 242.0 430.2 235.8 Q424.4 240.3 420.4 246.5 Z M420.4 246.5 Q428.4 251.2 437.6 253.0 Q429.6 248.3 420.4 246.5 Z M423.1 245.5 Q430.5 242.9 436.6 238.1 Q429.2 240.6 423.1 245.5 Z M423.1 245.5 Q430.8 251.2 440.0 254.1 Q432.3 248.3 423.1 245.5 Z M425.9 245.1 Q432.2 242.7 437.2 238.1 Q430.9 240.5 425.9 245.1 Z M425.9 245.1 Q430.8 252.6 438.2 257.7 Q433.3 250.2 425.9 245.1 Z M428.8 245.4 Q437.9 246.1 446.7 244.0 Q437.6 243.3 428.8 245.4 Z M428.8 245.4 Q433.3 255.7 440.7 264.0 Q436.2 253.8 428.8 245.4 Z M431.8 246.3 Q437.7 247.8 443.6 246.3 Q437.7 244.8 431.8 246.3 Z M431.8 246.3 Q433.3 253.6 438.1 259.4 Q436.6 252.1 431.8 246.3 Z M434.9 247.8 Q440.5 249.6 446.3 248.4 Q440.6 246.6 434.9 247.8 Z M434.9 247.8 Q435.5 255.0 439.6 261.0 Q438.9 253.8 434.9 247.8 Z M438.0 250.0 Q443.0 252.4 448.4 251.7 Q443.5 249.4 438.0 250.0 Z M438.0 250.0 Q438.5 256.5 442.4 261.8 Q441.9 255.3 438.0 250.0 Z" fill="#283c2d"/><path d="M390.9 347.0 Q372.6 233.7 330.0 262.0" stroke="#314b36" stroke-width=".9" fill="none"/><path d="M376.8 289.2 Q372.6 286.5 367.6 286.3 Q371.8 289.1 376.8 289.2 Z M376.8 289.2 Q378.8 285.4 378.5 281.1 Q376.5 284.9 376.8 289.2 Z M374.4 283.3 Q368.1 279.8 360.8 278.8 Q367.2 282.3 374.4 283.3 Z M374.4 283.3 Q376.7 277.5 376.7 271.2 Q374.4 277.1 374.4 283.3 Z M371.9 278.0 Q365.0 274.4 357.3 273.4 Q364.2 277.0 371.9 278.0 Z M371.9 278.0 Q373.3 271.5 372.4 265.0 Q371.0 271.4 371.9 278.0 Z M369.3 273.3 Q361.9 269.1 353.7 267.4 Q361.0 271.6 369.3 273.3 Z M369.3 273.3 Q371.8 266.4 372.1 259.1 Q369.5 265.9 369.3 273.3 Z M366.5 269.1 Q358.8 267.0 350.9 267.7 Q358.6 269.9 366.5 269.1 Z M366.5 269.1 Q368.7 262.9 368.6 256.4 Q366.4 262.6 366.5 269.1 Z M363.7 265.5 Q353.9 264.2 344.1 265.9 Q354.0 267.2 363.7 265.5 Z M363.7 265.5 Q363.1 257.6 360.2 250.2 Q360.8 258.1 363.7 265.5 Z M360.8 262.5 Q353.2 260.7 345.4 261.7 Q353.0 263.6 360.8 262.5 Z M360.8 262.5 Q359.2 256.2 355.5 250.9 Q357.0 257.2 360.8 262.5 Z M357.8 260.1 Q346.8 260.8 336.5 264.4 Q347.4 263.8 357.8 260.1 Z M357.8 260.1 Q355.0 252.0 350.2 244.9 Q352.9 253.1 357.8 260.1 Z M354.7 258.3 Q342.5 259.9 331.2 264.5 Q343.3 262.9 354.7 258.3 Z M354.7 258.3 Q348.9 250.4 341.3 244.2 Q347.1 252.1 354.7 258.3 Z M351.4 257.1 Q340.5 259.8 330.7 265.4 Q341.7 262.7 351.4 257.1 Z M351.4 257.1 Q344.3 251.3 335.8 247.7 Q342.9 253.5 351.4 257.1 Z M348.1 256.5 Q338.9 260.3 331.5 267.0 Q340.7 263.1 348.1 256.5 Z M348.1 256.5 Q341.7 251.7 334.0 249.4 Q340.5 254.1 348.1 256.5 Z M344.7 256.4 Q337.3 262.0 332.6 269.9 Q339.9 264.3 344.7 256.4 Z M344.7 256.4 Q338.5 252.7 331.3 251.5 Q337.6 255.2 344.7 256.4 Z M341.2 256.9 Q335.1 262.9 331.9 270.9 Q338.0 264.9 341.2 256.9 Z M341.2 256.9 Q334.7 254.5 327.9 254.9 Q334.3 257.3 341.2 256.9 Z M337.5 258.0 Q333.1 264.1 331.9 271.6 Q336.4 265.5 337.5 258.0 Z M337.5 258.0 Q331.4 256.9 325.4 258.8 Q331.6 259.9 337.5 258.0 Z M333.8 259.7 Q329.2 264.4 327.8 270.7 Q332.4 266.1 333.8 259.7 Z M333.8 259.7 Q328.5 258.6 323.4 260.4 Q328.7 261.5 333.8 259.7 Z M330.0 262.0 Q326.5 268.4 326.6 275.7 Q330.0 269.3 330.0 262.0 Z M330.0 262.0 Q323.8 261.9 318.4 264.7 Q324.5 264.9 330.0 262.0 Z" fill="#314b36"/><path d="M380 349 L377 300 M384 349 L384 292 M389 349 L394 300 M382 349 L368 306 M387 349 L404 310 M379 349 L360 312" stroke="#6b8a58" stroke-width="1.1" fill="none"/><polygon points="161.5,324.0 248.0,320.0 256.0,322.0 335.5,320.0 338.0,362.0 160.0,362.0" fill="#bdbbb5" /><polygon points="308.0,322.0 336.0,318.0 341.0,345.0 312.0,350.0" fill="#dcdad5" /><line x1="252.0" y1="321.0" x2="250.5" y2="362.0" stroke="#8f8d88" stroke-width="1.6" /><rect x="141.0" y="340.0" width="18.0" height="62.0" fill="#cfcdc7" rx="4"/><rect x="341.0" y="338.0" width="12.0" height="64.0" fill="#b0aea8" rx="3"/><rect x="156.0" y="361.0" width="188.0" height="20.0" fill="#c4c2bc" rx="3"/><rect x="146.0" y="379.0" width="207.0" height="23.0" fill="#b3b1ab" rx="3"/><line x1="156.0" y1="380.0" x2="344.0" y2="380.0" stroke="#9f9d97" stroke-width="1" /><polygon points="151.2,328.0 193.5,327.0 197.0,361.0 162.0,366.0" fill="#c77a3d" /><polygon points="188.0,331.0 203.0,327.0 206.0,340.0 192.0,344.0" fill="#e0a77b" /><polygon points="190.0,340.0 250.0,334.0 252.0,364.0 198.0,367.0" fill="#e7e1d3" /><path d="M194.4 345.1 h5.2 M203.9 345.1 h5.2 M213.4 345.1 h5.2 M222.9 345.1 h5.2 M232.4 345.1 h5.2 M241.9 345.1 h5.2 M197.3 349.3 h5.2 M206.8 349.3 h5.2 M216.3 349.3 h5.2 M225.8 349.3 h5.2 M235.3 349.3 h5.2 M244.8 349.3 h5.2 M194.4 353.5 h5.2 M203.9 353.5 h5.2 M213.4 353.5 h5.2 M222.9 353.5 h5.2 M232.4 353.5 h5.2 M241.9 353.5 h5.2 M197.3 357.7 h5.2 M206.8 357.7 h5.2 M216.3 357.7 h5.2 M225.8 357.7 h5.2 M235.3 357.7 h5.2 M244.8 357.7 h5.2 M194.4 361.9 h5.2 M203.9 361.9 h5.2 M213.4 361.9 h5.2 M222.9 361.9 h5.2 M232.4 361.9 h5.2 M241.9 361.9 h5.2" stroke="#4f4a45" stroke-width="1.6" fill="none"/><polygon points="305.2,325.4 345.9,328.0 339.1,366.0 293.4,361.0" fill="#ba6a3b" /><polygon points="252.5,362.6 271.5,362.6 269.5,378.0 254.5,378.0" fill="#dc9f78" /><ellipse cx="263.0" cy="352.1" rx="5.0" ry="2.6" fill="#7d4a63" transform="rotate(22 263.0 352.1)"/><ellipse cx="269.1" cy="343.9" rx="5.0" ry="2.6" fill="#d9c9d3" transform="rotate(16 269.1 343.9)"/><ellipse cx="258.7" cy="348.5" rx="5.0" ry="2.6" fill="#5d3a55" transform="rotate(59 258.7 348.5)"/><ellipse cx="255.2" cy="351.5" rx="5.0" ry="2.6" fill="#c7b3c4" transform="rotate(-39 255.2 351.5)"/><ellipse cx="263.6" cy="351.7" rx="5.0" ry="2.6" fill="#7d4a63" transform="rotate(8 263.6 351.7)"/><ellipse cx="265.9" cy="352.3" rx="5.0" ry="2.6" fill="#d9c9d3" transform="rotate(-40 265.9 352.3)"/><ellipse cx="274.6" cy="354.8" rx="5.0" ry="2.6" fill="#5d3a55" transform="rotate(-59 274.6 354.8)"/><ellipse cx="255.0" cy="347.7" rx="5.0" ry="2.6" fill="#c7b3c4" transform="rotate(-35 255.0 347.7)"/><ellipse cx="265.0" cy="353.6" rx="5.0" ry="2.6" fill="#7d4a63" transform="rotate(17 265.0 353.6)"/><ellipse cx="256.5" cy="346.9" rx="5.0" ry="2.6" fill="#d9c9d3" transform="rotate(-7 256.5 346.9)"/><ellipse cx="264.1" cy="350.4" rx="5.0" ry="2.6" fill="#5d3a55" transform="rotate(-21 264.1 350.4)"/><ellipse cx="272.2" cy="354.4" rx="5.0" ry="2.6" fill="#c7b3c4" transform="rotate(53 272.2 354.4)"/><ellipse cx="261.8" cy="347.3" rx="5.0" ry="2.6" fill="#7d4a63" transform="rotate(8 261.8 347.3)"/><ellipse cx="276.5" cy="352.3" rx="5.0" ry="2.6" fill="#d9c9d3" transform="rotate(35 276.5 352.3)"/><rect x="233.0" y="350.0" width="6.0" height="28.0" fill="#f1f1ee" opacity=".8" rx="2"/><rect x="241.0" y="356.0" width="6.0" height="22.0" fill="#ededea" opacity=".75" rx="2"/><rect x="0.0" y="400.0" width="554.0" height="156.0" fill="url(#p7_lvFl)" /><rect x="0.0" y="400.0" width="554.0" height="156.0" fill="url(#p7_lvHb)" /><polygon points="130.0,402.0 77.0,422.0 0.0,452.0 0.0,497.5 507.0,497.5 479.0,463.5 425.0,402.0" fill="#ebe9e0" /><rect x="0.0" y="400.0" width="130.0" height="6.0" fill="#e9e5db" /><line x1="159.0" y1="400.0" x2="158.0" y2="415.0" stroke="#2a2622" stroke-width="3" /><line x1="349.0" y1="400.0" x2="350.0" y2="415.0" stroke="#2a2622" stroke-width="3" /><rect x="62.0" y="376.0" width="74.0" height="46.0" fill="#efece5" rx="12"/><ellipse cx="99.0" cy="420.0" rx="36.0" ry="5.0" fill="#d9d5ca" opacity=".6"/><line x1="167.3" y1="418.2" x2="148.7" y2="440.2" stroke="#9a3f25" stroke-width="4" /><line x1="188.4" y1="414.0" x2="177.4" y2="427.5" stroke="#9a3f25" stroke-width="3.5" /><line x1="229.9" y1="416.5" x2="293.4" y2="416.5" stroke="#9a3f25" stroke-width="2.4" /><rect x="207.9" y="428.4" width="13.5" height="7.6" fill="#9a3f25" /><rect x="232.4" y="433.5" width="6.8" height="4.2" fill="#9a3f25" /><path d="M323.900 413.200 H337.400 A6.800 7.600 0 0 1 323.900 413.200 Z" fill="#9a3f25"/><line x1="325.5" y1="436.0" x2="351.8" y2="436.0" stroke="#9a3f25" stroke-width="1.5" /><line x1="382.2" y1="422.8" x2="417.8" y2="422.8" stroke="#9a3f25" stroke-width="2.5" /><line x1="381.0" y1="427.5" x2="408.0" y2="427.5" stroke="#9a3f25" stroke-width="1.4" /><line x1="229.0" y1="450.9" x2="278.1" y2="450.9" stroke="#9a3f25" stroke-width="2" /><line x1="219.8" y1="460.6" x2="290.8" y2="460.6" stroke="#9a3f25" stroke-width="3" /><rect x="138.5" y="460.6" width="23.7" height="4.2" fill="#9a3f25" /><line x1="379.7" y1="448.7" x2="393.2" y2="467.3" stroke="#9a3f25" stroke-width="4" /><line x1="290.8" y1="479.0" x2="358.5" y2="480.5" stroke="#9a3f25" stroke-width="4.2" stroke-dasharray="3 3.2"/><line x1="148.0" y1="487.0" x2="166.0" y2="487.0" stroke="#9a3f25" stroke-width="10" stroke-dasharray="2 3"/><line x1="420.3" y1="486.5" x2="462.6" y2="487.5" stroke="#9a3f25" stroke-width="3" stroke-dasharray="3 4" opacity=".8"/><rect x="414.4" y="449.5" width="8.5" height="3.5" fill="#9a3f25" /><line x1="435.6" y1="470.7" x2="470.0" y2="470.7" stroke="#9a3f25" stroke-width="1.4" /><line x1="92.0" y1="440.0" x2="106.0" y2="440.0" stroke="#9a3f25" stroke-width="1.2" opacity=".5"/><line x1="91.5" y1="466.0" x2="95.0" y2="462.0" stroke="#9a3f25" stroke-width="3" /><polygon points="405.0,332.0 425.0,323.0 476.0,323.0 478.0,420.0 430.0,414.0 430.0,375.0" fill="#edeade" /><polygon points="364.0,352.0 395.0,345.0 432.0,376.0 431.0,414.0 375.0,406.0 359.5,396.0" fill="#e9e4d8" /><polygon points="359.5,380.0 431.0,396.0 431.0,414.0 375.0,406.0 359.5,396.0" fill="#d8d3c6" /><polygon points="356.0,374.0 368.0,372.0 368.0,392.0 356.0,390.0" fill="#e5e1d6" /><polygon points="388.0,348.0 452.0,342.0 458.0,374.0 398.0,378.0" fill="#e6e0d1" /><path d="M393.5 352.4 h5.5 M403.5 352.4 h5.5 M413.5 352.4 h5.5 M423.5 352.4 h5.5 M433.5 352.4 h5.5 M443.5 352.4 h5.5 M396.5 357.2 h5.5 M406.5 357.2 h5.5 M416.5 357.2 h5.5 M426.5 357.2 h5.5 M436.5 357.2 h5.5 M446.5 357.2 h5.5 M393.5 362.0 h5.5 M403.5 362.0 h5.5 M413.5 362.0 h5.5 M423.5 362.0 h5.5 M433.5 362.0 h5.5 M443.5 362.0 h5.5 M396.5 366.8 h5.5 M406.5 366.8 h5.5 M416.5 366.8 h5.5 M426.5 366.8 h5.5 M436.5 366.8 h5.5 M446.5 366.8 h5.5 M393.5 371.6 h5.5 M403.5 371.6 h5.5 M413.5 371.6 h5.5 M423.5 371.6 h5.5 M433.5 371.6 h5.5 M443.5 371.6 h5.5" stroke="#4f4a45" stroke-width="1.5" fill="none"/><line x1="361.0" y1="403.9" x2="357.7" y2="431.0" stroke="#a1582e" stroke-width="2.6" /><line x1="427.0" y1="409.0" x2="424.5" y2="456.3" stroke="#a1582e" stroke-width="2.8" /><line x1="468.9" y1="409.0" x2="472.0" y2="440.0" stroke="#a1582e" stroke-width="2.4" /><polygon points="362.0,404.0 430.0,414.0 400.0,418.0" fill="#4d4038" opacity=".55"/><rect x="470.0" y="330.0" width="84.0" height="80.0" fill="#e9e2d1" /><rect x="500.0" y="330.0" width="54.0" height="130.0" fill="#e8e1cf" /><line x1="494.0" y1="330.0" x2="494.0" y2="470.0" stroke="#2d2a27" stroke-width="3" /><line x1="527.0" y1="330.0" x2="527.0" y2="480.0" stroke="#2d2a27" stroke-width="3" /><line x1="464.0" y1="448.5" x2="527.0" y2="448.5" stroke="#2d2a27" stroke-width="2.4" /><polygon points="428.7,430.0 464.4,430.0 462.0,470.0 431.0,470.0" fill="#dacfb6" /><ellipse cx="446.5" cy="430.0" rx="17.8" ry="4.0" fill="#cfc3a6" /><polygon points="429.8,431.0 434.2,431.0 417.6,348.2" fill="#5f6f2d" /><polygon points="432.8,431.0 437.2,431.0 422.8,348.0" fill="#8f9a3f" /><polygon points="435.8,431.0 440.2,431.0 430.4,347.5" fill="#4d5f2a" /><polygon points="438.8,431.0 443.2,431.0 435.2,337.9" fill="#b5b458" /><polygon points="441.8,431.0 446.2,431.0 442.4,366.0" fill="#6f7f35" /><polygon points="444.8,431.0 449.2,431.0 448.8,335.5" fill="#5f6f2d" /><polygon points="447.8,431.0 452.2,431.0 451.4,354.4" fill="#8f9a3f" /><polygon points="450.8,431.0 455.2,431.0 460.1,360.4" fill="#4d5f2a" /><polygon points="453.8,431.0 458.2,431.0 467.3,375.9" fill="#b5b458" /><polygon points="456.8,431.0 461.2,431.0 471.0,378.1" fill="#6f7f35" /><polygon points="459.8,431.0 464.2,431.0 479.6,348.4" fill="#5f6f2d" /><polygon points="197.5,376.0 317.5,376.0 328.9,404.7 174.0,404.7" fill="url(#p7_lvGl)" /><polygon points="205.0,380.0 240.0,380.0 225.0,402.0 182.0,402.0" fill="#dedbd6" opacity=".7"/><polygon points="290.0,380.0 312.0,380.0 322.0,402.0 300.0,402.0" fill="#b9826a" opacity=".55"/><polygon points="219.5,379.0 286.5,379.0 286.5,389.0 262.0,395.0 219.5,388.0" fill="#2a2725" /><polygon points="262.0,395.0 286.5,389.0 286.5,392.0 262.0,398.0" fill="#bcb6ad" /><polygon points="197.5,376.0 317.5,376.0 328.9,404.7 174.0,404.7" fill="none" stroke="#2b2724" stroke-width="2.4"/><line x1="174.9" y1="404.7" x2="174.9" y2="467.8" stroke="#2b2724" stroke-width="2.2" /><line x1="328.5" y1="404.7" x2="328.5" y2="467.8" stroke="#2b2724" stroke-width="2.2" /><line x1="175.0" y1="444.0" x2="328.5" y2="444.0" stroke="#2b2724" stroke-width="2" /><line x1="197.2" y1="404.7" x2="197.2" y2="426.0" stroke="#2b2724" stroke-width="1.7" /><line x1="317.1" y1="404.7" x2="317.1" y2="426.0" stroke="#2b2724" stroke-width="1.7" /><line x1="175.0" y1="444.0" x2="197.2" y2="412.0" stroke="#5a5550" stroke-width="1.1" /><line x1="328.5" y1="444.0" x2="317.1" y2="412.0" stroke="#5a5550" stroke-width="1.1" /></svg></div><div class="photo" style="left:564px;top:-193px;width:370.5px;height:556px;"><svg viewBox="33.50 0.00 371.00 556.00" preserveAspectRatio="none"><defs><linearGradient id="p8_stW" x1="0" y1="0" x2="0" y2="1"><stop offset="0" stop-color="#cbc6bf"/><stop offset=".45" stop-color="#d2cdc6"/><stop offset=".8" stop-color="#dfdbd5"/><stop offset="1" stop-color="#dcd8d2"/></linearGradient><linearGradient id="p8_stC" x1="0" y1="0" x2=".25" y2="1"><stop offset="0" stop-color="#d9d7d4"/><stop offset=".38" stop-color="#b9b5b1"/><stop offset=".55" stop-color="#b2aeaa"/><stop offset="1" stop-color="#c6c3bf"/></linearGradient><linearGradient id="p8_stF" x1="0" y1="0" x2="0" y2="1"><stop offset="0" stop-color="#c2beb8"/><stop offset="1" stop-color="#a39d97"/></linearGradient><linearGradient id="p8_stY" x1="0" y1="0" x2="1" y2="0"><stop offset="0" stop-color="#f4b83f"/><stop offset=".6" stop-color="#efa53c"/><stop offset="1" stop-color="#dc7f3a"/></linearGradient><linearGradient id="p8_stSe" x1="0" y1="0" x2="1" y2="0"><stop offset="0" stop-color="#6f8a84"/><stop offset=".14" stop-color="#8aa69f"/><stop offset=".4" stop-color="#637d77"/><stop offset="1" stop-color="#536a65"/></linearGradient><filter id="p8_stB" x="-30%" y="-30%" width="160%" height="160%"><feGaussianBlur stdDeviation="9"/></filter><filter id="p8_stB2" x="-30%" y="-30%" width="160%" height="160%"><feGaussianBlur stdDeviation="4"/></filter></defs><rect x="0.0" y="0.0" width="438.0" height="556.0" fill="url(#p8_stW)" /><g filter="url(#p8_stB)" opacity=".55"><ellipse cx="175.0" cy="226.0" rx="70.0" ry="16.0" fill="#85807a" transform="rotate(24 175 226)"/><ellipse cx="215.0" cy="200.0" rx="40.0" ry="14.0" fill="#8a857f" transform="rotate(30 215 200)"/><ellipse cx="185.0" cy="282.0" rx="70.0" ry="11.0" fill="#8f8a84" transform="rotate(20 185 282)"/><ellipse cx="190.0" cy="318.0" rx="65.0" ry="9.0" fill="#948f89" transform="rotate(14 190 318)"/><ellipse cx="100.0" cy="300.0" rx="40.0" ry="26.0" fill="#9a958f" /></g><g filter="url(#p8_stB2)" opacity=".62"><ellipse cx="78.0" cy="222.0" rx="30.0" ry="26.0" fill="#555a50" /><ellipse cx="96.0" cy="255.0" rx="32.0" ry="30.0" fill="#4f544a" /><ellipse cx="72.0" cy="275.0" rx="24.0" ry="26.0" fill="#555a50" /><ellipse cx="104.0" cy="288.0" rx="24.0" ry="20.0" fill="#555a50" /><ellipse cx="60.0" cy="322.0" rx="15.0" ry="24.0" fill="#5a5f55" /><ellipse cx="64.0" cy="197.0" rx="18.0" ry="9.0" fill="#5a5f55" /></g><path d="M76.8 235.6 l-4.5 4.8 M69.2 209.9 l8.0 0.7 M74.1 228.5 l5.8 -0.2 M86.4 198.5 l-2.5 -3.0 M55.3 195.4 l-7.4 -1.1 M71.2 208.8 l0.3 -6.5 M73.2 219.7 l3.9 -4.4 M69.2 189.3 l-1.9 -8.3 M52.4 230.4 l-8.1 2.9 M82.2 209.0 l2.8 3.2 M95.6 211.0 l-3.4 -3.4 M55.1 214.2 l-3.9 5.2 M48.7 201.6 l-3.6 -7.8 M94.7 193.1 l-1.9 -3.5 M95.1 193.9 l5.3 -3.6 M71.7 202.5 l3.2 -5.6 M73.2 221.9 l5.4 -7.1 M99.3 228.2 l-3.3 2.1 M67.4 238.6 l2.3 -2.3 M69.9 211.1 l-1.0 -4.9 M98.2 196.1 l-9.0 -0.3 M71.7 222.2 l-2.6 -1.9 M81.6 231.9 l-3.0 -2.5 M103.8 221.9 l-3.4 8.1 M90.7 204.6 l-5.9 1.5 M59.7 198.0 l-6.3 -2.4 M96.2 207.7 l-6.6 3.1 M76.4 230.3 l6.1 -0.9 M71.7 214.1 l-5.6 3.3 M99.9 217.8 l-2.3 -2.5 M59.8 201.3 l-2.2 -4.6 M67.7 191.8 l3.3 0.5 M60.9 190.4 l-0.0 5.7 M59.9 206.3 l-3.2 3.7 M58.2 230.8 l-1.6 5.0 M75.7 210.5 l-6.7 -3.1 M69.4 227.3 l1.5 -4.2 M83.1 232.1 l-1.2 -3.4 M66.9 229.6 l2.8 -4.9 M83.1 205.9 l-3.6 5.9 M91.1 202.6 l0.6 3.7 M61.3 212.7 l2.8 -7.5 M81.8 228.5 l2.4 -6.4 M81.5 199.6 l3.3 3.5 M79.5 201.0 l-3.1 4.5 M57.1 223.7 l3.5 -1.9 M106.1 215.8 l6.5 -6.1 M46.4 225.9 l3.9 -1.9 M74.2 189.4 l-3.2 -5.2 M70.5 230.9 l0.5 3.4 M60.4 207.1 l1.2 -3.0 M96.9 201.7 l7.4 -3.9 M94.6 202.5 l7.4 0.6 M83.3 228.5 l-3.2 -5.3 M48.4 229.0 l-3.8 -3.3 M74.5 241.0 l-7.6 1.1 M66.5 225.0 l-7.7 -1.7 M88.5 236.9 l6.9 -3.7 M76.2 212.8 l-5.6 -5.9 M90.9 219.5 l-0.7 6.1 M55.5 224.0 l0.5 -3.0 M85.7 218.4 l2.4 2.4 M104.2 210.9 l5.2 3.1 M67.8 229.4 l-4.1 5.5 M58.6 206.3 l1.8 4.6 M92.0 229.6 l-1.1 -5.2 M86.9 220.7 l-4.6 4.7 M79.0 198.1 l2.1 -6.4 M57.2 222.1 l-7.2 0.2 M51.6 226.2 l-4.3 1.1 M49.0 209.8 l5.0 2.4 M48.2 226.8 l4.8 -2.0 M97.8 200.1 l-0.4 5.8 M95.6 232.6 l-4.4 -7.1 M81.9 192.9 l-0.7 -6.3 M94.6 228.0 l3.9 0.1 M76.0 209.2 l3.0 2.0 M84.9 206.9 l8.0 1.2 M96.3 232.8 l-3.7 -7.1 M98.3 208.7 l1.0 -3.1 M77.5 195.1 l-0.8 -3.6 M74.8 187.9 l4.6 1.9 M48.2 205.0 l0.2 4.1 M75.0 237.0 l0.1 -5.4 M61.4 228.0 l-3.2 4.5 M94.6 224.9 l5.4 -0.9 M74.8 203.8 l-2.7 -7.0 M64.4 197.1 l-6.8 0.7 M84.9 208.5 l6.2 4.2 M94.9 204.9 l-6.9 2.6 M81.5 228.3 l2.0 6.2 M68.9 227.4 l-3.2 -8.1 M67.4 237.5 l-6.9 4.2 M60.7 207.7 l0.6 3.1 M55.4 217.2 l2.4 4.6 M62.7 237.2 l5.5 7.0 M50.4 217.8 l-7.8 1.6 M85.4 196.2 l-7.3 0.9 M87.6 201.1 l-0.9 -8.7 M60.0 217.7 l0.7 7.3 M60.8 190.5 l2.7 -3.5 M81.0 228.2 l2.8 6.7 M94.1 194.4 l-0.3 8.2 M66.9 231.8 l-0.5 -3.5 M99.4 229.1 l-1.3 5.0 M52.0 203.9 l5.0 0.2 M54.5 222.6 l1.6 6.3 M94.2 210.2 l-3.6 -1.0 M71.0 237.6 l6.3 5.4 M83.4 210.3 l4.9 -1.9 M78.9 190.9 l-2.0 6.8 M58.7 194.3 l-0.7 7.5 M100.5 209.5 l-3.6 -0.8 M56.0 215.6 l-1.4 -6.9 M62.5 210.2 l-4.1 -5.4 M88.0 238.8 l-2.1 -3.1 M85.9 210.6 l-3.6 6.4 M55.5 203.0 l-3.5 -4.6 M69.9 225.9 l6.6 3.0 M75.7 194.4 l-0.3 -5.1 M73.0 232.3 l2.3 -2.3 M59.1 214.6 l0.6 -5.1 M64.9 230.4 l-7.4 -2.0 M57.3 235.6 l3.5 3.0 M83.7 220.5 l1.3 -7.2 M80.5 226.2 l-6.5 3.7 M86.1 192.8 l-3.2 -2.1 M63.7 222.3 l-6.3 -1.1 M79.7 228.4 l0.6 -3.1 M84.9 190.0 l5.0 -1.7 M51.9 208.1 l-5.9 -6.6 M68.2 200.9 l3.8 -4.5 M53.1 200.8 l7.6 0.1 M63.2 198.3 l-5.7 -0.9 M83.1 234.1 l5.8 1.4 M62.0 200.2 l-8.0 -3.5 M84.2 208.5 l1.8 -6.5 M93.2 220.3 l0.4 3.4 M45.1 208.5 l-3.6 7.4 M71.0 205.4 l4.2 -5.1 M99.3 204.5 l-0.3 -5.1 M85.8 189.7 l3.6 -4.3 M76.0 195.5 l2.5 2.1 M87.6 220.9 l3.2 5.1 M67.6 195.5 l-6.1 3.2 M67.7 233.0 l0.2 -5.4 M87.8 239.1 l-1.0 -5.1 M59.0 229.8 l-3.6 -2.5 M89.6 215.2 l0.8 -3.8 M61.3 218.1 l1.0 3.9 M83.5 257.0 l3.6 0.6 M106.7 268.3 l2.9 1.1 M74.4 256.1 l-1.0 -3.2 M77.4 260.8 l8.7 1.5 M97.0 259.0 l-3.9 0.6 M80.6 237.7 l2.4 2.3 M92.5 234.4 l1.4 -5.6 M112.0 243.3 l0.0 4.6 M105.7 228.1 l-2.0 2.9 M81.2 223.1 l-2.5 -1.7 M105.0 251.7 l1.5 2.8 M120.9 258.1 l3.4 -2.5 M118.2 246.6 l2.8 -8.0 M100.8 248.0 l-2.2 6.3 M104.5 247.1 l-2.2 7.8 M111.0 262.4 l-3.6 6.1 M107.8 244.6 l-0.5 -7.4 M108.0 230.8 l4.6 -2.4 M81.0 257.3 l1.1 -5.8 M93.3 262.3 l-1.2 -6.5 M89.8 231.9 l-3.9 0.3 M93.7 245.6 l-7.4 1.6 M90.3 241.6 l0.6 8.0 M75.1 228.1 l4.0 -4.1 M118.2 234.5 l-2.6 4.5 M114.3 258.3 l3.5 -1.0 M84.8 245.8 l6.0 3.4 M95.4 256.6 l3.9 5.6 M91.8 248.3 l1.1 8.7 M99.8 272.1 l-6.7 3.7 M71.1 233.8 l-4.0 -0.9 M99.2 257.6 l1.7 -3.3 M128.0 254.4 l2.6 7.9 M114.9 260.5 l1.4 7.9 M74.6 234.1 l0.6 -8.2 M80.0 269.2 l-3.5 1.2 M108.4 230.1 l1.7 -3.9 M72.5 245.0 l-0.5 -3.4 M81.6 267.2 l5.7 2.7 M93.0 230.6 l-4.0 -5.3 M99.5 267.3 l5.0 -0.1 M86.1 253.7 l0.8 3.9 M121.3 239.2 l6.3 -6.3 M70.0 231.2 l-5.4 -1.2 M125.6 240.9 l5.6 -1.8 M98.2 231.1 l8.5 -0.1 M86.4 278.0 l1.4 3.3 M91.8 234.0 l-6.8 -0.8 M123.4 256.5 l-0.9 5.5 M78.6 271.4 l-0.1 -4.7 M109.8 259.9 l-2.9 1.8 M112.0 271.5 l-2.7 -8.4 M126.6 246.4 l-2.8 2.8 M86.2 268.9 l-6.2 -1.0 M75.0 271.4 l-1.3 5.6 M118.1 232.4 l-1.3 4.3 M96.2 247.2 l4.2 4.5 M81.5 247.3 l4.0 1.3 M97.9 229.7 l7.6 -1.0 M101.3 249.3 l1.2 2.8 M77.0 257.2 l6.0 2.0 M110.8 259.3 l0.1 7.8 M79.9 257.5 l5.4 1.5 M75.6 232.3 l6.7 -4.1 M95.2 261.0 l0.4 -7.7 M64.1 248.5 l-4.4 -1.5 M97.2 253.4 l-5.2 -6.6 M114.3 238.6 l-4.3 -7.4 M105.3 228.6 l-5.2 3.1 M101.9 261.3 l-3.6 -8.2 M74.2 244.4 l-3.4 4.6 M102.5 230.9 l3.8 -1.0 M85.3 269.9 l-6.9 4.3 M110.4 224.4 l-2.4 -2.1 M72.5 240.0 l-4.7 0.4 M86.8 222.3 l5.6 4.2 M78.2 265.6 l6.9 -5.3 M85.7 239.6 l3.6 -2.0 M72.0 268.3 l-1.9 4.2 M126.4 241.0 l-2.2 4.9 M92.5 260.7 l-0.0 8.9 M109.3 256.9 l1.1 3.3 M66.1 245.8 l3.6 -5.8 M96.0 248.0 l-1.8 8.6 M110.9 256.6 l-4.6 0.5 M87.9 248.1 l0.8 8.7 M115.0 272.5 l3.9 8.1 M82.5 228.5 l2.1 2.6 M95.8 237.4 l2.9 7.4 M100.3 245.3 l6.0 -1.5 M86.8 256.6 l-6.9 5.7 M92.6 260.7 l2.3 3.0 M75.5 273.0 l3.7 1.9 M126.5 238.9 l4.4 -0.6 M74.8 273.2 l-7.2 0.7 M93.1 254.0 l-4.2 6.2 M100.1 227.8 l-6.1 1.4 M71.8 257.8 l2.1 -3.6 M67.8 233.8 l2.4 -3.3 M125.3 243.7 l2.3 4.0 M97.3 256.6 l5.4 -0.7 M103.0 242.7 l8.2 0.7 M104.2 221.3 l-2.4 -5.7 M96.0 240.9 l-5.5 -1.4 M111.0 268.5 l-2.7 5.4 M81.6 262.1 l-4.2 5.1 M127.7 246.5 l5.2 -6.1 M87.3 278.9 l-0.5 3.7 M65.9 249.9 l-3.7 5.8 M88.2 278.9 l-5.6 1.7 M63.8 244.5 l6.1 -0.5 M70.1 258.5 l5.0 2.3 M112.2 228.4 l7.6 3.0 M69.9 269.8 l-2.9 3.2 M64.5 241.5 l-7.4 3.4 M90.1 232.5 l-1.9 5.7 M78.3 260.9 l-4.8 -6.7 M83.8 244.2 l1.0 5.1 M85.5 242.6 l4.3 2.4 M93.8 255.0 l-8.3 -2.1 M66.5 244.5 l3.8 -7.1 M114.3 239.6 l-1.5 -3.4 M110.2 237.4 l-8.2 1.3 M91.6 262.7 l2.9 -5.9 M99.9 252.6 l-1.8 2.4 M102.2 238.8 l-0.8 5.3 M72.7 248.5 l-4.8 -5.0 M85.2 253.6 l7.1 -0.9 M114.6 260.0 l0.2 -8.9 M98.0 251.2 l-5.5 0.7 M119.4 233.2 l-2.7 4.8 M67.3 236.0 l1.6 5.1 M118.1 262.7 l8.5 1.4 M69.5 246.6 l3.8 2.2 M64.1 255.4 l-4.6 -1.1 M122.5 247.3 l-4.1 -0.7 M85.3 277.1 l4.2 4.6 M80.2 237.8 l1.0 -8.4 M113.3 229.9 l1.0 3.2 M77.7 256.9 l2.8 7.7 M101.5 276.6 l3.4 -1.4 M113.3 240.2 l1.0 4.0 M118.3 255.0 l-6.1 5.4 M99.0 243.8 l-4.3 3.1 M102.5 263.5 l-0.6 7.1 M88.9 258.4 l1.0 5.6 M79.5 244.1 l-1.3 -4.1 M82.3 229.4 l3.4 6.7 M75.3 263.6 l-5.5 -3.9 M87.5 252.5 l1.9 -7.9 M50.3 271.3 l-1.0 8.3 M65.2 257.9 l3.7 -8.1 M55.3 293.0 l-4.0 0.4 M66.9 254.1 l-0.7 -6.5 M84.7 282.7 l3.5 -4.7 M46.6 263.6 l-5.6 2.0 M49.5 257.4 l1.0 3.4 M71.4 249.2 l-2.7 7.9 M84.3 256.3 l8.0 -0.6 M69.8 254.9 l7.1 0.5 M68.6 253.5 l-6.3 0.9 M70.0 293.4 l-4.9 -2.0 M84.9 283.2 l-3.1 6.7 M77.6 285.5 l1.8 5.1 M62.5 265.8 l5.5 2.0 M75.5 289.0 l1.8 3.1 M45.7 263.7 l4.1 -4.5 M64.7 274.3 l-0.8 4.8 M78.3 266.6 l5.5 -1.9 M57.8 275.8 l4.0 -1.0 M53.3 261.3 l1.4 4.1 M93.0 267.7 l-0.9 -8.4 M87.8 283.6 l0.0 -4.4 M45.3 277.4 l-3.5 6.7 M80.8 289.7 l-0.7 6.0 M53.1 288.8 l-0.2 -6.0 M63.5 253.1 l1.5 -4.3 M50.9 264.1 l-2.5 2.1 M80.0 289.6 l1.8 7.3 M44.6 269.2 l4.2 -6.0 M66.2 274.2 l-7.0 -2.6 M80.3 264.0 l4.8 7.5 M68.8 250.6 l-0.3 -3.9 M49.5 263.7 l-3.2 -2.4 M83.4 286.8 l2.9 -2.5 M77.5 270.4 l1.2 -5.2 M45.1 277.7 l-3.5 -2.9 M69.6 268.8 l-1.4 7.1 M72.2 274.4 l-4.9 -0.6 M78.2 268.4 l1.7 -5.0 M75.9 252.4 l-2.5 -4.3 M72.8 288.6 l1.6 -4.8 M72.1 287.9 l4.0 2.8 M52.8 260.9 l-3.9 -2.7 M74.2 270.7 l-2.2 3.5 M57.8 263.9 l0.5 -6.6 M58.3 249.5 l-5.5 -0.8 M67.7 276.6 l1.7 -5.8 M90.3 285.8 l-5.9 -3.3 M61.4 273.7 l4.0 -0.0 M52.7 290.9 l4.3 4.2 M57.2 271.8 l4.9 -2.5 M87.8 271.4 l7.2 0.2 M86.8 250.5 l6.7 2.1 M64.0 288.1 l-1.5 4.6 M83.8 286.4 l7.5 4.6 M94.6 277.5 l1.3 3.3 M69.4 249.6 l0.7 -6.0 M64.9 264.1 l-2.8 -5.4 M72.0 269.5 l6.4 2.9 M85.1 261.9 l-1.5 -6.2 M56.3 282.1 l-2.5 -1.9 M62.4 292.6 l-0.3 5.8 M69.3 286.7 l-4.4 -6.1 M87.3 264.8 l1.5 4.8 M81.9 274.9 l-5.7 -3.4 M70.6 281.9 l3.3 2.4 M56.9 269.9 l4.8 -4.3 M60.8 285.5 l7.2 1.8 M70.1 253.1 l-0.7 -4.6 M72.4 283.1 l2.2 6.3 M56.1 251.4 l6.0 4.6 M54.2 272.3 l-5.6 -0.1 M75.0 286.7 l-4.4 -5.8 M79.9 263.7 l6.0 -4.9 M64.1 243.0 l5.0 5.8 M77.3 264.2 l-7.2 -4.9 M63.6 295.0 l4.7 -3.1 M77.4 280.3 l2.7 -4.9 M63.1 287.1 l4.1 -2.0 M95.2 273.1 l-2.2 4.9 M83.6 267.8 l7.1 4.3 M70.5 283.2 l4.0 -1.7 M82.2 260.6 l-1.4 4.1 M51.2 264.5 l-4.9 3.6 M62.9 294.5 l6.9 -3.0 M72.9 263.3 l-0.0 4.2 M84.4 292.8 l7.0 -4.8 M61.7 266.6 l-3.0 1.5 M81.1 261.9 l-2.1 8.4 M77.6 295.6 l-2.6 6.5 M89.3 286.5 l-4.1 3.0 M58.7 252.2 l-0.0 3.7 M66.4 268.0 l3.5 -3.7 M77.2 284.0 l3.7 3.2 M54.0 265.2 l-2.4 4.1 M47.1 272.1 l-7.0 2.9 M61.0 271.1 l3.9 7.1 M54.1 272.2 l-8.0 -0.8 M58.9 281.9 l-2.0 2.3 M52.7 264.6 l-5.7 0.2 M48.3 274.1 l3.5 8.2 M88.2 287.2 l3.5 6.9 M69.5 277.8 l-7.8 -2.0 M83.7 248.4 l3.3 -0.4 M63.8 276.3 l0.2 -5.7 M69.1 245.0 l7.1 -0.0 M83.6 255.4 l7.3 4.1 M76.4 274.4 l2.3 -4.1 M67.7 266.0 l1.8 7.1 M88.1 274.7 l4.0 -1.6 M63.7 246.8 l-5.5 -5.2 M69.0 266.8 l2.2 5.8 M81.9 267.5 l-3.2 -2.0 M79.9 254.7 l-6.9 -1.0 M84.5 288.1 l2.5 -7.8 M67.5 283.3 l4.3 7.2 M55.0 276.6 l-7.1 -0.9 M63.7 284.8 l0.8 -7.6 M68.0 277.3 l6.6 -3.2 M56.3 260.1 l5.4 -1.4 M71.7 278.7 l-3.9 5.3 M53.3 290.5 l-3.4 -4.6 M59.2 251.6 l-4.4 -4.0 M52.0 267.2 l2.0 -3.6 M73.1 255.1 l2.0 -2.8 M52.8 271.8 l-1.0 -4.1 M69.3 280.2 l-6.0 -2.4 M81.0 270.0 l2.7 8.3 M51.2 275.9 l-1.7 6.7 M78.2 248.8 l5.6 0.1 M64.5 270.4 l1.2 -4.8 M64.5 291.3 l-5.1 -3.0 M81.9 254.4 l-1.9 2.8 M55.2 264.5 l-5.0 -1.2 M75.1 270.2 l1.9 3.0 M81.8 252.8 l0.5 7.2 M65.7 264.8 l0.0 -4.4 M79.8 269.8 l-1.0 4.4 M85.2 250.7 l-3.4 -1.9 M50.4 280.2 l8.0 3.0 M83.6 247.3 l-2.1 -6.4 M83.3 267.7 l-1.3 3.5 M79.8 292.7 l6.2 4.2 M50.6 285.9 l0.4 -7.1 M73.0 265.2 l-0.5 5.2 M50.8 279.8 l5.4 -5.1 M89.5 259.9 l-3.8 4.7 M69.8 244.7 l-3.5 3.7 M60.7 261.2 l2.2 -2.0 M94.2 272.7 l2.2 6.0 M79.8 288.5 l4.9 -4.3 M121.9 270.0 l4.0 6.9 M117.9 266.0 l0.3 -5.3 M110.7 302.1 l1.8 7.3 M83.9 276.0 l-3.0 3.8 M122.5 274.9 l-4.6 4.4 M85.8 292.0 l-4.7 -0.5 M129.3 282.4 l0.3 -4.7 M112.6 302.7 l3.0 -6.2 M110.0 303.2 l-5.2 -0.8 M90.2 277.2 l-4.5 -6.0 M113.6 284.2 l-7.8 -3.7 M94.1 271.0 l1.9 -2.5 M110.4 268.3 l-4.2 -2.5 M98.3 279.7 l-4.5 -0.7 M126.2 276.8 l-7.4 1.3 M90.9 295.5 l4.3 6.9 M107.0 265.9 l6.9 4.0 M124.5 286.2 l-3.3 0.3 M83.4 294.8 l-3.5 -3.4 M111.1 272.9 l4.3 -3.3 M127.6 295.2 l4.1 2.0 M106.2 277.6 l-7.8 -2.2 M92.0 278.0 l0.4 -7.9 M86.9 276.7 l-2.4 4.9 M130.6 283.9 l4.2 0.0 M108.6 304.4 l1.2 3.8 M106.1 276.0 l5.7 -0.8 M123.9 273.1 l2.1 7.4 M94.5 290.3 l6.9 2.1 M91.7 280.5 l2.1 -3.6 M97.8 287.2 l-4.9 6.7 M94.8 285.0 l0.6 6.8 M100.8 305.4 l7.6 3.1 M88.0 271.2 l-2.1 2.7 M114.7 300.4 l3.6 0.6 M109.9 264.8 l5.0 -6.3 M82.1 278.0 l-2.1 -6.0 M101.4 286.5 l3.8 2.4 M96.2 286.9 l6.3 -1.2 M103.5 264.3 l1.2 8.2 M118.0 282.0 l5.5 5.5 M122.9 272.4 l-5.5 3.6 M114.5 292.0 l-6.5 3.6 M126.3 296.2 l8.7 1.6 M106.9 304.8 l3.6 -7.9 M83.6 288.4 l-2.1 7.7 M123.9 298.1 l-2.8 -1.8 M118.6 280.5 l4.1 1.9 M118.6 287.0 l-2.2 -8.6 M88.7 270.1 l3.2 -6.5 M95.2 292.3 l3.5 5.2 M111.4 303.1 l-2.8 5.9 M85.3 280.0 l2.5 3.8 M100.5 275.6 l-4.2 -7.7 M85.4 298.8 l-6.5 -5.7 M82.7 281.9 l-1.7 -3.8 M85.3 283.1 l-6.8 1.6 M124.5 274.4 l1.5 -3.6 M99.0 268.3 l2.8 -1.1 M117.0 304.2 l-5.0 5.2 M91.2 277.4 l-5.9 2.4 M123.9 283.5 l1.2 -4.7 M100.2 268.4 l-0.3 -8.3 M127.4 295.4 l-3.5 -2.9 M97.1 286.5 l0.9 8.0 M99.1 265.1 l1.9 3.1 M91.7 295.6 l-1.2 -4.6 M103.4 268.2 l-1.9 7.5 M122.9 292.6 l1.2 3.0 M86.4 287.2 l-4.0 -3.4 M125.8 276.7 l1.7 2.5 M121.2 281.5 l3.2 2.5 M101.6 276.2 l-4.9 5.1 M92.4 299.2 l7.4 -2.5 M90.8 272.4 l-2.5 6.4 M93.2 271.4 l-7.5 0.4 M111.2 302.8 l3.2 -0.4 M104.7 306.8 l6.9 3.9 M99.0 282.2 l-2.1 -2.2 M113.4 275.2 l7.4 -3.9 M115.8 295.6 l4.3 6.2 M110.8 288.4 l6.1 5.4 M105.3 297.5 l-6.0 2.1 M83.4 296.1 l-3.2 4.9 M113.3 276.7 l3.7 7.1 M95.1 304.0 l2.3 -4.7 M100.9 291.1 l4.0 -4.0 M99.0 292.7 l1.2 8.1 M118.2 297.0 l-4.3 -4.3 M88.6 284.8 l2.8 7.4 M120.6 275.0 l-0.1 8.5 M108.2 293.7 l-5.6 -5.7 M97.3 281.8 l3.9 -0.5 M90.7 303.2 l2.0 -7.3 M126.3 294.3 l-2.5 1.8 M111.1 264.4 l5.5 1.7 M117.2 277.6 l-2.5 7.3 M80.8 292.9 l5.0 -6.4 M101.9 275.6 l-2.5 -6.0 M85.5 286.8 l-1.4 3.9 M118.4 278.0 l7.0 5.5 M83.7 283.8 l-2.1 3.3 M93.2 302.5 l-1.3 8.4 M96.7 304.6 l2.4 5.1 M111.9 291.1 l-5.1 -0.7 M93.2 282.6 l-1.8 4.6 M110.9 281.3 l-7.0 4.1 M93.2 280.1 l3.6 -0.1 M107.2 287.2 l-7.6 3.0 M102.2 296.5 l1.0 -3.3 M126.1 287.0 l5.2 3.2 M117.4 298.5 l3.4 -4.6 M102.0 302.2 l-1.0 -3.2 M106.0 298.5 l-4.6 -0.2 M97.8 275.7 l4.2 -2.9 M106.3 291.1 l3.0 3.1 M117.4 275.5 l-8.2 3.1 M127.3 281.0 l0.3 5.0 M91.8 284.6 l-2.4 3.5 M106.2 304.0 l-4.5 -3.4 M85.0 288.1 l-1.3 -2.9 M114.8 272.5 l-4.8 7.3 M105.6 272.0 l5.6 0.9 M90.2 290.0 l5.3 3.7 M104.3 304.2 l-4.7 -0.8 M113.0 271.9 l4.0 2.4 M121.1 289.7 l7.3 -4.7 M99.1 277.9 l0.3 4.2 M90.5 297.6 l5.9 0.8 M86.1 293.1 l2.5 -4.8 M94.2 278.1 l-6.5 1.9 M122.6 290.1 l-4.1 -0.1 M105.2 305.0 l-2.4 3.4 M100.9 300.5 l-4.1 3.0 M99.7 294.2 l-6.6 -0.2 M121.9 294.0 l-3.1 8.3 M113.7 282.0 l-1.7 -4.8 M123.6 298.2 l6.5 -4.2 M88.2 268.5 l-6.6 -2.4 M91.2 268.3 l3.0 -3.8 M110.0 300.7 l-4.3 -2.7 M120.3 269.4 l-2.4 -5.7 M101.1 275.8 l1.3 -3.5 M121.9 275.1 l-0.7 4.1 M90.7 276.2 l-1.2 -3.4 M117.1 274.8 l-6.9 2.7 M91.4 275.9 l-1.5 5.6 M117.9 287.2 l1.7 -3.3 M72.6 332.3 l-4.3 4.4 M48.4 308.5 l-3.2 6.9 M74.7 320.1 l-2.5 6.3 M55.4 341.2 l-4.7 4.6 M53.7 341.4 l0.7 -4.1 M60.6 294.8 l0.3 4.1 M74.3 309.3 l5.2 5.6 M67.4 314.3 l0.9 -4.7 M62.6 302.0 l-3.7 0.6 M52.3 302.2 l-0.8 3.2 M66.9 327.1 l7.5 -0.2 M71.0 306.3 l3.5 4.0 M74.0 312.6 l7.9 -0.4 M56.6 298.0 l4.8 -2.8 M68.7 323.0 l4.6 0.4 M52.9 312.7 l0.0 3.6 M52.8 334.5 l-7.3 -4.7 M67.3 325.6 l7.6 4.0 M51.2 304.5 l1.2 -2.8 M67.6 311.4 l-3.7 -3.9 M59.8 305.7 l-0.8 4.4 M58.3 302.7 l2.9 4.3 M51.1 313.4 l-6.7 -4.4 M50.9 302.1 l-2.7 7.8 M70.8 313.1 l3.5 0.5 M60.7 295.8 l-1.0 -6.0 M54.7 317.8 l-7.3 -5.2 M63.4 339.5 l4.1 -5.6 M55.4 330.2 l-0.9 -8.5 M67.3 308.6 l-0.3 -7.9 M50.1 335.9 l-3.2 2.8 M73.6 320.1 l0.1 -3.3 M68.4 325.6 l1.9 7.1 M64.5 338.5 l-4.8 -1.6 M66.5 306.4 l-7.0 -0.5 M54.3 326.3 l7.2 -2.2 M49.2 314.8 l-3.5 -3.2 M70.6 328.5 l2.9 -2.1 M69.7 318.1 l7.6 -0.1 M59.0 331.9 l6.8 -5.7 M64.1 301.3 l-7.4 -2.1 M66.4 298.7 l-1.9 7.7 M71.6 314.3 l4.1 0.2 M53.9 306.2 l6.0 -3.4 M58.1 310.4 l-7.2 -1.1 M73.2 307.7 l-0.5 6.0 M64.8 319.0 l3.7 1.8 M58.9 305.3 l-2.1 -7.7 M61.1 315.2 l-2.9 -7.2 M55.6 296.9 l2.8 -6.1 M67.9 305.7 l3.7 3.0 M68.5 313.8 l-8.1 1.5 M54.4 298.8 l-5.9 1.1 M66.3 325.4 l3.4 5.2 M55.8 318.9 l-2.4 -2.7 M58.0 322.8 l-3.8 0.6 M69.0 314.3 l2.7 -5.0 M53.2 341.1 l-0.9 6.0 M49.8 300.1 l-0.9 -3.2 M45.0 326.9 l3.2 -4.1 M65.7 329.7 l0.2 -4.1 M66.4 311.6 l-2.7 -6.6 M60.6 338.7 l-3.2 -3.3 M47.6 315.9 l4.5 -1.2 M65.2 336.4 l-4.9 -3.4 M66.1 313.9 l-5.8 -0.3 M63.5 336.6 l-5.0 1.5 M62.3 294.5 l4.2 -0.8 M49.2 338.3 l3.1 1.8 M74.4 330.1 l-5.6 -0.2 M72.3 334.2 l7.1 -0.3 M70.3 309.7 l-1.5 3.8 M57.9 329.5 l-2.2 2.4 M74.7 326.2 l4.6 -6.4 M53.6 334.0 l-7.4 -2.1 M56.2 337.6 l-7.7 -2.4 M59.5 321.2 l-6.8 4.7 M65.8 338.3 l3.1 3.4 M56.4 314.1 l-6.3 1.9 M49.4 334.6 l2.7 -3.8 M60.9 297.5 l-5.4 -3.7 M47.5 310.8 l-1.7 -4.3 M52.1 302.3 l-8.1 2.0 M55.3 337.7 l-6.0 -2.8 M65.3 339.5 l4.6 4.1 M47.3 326.6 l5.6 -6.9 M61.9 344.6 l-5.9 1.1 M74.3 326.1 l0.6 4.6 M57.4 331.8 l-1.1 4.6 M50.6 316.8 l0.3 -8.6 M68.9 313.4 l-3.0 -6.7 M58.4 303.8 l2.7 7.1 M54.7 307.2 l-1.7 -2.9 M63.2 295.9 l3.6 -0.7 M54.9 298.6 l4.2 5.2 M62.8 331.3 l4.6 0.8 M67.2 303.9 l2.6 -8.4 M68.5 339.5 l5.5 -4.2 M56.6 329.4 l-4.9 2.0 M59.1 341.3 l-3.0 -3.4 M65.3 336.2 l-1.7 -6.8 M50.4 300.9 l0.3 -5.6 M59.7 298.8 l-2.2 3.4 M50.3 335.3 l0.0 -4.8 M55.8 318.2 l-4.6 -3.3 M61.7 296.0 l8.3 2.9 M67.4 342.5 l4.3 -0.4 M58.4 329.6 l6.4 -4.0 M74.0 315.1 l-4.9 5.9 M54.3 331.7 l-6.4 3.2 M55.1 337.8 l-7.1 -3.2 M49.8 323.1 l-5.4 -2.0 M59.4 311.5 l1.4 2.9 M47.4 332.4 l-5.5 -4.0 M73.3 310.7 l-1.2 4.2 M52.6 317.1 l-2.9 -2.0 M49.5 334.0 l-0.1 3.9 M59.9 308.6 l5.4 -3.9 M68.9 307.8 l-4.5 0.3 M74.6 329.1 l0.7 3.4 M70.7 312.2 l-7.4 -4.2 M59.1 306.8 l-1.4 6.8 M56.8 308.8 l0.0 6.1 M73.4 328.5 l-2.1 -3.3 M49.2 310.4 l4.7 3.0 M62.8 303.1 l-0.6 -4.4 M73.1 319.8 l-2.9 -1.1 M59.6 320.9 l-3.8 1.5 M60.3 334.4 l2.9 3.7 M54.1 319.8 l-8.1 -3.2 M57.2 295.0 l5.4 4.4 M60.9 345.1 l-7.3 0.2 M61.0 310.7 l6.3 4.6 M64.4 304.5 l3.1 0.5 M64.2 299.4 l-5.0 5.0 M60.5 317.9 l-0.2 -8.9 M70.2 302.1 l-6.2 2.4 M70.7 335.2 l-2.9 -4.6 M66.4 323.4 l-7.0 4.9 M45.3 324.3 l1.7 4.2 M60.7 333.9 l1.5 -5.0 M54.4 339.4 l-7.8 2.7 M55.1 297.6 l-4.8 2.4 M44.8 327.6 l6.0 -2.2 M55.7 320.3 l4.2 -5.2 M54.4 325.6 l-7.1 1.3 M59.0 333.3 l-6.0 -0.4 M64.0 320.3 l-5.1 5.2 M58.5 322.2 l0.2 4.2 M60.7 307.6 l4.7 -0.6 M63.1 196.2 l-6.1 0.3 M64.9 187.0 l-3.2 -0.9 M70.0 192.8 l0.4 4.0 M49.6 190.8 l-1.8 4.2 M75.8 195.5 l-0.9 -3.6 M62.9 203.7 l-0.9 -3.7 M77.2 194.4 l-1.1 -4.8 M73.7 193.6 l-5.8 -6.7 M65.8 191.4 l2.9 3.1 M74.4 201.4 l-5.6 -1.6 M53.4 200.2 l-6.8 2.8 M47.5 199.7 l4.7 -6.8 M62.0 190.8 l-7.1 3.8 M53.6 200.9 l1.9 7.7 M56.6 200.2 l1.5 -3.2 M73.7 195.3 l-3.5 1.2 M49.7 200.5 l6.3 -5.7 M63.4 192.4 l-3.8 4.3 M77.7 196.6 l-1.4 7.6 M57.8 190.4 l-3.1 4.8 M62.7 196.0 l-3.8 2.1 M61.5 203.9 l-0.3 -5.5 M77.5 196.4 l-0.3 3.6 M62.3 185.5 l-0.2 6.3 M71.9 190.3 l-2.3 3.2 M78.7 196.6 l1.5 -3.8 M57.2 191.5 l-0.1 -5.3 M57.6 188.1 l5.6 3.2 M59.8 193.2 l4.5 1.1 M58.9 185.3 l-7.7 2.7 M59.7 189.9 l-7.6 2.7 M49.3 195.8 l-0.7 -3.8 M49.4 196.8 l-6.5 -2.9 M60.4 201.8 l-3.5 0.9 M66.0 185.5 l-5.1 -2.0 M53.7 199.9 l-3.2 3.4 M72.3 193.1 l1.6 6.8 M72.7 195.2 l-7.3 -3.0 M60.7 197.2 l3.0 -0.6 M50.8 198.5 l5.1 -0.4 M62.5 200.3 l-2.7 2.7 M72.4 190.8 l-0.5 -4.6 M53.4 186.7 l1.1 8.7 M58.7 203.3 l5.4 -2.1 M72.3 192.4 l-7.9 3.3 M58.7 193.6 l3.7 5.0 M59.7 197.0 l2.0 -4.6 M71.0 191.6 l2.2 5.1 M69.9 186.6 l-4.2 -1.7 M52.9 194.1 l-2.0 2.3 M79.3 196.1 l0.5 -4.4 M59.3 193.7 l3.2 -5.9 M59.8 188.6 l-7.2 3.2 M59.9 197.5 l6.4 5.6 M61.2 197.5 l-3.5 -1.5 M47.8 198.9 l0.6 5.5 M77.3 191.1 l2.2 -2.4 M75.3 193.7 l5.2 7.2 M74.8 201.9 l3.4 0.7 M48.2 196.3 l-6.8 -4.0 M73.9 200.4 l-3.8 7.9 M51.5 189.1 l5.7 6.3 M60.0 199.4 l-6.8 3.7 M56.6 201.2 l-3.6 -2.7 M70.4 199.3 l-1.6 -6.9 M65.4 202.9 l3.7 -6.2 M63.5 196.9 l7.2 -0.7 M59.7 203.5 l-5.9 -3.3 M52.7 201.3 l-3.9 3.6 M55.0 202.7 l3.0 -3.7 M70.1 197.3 l0.2 -5.1 M78.5 195.6 l-3.1 1.4 M61.8 187.9 l4.6 -6.5 M69.5 186.6 l-5.9 5.2 M47.5 195.2 l1.4 6.6 M76.9 199.1 l2.8 5.8 M71.0 187.4 l3.4 -4.4 M78.2 199.2 l-2.8 7.7 M51.9 198.6 l-6.1 -1.6 M64.6 187.5 l3.1 5.4 M75.8 200.2 l2.3 4.6 M53.1 191.9 l6.1 -4.8 M56.1 200.7 l-0.5 -6.0 M55.2 190.6 l-5.9 -2.8 M70.6 191.5 l1.3 -4.1 M59.8 199.7 l3.2 -1.5 M59.1 201.7 l-1.7 -6.8 M70.1 199.3 l-0.7 -3.8 M73.8 201.3 l3.5 0.0 M68.3 203.4 l-3.2 4.5 M45.6 192.6 l4.0 1.0 M50.2 199.6 l3.8 4.2 M57.8 193.9 l-1.7 2.9 M63.6 194.4 l3.6 5.6 M63.7 202.5 l-4.9 7.5 M52.3 192.5 l2.5 5.3 M64.2 186.6 l-1.7 -5.9 M72.4 192.5 l-8.4 -2.5 M65.1 188.3 l2.1 -7.3 M58.9 201.1 l0.2 -5.2 M54.2 200.9 l4.1 2.1 M70.9 194.6 l1.1 -2.8 M57.4 201.7 l-3.3 8.0 M71.5 193.6 l5.5 6.5 M65.6 188.1 l2.9 1.1 M56.4 187.3 l-4.9 1.1 M60.2 201.0 l-5.8 3.3 M53.0 198.0 l1.1 6.9 M69.1 193.3 l0.9 -6.8 M62.8 198.7 l2.0 -3.3 M66.0 197.0 l2.1 -4.8 M71.5 195.0 l-5.8 -0.7 M72.0 202.4 l-1.5 -4.4 M58.2 199.6 l6.6 0.9 M59.8 203.0 l2.6 -4.2 M59.6 200.9 l-3.2 0.5 M54.3 198.6 l6.1 5.1 M57.8 188.4 l6.6 3.3 M49.7 201.4 l-2.7 -3.5 M62.2 187.3 l-4.7 6.2 M58.7 198.3 l6.4 1.8 M60.9 198.9 l7.3 2.3 M59.0 204.1 l6.2 -4.9 M64.8 204.6 l-5.8 -5.6 M70.5 191.9 l-5.9 5.9 M60.6 198.0 l6.2 1.5 M55.9 204.1 l5.4 0.4 M58.7 187.4 l3.4 -6.0 M74.3 187.9 l4.3 -5.0 M51.5 199.3 l0.8 4.4 M50.2 194.2 l-2.7 2.3 M72.3 194.3 l-5.1 0.6 M47.1 192.0 l6.1 -2.5 M72.1 192.7 l-5.0 0.8 M68.3 194.2 l1.2 7.5 M62.3 197.6 l-3.9 4.3 M53.7 196.4 l-2.7 3.9 M67.8 201.4 l0.6 4.1 M77.3 191.0 l-4.5 4.2 M64.0 195.8 l-8.6 -0.7 M72.7 198.2 l0.8 -3.0 M54.1 192.4 l0.2 -7.9 M73.8 189.1 l5.9 3.6 M52.8 193.0 l1.8 5.6 M51.9 198.0 l4.2 -1.3 M66.2 192.0 l-2.1 -5.3 M52.2 199.3 l2.9 3.2 M55.3 197.3 l4.0 -5.9 M51.7 188.9 l1.6 2.6 M76.9 199.5 l-8.8 0.7 M104.4 232.8 l-4.8 -6.5 M97.5 229.3 l-2.7 3.5 M125.8 217.6 l-3.5 1.5 M119.4 218.1 l-0.1 -5.5 M125.1 230.9 l6.8 5.3 M115.7 232.2 l4.3 0.1 M106.4 221.6 l2.5 2.2 M124.3 225.9 l1.2 7.4 M103.8 216.0 l7.9 -3.8 M103.8 236.5 l-1.4 -3.9 M110.8 222.4 l-3.9 -7.5 M100.3 215.5 l-3.0 -4.6 M119.4 230.5 l-3.0 7.3 M124.3 215.5 l-4.2 7.3 M112.3 223.9 l-3.4 -1.0 M121.7 229.5 l-1.1 -3.9 M104.0 233.8 l-3.6 -1.0 M111.1 226.4 l-3.9 8.0 M116.8 236.2 l-4.9 -6.6 M111.6 221.7 l-3.8 7.0 M98.7 214.7 l7.9 1.6 M95.9 232.6 l-4.5 -2.6 M106.8 224.6 l7.6 -3.2 M100.4 215.9 l-0.5 -5.6 M110.7 236.3 l8.2 -0.8 M112.4 219.6 l-1.8 4.3 M92.5 219.8 l-4.7 -4.5 M102.5 227.6 l-0.8 8.9 M123.5 218.8 l-1.7 -4.0 M113.1 225.3 l4.2 0.5 M125.1 223.7 l0.7 3.5 M112.3 225.2 l3.3 3.8 M115.3 230.6 l-2.7 -2.7 M121.5 234.3 l-1.3 6.6 M106.4 236.4 l4.6 0.3 M117.1 219.3 l-2.8 -3.2 M120.2 230.7 l-3.1 0.8 M97.2 223.4 l-4.8 5.8 M119.7 219.2 l-2.6 7.2 M110.8 215.0 l-3.8 -3.3 M107.6 214.5 l3.0 -3.7 M127.0 230.3 l-6.7 -4.0 M109.6 212.7 l-5.2 6.3 M100.5 219.0 l1.8 3.1 M111.4 232.9 l-3.3 5.9 M124.5 222.4 l-1.6 -2.6 M105.1 215.3 l0.9 -5.0 M101.2 217.1 l1.1 -5.5 M118.5 213.4 l-5.9 -1.1 M106.1 215.3 l8.5 -1.6 M93.4 225.2 l6.6 5.2 M107.6 223.5 l8.1 0.5 M113.1 214.2 l-3.7 2.5 M91.1 226.4 l-2.2 -2.4 M111.6 228.9 l5.4 -6.1 M121.7 220.9 l-1.4 3.1 M109.6 233.2 l-3.9 3.2 M107.5 212.2 l-5.7 5.4 M107.3 232.0 l1.0 -3.4 M127.7 231.4 l-5.4 1.0 M112.6 211.9 l-5.4 5.7 M123.0 234.6 l-4.6 2.7 M115.2 225.3 l-2.9 2.3 M99.4 213.2 l-1.8 7.3 M96.4 219.4 l1.0 -5.8 M113.8 220.1 l-2.6 -5.6 M113.1 231.3 l6.5 -2.2 M95.8 225.2 l4.0 -5.5 M113.4 238.3 l4.5 -6.2 M105.9 213.9 l-4.0 7.9 M108.1 219.5 l2.0 -5.2 M127.4 229.9 l0.8 5.5 M122.0 230.7 l-7.7 -1.9 M128.0 221.2 l-2.6 -4.7 M118.9 222.5 l-2.6 5.8 M99.8 232.8 l3.3 3.0 M123.0 226.2 l0.5 7.9 M109.7 231.1 l-0.9 -4.1 M117.7 216.4 l4.5 5.7 M121.1 224.9 l-5.9 -2.1 M128.9 220.7 l4.9 2.0 M114.6 216.5 l-6.4 -0.4 M113.9 225.2 l4.3 -3.2 M96.0 228.6 l0.1 -8.4 M123.8 230.6 l6.3 0.1 M115.6 216.1 l-5.5 6.0 M103.3 212.5 l-4.7 -1.2 M105.1 215.8 l3.8 0.0 M125.5 222.1 l7.4 1.5 M110.2 222.0 l4.0 -0.3 M93.1 224.5 l-5.1 0.4 M94.3 226.6 l7.9 -2.4 M127.9 224.2 l-5.1 0.7 M126.2 217.8 l-2.4 7.3 M107.3 227.7 l-8.3 1.4 M92.4 222.3 l4.2 -6.5 M104.3 237.8 l5.2 3.1 M120.7 229.3 l5.9 -5.2 M125.0 224.5 l-4.0 -0.5 M91.0 226.2 l-4.4 6.9 M104.1 236.8 l3.2 8.2 M114.2 227.7 l-6.9 -3.4 M106.9 216.4 l-0.9 -4.1 M105.0 231.6 l0.5 3.2 M113.3 235.0 l-3.9 -3.1 M101.2 219.8 l1.1 -2.9 M112.6 211.8 l-6.0 -3.3 M117.6 224.4 l5.0 3.4 M107.6 214.9 l-5.6 0.5 M91.9 228.2 l6.3 2.9 M125.4 232.0 l-0.6 7.8 M103.3 235.1 l-8.7 -0.5 M95.9 226.7 l-4.5 -0.1 M120.9 222.0 l2.5 3.5 M106.3 211.9 l-7.3 -4.8 M113.0 238.0 l0.5 -4.3 M120.9 230.0 l-5.2 2.9 M108.3 218.4 l-0.1 5.0 M117.0 232.9 l-3.8 -2.7 M121.2 234.0 l7.0 4.2 M102.8 220.6 l8.1 0.5 M127.2 226.7 l-7.0 -1.5 M115.2 236.4 l-0.2 6.5 M125.1 222.6 l2.4 3.8 M94.7 232.0 l1.6 -5.1 M99.8 220.7 l-4.9 0.3 M121.5 222.1 l-2.8 6.1 M111.3 229.6 l-7.5 2.7 M102.9 230.5 l-1.7 6.4 M108.2 235.1 l-3.2 -0.2 M102.1 236.4 l1.8 7.3 M122.4 229.5 l-6.1 3.2 M117.0 225.1 l-7.0 4.8 M91.4 224.8 l-8.7 -1.8 M126.5 231.1 l-0.2 4.3 M97.2 223.5 l8.6 -0.3 M108.4 218.1 l0.6 5.6 M106.0 230.9 l1.3 4.4 M108.0 229.4 l-3.2 8.1 M118.2 215.6 l8.3 -2.3 M113.6 226.7 l-3.1 5.4 M113.3 225.0 l-2.4 -7.4 M108.6 237.2 l2.4 -2.6 M102.5 216.9 l0.5 -3.9 M108.9 223.7 l5.5 1.2 M102.5 232.6 l2.2 8.7 M97.9 230.0 l-5.2 6.4 M119.8 236.7 l3.0 7.7 M96.1 229.8 l0.7 7.9 M113.2 237.2 l-4.6 -7.0" stroke="#474c42" stroke-width="0.8" fill="none" stroke-linecap="round" opacity="0.8"/><path d="M106.8 237.5 l3.1 5.8 M101.7 261.5 l2.8 -1.5 M106.2 249.0 l-3.5 4.8 M92.2 204.8 l-6.7 -0.8 M102.3 221.4 l-4.8 5.2 M55.0 258.1 l-3.7 3.3 M89.5 242.9 l4.3 -2.1 M77.4 212.7 l-0.8 -5.1 M90.4 257.6 l-2.2 -2.5 M86.9 236.5 l-6.3 -2.7 M78.7 224.8 l4.7 3.7 M72.1 246.8 l4.1 4.1 M95.9 243.4 l3.5 -1.4 M82.9 234.8 l0.8 2.6 M77.3 210.1 l0.7 -6.5 M78.3 227.1 l-2.6 0.7 M85.4 216.6 l-6.8 1.6 M103.3 238.3 l-5.2 4.5 M87.8 224.6 l-6.9 2.1 M108.5 236.2 l-3.3 0.3 M90.5 228.5 l-3.6 -2.7 M90.4 220.2 l-4.8 4.7 M75.5 200.5 l2.3 2.2 M70.6 214.7 l3.8 -3.0 M99.8 248.1 l0.1 6.5 M90.0 205.3 l4.1 3.4 M89.4 277.5 l3.4 4.6 M77.3 222.4 l-2.7 -1.6 M95.1 247.0 l4.1 2.2 M67.5 205.3 l-0.3 4.9 M73.7 219.1 l-1.6 4.0 M89.1 219.2 l0.4 -3.2 M74.2 260.1 l0.4 3.3 M58.6 262.0 l-4.0 -6.3 M73.3 260.2 l0.3 5.0 M99.2 265.2 l-2.4 1.3 M60.4 239.1 l1.4 3.8 M65.5 205.0 l-3.0 -2.3 M96.7 244.6 l0.3 4.6 M64.9 246.6 l3.7 6.1 M104.2 229.1 l4.8 -2.3 M78.9 213.5 l-3.5 -5.7 M72.8 205.6 l-3.2 -2.7 M89.2 204.2 l0.3 3.3 M94.8 240.9 l1.5 3.2 M88.5 259.5 l3.6 6.4 M83.1 241.9 l3.9 -2.1 M79.8 217.4 l2.7 0.2 M85.9 235.8 l-3.6 1.3 M68.6 220.7 l1.3 -3.3 M51.2 230.5 l-7.1 -1.4 M106.8 251.4 l-5.8 4.7 M75.4 220.7 l0.4 -3.3 M54.6 234.0 l1.4 2.4 M87.0 225.4 l0.3 -4.8 M89.6 274.8 l-2.6 2.7 M103.9 216.3 l-3.6 6.4 M100.7 262.5 l-3.2 -1.9 M66.5 253.6 l-2.1 -4.1 M57.9 254.2 l-1.7 2.4 M52.1 241.6 l0.3 3.8 M90.4 231.7 l3.9 -1.0 M86.5 272.9 l3.7 -3.1 M78.6 254.2 l6.0 0.3 M79.0 217.6 l-6.2 1.0 M71.9 208.8 l3.2 -1.8 M103.4 234.7 l-2.5 5.4 M73.5 264.1 l2.9 -5.9 M58.0 219.3 l3.0 -3.3 M105.9 257.7 l4.4 1.7 M97.7 257.5 l0.5 -2.6 M61.0 240.6 l-3.4 -6.1 M76.6 231.3 l-2.9 3.8 M94.6 271.6 l-2.7 3.3 M85.0 268.5 l1.1 -2.9 M63.7 240.1 l4.1 1.7 M64.7 216.2 l6.0 -0.2 M103.1 225.5 l-2.8 -6.4 M97.2 213.9 l-1.8 3.5 M83.2 235.2 l-5.1 4.3 M74.3 267.2 l-3.3 4.7 M83.5 231.4 l-5.7 3.6 M54.7 260.6 l-0.7 5.0 M93.0 273.0 l-6.6 0.8 M74.2 221.0 l1.7 -2.3 M103.7 224.0 l0.2 5.4 M68.0 262.3 l4.5 -1.5 M74.4 235.9 l4.6 1.7 M54.5 258.3 l-6.3 -3.0 M54.1 222.6 l-1.1 2.4 M80.3 207.6 l1.2 3.4 M52.0 246.7 l-2.3 -4.1 M64.1 229.6 l-2.7 2.1 M78.4 234.2 l-2.9 -0.4 M96.4 267.2 l3.3 -3.8 M104.6 232.1 l-5.4 -1.3 M89.3 240.7 l-0.0 -4.4 M94.9 235.7 l-0.7 3.5 M100.1 227.6 l-0.1 2.8 M76.8 237.5 l2.1 -2.5 M82.1 203.0 l-1.3 5.3 M72.2 215.0 l-5.9 3.6 M79.1 270.1 l5.3 0.2 M98.5 235.4 l-0.4 -4.1 M66.5 257.5 l3.0 -2.8 M101.3 248.3 l-4.8 -2.7 M64.0 244.3 l-0.8 -3.7 M79.1 256.8 l3.3 1.3 M71.4 217.5 l-3.5 1.0 M78.8 273.1 l3.0 -1.2 M69.2 203.6 l-6.7 -1.9 M91.2 272.1 l2.8 2.3 M81.4 241.3 l0.2 -4.2 M63.3 266.0 l-0.1 6.8 M91.8 276.3 l3.5 -3.6 M105.4 225.6 l3.8 -1.2 M65.8 251.3 l-5.0 1.8 M90.9 222.2 l-3.6 -1.3 M73.6 243.1 l-5.4 -1.4 M56.5 219.7 l-3.8 -0.5 M98.1 232.2 l1.7 4.7 M75.3 220.3 l0.3 2.9 M62.8 231.5 l0.9 -3.2 M71.1 230.0 l1.0 2.9 M64.3 212.9 l-6.1 2.6 M88.9 204.7 l-2.9 -3.7 M56.9 258.0 l-1.0 3.6 M109.0 239.5 l-3.8 -5.5 M104.9 251.6 l-3.3 -2.2 M75.6 272.4 l5.3 -3.2 M102.1 248.3 l-1.9 3.1 M101.4 250.4 l-0.5 4.1 M51.6 239.9 l-0.9 5.3 M64.2 212.4 l2.1 -3.0 M85.4 231.7 l-6.0 1.6 M94.3 226.1 l-2.6 -5.4 M104.8 250.2 l1.7 -2.7 M71.6 263.8 l6.7 -2.8 M87.7 263.0 l2.0 1.9 M86.5 277.7 l2.9 -2.0 M83.2 255.5 l-6.4 2.2 M109.5 277.3 l5.3 4.7 M103.2 253.3 l5.7 3.6 M102.6 246.2 l5.4 -2.1 M74.8 271.3 l4.3 5.1 M91.9 286.1 l1.8 -1.8 M85.7 290.0 l-5.7 4.1 M95.4 257.9 l-4.3 0.2 M86.4 251.3 l-2.9 -0.0 M105.1 261.6 l-4.4 -4.9 M92.4 271.5 l-2.9 -0.9 M103.6 280.4 l2.5 4.7 M98.0 252.7 l2.7 -0.8 M90.9 283.0 l-5.7 -1.4 M95.2 286.7 l-3.1 2.8 M119.1 277.8 l4.5 0.8 M100.5 286.6 l-1.8 -6.2 M112.0 254.9 l-0.5 2.5 M112.5 289.7 l-3.2 3.0 M88.9 282.0 l1.4 3.7 M80.7 273.2 l2.8 1.1 M115.6 272.9 l-4.2 -5.5 M81.7 281.9 l1.2 -5.0 M88.3 267.5 l-2.6 -5.6 M91.1 290.0 l0.8 2.9 M88.7 286.8 l-2.9 2.4 M119.2 265.1 l-0.5 2.8 M92.6 245.6 l-1.1 -5.8 M119.2 265.6 l3.5 3.4 M82.4 282.1 l3.1 4.7 M94.2 257.0 l-3.0 -3.0 M89.8 254.2 l4.7 -1.2 M104.6 271.8 l-1.1 -2.8 M99.6 251.8 l-2.6 3.7 M108.6 254.1 l-4.2 2.4 M82.6 261.7 l-1.1 -4.4 M96.1 278.8 l-3.3 1.0 M101.6 280.2 l-4.4 5.5 M84.4 269.0 l-4.7 0.8 M120.1 277.5 l-7.4 -0.3 M89.4 260.5 l3.0 -0.3 M103.0 278.5 l1.8 2.6 M106.0 264.2 l-3.2 0.3 M95.0 277.3 l-2.7 2.9 M94.1 244.4 l1.8 4.5 M78.9 252.6 l5.3 2.3 M82.8 280.5 l-1.8 -5.7 M80.3 285.4 l-3.2 -1.8 M102.0 280.9 l2.6 -6.3 M108.5 287.0 l2.5 1.3 M89.8 252.4 l-4.2 2.0 M82.7 274.5 l-1.6 7.0 M116.1 278.5 l1.9 3.9 M107.5 272.6 l-2.0 -1.7 M80.4 280.3 l-2.7 -1.3 M84.9 277.0 l2.2 -6.4 M78.8 257.4 l-6.3 3.8 M92.9 246.0 l3.1 5.1 M87.5 251.1 l2.9 -2.3 M112.3 283.3 l1.3 7.2 M113.4 260.5 l2.0 -5.2 M114.5 260.0 l2.1 7.2 M97.1 278.7 l1.0 -5.7 M106.1 260.8 l5.9 -3.1 M96.0 267.5 l0.4 -4.3 M107.7 281.3 l3.9 -1.3 M73.9 275.6 l-1.0 -4.2 M88.4 286.7 l-6.0 -1.4 M91.2 261.2 l4.6 -4.6 M88.1 269.9 l-6.5 2.0 M96.1 284.6 l-2.2 -5.8 M106.0 255.8 l-0.4 -3.6 M118.6 276.6 l0.6 6.9 M91.1 283.5 l1.5 -2.2 M112.6 267.2 l4.0 1.0 M107.3 279.2 l-5.3 -0.1 M107.7 294.1 l1.9 2.4 M98.0 270.2 l2.4 -2.3 M118.4 272.1 l-1.7 2.6 M87.1 272.2 l4.4 2.4 M99.1 285.2 l-7.5 0.3 M82.7 257.7 l-1.5 4.5 M95.6 293.8 l6.0 -2.8 M79.3 281.7 l-1.8 6.2 M108.3 266.7 l6.4 3.8 M77.3 259.9 l3.7 -5.3 M108.4 277.9 l-4.7 5.0 M96.6 257.9 l4.2 5.0 M100.8 267.2 l-1.5 2.7 M94.9 271.4 l-2.5 2.2 M122.0 278.8 l4.1 5.8 M95.7 254.9 l-3.1 3.1 M94.9 289.5 l3.6 4.1 M86.7 270.6 l3.8 -1.1 M82.7 254.1 l-0.4 -5.4 M81.6 274.3 l-0.2 -2.8 M76.1 260.8 l-4.7 1.4 M89.6 248.6 l-2.5 4.9 M106.1 251.3 l1.9 7.2 M86.4 287.5 l5.6 1.9 M74.7 261.7 l0.3 2.6 M89.8 284.9 l-1.6 -3.7 M101.1 246.2 l7.3 1.5 M110.2 275.3 l5.7 3.2 M110.9 266.0 l-6.7 -3.0 M99.7 256.9 l-6.9 1.7 M110.6 257.0 l-2.5 -1.4 M79.5 284.2 l3.4 0.9 M94.7 268.6 l2.7 5.7 M105.1 286.9 l4.7 -2.0 M95.5 263.8 l-5.1 -0.9 M80.1 271.9 l5.1 2.3 M85.3 287.7 l-0.2 7.1 M74.9 275.5 l-3.9 -0.5 M85.3 275.4 l-4.2 -0.8 M95.2 295.8 l5.0 -1.0 M76.4 260.6 l-3.1 -3.4 M74.7 269.5 l4.2 1.8 M114.9 279.7 l4.6 0.8 M108.2 281.2 l3.6 -0.6 M81.8 286.7 l1.0 3.5 M80.2 279.8 l1.0 3.6 M110.5 275.1 l-4.2 3.5 M92.7 288.1 l0.8 -3.8 M93.5 247.8 l5.5 -2.8 M84.5 254.2 l-5.1 4.7 M103.8 284.5 l3.6 3.6 M115.1 258.0 l6.9 0.7 M108.8 273.9 l-2.6 0.3 M103.7 249.2 l5.6 -1.3 M86.7 275.4 l-2.3 5.1 M103.6 260.2 l-5.7 -0.9 M100.6 291.7 l-0.8 4.2 M105.0 294.4 l3.9 1.0 M83.9 258.0 l0.8 5.0 M79.1 273.4 l-3.1 1.1 M93.2 255.9 l1.4 -3.9 M106.7 260.4 l-4.4 -5.9 M90.8 292.2 l-2.4 -0.8 M84.6 261.4 l5.9 2.8" stroke="#3a3f37" stroke-width="0.8" fill="none" stroke-linecap="round" opacity="0.75"/><path d="M47 205 Q80 235 95 290 M60 200 Q85 215 120 222 M70 250 Q90 262 118 268" stroke="#5a5c52" stroke-width="1.4" fill="none"/><rect x="0.0" y="0.0" width="47.0" height="465.0" fill="#a8a199" /><rect x="40.0" y="0.0" width="7.0" height="465.0" fill="#b3aca4" /><rect x="240.9" y="0.0" width="69.4" height="337.5" fill="#e3e1de" /><rect x="240.9" y="0.0" width="16.0" height="337.5" fill="#efeeec" /><line x1="240.9" y1="0.0" x2="240.9" y2="338.0" stroke="#bdb5a4" stroke-width="1" /><line x1="310.3" y1="0.0" x2="310.3" y2="338.0" stroke="#c4bcab" stroke-width="1.4" /><rect x="305.6" y="256.0" width="3.5" height="16.0" fill="#c9c0ae" /><rect x="274.7" y="271.2" width="33.9" height="16.1" fill="#b4ab99" /><rect x="274.7" y="271.2" width="33.9" height="2.2" fill="#c9c1b0" /><rect x="302.6" y="271.2" width="6.0" height="16.1" fill="#d2cbbb" /><rect x="252.7" y="287.3" width="55.9" height="15.3" fill="#b4ab99" /><rect x="252.7" y="287.3" width="55.9" height="2.2" fill="#c9c1b0" /><rect x="302.6" y="287.3" width="6.0" height="15.3" fill="#d2cbbb" /><rect x="245.1" y="303.4" width="63.5" height="16.1" fill="#b4ab99" /><rect x="245.1" y="303.4" width="63.5" height="2.2" fill="#c9c1b0" /><rect x="302.6" y="303.4" width="6.0" height="16.1" fill="#d2cbbb" /><rect x="241.7" y="320.0" width="66.9" height="17.4" fill="#b4ab99" /><rect x="241.7" y="320.0" width="66.9" height="2.2" fill="#c9c1b0" /><rect x="302.6" y="320.0" width="6.0" height="17.4" fill="#d2cbbb" /><rect x="236.6" y="338.1" width="80.4" height="18.6" fill="#c7beac" /><rect x="236.6" y="338.1" width="80.4" height="2.5" fill="#d4ccbb" /><rect x="224.8" y="356.7" width="106.0" height="19.5" fill="#bdb4a2" /><rect x="224.8" y="356.7" width="106.0" height="2.5" fill="#cdc5b3" /><rect x="194.3" y="374.2" width="110.0" height="19.5" fill="#b9b19f" /><rect x="194.3" y="374.2" width="110.0" height="2.5" fill="#cbc3b2" /><rect x="150.3" y="393.7" width="100.0" height="21.2" fill="#b7af9d" /><rect x="150.3" y="393.7" width="100.0" height="2.5" fill="#c9c1b0" /><rect x="108.0" y="414.9" width="87.2" height="22.0" fill="#b5ad9b" /><rect x="108.0" y="414.9" width="87.2" height="2.5" fill="#c7bfae" /><polygon points="195.2,420.0 215.0,420.0 215.0,437.0 195.2,437.0" fill="#c8c3bb" /><rect x="311.0" y="0.0" width="67.0" height="464.8" fill="#aaa39c" /><polygon points="317.0,339.0 378.0,345.0 378.0,426.0 311.0,426.0 311.0,339.0" fill="#7a726d" /><rect x="311.0" y="426.0" width="67.0" height="38.8" fill="#a19b95" /><g filter="url(#p8_stB2)" opacity=".55"><ellipse cx="352.0" cy="240.0" rx="22.0" ry="16.0" fill="#555a50" /><ellipse cx="340.0" cy="262.0" rx="20.0" ry="12.0" fill="#555a50" /><ellipse cx="364.0" cy="222.0" rx="12.0" ry="10.0" fill="#555a50" /><ellipse cx="369.0" cy="296.0" rx="8.0" ry="9.0" fill="#555a50" /></g><path d="M342.4 223.5 l3.5 3.8 M337.4 235.2 l3.7 3.7 M334.6 245.2 l-5.2 2.0 M330.1 240.0 l0.1 5.9 M361.7 226.8 l1.9 -8.4 M328.1 241.3 l1.3 -5.0 M351.6 227.5 l-3.6 -1.6 M348.8 229.7 l-5.6 2.6 M351.6 222.3 l4.7 -5.2 M345.4 252.8 l-3.6 -3.6 M361.2 234.5 l-8.7 -1.4 M353.7 251.4 l7.5 -4.2 M331.1 245.2 l-3.2 -1.5 M369.3 231.4 l3.7 -2.2 M329.2 235.4 l5.1 -6.3 M368.7 244.8 l-2.1 3.2 M343.2 239.8 l-1.8 5.3 M339.0 246.0 l-6.0 0.6 M356.7 247.0 l-1.6 2.7 M327.4 237.5 l0.2 8.3 M339.1 248.9 l1.1 -5.5 M327.0 240.3 l5.1 2.4 M344.6 252.0 l-6.8 -2.2 M343.6 256.7 l7.3 -2.3 M333.2 230.0 l6.3 2.3 M337.0 243.3 l-2.2 -4.8 M356.2 236.4 l-0.5 5.8 M355.3 244.7 l-2.0 -4.1 M363.5 251.2 l4.2 -5.2 M340.9 233.3 l6.5 -4.1 M356.1 227.6 l0.7 5.8 M335.8 249.4 l2.7 3.3 M341.5 237.8 l3.3 5.3 M329.5 245.4 l6.3 -0.7 M340.3 230.8 l-4.1 -3.2 M361.8 230.7 l0.2 5.5 M352.4 237.4 l7.5 -0.3 M337.3 239.8 l-0.0 5.1 M347.1 225.9 l-5.3 0.0 M342.0 243.3 l-5.1 5.0 M373.2 241.9 l5.6 0.6 M345.3 252.7 l-0.5 6.6 M371.9 244.5 l7.2 -3.9 M347.1 233.7 l-4.6 -4.6 M354.8 228.3 l1.1 -4.7 M359.3 241.4 l5.0 -0.2 M356.4 245.5 l7.5 -2.3 M344.9 241.6 l1.0 -2.9 M350.0 228.3 l-2.0 2.4 M338.1 225.7 l-7.9 2.6 M355.4 249.4 l-3.7 1.8 M367.2 239.1 l6.8 0.0 M358.5 248.6 l2.1 -4.6 M347.6 256.6 l-0.7 8.7 M356.1 241.0 l6.7 -0.3 M329.9 234.6 l-2.4 7.9 M345.8 256.4 l-8.4 0.2 M370.9 236.2 l3.6 4.5 M363.6 233.7 l1.5 5.6 M354.5 243.7 l-2.6 -1.6 M338.8 245.7 l1.5 -4.9 M332.2 245.3 l2.9 5.1 M355.2 250.7 l3.1 -8.1 M370.5 235.2 l5.4 1.4 M340.2 248.2 l-6.9 1.6 M368.4 240.5 l7.0 2.6 M367.9 234.1 l1.4 -8.8 M361.1 235.1 l-4.5 -3.8 M334.5 238.6 l5.0 0.5 M372.2 243.0 l0.8 -3.2 M335.7 226.9 l-4.8 -5.1 M335.1 241.2 l-1.8 3.0 M346.2 247.7 l-4.7 2.3 M341.5 256.8 l0.7 5.3 M356.3 230.2 l6.1 1.9 M338.2 253.4 l-2.4 4.4 M331.0 239.0 l2.3 2.4 M351.0 231.0 l7.2 -3.1 M343.4 239.0 l-0.2 3.1 M334.4 233.2 l-0.8 -5.1 M368.6 230.5 l-2.3 -5.6 M365.3 234.4 l8.3 0.2 M362.3 245.8 l-5.5 6.0 M335.7 232.1 l8.3 -0.6 M340.3 230.7 l1.1 8.2 M343.6 223.5 l-7.3 4.7 M361.5 244.4 l7.2 -2.6 M356.2 249.6 l1.2 6.7 M343.3 227.0 l-2.7 2.0 M338.6 255.1 l-0.6 -6.5 M337.1 234.1 l4.2 0.5 M348.9 242.0 l-3.0 3.9 M337.0 246.2 l1.1 -6.0 M364.4 231.9 l-2.5 5.1 M346.2 233.6 l-2.3 -8.5 M347.3 225.2 l1.5 -2.7 M336.1 236.0 l2.2 4.9 M369.2 244.1 l4.3 3.0 M369.9 250.0 l0.6 6.2 M362.8 241.2 l-2.6 1.6 M364.2 230.2 l5.6 1.2 M361.2 248.1 l0.6 -4.2 M358.1 229.0 l-6.3 -6.2 M359.5 253.6 l5.2 -3.0 M352.6 255.7 l-3.1 0.9 M357.5 236.1 l-0.2 -4.0 M333.4 243.7 l-0.9 6.4 M363.5 239.3 l-6.6 -5.6 M363.6 253.5 l6.0 -3.2 M361.9 242.6 l0.9 6.0 M344.1 275.0 l3.4 -0.7 M344.1 253.7 l-5.7 -0.7 M328.1 269.7 l-4.2 -2.5 M339.8 270.4 l2.6 6.3 M320.1 258.2 l-4.3 -5.2 M339.9 271.0 l6.2 4.7 M353.5 256.3 l-4.9 -0.2 M319.4 258.8 l-6.5 0.1 M347.1 265.1 l-7.8 -2.6 M334.9 271.8 l-1.7 3.3 M333.3 273.2 l-3.9 4.1 M321.2 260.3 l-5.3 -4.8 M351.6 254.8 l-7.7 -3.4 M322.9 265.5 l5.9 3.3 M319.7 255.1 l4.0 1.9 M339.1 249.6 l-2.1 -3.9 M352.5 257.2 l4.4 -6.6 M329.9 253.5 l-2.0 -3.2 M338.0 248.5 l-5.3 -4.4 M337.3 250.6 l5.1 6.2 M340.7 255.4 l-3.4 -1.2 M338.3 270.5 l-7.7 0.3 M355.9 257.7 l-2.0 4.5 M351.5 267.8 l-4.7 4.3 M322.4 267.5 l0.3 -5.5 M319.9 262.4 l2.2 6.4 M347.4 266.9 l-5.6 2.1 M322.3 270.4 l-1.1 7.8 M336.5 255.7 l-1.5 7.2 M322.5 257.4 l2.5 -3.0 M347.2 274.6 l-2.4 6.2 M336.4 266.9 l3.0 -6.9 M336.2 266.1 l0.5 -4.6 M338.9 255.1 l3.8 -0.2 M332.8 267.7 l-5.5 -5.4 M349.4 269.3 l4.9 -2.2 M334.8 250.4 l-2.3 8.0 M342.8 252.9 l1.0 3.6 M348.6 253.9 l-5.5 -0.7 M347.3 262.4 l7.7 3.3 M351.1 258.5 l-4.7 -4.6 M359.5 259.7 l5.8 6.4 M328.1 256.4 l0.8 -3.1 M345.8 249.9 l4.0 2.4 M359.2 260.6 l-6.5 -5.9 M350.2 266.5 l2.0 -2.7 M333.9 266.7 l-7.5 -4.8 M318.0 262.6 l5.1 2.2 M359.1 259.1 l0.1 4.0 M335.6 275.4 l3.3 3.1 M332.2 270.6 l1.3 -6.0 M342.2 252.7 l2.3 -4.6 M327.3 256.8 l-3.5 2.1 M346.2 255.6 l6.4 -2.5 M354.3 270.2 l3.7 -5.4 M335.8 274.8 l-2.0 8.2 M342.3 259.3 l-4.8 7.5 M341.4 255.6 l-7.4 4.0 M346.5 262.5 l-1.4 -5.2 M329.4 254.8 l-7.0 0.0 M337.3 257.3 l-7.6 -4.5 M344.2 260.9 l-4.2 -0.6 M349.3 261.6 l4.5 -3.0 M343.6 260.1 l-6.5 -1.1 M327.8 265.9 l1.6 -3.2 M348.7 250.7 l3.1 -6.1 M325.3 267.2 l0.1 4.6 M333.0 261.5 l7.0 0.0 M356.0 259.3 l3.2 1.8 M353.7 266.1 l0.0 -5.7 M358.3 266.2 l0.8 -4.0 M351.6 251.7 l-1.9 6.1 M351.0 262.3 l2.6 8.2 M336.7 255.0 l-0.2 -3.7 M351.0 265.5 l3.9 -7.6 M334.3 269.1 l-5.0 1.9 M332.7 253.0 l0.2 4.7 M332.3 260.6 l1.9 3.7 M339.5 264.7 l-6.7 -1.1 M332.2 275.1 l-1.9 5.7 M327.1 253.2 l3.0 -1.3 M343.0 263.8 l4.2 3.2 M319.5 258.5 l4.1 -5.1 M323.6 260.1 l1.0 4.2 M333.3 265.8 l-3.2 -3.2 M350.4 260.3 l0.2 -4.6 M340.0 271.2 l-8.6 -2.0 M339.7 264.0 l7.0 4.1 M357.3 267.7 l3.5 7.7 M326.0 273.0 l-5.0 1.4 M351.9 262.6 l-8.2 2.4 M317.9 260.6 l-6.4 2.1 M332.0 258.9 l-6.2 -3.8 M329.9 265.0 l2.8 4.7 M352.4 259.3 l0.4 5.9 M337.2 249.1 l4.1 4.1 M349.6 264.5 l-4.0 1.0 M351.5 271.1 l1.7 7.4 M343.7 266.4 l2.8 7.4 M346.6 265.4 l-4.3 -3.6 M346.8 256.9 l6.9 2.1 M324.7 267.6 l3.2 8.0 M340.0 255.2 l-2.4 2.8 M345.9 261.2 l-3.5 2.4 M321.0 263.2 l-0.2 6.5 M332.8 256.1 l5.3 -0.7 M318.3 256.5 l-1.1 2.8 M338.2 266.4 l7.2 4.4 M332.3 257.5 l-3.9 3.4 M346.4 266.8 l8.5 1.0 M352.3 224.5 l3.1 -5.6 M350.3 223.8 l-4.9 -0.9 M362.3 218.4 l-3.5 -1.9 M356.1 221.7 l-5.0 -0.8 M358.9 215.8 l5.2 4.0 M352.0 227.5 l-2.0 -2.3 M360.4 221.1 l5.4 -3.5 M354.6 218.6 l4.6 1.5 M360.3 226.8 l4.5 -0.7 M355.2 221.7 l2.0 -3.0 M367.6 221.2 l-0.3 5.6 M360.4 225.3 l0.9 -3.2 M361.6 223.3 l5.0 1.6 M361.4 221.8 l-4.8 1.7 M375.7 220.2 l-6.0 -4.1 M372.0 224.2 l6.6 -4.9 M359.1 211.8 l6.1 -2.4 M367.3 230.8 l0.4 8.3 M365.4 232.8 l-3.9 -5.7 M364.2 230.0 l-8.8 -1.2 M358.2 212.2 l5.6 -0.3 M354.8 215.6 l-4.5 2.0 M359.5 224.8 l4.2 -1.6 M366.7 216.1 l-1.5 2.9 M355.6 222.2 l-5.2 5.5 M365.2 220.9 l-1.8 -8.1 M369.5 213.3 l1.0 -5.9 M368.0 223.6 l1.6 -5.1 M350.5 223.6 l-3.8 2.6 M358.9 233.2 l-7.2 2.0 M358.6 215.5 l-4.9 3.4 M351.3 220.9 l1.4 5.5 M361.8 215.7 l-6.9 3.1 M355.9 214.5 l5.8 4.0 M361.9 217.9 l3.6 7.5 M349.9 224.7 l7.7 3.3 M356.4 218.9 l-2.2 -5.7 M363.6 233.9 l4.9 1.0 M369.4 212.7 l3.7 7.9 M368.8 226.1 l1.1 -3.7 M356.9 228.3 l-5.3 -0.2 M361.8 230.1 l-6.6 2.1 M364.0 223.5 l0.9 -6.7 M359.1 212.7 l3.6 1.4 M370.8 217.8 l-4.5 6.0 M364.3 233.6 l-1.4 -4.2 M362.3 213.4 l-0.7 3.8 M367.2 229.4 l-7.7 3.6 M356.4 229.8 l4.6 -6.0 M354.6 212.7 l-4.6 -6.5 M359.1 217.1 l-5.8 -4.7 M358.6 214.7 l6.4 1.0 M367.1 211.6 l-4.7 -3.6 M363.2 227.2 l1.2 -2.9 M355.1 224.5 l-7.3 5.2 M373.0 226.2 l-0.5 -3.3 M364.3 228.1 l2.5 4.7 M366.8 210.8 l-5.2 -2.3 M355.5 218.3 l-4.5 -1.6 M352.8 222.2 l-6.0 -2.2 M355.0 217.2 l-3.3 4.3 M358.9 221.6 l-4.4 -5.3 M365.0 233.1 l-4.0 -7.0 M349.7 227.1 l-0.2 6.2 M354.5 220.6 l-8.6 1.3 M374.0 223.2 l3.5 5.2 M358.9 213.8 l3.7 -6.8 M368.8 222.9 l-0.8 -7.2 M358.9 221.8 l2.1 4.5 M350.1 220.9 l-0.0 6.9 M356.7 216.3 l2.7 -3.5 M363.0 216.2 l0.4 -5.7 M356.0 231.7 l-5.5 5.4 M358.4 222.1 l-1.4 4.1 M363.2 223.1 l-5.2 -3.0 M358.8 215.3 l8.0 1.5 M361.8 211.0 l-4.1 1.9 M365.6 220.6 l-3.5 -1.1 M357.7 233.0 l4.5 -4.1 M370.8 226.2 l6.7 -4.6 M368.6 224.3 l-3.3 0.2 M354.4 228.3 l-0.6 7.5 M368.9 220.1 l-7.3 -0.7 M367.2 229.4 l-7.2 -3.5 M350.5 216.5 l-0.8 -3.7 M362.5 213.6 l-5.5 -2.1 M354.1 218.3 l-7.3 3.7 M364.5 229.0 l-2.0 2.2 M370.0 226.5 l6.4 -0.4 M362.1 224.4 l-1.8 8.5 M357.8 232.4 l-2.8 -2.2 M369.9 217.7 l8.1 1.8 M358.9 219.6 l-4.6 3.2 M364.2 231.3 l4.2 -5.5 M366.7 233.2 l-2.9 -2.7 M369.9 212.5 l4.3 -7.8 M358.7 221.4 l6.0 -3.8 M375.9 221.6 l-1.8 -3.1 M365.2 219.8 l-4.8 2.8 M366.1 227.9 l-0.7 -3.8 M359.2 217.2 l5.4 6.7 M362.0 222.9 l-4.5 -4.1 M349.3 217.4 l-1.6 6.2 M364.4 217.0 l-3.6 -3.2 M364.8 221.2 l2.6 7.0 M371.6 227.2 l-3.8 5.7 M354.6 214.2 l3.7 -1.6 M369.3 224.3 l5.0 1.5 M368.5 221.2 l-2.3 2.3 M360.1 214.4 l-8.5 -1.5 M366.9 303.8 l0.3 8.6 M373.4 295.5 l3.7 -1.6 M373.5 297.6 l-1.6 3.9 M366.4 300.3 l-4.0 6.1 M368.9 303.5 l3.5 -5.0 M371.7 298.9 l3.3 3.3 M366.7 287.8 l-3.1 1.0 M360.2 291.7 l-6.0 2.0 M362.2 293.9 l3.2 -1.1 M360.3 300.5 l6.9 5.1 M362.4 293.6 l7.6 -4.4 M370.7 299.7 l4.7 1.9 M362.9 294.4 l-1.9 -2.6 M373.9 297.3 l-2.1 5.1 M363.6 290.3 l3.3 1.0 M375.7 297.2 l7.5 -2.9 M360.5 298.7 l-3.0 -1.6 M374.9 300.1 l-6.8 -0.8 M364.5 299.5 l1.2 5.9 M361.5 297.6 l-7.3 1.2 M375.3 300.8 l1.8 5.2 M367.9 297.0 l2.8 1.2 M364.7 296.0 l-4.0 -5.0 M371.2 292.6 l-1.6 7.0 M370.1 287.2 l7.0 -4.0 M374.4 296.5 l-4.2 -7.4 M363.2 297.1 l3.7 1.9 M372.8 300.1 l5.1 6.2 M372.3 302.2 l-1.5 4.5 M370.2 302.0 l1.4 -6.1 M363.8 296.4 l-3.3 7.4 M374.4 299.7 l1.7 -6.0 M365.8 300.1 l-2.6 -6.4 M370.6 300.9 l1.3 -3.0 M373.4 291.0 l2.5 8.2 M364.2 302.8 l-3.7 0.7 M366.0 299.2 l-1.9 -8.4 M371.8 297.6 l-6.0 2.4 M361.5 300.0 l3.7 -0.2 M371.3 301.9 l-4.6 -5.9 M359.5 296.0 l8.3 -0.6 M361.7 303.0 l-6.9 -3.5 M368.5 294.8 l7.8 -0.1 M363.9 289.0 l-4.2 4.7 M364.7 300.0 l-4.6 2.8 M370.2 289.9 l4.7 5.9 M365.8 286.8 l-1.6 -2.6 M374.3 302.8 l-2.8 -4.8 M370.0 294.1 l1.9 -3.8 M376.1 297.5 l1.8 -2.4 M364.3 287.2 l4.5 -4.5 M372.3 288.4 l-8.4 -1.2 M369.8 300.0 l-6.1 5.5 M372.0 299.4 l-8.9 0.4 M359.1 295.0 l4.3 3.0 M370.5 299.1 l3.6 -3.6 M362.0 298.2 l8.8 1.5 M361.5 289.6 l4.5 5.0 M369.6 287.6 l-6.6 4.3 M374.2 291.4 l0.0 -4.1 M362.0 291.3 l2.1 6.9 M373.7 301.9 l-2.4 2.0 M364.6 303.9 l-4.6 4.0 M365.8 296.7 l-5.6 0.9 M367.7 291.1 l7.8 1.2 M367.7 294.6 l2.9 7.3 M365.8 301.0 l-6.8 -4.8 M367.2 294.5 l-7.3 5.1 M363.6 290.1 l-3.3 -6.6 M376.1 298.1 l2.3 5.3 M368.1 297.5 l3.2 5.0 M367.0 289.8 l-7.1 3.8 M362.4 290.7 l-3.7 -2.7 M372.7 294.2 l2.1 8.2 M360.6 298.7 l-4.3 0.0 M364.0 300.0 l-5.0 2.2 M372.0 296.3 l-2.0 -5.6 M368.2 304.8 l0.9 8.3 M374.7 295.2 l-7.4 3.9 M366.6 294.1 l-7.7 -2.3 M368.2 287.1 l-1.1 8.3 M368.3 290.0 l1.6 -5.3 M369.4 303.6 l2.7 -7.1 M370.7 286.6 l1.4 -8.6 M363.5 298.4 l-2.7 4.4 M363.5 300.7 l5.5 3.2 M363.5 292.8 l-0.5 8.9 M370.1 287.3 l-1.0 -3.3 M365.8 304.2 l0.8 -3.9 M361.6 291.0 l1.8 -3.2 M368.9 288.5 l3.2 -0.9 M366.9 286.3 l1.9 -4.0 M360.0 300.2 l-5.1 -2.5 M363.1 300.4 l4.6 2.5 M374.5 290.2 l3.0 6.4 M371.3 293.4 l-3.1 5.6 M366.7 304.1 l0.8 -5.2 M373.3 287.9 l2.0 6.8 M373.7 301.5 l5.0 1.7 M368.0 287.9 l-3.2 2.3 M370.4 288.9 l1.9 7.9 M367.1 287.8 l-6.7 3.3 M371.0 299.4 l-2.7 -4.9 M367.8 296.9 l2.3 7.2 M374.8 298.3 l-4.2 3.4 M362.5 303.6 l5.8 -1.3 M370.3 289.3 l4.0 -7.8 M364.9 302.9 l-1.8 7.1 M368.1 305.2 l3.7 -1.5 M367.1 294.1 l3.5 0.5" stroke="#4a4f45" stroke-width="0.8" fill="none" stroke-linecap="round" opacity="0.8"/><path d="M378 232 Q355 240 325 262 M378 250 Q360 262 340 272" stroke="#5a5c52" stroke-width="1.1" fill="none"/><rect x="378.0" y="0.0" width="5.5" height="464.8" fill="#f3f1ee" /><rect x="383.5" y="0.0" width="54.5" height="464.8" fill="#a8a198" /><rect x="47.0" y="437.0" width="331.0" height="28.0" fill="url(#p8_stF)" /><ellipse cx="160.0" cy="441.0" rx="60.0" ry="5.0" fill="#8a847e" filter="url(#p8_stB2)" opacity=".7"/><rect x="0.0" y="464.8" width="438.0" height="20.5" fill="#d0c9bc" /><line x1="0.0" y1="471.0" x2="438.0" y2="471.0" stroke="#bdb6a8" stroke-width="0.8" stroke-dasharray="9 2"/><line x1="4.0" y1="477.5" x2="438.0" y2="477.5" stroke="#bdb6a8" stroke-width="0.8" stroke-dasharray="9 2"/><line x1="0.0" y1="484.8" x2="438.0" y2="484.8" stroke="#e3dfd8" stroke-width="1.4" /><rect x="0.0" y="485.3" width="438.0" height="71.0" fill="url(#p8_stC)" /><path d="M276 425 C270 395 274 372 278 360 C290 355 300 358 305 366 C312 358 328 358 336 368 C340 395 338 415 333 430 Z" fill="#8db1ab"/><path d="M305 366 C300 390 300 410 302 428" stroke="#6f948f" stroke-width="1.6" fill="none"/><path d="M318 362 C334 360 338 380 336 425 L326 428 C330 400 328 380 318 362 Z" fill="#6f9691" opacity=".7"/><line x1="221.0" y1="386.5" x2="272.0" y2="386.0" stroke="#4a3a33" stroke-width="3.6" stroke-linecap="round"/><line x1="241.5" y1="388.0" x2="241.5" y2="424.0" stroke="#4a3a33" stroke-width="2.4" /><circle cx="220.6" cy="386.5" r="2.0" fill="#f5e9c8" /><path d="M212.100 434 V470 A62.200 10 0 0 0 336.500 470 V434 Z" fill="url(#p8_stSe)"/><ellipse cx="274.3" cy="434.0" rx="62.2" ry="12.5" fill="#7b978f" /><ellipse cx="262.0" cy="431.0" rx="44.0" ry="6.0" fill="#8aa69e" opacity=".6"/><path d="M212.100 471 A62.200 10 0 0 0 336.500 471" fill="none" stroke="#6a3f33" stroke-width="1.8"/><line x1="323.6" y1="392.0" x2="323.6" y2="476.0" stroke="#5a4038" stroke-width="2" /><line x1="335.5" y1="390.0" x2="335.5" y2="472.0" stroke="#5a4038" stroke-width="2" /><line x1="305.0" y1="392.0" x2="337.0" y2="390.0" stroke="#5a4038" stroke-width="2.2" /><circle cx="310.5" cy="392.0" r="2.0" fill="#f5e9c8" /><polygon points="266.3,388.6 310.3,392.9 305.2,425.0 260.3,420.8" fill="url(#p8_stY)" stroke-linejoin="round" stroke="#efa53c" stroke-width="1.5"/></svg></div><div class="cap" style="left:102px;top:379px">Grover Residence</div><div class="cap r" style="left:102px;top:379px;width:370.5px">View Project</div><div class="cap" style="left:564px;top:379px">Berns Residence</div><div class="cap r" style="left:564px;top:379px;width:370.5px">View Project</div><div class="photo" style="left:102px;top:485.29999999999995px;width:370.5px;height:556px;"><svg viewBox="92.50 0.00 371.00 556.00" preserveAspectRatio="none"><defs><linearGradient id="p9_gB1" x1="0" y1="0" x2="1" y2="0"><stop offset="0" stop-color="#d7cfc5"/><stop offset=".75" stop-color="#dfd6ca"/><stop offset="1" stop-color="#e6d6c2"/></linearGradient><linearGradient id="p9_gB2" x1="0" y1="0" x2="0" y2="1"><stop offset="0" stop-color="#bfa081"/><stop offset=".5" stop-color="#c6b692"/><stop offset="1" stop-color="#c7ba96"/></linearGradient><linearGradient id="p9_gB2h" x1="0" y1="0" x2="1" y2="0"><stop offset="0" stop-color="#c3a583" stop-opacity=".8"/><stop offset=".35" stop-color="#c3a583" stop-opacity="0"/><stop offset=".72" stop-color="#c0a07a" stop-opacity="0"/><stop offset="1" stop-color="#c19f78" stop-opacity=".85"/></linearGradient><linearGradient id="p9_gB3" x1="0" y1="0" x2="1" y2="0"><stop offset="0" stop-color="#b89a7b"/><stop offset=".6" stop-color="#bd9d7a"/><stop offset="1" stop-color="#cba579"/></linearGradient><linearGradient id="p9_gW" x1="0" y1="0" x2="0" y2="1"><stop offset="0" stop-color="#6c725d"/><stop offset=".12" stop-color="#7e846c"/><stop offset=".3" stop-color="#8d9783"/><stop offset=".65" stop-color="#9caa98"/><stop offset="1" stop-color="#b4c0b0"/></linearGradient><linearGradient id="p9_gWh" x1="0" y1="0" x2="1" y2="0"><stop offset="0" stop-color="#6f8068" stop-opacity=".55"/><stop offset=".4" stop-color="#6f8068" stop-opacity="0"/><stop offset="1" stop-color="#c9d2c4" stop-opacity=".35"/></linearGradient><linearGradient id="p9_gWb" x1="0" y1="0" x2="1" y2="0"><stop offset=".5" stop-color="#7d7556" stop-opacity="0"/><stop offset="1" stop-color="#80714f" stop-opacity=".7"/></linearGradient><pattern id="p9_gRug" width="26" height="14" patternUnits="userSpaceOnUse"><path d="M0 7 L6.500 1 L13 7 L19.500 13 L26 7 M3 12 h5 M16 3 h5" stroke="#8d8a7b" stroke-width=".9" fill="none" opacity=".6"/></pattern><pattern id="p9_gCane" width="3" height="3" patternUnits="userSpaceOnUse"><path d="M0 1.500 H3 M1.500 0 V3" stroke="#a97c44" stroke-width=".5" opacity=".7"/></pattern><clipPath id="p9_gMc"><circle cx="275.900" cy="215.500" r="81.500"/></clipPath></defs><rect x="0.0" y="0.0" width="556.0" height="556.0" fill="#8f9a86" /><rect x="0.0" y="107.0" width="556.0" height="300.0" fill="url(#p9_gW)" /><rect x="0.0" y="107.0" width="556.0" height="300.0" fill="url(#p9_gWh)" /><rect x="0.0" y="107.0" width="556.0" height="22.0" fill="url(#p9_gWb)" /><rect x="0.0" y="129.0" width="556.0" height="22.0" fill="url(#p9_gWb)" opacity=".6"/><rect x="0.0" y="151.0" width="556.0" height="22.0" fill="url(#p9_gWb)" opacity=".25"/><rect x="0.0" y="0.0" width="556.0" height="40.5" fill="url(#p9_gB1)" /><rect x="0.0" y="40.0" width="556.0" height="50.5" fill="url(#p9_gB2)" /><rect x="0.0" y="40.0" width="556.0" height="50.5" fill="url(#p9_gB2h)" /><rect x="0.0" y="90.0" width="556.0" height="17.3" fill="url(#p9_gB3)" /><line x1="0.0" y1="107.3" x2="556.0" y2="107.3" stroke="#5f5a45" stroke-width="1.2" opacity=".6"/><rect x="481.0" y="107.0" width="75.0" height="300.0" fill="#d8ccbb" /><rect x="481.0" y="107.0" width="75.0" height="16.0" fill="#c9ab86" /><rect x="481.0" y="123.0" width="46.0" height="280.0" fill="#d6c8b4" /><rect x="527.0" y="123.0" width="29.0" height="280.0" fill="#efe7da" /><line x1="540.0" y1="180.0" x2="536.0" y2="400.0" stroke="#2b2824" stroke-width="1.6" /><rect x="538.0" y="182.0" width="18.0" height="220.0" fill="#cbb79c" opacity=".7"/><rect x="0.0" y="388.0" width="556.0" height="12.0" fill="#c9a87c" /><rect x="0.0" y="396.0" width="556.0" height="160.0" fill="#dedacb" /><rect x="0.0" y="396.0" width="556.0" height="160.0" fill="url(#p9_gRug)" /><polygon points="520.0,380.0 556.0,380.0 556.0,430.0 540.0,420.0" fill="#d29a52" /><circle cx="275.9" cy="215.5" r="82.5" fill="#8e9b87" /><g clip-path="url(#p9_gMc)"><rect x="190.0" y="130.0" width="175.0" height="24.5" fill="#e0c9a8" /><path d="M194 154.500 Q276 146 358 154.500 V130 H194 Z" fill="#e3ceae"/><rect x="190.0" y="154.5" width="175.0" height="160.0" fill="#8a9783" /><rect x="190.0" y="154.5" width="175.0" height="10.0" fill="#76806b" opacity=".6"/><rect x="226.0" y="186.0" width="68.5" height="88.0" fill="#cfc3a5" stroke="#1f1d1a" stroke-width="2"/><rect x="228.0" y="200.0" width="30.0" height="14.0" fill="#bfb08f" /><rect x="250.0" y="214.0" width="43.0" height="20.0" fill="#d8cdb0" /><rect x="228.0" y="240.0" width="40.0" height="16.0" fill="#c4b697" /><circle cx="306.0" cy="198.0" r="4.0" fill="#d9d7c0" /><path d="M302 198 a4 4 0 0 1 8 0 z" fill="#6f7d55"/><circle cx="306.0" cy="222.0" r="4.0" fill="#d9d7c0" /><path d="M302 222 a4 4 0 0 1 8 0 z" fill="#6f7d55"/><circle cx="306.0" cy="246.0" r="4.0" fill="#d9d7c0" /><path d="M302 246 a4 4 0 0 1 8 0 z" fill="#6f7d55"/></g><circle cx="275.9" cy="215.5" r="82.2" fill="none" stroke="#26231f" stroke-width="1.500"/><rect x="130.8" y="192.0" width="22.0" height="52.0" fill="#7f8c58" rx="11"/><path d="M131.8 226 v8 a10 10 0 0 0 20 0 v-8 z" fill="#e9e7b8"/><ellipse cx="141.8" cy="238.0" rx="17.0" ry="14.0" fill="#e6e8c0" opacity=".35"/><path d="M139.8 204 v-8 a9 9 0 0 1 18 0 v4" stroke="#5f6a42" stroke-width="2" fill="none"/><rect x="394.0" y="192.0" width="22.0" height="52.0" fill="#7f8c58" rx="11"/><path d="M395.0 226 v8 a10 10 0 0 0 20 0 v-8 z" fill="#e9e7b8"/><ellipse cx="405.0" cy="238.0" rx="17.0" ry="14.0" fill="#e6e8c0" opacity=".35"/><path d="M403.0 204 v-8 a9 9 0 0 1 18 0 v4" stroke="#5f6a42" stroke-width="2" fill="none"/><rect x="155.3" y="315.2" width="241.5" height="66.8" fill="#c99a5b" /><rect x="155.3" y="315.2" width="241.5" height="3.5" fill="#dbb27a" /><rect x="162.0" y="321.0" width="70.0" height="17.0" fill="#3a2c1e" /><rect x="240.0" y="321.0" width="72.0" height="17.0" fill="#3a2c1e" /><rect x="320.0" y="321.0" width="70.0" height="17.0" fill="#3a2c1e" /><rect x="170.0" y="327.0" width="46.0" height="11.0" fill="#c9b8a3" /><rect x="182.0" y="324.0" width="38.0" height="4.0" fill="#a85b4a" /><rect x="252.0" y="326.0" width="50.0" height="12.0" fill="#e9e4d8" /><rect x="258.0" y="322.0" width="36.0" height="4.0" fill="#d9a98a" /><rect x="331.0" y="324.0" width="45.0" height="14.0" fill="#a5673c" /><rect x="155.3" y="340.0" width="241.5" height="3.0" fill="#b88a50" /><rect x="160.0" y="344.0" width="232.0" height="33.0" fill="#d3a969" /><rect x="160.0" y="344.0" width="232.0" height="33.0" fill="url(#p9_gCane)" /><line x1="236.0" y1="343.0" x2="236.0" y2="378.0" stroke="#b08046" stroke-width="1.6" /><line x1="315.0" y1="343.0" x2="315.0" y2="378.0" stroke="#b08046" stroke-width="1.6" /><rect x="155.3" y="378.0" width="241.5" height="4.0" fill="#b98b52" /><line x1="172.0" y1="382.0" x2="170.0" y2="401.0" stroke="#26231f" stroke-width="2.2" /><line x1="170.0" y1="401.0" x2="180.0" y2="392.0" stroke="#26231f" stroke-width="1.6" /><line x1="372.0" y1="382.0" x2="374.0" y2="401.0" stroke="#26231f" stroke-width="2.2" /><line x1="366.0" y1="382.0" x2="366.0" y2="396.0" stroke="#26231f" stroke-width="1.6" /><ellipse cx="276.0" cy="392.0" rx="110.0" ry="5.0" fill="#7f8a78" opacity=".35"/><circle cx="179.0" cy="298.0" r="14.0" fill="#e9e4dc" /><ellipse cx="175.0" cy="293.0" rx="6.0" ry="5.0" fill="#f7f4ee" opacity=".8"/><ellipse cx="204.0" cy="307.0" rx="8.0" ry="4.5" fill="#d9d6c8" /><ellipse cx="214.0" cy="304.0" rx="5.0" ry="6.0" fill="#cfd0c4" /><path d="M166.6 280.6 l6.0 -3.1 M165.8 277.5 l2.8 6.5 M168.2 270.2 l4.7 3.1 M190.1 283.8 l-1.3 -3.6 M193.6 276.7 l-4.4 -6.4 M179.1 279.2 l-3.9 -0.7 M180.9 283.5 l6.6 1.3 M164.3 282.0 l-7.9 -1.0 M165.0 278.0 l-5.3 1.4 M194.0 277.8 l4.5 -7.1 M174.9 283.3 l-1.0 3.9 M179.0 270.4 l3.5 -5.1 M192.2 275.1 l5.0 0.0 M187.3 273.6 l6.2 -0.8 M189.4 282.2 l1.0 -5.3 M185.9 281.6 l8.6 -2.0 M183.9 282.0 l3.2 2.3 M180.0 273.2 l-6.2 -2.4 M183.0 287.6 l5.4 5.9 M185.7 283.2 l1.2 5.2 M192.1 276.0 l-3.2 9.1 M180.5 285.3 l4.9 -6.3 M190.9 285.0 l1.2 5.2 M179.3 271.2 l-1.2 3.8 M188.3 282.9 l0.3 7.7 M170.5 283.8 l6.7 -1.7 M164.7 273.0 l1.9 4.2 M190.1 272.1 l0.0 4.8 M177.0 266.4 l3.3 9.6 M187.2 271.7 l-3.7 2.0 M193.2 280.8 l0.6 8.4 M177.4 288.9 l-4.6 -3.2 M184.1 287.1 l4.6 2.1 M164.2 274.0 l-4.1 -3.6 M184.3 275.3 l5.4 0.6 M174.3 279.0 l2.7 5.4 M172.8 276.1 l-6.3 7.4 M190.9 276.8 l-2.7 -7.1 M179.9 279.7 l9.8 1.1 M173.2 266.8 l7.9 1.1 M194.8 289.1 l-4.4 9.5 M212.9 292.0 l-0.8 -9.8 M204.2 278.0 l2.7 -9.5 M199.1 296.0 l7.8 -5.6 M195.7 293.3 l4.9 -5.7 M199.8 282.8 l-6.7 -3.9 M213.4 292.6 l9.7 -0.4 M204.0 280.6 l-0.7 -7.5 M194.8 292.0 l7.6 4.4 M214.1 289.7 l-5.1 0.6 M202.3 280.0 l-7.5 -6.6 M205.0 289.3 l-2.6 7.8 M206.5 292.7 l6.7 -4.5 M194.4 292.0 l-3.8 7.2 M207.5 295.5 l3.4 -9.3 M210.4 282.9 l-5.0 -2.9 M210.5 294.4 l4.9 -8.1 M202.2 276.6 l-0.8 4.6 M199.0 289.9 l1.4 6.2 M199.1 282.0 l-3.7 8.6 M213.0 287.1 l3.3 1.7 M206.7 286.2 l-1.9 -7.2 M201.1 298.0 l4.4 0.5 M203.2 288.5 l2.5 -4.5 M206.6 290.0 l-4.6 -4.8 M198.3 280.9 l3.6 -9.6 M202.9 283.1 l-4.7 0.7 M213.2 288.6 l-1.1 -4.6 M204.0 295.0 l-2.3 -6.8 M197.1 281.1 l-7.1 5.6 M207.9 286.0 l7.8 -3.5 M210.5 293.9 l-7.0 -7.0 M198.5 294.3 l6.6 -6.2 M212.7 285.2 l-2.9 -4.0 M203.1 277.3 l-5.4 -6.6 M207.6 299.1 l10.3 -1.3 M194.6 285.5 l-4.2 8.9 M209.4 282.4 l5.7 3.3 M195.0 284.7 l-3.7 0.3 M206.1 285.2 l1.5 -4.5" stroke="#5b8a45" stroke-width="1.6" fill="none" stroke-linecap="round" opacity="0.9"/><rect x="335.0" y="285.0" width="26.0" height="30.0" fill="#c9c9bd" opacity=".8"/><ellipse cx="338.0" cy="306.0" rx="16.0" ry="9.0" fill="#b0523f" /><ellipse cx="333.0" cy="299.0" rx="9.0" ry="6.0" fill="#e0a23c" /><ellipse cx="346.0" cy="309.0" rx="10.0" ry="6.0" fill="#7d3a5a" /><polygon points="362.0,288.0 388.0,288.0 385.0,315.0 365.0,315.0" fill="#c79b5e" /><path d="M369.6 284.9 l2.5 3.0 M364.8 277.2 l3.8 -6.0 M382.9 275.9 l3.3 -1.1 M376.6 284.4 l-1.8 7.1 M369.4 273.0 l3.5 -5.3 M372.2 283.1 l4.7 -6.9 M377.9 286.0 l6.0 -1.2 M370.2 276.2 l-5.9 -1.3 M373.4 277.1 l6.0 -1.2 M366.3 282.7 l-5.5 -2.3 M373.9 275.8 l-5.3 -1.3 M386.1 275.7 l-0.7 5.8 M380.5 282.2 l3.4 -7.7 M368.3 278.7 l2.4 6.3 M378.9 276.5 l0.6 -3.1 M377.0 282.0 l-1.9 -4.6 M369.2 283.6 l5.8 4.5 M381.1 282.5 l-0.0 4.2 M367.2 276.9 l-3.9 3.9 M370.3 277.3 l1.9 6.5 M369.4 273.0 l4.0 -5.4 M378.6 274.6 l-0.5 -7.8 M380.5 275.1 l-3.4 7.8 M377.4 286.8 l2.9 -2.5 M375.7 285.7 l-0.2 3.6 M378.8 272.9 l0.9 -3.6 M366.9 282.3 l4.2 0.5 M370.3 270.2 l3.6 -0.7 M364.6 277.7 l-7.1 -0.1 M376.2 280.2 l2.5 2.0 M366.8 275.9 l-3.5 -1.6 M377.2 281.7 l4.8 -7.5 M378.3 276.8 l8.1 3.3 M364.8 279.9 l-2.7 5.1 M367.2 277.4 l-2.5 -1.8 M371.7 270.1 l2.4 5.2 M374.5 272.3 l1.3 3.8 M373.5 277.9 l6.1 -4.9 M371.9 270.0 l-3.7 -3.9 M368.1 274.3 l7.8 -0.9 M374.4 286.6 l-0.3 -7.7 M378.0 272.7 l6.6 -5.0 M371.4 270.6 l0.5 -5.4 M374.5 275.6 l-3.2 4.9 M382.1 278.4 l-4.3 -5.2" stroke="#4f8a3c" stroke-width="1.8" fill="none" stroke-linecap="round" opacity="0.95"/><path d="M28.0 118.0 Q34.3 202.7 95.0 262.0 Q88.7 177.3 28.0 118.0 Z" fill="#264a25"/><path d="M107.0 139.0 Q82.5 206.5 112.0 272.0 Q136.5 204.5 107.0 139.0 Z" fill="#2f5a2c"/><path d="M120.0 165.0 Q102.1 215.3 128.0 262.0 Q145.9 211.7 120.0 165.0 Z" fill="#1f3d20"/><path d="M20.0 220.0 Q24.6 272.7 70.0 300.0 Q65.4 247.3 20.0 220.0 Z" fill="#3a6a35"/><path d="M150.0 240.0 Q120.7 262.8 120.0 300.0 Q149.3 277.2 150.0 240.0 Z" fill="#264a25"/><path d="M0.0 205.0 Q0.1 256.9 40.0 290.0 Q39.9 238.1 0.0 205.0 Z" fill="#2f5a2c"/><path d="M70.0 300.0 Q126.4 297.8 170.0 262.0 Q113.6 264.2 70.0 300.0 Z" fill="#1f3d20"/><path d="M120.0 300.0 Q163.9 299.9 200.0 275.0 Q156.1 275.1 120.0 300.0 Z" fill="#3a6a35"/><path d="M60.0 330.0 Q49.6 302.2 20.0 300.0 Q30.4 327.8 60.0 330.0 Z" fill="#264a25"/><path d="M110.0 330.0 Q145.4 335.2 175.0 315.0 Q139.6 309.8 110.0 330.0 Z" fill="#2f5a2c"/><path d="M30.0 340.0 Q19.4 321.7 0.0 330.0 Q10.6 348.3 30.0 340.0 Z" fill="#1f3d20"/><path d="M80.0 350.0 Q107.4 356.8 130.0 340.0 Q102.6 333.2 80.0 350.0 Z" fill="#3a6a35"/><path d="M225.0 290.0 Q204.1 277.1 180.0 282.0 Q200.9 294.9 225.0 290.0 Z" fill="#264a25"/><path d="M33.3 348.3 l-3.8 -6.5 M17.8 268.2 l-7.8 -1.7 M54.0 300.0 l-3.4 -10.8 M34.5 299.1 l-8.3 -7.4 M29.2 331.7 l5.9 2.0 M23.3 311.0 l-0.1 12.7 M9.7 289.0 l9.4 -2.0 M54.0 298.8 l1.9 -4.8 M8.6 274.9 l12.4 3.6 M41.0 329.0 l4.4 7.8 M24.4 292.2 l7.8 -2.8 M7.1 293.5 l-4.7 5.3 M17.4 269.0 l-2.3 10.7 M29.0 305.7 l0.2 4.9 M44.4 336.2 l-9.7 8.0 M29.9 288.8 l13.0 -0.9 M55.6 321.2 l-7.9 3.8 M44.6 295.9 l-12.8 -1.9 M26.5 266.3 l11.7 -1.6 M21.9 289.7 l-6.1 -6.1 M32.0 310.9 l-5.5 -1.0 M7.0 314.4 l-6.6 1.9 M13.1 284.0 l1.6 -9.1 M59.3 299.3 l-0.7 -6.6 M51.4 331.0 l2.2 -9.9 M20.1 320.2 l-3.8 -8.8 M10.0 278.3 l0.1 -6.2 M30.2 349.5 l10.7 -6.3 M37.2 303.0 l-1.1 8.3 M23.1 288.8 l-5.0 -1.3 M51.1 321.3 l-9.7 -3.2 M15.5 324.7 l1.9 7.4 M29.1 254.2 l5.0 2.5 M38.6 263.2 l0.8 -6.4 M16.4 311.6 l2.9 -7.3 M13.0 259.1 l-4.3 8.4 M29.3 252.0 l-7.0 3.4 M53.0 326.8 l4.6 2.5 M10.8 286.3 l-2.8 -6.6 M31.3 286.4 l2.4 10.2 M44.4 313.5 l-1.7 -10.6 M27.7 318.5 l-6.9 8.6 M23.1 312.8 l-2.4 -9.3 M55.4 276.3 l7.2 -4.4 M35.4 273.9 l-3.3 7.4 M56.0 281.1 l0.1 7.8 M18.0 322.5 l-6.3 4.9 M37.6 335.3 l2.7 -9.0 M41.6 267.9 l5.0 10.1 M41.7 282.0 l9.1 1.3 M8.3 289.7 l10.1 -2.2 M32.5 288.1 l-11.1 -3.4 M37.4 307.2 l-1.0 -12.6 M50.6 320.2 l6.9 8.8 M21.2 280.1 l2.1 11.2 M4.0 294.1 l-5.9 4.6 M54.1 291.9 l-9.3 0.4 M25.4 258.6 l7.1 -4.2 M41.3 263.8 l7.1 -9.4 M44.2 259.3 l9.9 -2.7 M26.7 356.5 l2.7 -7.9 M46.6 365.1 l-0.7 -13.4 M48.4 368.1 l2.4 8.0 M49.7 386.6 l6.8 2.6 M84.2 374.9 l1.0 -6.0 M85.0 367.2 l-11.0 -6.4 M72.8 362.1 l2.6 5.9 M63.1 383.6 l-5.4 -3.7 M68.4 373.6 l5.3 10.0 M48.8 379.2 l3.6 -8.0 M57.5 386.3 l6.5 -3.9 M22.6 352.0 l-6.5 0.7 M97.1 368.4 l2.5 -7.6 M31.7 356.5 l-2.1 13.3 M49.3 348.6 l8.7 0.6 M35.3 378.1 l-2.3 -9.7 M68.7 369.3 l-3.0 6.2 M79.6 345.3 l-8.8 -10.2 M57.0 380.4 l6.7 9.3 M96.3 360.2 l6.8 -9.8 M78.1 367.2 l-1.1 -5.3 M32.8 362.4 l9.4 -2.7 M73.8 348.0 l2.0 -8.0 M70.5 355.8 l2.9 -5.7 M32.1 354.5 l6.6 10.0 M51.6 374.5 l6.4 3.3 M26.9 364.8 l-6.8 8.2 M79.8 370.8 l-12.8 3.1 M75.5 340.1 l7.9 0.6 M55.2 346.8 l-7.9 -3.4 M99.7 361.8 l1.9 -6.1 M43.9 349.9 l-6.7 6.6 M53.1 375.5 l-8.2 6.6 M59.3 372.5 l-0.9 -7.4 M88.2 352.9 l-1.2 -7.4 M65.6 352.5 l3.4 4.1 M45.2 338.8 l3.5 7.3 M76.0 341.6 l5.5 3.5 M67.8 368.2 l-4.3 2.8 M83.0 351.2 l-10.3 -0.7 M63.8 334.8 l-5.6 4.9 M55.8 361.8 l-8.8 6.3 M95.3 357.2 l-5.3 -8.4 M82.9 361.9 l-5.7 8.7 M79.3 370.7 l-11.6 -0.7 M74.2 340.5 l6.2 9.6 M84.3 348.1 l-5.4 7.2 M81.2 378.4 l9.1 -0.8 M52.1 335.0 l4.2 12.3 M47.6 351.1 l5.8 3.3 M30.4 349.2 l-6.1 11.3 M42.5 374.6 l9.4 9.3 M85.0 380.0 l-9.2 -2.6 M40.9 354.7 l11.3 -7.2 M72.8 340.2 l8.6 8.3 M50.9 385.7 l0.6 9.6 M68.4 349.5 l-5.0 -1.5 M76.6 362.4 l12.9 -1.1 M47.9 347.0 l-5.3 -9.8 M37.4 374.6 l1.5 -4.4 M29.3 276.0 l5.0 6.2 M17.4 242.9 l-6.8 -0.9 M14.5 240.4 l-3.0 -3.8 M21.4 236.6 l9.6 -2.5 M12.4 254.8 l-7.6 -7.5 M25.9 215.4 l-13.4 1.2 M34.7 218.6 l-7.1 4.5 M7.6 234.7 l-9.1 -1.5 M7.7 265.7 l-2.1 4.5 M22.1 212.5 l-1.1 -9.8 M25.1 227.9 l-4.3 -2.8 M34.5 268.8 l-8.1 -0.1 M40.8 260.7 l-6.6 -1.1 M20.6 273.6 l0.5 5.1 M41.7 229.2 l-6.2 -10.6 M9.2 267.0 l2.0 11.0 M7.6 234.5 l9.5 6.8 M35.4 270.6 l4.3 -1.4 M25.4 271.9 l-2.3 4.5 M39.3 227.9 l-6.2 4.6 M21.3 245.6 l12.3 2.4 M20.0 276.4 l12.2 -5.4 M16.0 253.1 l-3.6 12.3 M32.0 239.3 l4.0 -6.5 M16.8 252.9 l9.8 -9.2 M29.7 280.4 l4.5 11.6 M31.2 254.0 l-1.1 -7.2 M40.1 228.1 l-1.3 -5.6 M18.5 213.5 l-4.9 1.8 M26.9 271.9 l-1.5 -6.1 M29.1 267.6 l-5.9 -10.0 M13.7 273.4 l7.3 -6.5 M26.4 271.8 l9.4 -4.7 M22.3 281.5 l11.3 7.2 M11.5 260.6 l-4.8 -0.9 M16.4 237.5 l-0.1 11.7 M34.1 261.1 l0.2 -6.7 M22.3 279.1 l4.9 11.6 M28.7 249.4 l-10.9 2.7 M10.6 275.6 l-6.1 0.0 M9.9 238.9 l-6.6 8.0 M28.0 221.9 l-12.1 -0.4 M19.2 223.6 l5.8 -1.8 M26.5 234.0 l-5.1 -4.2 M8.6 262.9 l2.6 -11.3 M26.2 277.9 l1.7 9.6 M21.2 250.0 l-9.0 -6.2 M8.2 233.5 l2.5 5.3 M39.0 253.1 l-7.8 3.4 M23.5 285.6 l11.4 5.6 M11.6 237.6 l1.7 -6.4 M31.8 267.7 l7.1 1.9 M14.5 230.0 l-0.9 9.8 M40.4 269.1 l3.2 6.0 M33.9 278.0 l5.6 -10.1 M36.9 259.6 l-4.2 4.9 M29.0 248.5 l-11.3 0.7 M32.6 248.7 l-10.8 3.1 M34.5 254.8 l4.5 -3.7 M16.5 263.6 l-4.6 2.4" stroke="#3f7a35" stroke-width="2.2" fill="none" stroke-linecap="round" opacity="0.85"/><path d="M95 260 L88 370 M110 270 L94 370 M70 300 L84 372" stroke="#3f6a35" stroke-width="1.6" fill="none"/><polygon points="70.0,368.0 116.0,368.0 112.0,416.0 75.0,416.0" fill="#e9e6dc" /><line x1="72.0" y1="374.0" x2="114.0" y2="374.0" stroke="#2d2b27" stroke-width="2.6" stroke-dasharray="7 4"/><line x1="72.0" y1="383.0" x2="114.0" y2="383.0" stroke="#2d2b27" stroke-width="2.6" stroke-dasharray="7 4"/><line x1="72.0" y1="392.0" x2="114.0" y2="392.0" stroke="#2d2b27" stroke-width="2.6" stroke-dasharray="7 4"/><line x1="72.0" y1="401.0" x2="114.0" y2="401.0" stroke="#2d2b27" stroke-width="2.6" stroke-dasharray="7 4"/><line x1="72.0" y1="410.0" x2="114.0" y2="410.0" stroke="#2d2b27" stroke-width="2.6" stroke-dasharray="7 4"/><polygon points="32.0,416.0 84.0,416.0 80.0,456.0 36.0,456.0" fill="#e6dfcc" /><line x1="34.0" y1="422.0" x2="82.0" y2="422.0" stroke="#4a4238" stroke-width="1.6" stroke-dasharray="3 2"/><line x1="34.0" y1="430.0" x2="82.0" y2="430.0" stroke="#4a4238" stroke-width="1.6" stroke-dasharray="3 2"/><line x1="34.0" y1="438.0" x2="82.0" y2="438.0" stroke="#4a4238" stroke-width="1.6" stroke-dasharray="3 2"/><line x1="34.0" y1="446.0" x2="82.0" y2="446.0" stroke="#4a4238" stroke-width="1.6" stroke-dasharray="3 2"/><polygon points="0.0,408.0 27.0,408.0 25.0,448.0 0.0,448.0" fill="#8a6a45" /><line x1="0.0" y1="440.0" x2="26.0" y2="440.0" stroke="#3a2c20" stroke-width="2" /><line x1="6.0" y1="330.0" x2="8.0" y2="410.0" stroke="#5a4a35" stroke-width="1.8" /><polygon points="424.0,312.0 490.0,312.0 486.0,338.0 436.0,338.0" fill="#c9783a" /><polygon points="408.0,335.0 478.0,330.0 482.0,372.0 414.0,378.0" fill="#ece6da" /><line x1="412.0" y1="334.0" x2="482.0" y2="330.0" stroke="#f3efe6" stroke-width="4" stroke-dasharray="4 3"/><polygon points="386.0,378.0 460.0,374.0 468.0,384.0 396.0,390.0" fill="#e2d2b6" /><path d="M384 350 Q376 380 392 400 L420 420 M460 374 L462 424 Q470 432 480 424 M384 350 Q400 342 418 346 M396 390 L380 418 Q392 426 410 416" stroke="#c9a35e" stroke-width="1.8" fill="none"/><path d="M476 354 H537 Q540 366 522 376 Q528 400 540 420 Q538 432 506 434 Q476 432 478 420 Q490 398 494 376 Q474 366 476 354 Z" fill="#ddc6a0"/><ellipse cx="506.5" cy="354.0" rx="30.5" ry="5.0" fill="#e9d6b4" /><path d="M516.7 332.1 l0.6 -7.4 M505.8 335.0 l-4.2 -1.4 M493.7 332.3 l-3.3 3.8 M514.3 329.1 l5.3 1.3 M503.3 328.0 l-4.0 6.0 M511.1 324.2 l4.4 -3.8 M496.4 335.7 l-5.6 5.2 M506.5 335.8 l2.6 5.8 M507.8 333.9 l1.3 5.7 M502.1 336.2 l7.1 -0.3 M508.5 326.6 l-2.5 2.3 M502.4 324.4 l-0.5 3.1 M507.5 334.7 l-6.7 5.3 M503.7 324.9 l-2.5 3.0 M511.6 327.7 l0.7 -7.3 M506.4 329.2 l-2.3 4.8 M514.8 334.7 l-3.5 6.8 M502.2 329.7 l-3.5 2.7 M509.5 331.0 l-2.6 -1.8 M502.0 336.0 l-3.7 -1.0 M503.4 325.1 l-1.1 -6.9 M508.3 333.6 l-1.4 7.1 M498.8 333.5 l2.9 -3.3 M503.2 335.7 l0.7 3.2 M514.4 331.2 l-7.2 -3.2 M511.5 329.2 l-4.1 -7.5 M507.1 338.1 l-4.4 -7.6 M508.9 326.4 l-2.4 -2.6 M498.2 332.7 l4.9 2.0 M501.0 336.2 l-0.7 3.9 M498.2 334.0 l3.5 6.1 M505.2 333.0 l-3.0 4.6 M510.3 336.2 l-1.9 -6.0 M504.4 328.6 l-4.0 3.3 M512.0 332.4 l5.6 2.0" stroke="#4f8a3c" stroke-width="1.8" fill="none" stroke-linecap="round" opacity="0.95"/><rect x="499.0" y="340.0" width="12.0" height="14.0" fill="#cfd6cf" opacity=".8"/><path d="M504.7 235.9 l-3.8 7.4 M535.2 253.5 l9.1 -7.4 M518.4 282.6 l4.2 9.8 M501.0 224.1 l-7.7 9.0 M541.4 237.6 l-8.6 -8.8 M505.8 263.7 l-2.4 14.4 M531.7 233.0 l5.0 -3.2 M532.2 271.5 l-3.4 8.8 M530.0 247.8 l2.8 7.5 M514.7 232.5 l11.5 0.1 M510.0 262.1 l-12.6 0.5 M500.4 240.6 l-13.6 -5.5 M534.7 245.5 l-8.7 12.5 M511.5 281.2 l-4.4 -12.3 M543.0 241.8 l6.6 10.4 M500.5 251.8 l-5.9 6.3 M519.9 220.8 l0.7 8.2 M515.0 265.0 l-6.9 -0.6 M526.3 254.1 l10.6 7.9 M533.3 267.5 l1.5 -10.7 M532.6 281.8 l4.2 -4.4 M519.5 278.5 l2.8 -9.4 M517.2 230.4 l-1.9 -8.9 M508.6 280.1 l8.0 -12.2 M504.6 239.3 l-3.3 -11.9 M531.3 218.7 l6.8 6.8 M513.9 233.2 l2.3 5.2 M498.3 230.1 l6.9 -1.3 M513.6 226.1 l-6.7 -7.3 M543.6 233.8 l12.7 4.0 M523.9 255.6 l-3.0 13.2 M529.0 249.4 l-2.8 5.1 M502.6 242.7 l-6.2 6.4 M527.4 215.2 l-2.1 9.6 M503.2 226.4 l9.7 -1.2 M513.4 222.3 l2.2 -6.8 M523.9 261.7 l7.6 -3.4 M511.0 251.0 l-2.5 5.1 M511.0 243.9 l-6.0 -6.0 M522.5 277.5 l-5.6 6.2 M526.3 253.2 l7.0 -5.6 M529.8 258.1 l-16.4 1.7 M527.2 285.6 l-10.0 1.0 M525.7 226.4 l10.8 4.1 M508.7 223.7 l-2.7 15.6 M531.7 274.5 l-13.7 5.1 M510.0 285.9 l7.3 1.2 M518.0 306.3 l-8.7 10.7 M504.1 322.7 l7.8 0.5 M515.0 299.1 l-14.2 -2.5 M518.8 271.9 l-11.6 8.5 M524.3 273.7 l6.6 -0.6 M530.1 293.4 l-2.3 -7.9 M515.9 297.2 l-7.1 -3.7 M498.1 313.3 l-8.0 -12.0 M496.2 320.4 l-5.2 6.8 M526.1 289.2 l7.6 5.1 M511.3 284.4 l-0.5 -11.5 M506.6 287.0 l5.6 4.4 M500.4 318.0 l11.0 0.7 M498.0 311.0 l-15.5 -3.7 M519.9 330.6 l-5.9 12.4 M535.2 321.3 l-14.6 6.8 M515.6 321.3 l-2.0 -7.2 M508.4 327.7 l8.6 -2.9 M519.3 318.6 l7.1 -0.5 M499.8 284.3 l-4.8 -6.2 M490.9 278.6 l7.7 -9.7 M489.4 299.2 l11.1 9.7 M504.5 278.7 l-5.1 -8.7 M501.2 310.8 l-9.5 -7.0 M506.6 299.4 l-7.3 -7.5 M492.7 285.5 l6.5 -3.0 M482.7 306.6 l-0.7 -8.9 M509.5 266.3 l-12.3 8.7 M532.9 324.2 l-8.1 0.5 M525.0 276.9 l13.5 -5.6 M518.3 276.8 l6.2 -0.2 M529.3 279.1 l-0.1 14.4 M490.9 307.1 l5.1 -5.7 M507.5 326.8 l10.4 5.2 M516.9 276.8 l0.7 14.3 M528.1 276.4 l-14.7 -4.7 M515.4 287.3 l-4.4 4.9 M529.2 304.6 l9.7 -11.0 M521.5 309.7 l-11.4 9.6 M490.9 278.3 l14.7 7.1 M518.4 326.0 l9.6 -9.5 M520.0 326.3 l-5.1 2.4 M503.0 316.1 l-5.9 -6.2 M529.4 314.9 l2.9 6.3 M536.2 310.8 l4.7 4.9 M551.6 321.5 l-4.8 6.0 M553.3 329.2 l-0.8 -9.4 M536.2 347.8 l7.5 9.9 M527.1 342.4 l-8.9 5.7 M524.5 328.8 l-7.5 10.9 M541.1 352.7 l-3.3 14.7 M536.6 357.0 l-4.7 -9.4 M549.1 322.4 l-0.5 -12.1 M536.2 332.4 l-7.5 4.2 M525.4 340.6 l-3.5 12.7 M536.3 316.9 l-5.9 3.7 M546.4 320.8 l-8.1 4.4 M546.3 305.0 l-9.7 -6.2 M552.3 346.6 l8.1 5.0 M530.4 348.1 l-4.5 -8.1 M552.5 312.5 l12.3 1.8 M530.6 333.5 l-8.8 2.0 M534.1 309.5 l16.0 -3.0 M550.0 329.1 l6.0 -11.1 M535.2 301.4 l9.7 4.3 M529.5 344.1 l3.3 16.1 M542.5 347.7 l6.1 7.7 M539.8 321.3 l6.3 11.0 M530.1 312.0 l-0.3 14.4 M538.3 303.8 l7.8 7.3 M554.8 332.8 l14.4 -5.2 M549.4 332.7 l-11.1 -2.5 M550.9 347.1 l-3.5 10.5 M548.5 345.9 l4.4 4.7 M531.4 328.8 l1.4 -8.1 M536.8 333.6 l2.1 10.3 M529.9 322.7 l3.9 -5.4 M543.7 320.5 l11.1 -2.1 M529.6 343.0 l10.6 -12.2 M538.6 331.6 l8.2 11.9 M538.7 304.8 l6.3 9.4 M545.2 331.8 l-5.1 15.3 M530.8 308.4 l9.7 2.9 M547.2 337.2 l11.9 10.1 M534.7 348.5 l-8.7 -12.6 M551.4 322.5 l-15.4 -0.1 M533.1 340.1 l-0.6 -8.3 M532.9 344.5 l-9.3 1.4 M524.0 219.5 l14.0 4.5 M547.1 219.4 l-9.5 -2.9 M536.0 220.0 l-6.2 6.5 M526.4 215.8 l-0.0 -10.9 M546.5 215.6 l5.5 -1.2 M520.3 206.3 l-8.0 9.0 M528.3 221.4 l-9.3 -7.6 M529.9 225.4 l-13.7 -1.4 M540.2 216.6 l-0.1 8.5 M538.3 205.0 l6.3 -7.6 M531.7 227.9 l14.0 8.4 M540.1 207.0 l-6.0 13.2 M538.4 202.5 l13.0 4.9 M548.6 218.8 l-14.9 -5.0 M533.3 213.2 l12.6 -5.5 M533.8 214.4 l-0.8 -10.1 M527.4 200.7 l5.5 -3.2 M537.3 204.6 l0.1 -9.7 M523.7 218.4 l6.7 6.1 M534.5 210.7 l11.0 9.8 M528.3 204.8 l5.2 4.4 M528.5 229.5 l-14.5 -5.8 M537.8 225.0 l-14.3 -3.3 M547.0 225.5 l-5.8 1.0 M524.9 219.1 l-7.2 -14.0 M520.1 215.5 l-10.7 9.1 M547.2 223.5 l6.0 10.3 M538.1 224.0 l4.8 8.0 M524.1 208.7 l-9.0 7.6 M540.9 207.0 l-9.3 -5.4 M545.2 213.9 l-2.6 -7.6 M533.9 228.6 l-7.4 -3.8 M550.0 220.7 l-9.6 9.3 M522.1 220.2 l-15.1 -5.9 M545.2 209.2 l-8.0 0.7 M535.1 209.9 l-5.2 13.9 M549.7 217.9 l-10.5 -4.8 M531.5 220.4 l13.3 -4.2 M536.9 210.3 l1.7 -7.7 M539.1 226.1 l-5.3 -4.3 M536.3 202.8 l12.6 -9.3 M531.0 206.0 l12.8 -4.1 M530.8 229.3 l-1.2 -8.3 M535.0 217.3 l-8.1 -1.9 M532.6 222.8 l7.3 8.0" stroke="#47683c" stroke-width="3.2" fill="none" stroke-linecap="round" opacity="0.85"/><polygon points="536.0,352.0 556.0,352.0 556.0,400.0 538.0,396.0" fill="#a69a8a" /></svg></div><div class="photo" style="left:564px;top:485.29999999999995px;width:370.5px;height:556px;"><svg viewBox="203.50 0.00 371.00 556.00" preserveAspectRatio="none"><defs><linearGradient id="p10_bW" x1="0" y1="0" x2="1" y2="0"><stop offset="0" stop-color="#e3ddd3"/><stop offset=".3" stop-color="#dcd6cc"/><stop offset=".6" stop-color="#d8d2c8"/><stop offset="1" stop-color="#dbd5cb"/></linearGradient><radialGradient id="p10_bRing"><stop offset=".42" stop-color="#dcc8a0"/><stop offset=".44" stop-color="#c99f5a"/><stop offset=".5" stop-color="#d8be8c"/><stop offset=".58" stop-color="#c39a55"/><stop offset=".64" stop-color="#dcc698"/><stop offset=".72" stop-color="#c39a55"/><stop offset=".78" stop-color="#dbc394"/><stop offset=".86" stop-color="#c49b57"/><stop offset=".92" stop-color="#d9bf8e"/><stop offset=".97" stop-color="#c99f5a"/><stop offset="1" stop-color="#cfa763"/></radialGradient></defs><rect x="0.0" y="0.0" width="778.0" height="556.0" fill="url(#p10_bW)" /><rect x="0.0" y="0.0" width="778.0" height="38.5" fill="#e2dbd1" /><line x1="0.0" y1="38.5" x2="778.0" y2="38.5" stroke="#d3ccc1" stroke-width="1.2" /><rect x="690.8" y="38.0" width="88.0" height="518.0" fill="#e4dfd8" /><line x1="690.8" y1="38.0" x2="690.8" y2="440.0" stroke="#cfc9bf" stroke-width="1" /><rect x="0.0" y="428.0" width="778.0" height="128.0" fill="#b99569" /><rect x="0.0" y="424.0" width="778.0" height="5.0" fill="#e9e5de" /><circle cx="370.3" cy="237.4" r="60.8" fill="#dac6a0" /><circle cx="370.3" cy="237.4" r="30.4" fill="none" stroke="#c6a266" stroke-width="1.7"/><circle cx="370.3" cy="237.4" r="37.7" fill="none" stroke="#c6a266" stroke-width="1.7"/><circle cx="370.3" cy="237.4" r="45.0" fill="none" stroke="#c6a266" stroke-width="1.7"/><circle cx="370.3" cy="237.4" r="52.3" fill="none" stroke="#c6a266" stroke-width="1.7"/><circle cx="370.3" cy="237.4" r="59.6" fill="none" stroke="#c59d58" stroke-width="2.4"/><circle cx="370.3" cy="237.4" r="25.8" fill="#e7e3dd" /><circle cx="479.2" cy="178.3" r="60.4" fill="#dac6a0" /><circle cx="479.2" cy="178.3" r="30.2" fill="none" stroke="#c6a266" stroke-width="1.7"/><circle cx="479.2" cy="178.3" r="37.4" fill="none" stroke="#c6a266" stroke-width="1.7"/><circle cx="479.2" cy="178.3" r="44.7" fill="none" stroke="#c6a266" stroke-width="1.7"/><circle cx="479.2" cy="178.3" r="51.9" fill="none" stroke="#c6a266" stroke-width="1.7"/><circle cx="479.2" cy="178.3" r="59.2" fill="none" stroke="#c59d58" stroke-width="2.4"/><circle cx="479.2" cy="178.3" r="26.2" fill="#e7e3dd" /><path d="M345.500 231 H395.100 A25.800 25.800 0 0 1 345.500 231 Z" fill="#15120f"/><rect x="470.5" y="178.5" width="25.0" height="26.0" fill="#15120f" /><rect x="499.5" y="177.5" width="5.0" height="18.0" fill="#15120f" /><line x1="665.0" y1="256.0" x2="665.0" y2="396.0" stroke="#c89a5e" stroke-width="4.5" /><rect x="662.8" y="310.0" width="4.5" height="44.0" fill="#f1eee8" /><rect x="631.6" y="221.0" width="68.4" height="35.0" fill="#dfdbd4" rx="2"/><ellipse cx="712.0" cy="250.0" rx="10.0" ry="26.0" fill="#bdb7ad" opacity=".45"/><path d="M216.0 276.0 l5.7 -19.4 M230.4 261.7 l13.3 2.5 M251.6 288.8 l7.0 -5.0 M219.3 303.8 l-14.5 -4.1 M244.1 301.5 l-3.7 19.5 M233.0 284.1 l2.6 -8.6 M225.2 290.4 l19.2 0.2 M235.0 318.0 l19.1 -2.1 M225.8 338.0 l-16.0 -4.0 M239.1 337.2 l-7.5 -19.1 M243.2 286.5 l-6.0 7.1 M236.0 308.1 l-4.9 14.6 M253.4 300.7 l-5.9 9.7 M239.5 274.8 l-5.5 12.6 M230.3 290.8 l7.2 -1.1 M232.0 263.2 l17.9 2.0 M218.8 322.7 l7.6 0.4 M242.7 335.5 l5.8 16.6 M254.8 283.4 l-6.7 9.9 M209.4 294.6 l13.6 11.0 M239.0 264.5 l19.7 4.6 M244.8 312.7 l-15.2 -12.7 M218.6 332.5 l-10.9 -3.2 M227.5 315.4 l8.0 4.3 M222.3 262.9 l4.1 6.5 M250.9 297.6 l-8.6 5.8 M212.4 279.8 l-12.4 3.5 M255.4 313.1 l13.6 2.8 M237.0 287.7 l-2.3 -20.2 M216.2 274.1 l10.3 8.1 M246.1 329.6 l-3.7 12.8 M256.0 299.8 l13.2 -2.0 M209.9 302.5 l-11.0 1.5 M223.8 308.7 l-14.9 14.5 M251.9 292.1 l-11.7 0.0 M243.5 311.1 l3.8 -18.8 M217.2 327.1 l2.6 -16.5 M220.3 270.1 l-11.0 12.8 M228.5 327.4 l2.1 -16.5 M225.1 337.4 l-8.9 -12.2 M251.2 302.2 l-0.1 16.4 M209.1 308.3 l-10.9 -14.5 M220.0 326.2 l-1.4 -18.5 M218.0 329.7 l11.4 -12.1 M257.1 294.2 l-14.3 -1.6 M244.0 331.6 l12.6 -5.2 M224.1 268.3 l-1.2 -9.3 M235.8 270.1 l-6.5 -11.1 M215.7 275.3 l-11.1 -12.9 M242.2 302.8 l-15.0 5.8 M236.2 332.5 l-5.2 -5.6 M219.8 303.4 l8.4 3.0 M227.5 315.5 l2.6 7.0 M216.3 305.3 l-11.6 -9.9 M233.9 337.9 l12.7 0.1 M229.0 325.2 l14.0 12.3 M228.5 305.4 l-6.3 -5.5 M217.5 293.5 l-17.8 -9.9 M239.0 276.5 l6.2 -14.8 M225.3 311.0 l-12.3 -8.4 M256.7 289.5 l-9.2 -7.5 M232.6 299.2 l11.6 9.4 M224.7 290.1 l-13.4 -14.2 M219.9 318.5 l1.6 11.0 M247.8 295.8 l19.2 -4.8 M221.1 288.5 l13.8 -1.7 M219.3 311.4 l13.8 -1.4 M227.9 326.9 l11.3 10.9 M218.8 307.5 l3.7 -18.2 M250.9 302.4 l-3.0 19.9 M234.6 280.6 l-1.0 9.1 M246.0 298.5 l-10.6 -8.6 M219.6 275.5 l-0.4 -8.6 M232.9 278.1 l-11.4 -2.4 M226.5 327.9 l-11.8 2.7 M231.4 269.3 l10.3 2.4 M208.1 310.5 l11.2 -9.5 M254.8 303.2 l-13.5 6.6 M226.6 269.3 l-19.6 2.2 M219.8 316.5 l5.8 -7.8 M218.3 286.2 l17.1 7.5 M218.9 241.4 l-4.1 17.5 M226.5 254.0 l-14.6 2.0 M213.9 260.3 l8.7 12.5 M223.4 252.7 l2.3 18.3 M225.0 236.4 l16.9 2.7 M235.9 256.0 l-2.3 -7.3 M225.6 248.2 l-12.4 -16.1 M220.8 249.3 l-5.2 19.1 M228.4 278.9 l-7.9 4.8 M219.9 255.6 l9.6 7.7 M225.0 263.1 l-15.5 -7.9 M225.7 252.4 l-10.4 4.7 M214.1 247.6 l11.3 -4.6 M233.0 268.6 l9.2 12.9 M208.7 258.9 l-14.8 -5.3 M221.1 282.2 l-0.5 17.5 M216.9 258.8 l1.2 12.1 M221.5 247.3 l-3.7 -15.7 M231.8 272.5 l7.4 4.7 M216.3 251.8 l9.8 -9.6 M216.4 284.0 l16.9 3.2 M227.1 263.9 l15.8 -4.9 M222.8 270.1 l16.1 -2.8 M224.2 249.9 l-8.5 -8.4 M222.8 277.2 l-9.0 -7.8 M218.1 267.3 l7.8 -14.0 M225.1 241.4 l8.5 -11.4 M213.1 247.5 l-0.8 -12.5 M224.1 263.1 l2.2 7.2 M229.5 246.7 l0.5 -7.0 M209.0 265.3 l-9.5 -8.9 M217.7 262.0 l5.2 7.6 M215.9 273.2 l6.7 -6.2 M221.8 275.8 l5.8 9.4 M222.9 280.7 l19.5 4.0 M212.8 281.3 l-6.3 -15.2 M208.6 265.2 l12.1 11.0 M219.1 283.8 l-1.2 -9.2 M222.7 264.5 l1.0 8.0 M210.8 277.2 l-7.5 8.6 M214.7 263.2 l-1.9 -16.9 M225.6 272.6 l-9.5 -17.8 M216.4 244.4 l7.0 -1.1 M233.5 269.9 l-6.4 4.1 M208.7 251.1 l-11.8 -1.4 M225.1 264.5 l11.2 -8.2 M225.0 257.3 l0.3 7.7 M219.3 264.4 l-0.4 12.7 M220.9 266.4 l20.0 4.8 M226.3 279.3 l-11.8 8.3 M228.8 268.5 l11.4 9.2 M231.5 249.0 l6.2 -7.8 M232.2 262.4 l-14.9 1.3 M214.1 276.6 l-3.0 -19.6 M218.7 278.8 l4.7 -9.0 M227.8 271.1 l15.2 9.3 M225.3 244.8 l5.6 5.9 M222.1 268.7 l-13.6 6.5 M222.1 267.4 l-2.3 -7.3 M224.3 275.3 l-5.9 6.0 M215.1 268.0 l0.2 -14.8 M231.0 245.3 l0.9 -15.0 M210.2 269.6 l-11.4 -16.9 M220.4 235.1 l-2.0 18.3 M218.3 267.3 l8.6 3.8 M221.1 284.6 l-1.7 7.7 M222.9 237.7 l7.6 1.3 M227.7 273.1 l12.9 -15.6 M216.9 250.7 l-10.9 5.2 M221.2 262.9 l-16.0 -9.4 M221.4 250.8 l-9.2 -1.8 M219.6 240.6 l16.8 -6.8 M227.8 271.4 l11.6 -6.8 M213.5 268.0 l2.2 -20.0 M208.5 254.0 l-7.0 -4.8 M225.6 242.1 l19.6 6.7 M232.4 264.7 l-19.2 2.2 M216.9 268.7 l-1.7 9.7 M214.3 253.1 l0.1 -10.4 M245.8 342.0 l18.6 -2.1 M256.5 310.9 l-7.3 5.3 M254.8 311.7 l9.1 2.2 M259.7 344.8 l7.9 -5.7 M252.3 313.7 l-7.8 -17.4 M241.0 311.2 l-5.1 5.0 M239.3 328.3 l5.0 11.4 M249.1 334.5 l-4.7 11.4 M238.4 333.8 l-16.7 12.3 M255.4 303.6 l-5.8 -15.3 M237.8 323.9 l-10.0 11.6 M245.7 310.4 l-1.7 7.9 M257.1 339.3 l-15.4 -8.5 M248.3 313.8 l9.8 -4.7 M249.2 322.1 l0.3 -16.4 M262.8 322.4 l-7.2 -17.3 M249.2 306.6 l3.6 13.8 M255.4 321.1 l14.4 -2.3 M249.4 331.0 l-7.3 6.0 M242.4 306.7 l13.2 -8.3 M246.5 336.5 l-5.5 -13.7 M248.1 312.1 l7.6 -6.5 M247.5 344.6 l-14.1 -13.6 M255.5 350.7 l1.0 -10.1 M259.7 338.7 l9.3 -16.9 M248.8 310.8 l-12.8 6.5 M256.4 320.7 l-3.0 15.2 M255.9 327.3 l8.5 1.6 M240.0 321.1 l3.9 8.8 M240.7 316.5 l-6.3 -16.0 M259.0 337.9 l10.3 -17.6 M244.6 355.1 l-12.2 -15.8 M251.5 354.8 l7.4 -11.5 M255.0 337.8 l4.6 6.9 M256.3 349.2 l13.9 10.8 M248.9 303.0 l5.6 -16.0 M262.2 316.5 l-14.5 -14.5 M253.6 335.8 l9.1 3.9 M243.3 344.4 l-7.4 -15.8 M257.7 339.6 l-11.8 -3.3 M258.0 345.6 l-11.7 11.8 M236.3 330.8 l7.5 -2.7 M250.7 304.6 l-2.5 8.3 M241.7 332.3 l-1.6 -19.8 M244.4 340.9 l-16.8 0.1 M252.6 307.9 l-3.3 11.2 M255.8 312.4 l12.2 4.0 M250.9 354.4 l9.7 4.8 M258.0 341.8 l14.5 -1.4 M239.8 349.0 l10.0 6.5 M250.4 328.0 l1.2 -12.0 M257.0 331.5 l-11.9 3.2 M246.8 329.3 l4.0 20.2 M241.0 337.3 l9.4 5.6 M261.1 323.0 l-7.7 -0.4 M240.3 346.5 l-14.0 6.1 M259.2 316.1 l-4.9 -5.7 M262.1 333.9 l-16.5 10.0 M256.1 304.5 l-15.2 14.5 M250.5 301.7 l10.7 14.4 M237.8 343.9 l10.0 -0.4 M243.6 337.4 l-10.8 2.1 M247.5 320.9 l6.5 11.7 M257.7 338.3 l15.5 -11.7 M250.6 333.9 l9.7 -18.0 M245.8 323.6 l1.7 19.8 M252.3 328.0 l5.2 11.9 M248.7 355.9 l-12.5 12.8 M255.8 347.6 l16.6 -2.6 M253.9 335.4 l-7.6 -9.6 M243.4 345.2 l-17.9 -10.1 M250.6 352.6 l-1.2 14.6 M249.4 319.1 l-16.8 2.0 M262.3 331.3 l-12.3 6.9 M240.4 312.9 l13.1 4.8 M258.4 334.4 l-4.1 6.0 M247.2 349.2 l-11.2 -16.5 M243.0 345.9 l-4.6 -19.6 M263.2 320.7 l-3.0 8.8 M253.5 326.5 l-16.4 5.5" stroke="#d9b88a" stroke-width="2.2" fill="none" stroke-linecap="round" opacity="0.8"/><rect x="214.0" y="340.0" width="8.0" height="90.0" fill="#e9e5de" /><rect x="253.0" y="356.0" width="357.0" height="60.0" fill="#e6e2db" rx="10"/><rect x="253.0" y="338.0" width="18.0" height="78.0" fill="#dedad3" rx="6"/><rect x="268.0" y="394.0" width="330.0" height="28.0" fill="#f0ede8" rx="8"/><rect x="262.0" y="414.0" width="350.0" height="16.0" fill="#e9e6e0" /><rect x="292.0" y="328.0" width="56.0" height="56.0" fill="#d6cbb6" rx="8"/><rect x="330.0" y="332.0" width="66.0" height="60.0" fill="#d2c5ae" rx="8"/><rect x="274.0" y="346.0" width="34.0" height="50.0" fill="#ddd6c8" rx="8"/><rect x="412.0" y="326.0" width="52.0" height="66.0" fill="#cfbfa5" rx="8"/><rect x="464.0" y="328.0" width="66.0" height="66.0" fill="#f3f1ec" rx="8"/><rect x="520.0" y="326.0" width="54.0" height="62.0" fill="#ddd7c6" rx="8"/><rect x="566.0" y="346.0" width="36.0" height="50.0" fill="#e9e6e0" rx="8"/><polygon points="436.0,390.0 520.0,388.0 528.0,440.0 440.0,444.0" fill="#dbcfba" /><path d="M442.5 399.7 h9.2 M459.3 399.7 h9.2 M476.1 399.7 h9.2 M492.9 399.7 h9.2 M509.7 399.7 h9.2 M447.6 407.0 h9.2 M464.4 407.0 h9.2 M481.2 407.0 h9.2 M498.0 407.0 h9.2 M514.8 407.0 h9.2 M442.5 414.3 h9.2 M459.3 414.3 h9.2 M476.1 414.3 h9.2 M492.9 414.3 h9.2 M509.7 414.3 h9.2 M447.6 421.7 h9.2 M464.4 421.7 h9.2 M481.2 421.7 h9.2 M498.0 421.7 h9.2 M514.8 421.7 h9.2 M442.5 429.0 h9.2 M459.3 429.0 h9.2 M476.1 429.0 h9.2 M492.9 429.0 h9.2 M509.7 429.0 h9.2 M447.6 436.3 h9.2 M464.4 436.3 h9.2 M481.2 436.3 h9.2 M498.0 436.3 h9.2 M514.8 436.3 h9.2" stroke="#efe9dc" stroke-width="2.2" fill="none"/><line x1="290.0" y1="430.0" x2="286.0" y2="442.0" stroke="#c89a5e" stroke-width="3" /><line x1="570.0" y1="430.0" x2="574.0" y2="442.0" stroke="#c89a5e" stroke-width="3" /><ellipse cx="436.0" cy="440.0" rx="80.0" ry="16.0" fill="#efede9" /><rect x="397.0" y="382.0" width="18.0" height="52.0" fill="#efece7" rx="7"/><ellipse cx="406.0" cy="428.0" rx="16.0" ry="16.0" fill="#efece7" /><ellipse cx="445.0" cy="434.0" rx="26.0" ry="5.0" fill="#d9c25a" /><ellipse cx="240.0" cy="446.0" rx="36.0" ry="14.0" fill="#ece8df" /><polygon points="625.5,395.0 677.0,395.0 672.0,440.0 630.0,440.0" fill="#cdb994" /><line x1="628.0" y1="410.0" x2="675.0" y2="410.0" stroke="#b39b70" stroke-width="1.5" /><line x1="629.0" y1="424.0" x2="674.0" y2="424.0" stroke="#b39b70" stroke-width="1.5" /><polygon points="680.0,428.0 778.0,460.0 778.0,470.0 690.0,440.0" fill="#d9b58a" /></svg></div></div><div class="top"><svg class="abs" style="left:5px;top:8px" width="15" height="10" viewBox="0 0 30 20"><path fill="#e9e9e9" d="M30 0 L20.400 19 H11.400 L15.400 11.100 H15.200 C11.900 15.500 7 18.300 0 19 V11.300 C0 11.300 4.500 11 7.100 8.200 H0 V0 H8 V6.600 L8.200 6.600 L11.500 0 H17.500 V6.500 L17.700 6.500 L21.100 0 Z"/></svg><div class="abs" style="left:26px;top:0;width:1px;height:27px;background:#2b2b2b"></div><div class="btn" style="left:32px;width:51px;"><svg class="ic" style="left:6.5px;top:3.3px;stroke-width:1.600;color:#c8c8c8;" width="10" height="11.5" viewBox="0 0 16 16" preserveAspectRatio="none"><path d="M3.5 2.500 H9.500 L12.500 5.500 V13.500 H3.500 Z"/><path d="M9.500 2.500 V5.500 H12.500"/></svg><span class="t" style="left:21.5px;top:4.85px;font-size:8.8px">Home</span></div><svg class="ic" style="left:418.5px;top:12.2px;stroke-width:1.467;stroke:#a3a3a3;color:#a3a3a3;" width="9" height="3" viewBox="0 0 12 4" preserveAspectRatio="none"><circle cx="2" cy="2" r="1" fill="currentColor" stroke="none"/><circle cx="6" cy="2" r="1" fill="currentColor" stroke="none"/><circle cx="10" cy="2" r="1" fill="currentColor" stroke="none"/></svg><div class="abs" style="left:440px;top:0;width:33px;height:26px;background:#2f2f2f"></div><svg class="ic" style="left:447.5px;top:6.5px;stroke-width:1.035;color:#c8c8c8;" width="17" height="13" viewBox="0 0 16 12" preserveAspectRatio="none"><path d="M2.500 3 V9.500 H12.500 V6.500"/><path d="M2.500 3 H9"/><path d="M0.800 11.200 H14.200"/><path d="M12.600 0.300 L13.300 2.100 L15.100 2.800 L13.300 3.500 L12.600 5.300 L11.900 3.500 L10.100 2.800 L11.900 2.100 Z" fill="currentColor" stroke="none"/></svg><svg class="ic" style="left:484.8px;top:6.8px;stroke-width:1.389;color:#c8c8c8;" width="9.5" height="12.6" viewBox="0 0 12 16" preserveAspectRatio="none"><rect x="1.200" y="1.200" width="9.600" height="13.600" rx="1"/><path d="M4.500 13 H7.500"/></svg><svg class="ic" style="left:516.5px;top:8.5px;stroke-width:1.467;color:#c8c8c8;" width="12" height="9" viewBox="0 0 16 12" preserveAspectRatio="none"><rect x="1" y="1.500" width="14" height="9" rx="1.200"/><path d="M12.800 4.500 V7.500"/></svg><svg class="ic" style="left:552px;top:6.8px;stroke-width:1.375;color:#c8c8c8;" width="8" height="12.6" viewBox="0 0 10 16" preserveAspectRatio="none"><rect x="1.300" y="1.200" width="7.400" height="13.600" rx="1"/><path d="M4 13 H6"/></svg><div class="t" style="left:582px;top:9.3px;font-size:8.8px;color:#cfcfcf;letter-spacing:.05px">1369 PX</div><div class="btn" style="left:918px;width:83px;"><svg class="ic" style="left:7px;top:5px;stroke-width:1.650;color:#c8c8c8;" width="8" height="8" viewBox="0 0 12 12" preserveAspectRatio="none"><path d="M10.500 1.200 L4.800 6.500 L6 7.700 L11 2 Z" fill="currentColor"/><path d="M4.300 7.300 C2.800 7.300 2.600 9 1.200 10.300 C3 10.900 5.300 10.300 5.300 8.300 Z" fill="currentColor"/></svg><span class="t" style="left:20px;top:4.9px">Designing</span><svg class="ic" style="left:68px;top:7px;stroke-width:1.467;color:#c8c8c8;" width="6" height="4" viewBox="0 0 8 5" preserveAspectRatio="none"><path d="M1 1 L4 4 L7 1"/></svg></div><svg class="ic" style="left:1013px;top:7px;stroke-width:1.467;color:#c8c8c8;" width="12" height="12" viewBox="0 0 16 16" preserveAspectRatio="none"><path d="M3 7.500 A5 5 0 0 1 12 5"/><path d="M13 8.500 A5 5 0 0 1 4 11"/><path d="M12.300 2.500 V5.200 H9.600"/><path d="M3.700 13.500 V10.800 H6.400"/></svg><svg class="ic" style="left:1037px;top:8px;stroke-width:1.467;color:#c8c8c8;" width="12" height="10" viewBox="0 0 16 14" preserveAspectRatio="none"><path d="M5 3.500 L1.500 7 L5 10.500"/><path d="M11 3.500 L14.500 7 L11 10.500"/><path d="M9.200 2 L6.800 12"/></svg><svg class="ic" style="left:1061px;top:7px;stroke-width:1.467;color:#c8c8c8;" width="12" height="12" viewBox="0 0 16 16" preserveAspectRatio="none"><path d="M8 2 A6 6 0 1 1 3.500 12 L2 14 V8 A6 6 0 0 1 8 2 Z"/><path d="M5.500 7 H10.500"/><path d="M5.500 9.500 H8.500"/></svg><svg class="ic" style="left:1087px;top:7px;stroke-width:1.467;color:#c8c8c8;" width="9" height="12" viewBox="0 0 12 16" preserveAspectRatio="none"><path d="M2 2.500 L10.500 8 L2 13.500 Z"/></svg><div class="btn" style="left:1110px;width:51px;"><svg class="ic" style="left:7px;top:4px;stroke-width:1.711;color:#c8c8c8;" width="9" height="10" viewBox="0 0 14 14" preserveAspectRatio="none"><circle cx="7" cy="4.300" r="2.500"/><path d="M1.800 12.500 C2.300 9 4.500 8.300 7 8.300 C9.500 8.300 11.700 9 12.200 12.500 Z"/></svg><span class="t" style="left:21.5px;top:5px;font-size:8.7px">Share</span></div><div class="btn" style="left:1167px;width:71px;"><svg class="ic" style="left:6px;top:4px;stroke-width:1.540;color:#c8c8c8;" width="10" height="10" viewBox="0 0 14 14" preserveAspectRatio="none"><path d="M7 1.200 C9.500 3 10 6 9.500 9.500 H4.500 C4 6 4.500 3 7 1.200 Z"/><path d="M4.500 7.500 L2 10 V12 H4.500"/><path d="M9.500 7.500 L12 10 V12 H9.500"/><path d="M5.500 11.500 H8.500"/></svg><span class="t" style="left:20.5px;top:5px;font-size:8.9px">Publish</span><svg class="ic" style="left:57px;top:7px;stroke-width:1.467;color:#c8c8c8;" width="6" height="4" viewBox="0 0 8 5" preserveAspectRatio="none"><path d="M1 1 L4 4 L7 1"/></svg></div></div><div class="side"><svg class="ic" style="left:6px;top:4.5px;stroke-width:1.257;color:#c8c8c8;" width="14" height="14" viewBox="0 0 16 16" preserveAspectRatio="none"><path d="M8 2 V14 M2 8 H14"/></svg><svg class="ic" style="left:6px;top:32px;stroke-width:1.257;color:#c8c8c8;" width="14" height="14" viewBox="0 0 16 16" preserveAspectRatio="none"><path d="M3.5 2.500 H9.500 L12.500 5.500 V13.500 H3.500 Z"/><path d="M9.500 2.500 V5.500 H12.500"/></svg><svg class="ic" style="left:6px;top:58px;stroke-width:1.257;color:#c8c8c8;" width="14" height="14" viewBox="0 0 16 16" preserveAspectRatio="none"><path d="M1.500 4 H11"/><path d="M4.500 8 H14.500"/><path d="M4.500 12 H14.500"/></svg><svg class="ic" style="left:6px;top:92.4px;stroke-width:1.257;color:#c8c8c8;" width="14" height="14" viewBox="0 0 16 16" preserveAspectRatio="none"><path d="M8 1.500 L14 4.800 V11.200 L8 14.500 L2 11.200 V4.800 Z"/><path d="M2 4.800 L8 8 L14 4.800"/><path d="M8 8 V14.500"/><path d="M5 3.200 L11 6.400"/></svg><svg class="ic" style="left:6px;top:118.4px;stroke-width:1.257;color:#c8c8c8;" width="14" height="14" viewBox="0 0 16 16" preserveAspectRatio="none"><path d="M4.500 1.500 C5.800 3.500 6.500 4.500 6.500 5.700 A2 2 0 0 1 2.500 5.700 C2.500 4.500 3.200 3.500 4.500 1.500 Z"/><path d="M11.500 1.500 C12.800 3.500 13.500 4.500 13.500 5.700 A2 2 0 0 1 9.500 5.700 C9.500 4.500 10.200 3.500 11.500 1.500 Z"/><path d="M8 8.500 C9.300 10.500 10 11.500 10 12.700 A2 2 0 0 1 6 12.700 C6 11.500 6.700 10.500 8 8.500 Z"/></svg><svg class="ic" style="left:6px;top:145.3px;stroke-width:1.257;color:#c8c8c8;" width="14" height="14" viewBox="0 0 16 16" preserveAspectRatio="none"><rect x="4" y="3.500" width="10.500" height="10.500" rx="1.500"/><path d="M4 12 L8 8.500 L11 11 L12.500 10 L14.500 11.800"/><path d="M1.500 10.500 L1.500 5 L4 2.500 L5.500 1.500"/><circle cx="7" cy="6.300" r=".8"/></svg><svg class="ic" style="left:6px;top:172px;stroke-width:1.257;color:#c8c8c8;" width="14" height="14" viewBox="0 0 16 16" preserveAspectRatio="none"><ellipse cx="8" cy="4" rx="5.500" ry="2.300"/><path d="M2.500 4 V12 C2.500 13.300 5 14.300 8 14.300 C11 14.300 13.500 13.300 13.500 12 V4"/><path d="M2.500 8 C2.500 9.300 5 10.300 8 10.300 C11 10.300 13.500 9.300 13.500 8"/></svg><svg class="ic" style="left:6px;top:198.3px;stroke-width:1.257;color:#c8c8c8;" width="14" height="14" viewBox="0 0 16 16" preserveAspectRatio="none"><path d="M8 1.500 V6"/><path d="M3.500 11 V7.500 Q3.500 6 5 6 H11 Q12.500 6 12.500 7.500 V9.500"/><circle cx="3.500" cy="12.700" r="1.500"/><path d="M11 11 L14 14 M14 11 L11 14"/></svg><svg class="ic" style="left:6px;top:225px;stroke-width:1.257;color:#c8c8c8;" width="14" height="14" viewBox="0 0 16 16" preserveAspectRatio="none"><circle cx="8" cy="5" r="3"/><path d="M2.500 14 C3 10.500 5 9.500 8 9.500 C11 9.500 13 10.500 13.500 14 Z"/></svg><svg class="ic" style="left:6px;top:251px;stroke-width:1.257;color:#c8c8c8;" width="14" height="14" viewBox="0 0 16 16" preserveAspectRatio="none"><path d="M1.500 7 H14.500 L13 13.500 H3 Z"/><path d="M5 7 L6.500 2 M11 7 L9.500 2"/><path d="M4.500 10 H11.500"/></svg><svg class="ic" style="left:6px;top:277px;stroke-width:1.257;color:#c8c8c8;" width="14" height="14" viewBox="0 0 16 16" preserveAspectRatio="none"><rect x="2" y="2" width="5" height="5" rx="1"/><rect x="9" y="2" width="5" height="5" rx="1"/><rect x="2" y="9" width="5" height="5" rx="1"/><path d="M11.500 9.200 V13.800 M9.200 11.500 H13.800"/></svg><svg class="ic" style="left:6px;top:303.6px;stroke-width:1.257;color:#c8c8c8;" width="14" height="14" viewBox="0 0 16 16" preserveAspectRatio="none"><path d="M1 9 H3.500 L5.500 4 L8 12.500 L10 6.500 L11.500 10 L12.500 9 H15"/></svg><div class="abs" style="left:0;top:82.5px;width:26px;height:1px;background:#2b2b2b"></div><div class="abs" style="left:0;top:165.5px;width:26px;height:1px;background:#2b2b2b"></div><svg class="ic" style="left:6px;top:532.6px;stroke-width:1.257;stroke:#989898;color:#989898;" width="14" height="14" viewBox="0 0 16 16" preserveAspectRatio="none"><path d="M8 1.500 L9.800 3.200 L12.300 2.900 L12.600 5.400 L14.700 6.800 L13.400 9 L14.200 11.300 L11.900 12.200 L11 14.500 L8.600 13.800 L6.400 15 L5 13 L2.600 12.500 L2.900 10 L1.300 8.200 L3 6.400 L2.700 3.900 L5.200 3.700 L6.200 1.500 Z" transform="translate(0,-.3)"/><circle cx="8" cy="8" r="1.800"/></svg><svg class="ic" style="left:6px;top:558.7px;stroke-width:1.257;stroke:#989898;color:#989898;" width="14" height="14" viewBox="0 0 16 16" preserveAspectRatio="none"><path d="M10 2.500 A6 6 0 1 0 13.700 6.500"/><path d="M6.300 6.500 A1.800 1.800 0 1 1 8 8.500 V9.800"/><circle cx="8" cy="12" r=".4"/><path d="M13 .8 L13.500 2.500 L15.200 3 L13.500 3.500 L13 5.200 L12.500 3.500 L10.800 3 L12.500 2.500 Z" fill="currentColor" stroke="none"/></svg><svg class="ic" style="left:6px;top:585.6px;stroke-width:1.257;stroke:#989898;color:#989898;" width="14" height="14" viewBox="0 0 16 16" preserveAspectRatio="none"><rect x="2.500" y="2.500" width="11" height="11" rx="1"/><path d="M5 8 L7.300 10.300 L11.300 5.700"/></svg><svg class="ic" style="left:6px;top:612.2px;stroke-width:1.257;stroke:#989898;color:#989898;" width="14" height="14" viewBox="0 0 16 16" preserveAspectRatio="none"><circle cx="7" cy="7" r="4.500"/><path d="M10.500 10.500 L14.500 14.500"/><path d="M5 6 A2.500 2.500 0 0 1 7.500 4.800"/></svg><svg class="ic" style="left:6px;top:639.8px;stroke-width:1.257;stroke:#989898;color:#989898;" width="14" height="14" viewBox="0 0 16 16" preserveAspectRatio="none"><path d="M2 4.500 H4 L5 3 H8 L9 4.500 H11 V7 L14.500 5 V13 L11 11 V13.500 H2 V11 H3.500 V9 H2 Z"/></svg></div><div class="crumbs"><svg class="ic" style="left:9px;top:6px;stroke-width:1.250;stroke:#9c9c9c;color:#9c9c9c;" width="8" height="8" viewBox="0 0 10 10" preserveAspectRatio="none"><rect x="1.500" y="1.500" width="7" height="7" rx=".5"/><path d="M1.500 3.200 H8.500" stroke-width="1.600"/></svg><span class="t" style="left:21.3px;top:5.7px;font-size:8.8px;">Body</span><svg class="ic" style="left:60px;top:6px;stroke-width:1.250;stroke:#9c9c9c;color:#9c9c9c;" width="8" height="8" viewBox="0 0 10 10" preserveAspectRatio="none"><rect x="1.500" y="1.500" width="7" height="7" rx=".8"/></svg><span class="t" style="left:72.0px;top:5.7px;font-size:8.8px;">Section</span><svg class="ic" style="left:119px;top:6px;stroke-width:1.250;stroke:#9c9c9c;color:#9c9c9c;" width="8" height="8" viewBox="0 0 10 10" preserveAspectRatio="none"><rect x="1.500" y="1.500" width="7" height="7" rx=".8"/></svg><span class="t" style="left:132.5px;top:5.7px;font-size:8.8px;">Container</span><svg class="ic" style="left:188.8px;top:6px;stroke-width:1.250;stroke:#9c9c9c;color:#9c9c9c;" width="8" height="8" viewBox="0 0 10 10" preserveAspectRatio="none"><rect x="1.500" y="1.500" width="7" height="7" rx=".8"/></svg><span class="t" style="left:201.0px;top:5.7px;font-size:8.8px;">Projects component</span><svg class="ic" style="left:296.8px;top:6px;stroke-width:1.250;stroke:#9c9c9c;color:#9c9c9c;" width="8" height="8" viewBox="0 0 10 10" preserveAspectRatio="none"><ellipse cx="5" cy="3" rx="3.200" ry="1.400"/><path d="M1.800 3 V7.200 C1.800 8 3.200 8.600 5 8.600 C6.800 8.600 8.200 8 8.200 7.200 V3"/><path d="M1.800 5.200 C1.800 6 3.200 6.600 5 6.600 C6.800 6.600 8.200 6 8.200 5.200"/></svg><span class="t" style="left:309.0px;top:5.7px;font-size:8.8px;">Project list wrapper</span><svg class="ic" style="left:401.8px;top:6px;stroke-width:1.250;stroke:#9c9c9c;color:#9c9c9c;" width="8" height="8" viewBox="0 0 10 10" preserveAspectRatio="none"><path d="M0.500 3 H2 M0.500 5 H2 M0.500 7 H2"/><ellipse cx="6.200" cy="3.200" rx="2.600" ry="1.200"/><path d="M3.600 3.200 V7 C3.600 7.800 4.800 8.300 6.200 8.300 C7.600 8.300 8.800 7.800 8.800 7 V3.200"/><path d="M3.600 5.200 C3.600 6 4.800 6.400 6.200 6.400 C7.600 6.400 8.800 6 8.800 5.200"/></svg><span class="t" style="left:414.7px;top:5.7px;font-size:8.8px;">Project list</span><svg class="ic" style="left:472.8px;top:6px;stroke-width:1.250;stroke:#9c9c9c;color:#9c9c9c;" width="8" height="8" viewBox="0 0 10 10" preserveAspectRatio="none"><path d="M0.300 5 H2.200"/><ellipse cx="6.200" cy="4" rx="2.600" ry="1.200"/><path d="M3.600 4 V6.300 C3.600 7.100 4.800 7.600 6.200 7.600 C7.600 7.600 8.800 7.100 8.800 6.300 V4"/></svg><span class="t" style="left:486.6px;top:5.7px;font-size:8.8px;">Projects item</span><svg class="ic" style="left:554px;top:6px;stroke-width:1.250;stroke:#9c9c9c;color:#9c9c9c;" width="8" height="8" viewBox="0 0 10 10" preserveAspectRatio="none"><rect x="1.500" y="1.500" width="7" height="7" rx=".8"/><path d="M1.500 7.500 L4 5 L8 8.500"/><circle cx="3.500" cy="3.500" r=".6"/></svg><span class="t" style="left:567.0px;top:5.7px;font-size:8.8px;">Image</span><svg class="ic" style="left:46.0px;top:0;stroke:#343434;stroke-width:1" width="6" height="21" viewBox="0 0 6 21"><path d="M1 0 L5 10.5 L1 21"/></svg><svg class="ic" style="left:105.6px;top:0;stroke:#343434;stroke-width:1" width="6" height="21" viewBox="0 0 6 21"><path d="M1 0 L5 10.5 L1 21"/></svg><svg class="ic" style="left:174.4px;top:0;stroke:#343434;stroke-width:1" width="6" height="21" viewBox="0 0 6 21"><path d="M1 0 L5 10.5 L1 21"/></svg><svg class="ic" style="left:283.0px;top:0;stroke:#343434;stroke-width:1" width="6" height="21" viewBox="0 0 6 21"><path d="M1 0 L5 10.5 L1 21"/></svg><svg class="ic" style="left:388.7px;top:0;stroke:#343434;stroke-width:1" width="6" height="21" viewBox="0 0 6 21"><path d="M1 0 L5 10.5 L1 21"/></svg><svg class="ic" style="left:459.0px;top:0;stroke:#343434;stroke-width:1" width="6" height="21" viewBox="0 0 6 21"><path d="M1 0 L5 10.5 L1 21"/></svg><svg class="ic" style="left:540.0px;top:0;stroke:#343434;stroke-width:1" width="6" height="21" viewBox="0 0 6 21"><path d="M1 0 L5 10.5 L1 21"/></svg><svg class="ic" style="left:597.0px;top:0;stroke:#343434;stroke-width:1" width="6" height="21" viewBox="0 0 6 21"><path d="M1 0 L5 10.5 L1 21"/></svg></div><div class="panel"><div class="abs" style="left:0;top:-1px;width:182px;height:661px"><div class="t" style="left:5.3px;top:9.4px;font-size:9.1px;color:#f2f2f2">Style</div><div class="t" style="left:38px;top:9.4px;font-size:9.1px;color:#b9b9b9">Settings</div><div class="t" style="left:83px;top:9.4px;font-size:9.2px;color:#b9b9b9">Interactions</div><div class="hr" style="top:26px"></div><div class="abs" style="left:0;top:26px;width:33px;height:1px;background:#8a8a8a"></div><svg class="ic" style="left:7px;top:33.5px;stroke-width:1.250;stroke:#cfcfcf;color:#cfcfcf;" width="8" height="8" viewBox="0 0 10 10" preserveAspectRatio="none"><rect x="1.500" y="1.500" width="7" height="7" rx=".8"/><path d="M1.500 7.500 L4 5 L8 8.500"/><circle cx="3.500" cy="3.500" r=".6"/></svg><div class="t" style="left:19px;top:33.5px;font-size:8.8px;color:#e6e6e6">Image Styles</div><svg class="ic" style="left:166.5px;top:37px;stroke-width:1.760;stroke:#9a9a9a;color:#9a9a9a;" width="7.5" height="2.5" viewBox="0 0 12 4" preserveAspectRatio="none"><circle cx="2" cy="2" r="1" fill="currentColor" stroke="none"/><circle cx="6" cy="2" r="1" fill="currentColor" stroke="none"/><circle cx="10" cy="2" r="1" fill="currentColor" stroke="none"/></svg><div class="abs" style="left:6px;top:48px;width:170px;height:18px;background:#2b2b2b;border-radius:3px"></div><svg class="ic" style="left:46.5px;top:52px;stroke-width:1.684;stroke:#7d7d7d;color:#7d7d7d;" width="9.5" height="10" viewBox="0 0 16 16" preserveAspectRatio="none"><path d="M8 1.500 L14 4.800 V11.200 L8 14.500 L2 11.200 V4.800 Z"/><path d="M2 4.800 L8 8 L14 4.800"/><path d="M8 8 V14.500"/><path d="M5 3.200 L11 6.400"/></svg><div class="t" style="left:60px;top:52.5px;font-size:9.4px;color:#7d7d7d">Create component</div><div class="hr" style="top:72.500px"></div><div class="t" style="left:6px;top:81.5px;font-size:9.2px;color:#cfcfcf">Style selector</div><div class="t" style="right:6px;top:81.5px;font-size:9px;color:#e3e3e3">Inheriting <span style="color:#e9a574">2 selectors</span></div><div class="abs" style="left:6px;top:96.500px;width:170px;height:23px;background:#191919;border-radius:3px;box-shadow:inset 0 0 0 1px #2b2b2b"></div><div class="abs" style="left:9px;top:98.500px;width:23px;height:19px;background:#2f2f2f;border-radius:3px"></div><svg class="ic" style="left:15px;top:103px;stroke-width:1.455;stroke:#c9c9c9;color:#c9c9c9;" width="11" height="9" viewBox="0 0 16 12" preserveAspectRatio="none"><path d="M2.500 3 V9.500 H12.500 V6.500"/><path d="M2.500 3 H9"/><path d="M0.800 11.200 H14.200"/><path d="M12.600 0.300 L13.300 2.100 L15.100 2.800 L13.300 3.500 L12.600 5.300 L11.900 3.500 L10.100 2.800 L11.900 2.100 Z" fill="currentColor" stroke="none"/></svg><div class="abs" style="left:35px;top:98.500px;width:34px;height:19px;background:#2c6fd9;border-radius:3px;color:#fff;font-size:9.4px;line-height:19px;text-align:center">Image</div><svg class="ic" style="left:155.5px;top:106px;stroke-width:1.486;stroke:#d5d5d5;color:#d5d5d5;" width="7" height="4.5" viewBox="0 0 8 5" preserveAspectRatio="none"><path d="M1 1 L4 4 L7 1"/></svg><div class="t" style="left:6px;top:124.500px;font-size:8.6px;color:#a9a9a9">1 on this page</div><div class="hr" style="top:140px"></div><div class="sec" style="top:147px">Spacing</div><svg class="ic" style="left:143.5px;top:147.5px;stroke-width:1.145;stroke:#a0a0a0;color:#a0a0a0;" width="11" height="11" viewBox="0 0 14 14" preserveAspectRatio="none"><path d="M2 1.500 H12" stroke-dasharray="1.500 1.200"/><path d="M2 12.500 H12" stroke-dasharray="1.500 1.200"/><path d="M1 7 H3.500 M10.500 7 H13"/><rect x="5.500" y="5.500" width="3" height="3" fill="currentColor"/></svg><svg class="ic" style="left:166px;top:151.5px;stroke-width:1.467;stroke:#bdbdbd;color:#bdbdbd;" width="6" height="3.5" viewBox="0 0 8 5" preserveAspectRatio="none"><path d="M1 1 L4 4 L7 1"/></svg><div class="abs" style="left:6px;top:168px;width:170px;height:85px;background:#2d2d2d;border-radius:3px;overflow:hidden"><svg class="abs" style="left:0;top:0" width="170" height="85" viewBox="0 0 170 85"><polygon points="0,0 170,0 143,19 27,19" fill="#313131"/><polygon points="0,85 170,85 143,66 27,66" fill="#2a2a2a"/><polygon points="0,0 27,19 27,66 0,85" fill="#2b2b2b"/><polygon points="170,0 143,19 143,66 170,85" fill="#292929"/><rect x="27.500" y="19.500" width="115" height="46" rx="2" fill="#2b2b2b" stroke="#1a1a1a"/><polygon points="28,20 142,20 115,38 55,38" fill="#2f2f2f"/><polygon points="28,65 142,65 115,47 55,47" fill="#282828"/><rect x="55" y="38" width="60" height="9.500" fill="#1c1c1c"/></svg><div class="t" style="left:4px;top:4px;font-size:4.6px;color:#9a9a9a;letter-spacing:.1px">MARGIN</div><div class="t" style="left:31px;top:23.5px;font-size:4.6px;color:#9a9a9a;letter-spacing:.1px">PADDING</div><div class="num" style="left:75px;top:5px">0</div><div class="num" style="left:75px;top:24.5px">0</div><div class="num" style="left:75px;top:50px">0</div><div class="num" style="left:75px;top:71px">0</div><div class="num" style="left:3px;top:37.5px">0</div><div class="num" style="left:31px;top:37.5px">0</div><div class="num" style="left:118px;top:37.5px">0</div><div class="num" style="left:146px;top:37.5px">0</div></div><div class="hr" style="top:259px"></div><div class="sec" style="top:269px">Size</div><svg class="ic" style="left:166px;top:273.5px;stroke-width:1.467;stroke:#bdbdbd;color:#bdbdbd;" width="6" height="3.5" viewBox="0 0 8 5" preserveAspectRatio="none"><path d="M1 1 L4 4 L7 1"/></svg><div class="lbl" style="top:293px">Width</div><div class="fld d" style="left:46px;top:290px;width:41px;color:#6f6f6f">Auto<span class="abs" style="right:5px;color:#6f6f6f">-</span></div><div class="lbl" style="left:93px;top:293px">Height</div><div class="fld d" style="left:134px;top:290px;width:42px;color:#6f6f6f">Auto<span class="abs" style="right:5px;color:#6f6f6f">-</span></div><div class="lbl" style="top:317px">Min W</div><div class="lbl o" style="top:341px">Max W</div><div class="hr" style="top:357px"></div><div class="lbl b" style="top:371px">Ratio</div><div class="hr" style="top:384px"></div><div class="lbl" style="top:396px;color:#9c9c9c">Overflow</div><div class="lbl b" style="top:420px">Fit</div><div class="hr" style="top:437px"></div><div class="sec" style="top:451px">Position</div><div class="lbl" style="top:475px;color:#9c9c9c">Position</div><div class="abs" style="left:6px;top:492px;width:170px;height:18px;background:#1a1a1a;border-radius:3px;box-shadow:inset 0 0 0 1px #2a2a2a"></div><div class="hr" style="top:517px"></div><div class="sec" style="top:531px">Typography</div><div class="lbl o" style="top:555px">Font</div><div class="fld" style="left:46px;top:552px;width:130px">Inter<svg class="ic" style="left:119px;top:5px;stroke-width:1.350;stroke:#9a9a9a;color:#9a9a9a;" width="4" height="8" viewBox="0 0 6 10" preserveAspectRatio="none"><path d="M1 3.500 L3 1.500 L5 3.500"/><path d="M1 6.500 L3 8.500 L5 6.500"/></svg></div><div class="lbl" style="top:579px">Weight</div><div class="fld" style="left:46px;top:576px;width:130px;color:#a5a5a5">400 - Normal<svg class="ic" style="left:119px;top:5px;stroke-width:1.350;stroke:#9a9a9a;color:#9a9a9a;" width="4" height="8" viewBox="0 0 6 10" preserveAspectRatio="none"><path d="M1 3.500 L3 1.500 L5 3.500"/><path d="M1 6.500 L3 8.500 L5 6.500"/></svg></div><div class="lbl o" style="top:603px">Size</div><div class="fld d" style="left:46px;top:600px;width:41px;padding-left:3px">16<span class="abs" style="right:3px;font-size:6.5px;color:#777">PX</span></div><div class="lbl o" style="left:94px;top:603px">Height</div><div class="fld d" style="left:134px;top:600px;width:42px;padding-left:3px;color:#bdbdbd">1.3<span class="abs" style="right:5px;color:#666">-</span></div><div class="lbl o" style="top:627px">Color</div><div class="abs" style="left:46px;top:624.500px;width:130px;height:18px;background:#171717;border-radius:3px;box-shadow:inset 0 0 0 1px #262626"></div><div class="abs" style="left:46px;top:624.500px;width:18px;height:18px;background:#e7e2dc;border-radius:2px"></div><div class="t" style="left:67px;top:629.500px;font-size:8.6px;color:#e2e2e2">Seashell</div><div class="lbl" style="top:651px">Align</div><div class="abs" style="left:46px;top:649px;width:130px;height:18px;background:#2e2e2e;border-radius:3px"></div><div class="abs" style="left:46px;top:649px;width:32px;height:18px;background:#171717;border-radius:3px"></div><div class="abs" style="left:58.0px;top:653.5px;width:8px;height:1px;background:#b0b0b0"></div><div class="abs" style="left:58.0px;top:656.5px;width:5px;height:1px;background:#b0b0b0"></div><div class="abs" style="left:90.5px;top:653.5px;width:8px;height:1px;background:#b0b0b0"></div><div class="abs" style="left:92.0px;top:656.5px;width:5px;height:1px;background:#b0b0b0"></div><div class="abs" style="left:123.0px;top:653.5px;width:8px;height:1px;background:#b0b0b0"></div><div class="abs" style="left:126.0px;top:656.5px;width:5px;height:1px;background:#b0b0b0"></div><div class="abs" style="left:155.5px;top:653.5px;width:8px;height:1px;background:#b0b0b0"></div><div class="abs" style="left:155.5px;top:656.5px;width:8px;height:1px;background:#b0b0b0"></div></div></div></div></div><div class="dd" style="left:1612px;top:510px;width:224px;height:324px;border-radius:6px"><div class="hl" style="top:141.3px;height:27.2px"></div><div class="it" style="top:2.65px;padding-left:34.5px;font-size:13.6px;line-height:27.7px;height:27.7px">Auto</div><div class="it" style="top:30.35px;padding-left:34.5px;font-size:13.6px;line-height:27.7px;height:27.7px">Anamorphic (2.39:1)</div><div class="it" style="top:58.05px;padding-left:34.5px;font-size:13.6px;line-height:27.7px;height:27.7px">Univisium/Netflix (2:1)</div><div class="it" style="top:85.75px;padding-left:34.5px;font-size:13.6px;line-height:27.7px;height:27.7px">Widescreen (16:9)</div><div class="it" style="top:113.45px;padding-left:34.5px;font-size:13.6px;line-height:27.7px;height:27.7px">Landscape (3:2)</div><div class="it" style="top:141.15px;padding-left:34.5px;font-size:13.6px;line-height:27.7px;height:27.7px">Portrait (2:3)</div><div class="it" style="top:168.85px;padding-left:34.5px;font-size:13.6px;line-height:27.7px;height:27.7px">Square (1:1)</div><div class="it" style="top:196.55px;padding-left:34.5px;font-size:13.6px;line-height:27.7px;height:27.7px">Custom</div><svg class="ic" style="left:15px;top:151.5px;stroke-width:1.556;stroke:#f0f0f0;color:#f0f0f0;" width="9" height="7" viewBox="0 0 10 8" preserveAspectRatio="none"><path d="M1 4.300 L3.700 7 L9 1"/></svg><div class="ln" style="top:233px"></div><div class="ds" style="left:13.5px;top:246px;font-size:13.4px;line-height:18.4px;width:210.5px">Ideal for elements that work<br>well in taller designs, like<br>mobile layouts or columnar<br>sections.</div></div><div class="dd" style="left:307px;top:600px;width:131px;height:205px;border-radius:4px"><div class="hl" style="top:17.7px;height:15.8px"></div><div class="it" style="top:1.15px;padding-left:20.5px;font-size:8px;line-height:16.3px;height:16.3px">Auto</div><div class="it" style="top:17.45px;padding-left:20.5px;font-size:8px;line-height:16.3px;height:16.3px">Anamorphic (2.39:1)</div><div class="it" style="top:33.75px;padding-left:20.5px;font-size:8px;line-height:16.3px;height:16.3px">Univisium/Netflix (2:1)</div><div class="it" style="top:50.05px;padding-left:20.5px;font-size:8px;line-height:16.3px;height:16.3px">Widescreen (16:9)</div><div class="it" style="top:66.35px;padding-left:20.5px;font-size:8px;line-height:16.3px;height:16.3px">Landscape (3:2)</div><div class="it" style="top:82.65px;padding-left:20.5px;font-size:8px;line-height:16.3px;height:16.3px">Portrait (2:3)</div><div class="it" style="top:98.95px;padding-left:20.5px;font-size:8px;line-height:16.3px;height:16.3px">Square (1:1)</div><div class="it" style="top:115.25px;padding-left:20.5px;font-size:8px;line-height:16.3px;height:16.3px">Custom</div><svg class="ic" style="left:9px;top:23.5px;stroke-width:1.636;stroke:#f0f0f0;color:#f0f0f0;" width="5.5" height="4.2" viewBox="0 0 10 8" preserveAspectRatio="none"><path d="M1 4.300 L3.700 7 L9 1"/></svg><div class="ln" style="top:136px"></div><div class="ds" style="left:8px;top:144px;font-size:7.9px;line-height:10.9px;width:123px">Ideal for cinematic experiences<br>requiring ultra-wide<br>dimensions. Suitable for film<br>trailers or high-quality video<br>content.</div></div></body></html>
